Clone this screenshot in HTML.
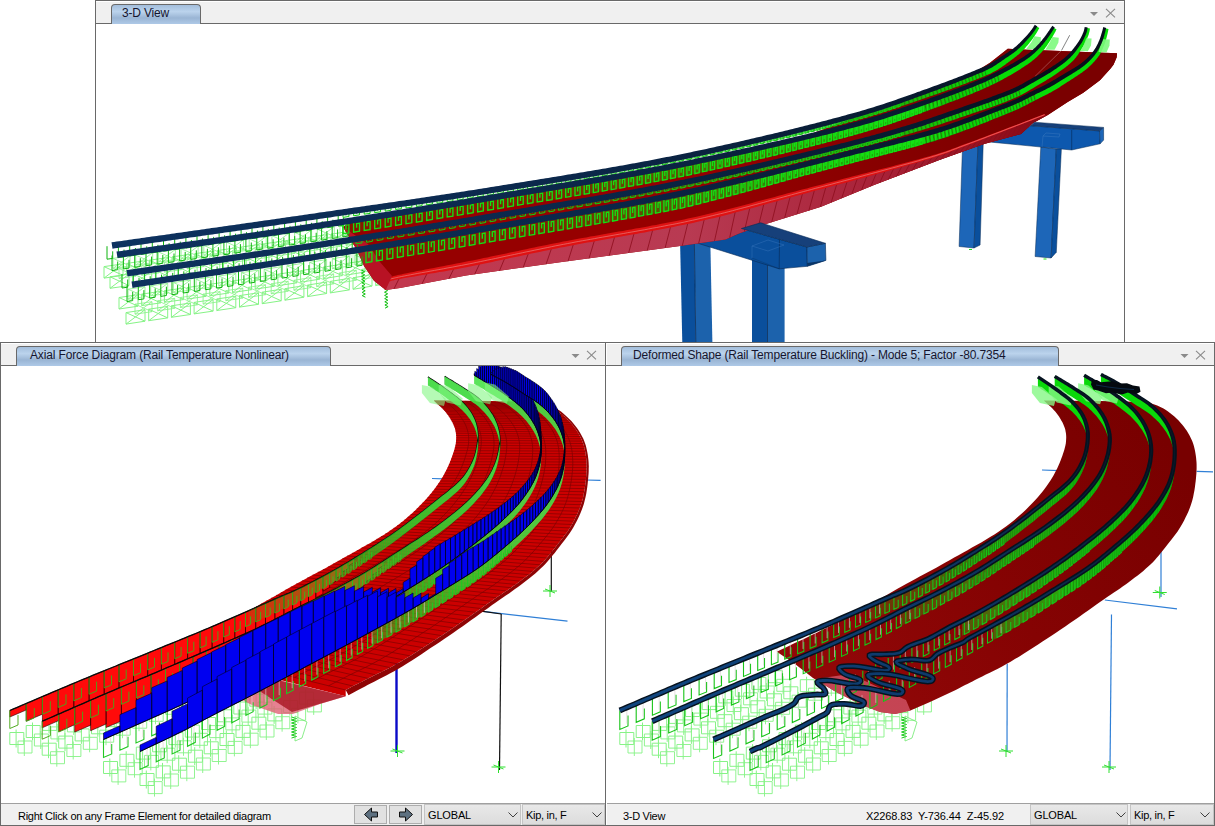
<!DOCTYPE html>
<html><head><meta charset="utf-8"><title>3-D View</title>
<style>
html,body{margin:0;padding:0;background:#fff;}
body{width:1215px;height:826px;overflow:hidden;position:relative;font-family:"Liberation Sans",sans-serif;}
.abs{position:absolute;}
.tbar{position:absolute;background:#f0f0f0;border-top:1px solid #fff;box-sizing:border-box;}
.line{position:absolute;background:#696969;}
.tab{position:absolute;box-sizing:border-box;height:20px;border:1px solid #696969;border-bottom:none;border-radius:4px 4px 0 0;
 background:linear-gradient(to bottom,#a3bedc 0%,#bbd3ec 35%,#9ab5d4 68%,#aec9e7 100%);
 font-size:12px;line-height:17px;color:#15152e;white-space:nowrap;}
.tab span{position:absolute;top:0;}
.sb{position:absolute;background:#f0f0f0;border-top:1px solid #a0a0a0;box-sizing:border-box;height:22px;font-size:11px;line-height:21px;color:#000;white-space:nowrap;}
.sb span{position:absolute;top:1.5px;}
.btn{position:absolute;box-sizing:border-box;background:#e1e1e1;border:1px solid #adadad;height:19px;top:1px;}
.combo{position:absolute;box-sizing:border-box;background:linear-gradient(#e8e8e8,#dcdcdc);border:1px solid #c4c4c4;height:21px;top:0px;font-size:11px;line-height:20px;}
.combo span{position:absolute;left:3px;top:0px;}
svg{position:absolute;left:0;top:0;}
</style></head>
<body>
<div class="tbar" style="left:96px;top:1px;width:1028px;height:22px;"></div>
<div class="line" style="left:95px;top:0;width:1030px;height:1px;"></div>
<div class="line" style="left:95px;top:0;width:1.4px;height:342px;"></div>
<div class="line" style="left:1124px;top:0;width:1px;height:342px;"></div>
<div class="line" style="left:96px;top:23px;width:1028px;height:1px;"></div>
<div class="tab" style="left:111px;top:4px;width:90px;"><span style="left:10px;letter-spacing:-0.18px;">3-D View</span></div>
<div class="tbar" style="left:1px;top:343px;width:604px;height:22px;"></div>
<div class="tbar" style="left:607px;top:343px;width:607px;height:22px;"></div>
<div class="line" style="left:0;top:342px;width:1215px;height:1px;"></div>
<div class="line" style="left:0;top:365px;width:1215px;height:1px;"></div>
<div class="line" style="left:0;top:342px;width:1.4px;height:484px;"></div>
<div class="line" style="left:605px;top:342px;width:1.4px;height:484px;"></div>
<div class="line" style="left:1214px;top:342px;width:1px;height:484px;"></div>
<div class="tab" style="left:16px;top:346px;width:315px;"><span style="left:13px;letter-spacing:-0.145px;">Axial Force Diagram (Rail Temperature Nonlinear)</span></div>
<div class="tab" style="left:621px;top:346px;width:438px;"><span style="left:11px;letter-spacing:-0.17px;">Deformed Shape (Rail Temperature Buckling) - Mode 5; Factor -80.7354</span></div>
<div class="sb" style="left:1px;top:803px;width:604px;"><span style="left:17px;letter-spacing:-0.27px;">Right Click on any Frame Element for detailed diagram</span><div class="btn" style="left:353px;width:33px;"></div><div class="btn" style="left:388px;width:33px;"></div><div class="combo" style="left:423px;width:97px;"><span style="letter-spacing:-0.17px;">GLOBAL</span></div><div class="combo" style="left:521px;width:83px;"><span style="letter-spacing:-0.29px;">Kip, in, F</span></div></div>
<div class="sb" style="left:607px;top:803px;width:607px;"><span style="left:16px;letter-spacing:-0.3px;">3-D View</span><span style="left:259px;letter-spacing:-0.1px;">X2268.83&nbsp; Y-736.44&nbsp; Z-45.92</span><div class="combo" style="left:423px;width:98px;"><span style="letter-spacing:-0.17px;">GLOBAL</span></div><div class="combo" style="left:523px;width:84px;"><span style="letter-spacing:-0.29px;">Kip, in, F</span></div></div>
<div class="line" style="left:0;top:825px;width:1215px;height:1px;"></div>
<svg width="1215" height="826" viewBox="0 0 1215 826">
<defs><clipPath id="ct"><rect x="97" y="24" width="1027" height="318"/></clipPath><clipPath id="cl"><rect x="2" y="366" width="603" height="437"/></clipPath><clipPath id="cr"><rect x="607" y="366" width="607" height="437"/></clipPath></defs>
<g clip-path="url(#ct)"><path d="M104.0 266.6L123.0 263.9V275.4L104.0 278.1ZM104.0 266.6L123.0 275.4M123.0 263.9L104.0 278.1M126.7 263.4L145.7 260.7V272.2L126.7 274.9ZM126.7 263.4L145.7 272.2M145.7 260.7L126.7 274.9M149.4 260.2L168.4 257.5V269.0L149.4 271.7ZM149.4 260.2L168.4 269.0M168.4 257.5L149.4 271.7M172.1 256.9L191.1 254.2V265.7L172.1 268.4ZM172.1 256.9L191.1 265.7M191.1 254.2L172.1 268.4M194.8 253.7L213.8 251.0V262.5L194.8 265.2ZM194.8 253.7L213.8 262.5M213.8 251.0L194.8 265.2M217.5 250.5L236.5 247.8V259.3L217.5 262.0ZM217.5 250.5L236.5 259.3M236.5 247.8L217.5 262.0M240.2 247.2L259.2 244.5V256.0L240.2 258.7ZM240.2 247.2L259.2 256.0M259.2 244.5L240.2 258.7M262.9 244.0L281.9 241.2V252.7L262.9 255.5ZM262.9 244.0L281.9 252.7M281.9 241.2L262.9 255.5M285.6 240.7L304.6 237.9V249.4L285.6 252.2ZM285.6 240.7L304.6 249.4M304.6 237.9L285.6 252.2M308.3 237.4L327.3 234.6V246.1L308.3 248.9ZM308.3 237.4L327.3 246.1M327.3 234.6L308.3 248.9M331.0 234.1L350.0 231.4V242.9L331.0 245.6ZM331.0 234.1L350.0 242.9M350.0 231.4L331.0 245.6" fill="none" stroke="#86f386" stroke-width="1" opacity="1"/><path d="M113.0 258.4L130.0 255.9V265.9L113.0 268.4ZM113.0 258.4L130.0 265.9M130.0 255.9L113.0 268.4M135.7 255.1L152.7 252.7V262.7L135.7 265.1ZM135.7 255.1L152.7 262.7M152.7 252.7L135.7 265.1M158.4 251.9L175.4 249.5V259.5L158.4 261.9ZM158.4 251.9L175.4 259.5M175.4 249.5L158.4 261.9M181.1 248.7L198.1 246.2V256.2L181.1 258.7ZM181.1 248.7L198.1 256.2M198.1 246.2L181.1 258.7M203.8 245.4L220.8 243.0V253.0L203.8 255.4ZM203.8 245.4L220.8 253.0M220.8 243.0L203.8 255.4M226.5 242.2L243.5 239.8V249.8L226.5 252.2ZM226.5 242.2L243.5 249.8M243.5 239.8L226.5 252.2M249.2 238.9L266.2 236.5V246.5L249.2 248.9ZM249.2 238.9L266.2 246.5M266.2 236.5L249.2 248.9M271.9 235.7L288.9 233.2V243.2L271.9 245.7ZM271.9 235.7L288.9 243.2M288.9 233.2L271.9 245.7M294.6 232.4L311.6 229.9V239.9L294.6 242.4ZM294.6 232.4L311.6 239.9M311.6 229.9L294.6 242.4M317.3 229.1L334.3 226.6V236.6L317.3 239.1ZM317.3 229.1L334.3 236.6M334.3 226.6L317.3 239.1M340.0 225.8L357.0 223.3V233.3L340.0 235.8ZM340.0 225.8L357.0 233.3M357.0 223.3L340.0 235.8" fill="none" stroke="#86f386" stroke-width="1" opacity="0.8"/><path d="M110.0 276.8L129.0 274.1V285.6L110.0 288.3ZM110.0 276.8L129.0 285.6M129.0 274.1L110.0 288.3M132.7 273.6L151.7 270.9V282.4L132.7 285.1ZM132.7 273.6L151.7 282.4M151.7 270.9L132.7 285.1M155.4 270.3L174.4 267.7V279.2L155.4 281.8ZM155.4 270.3L174.4 279.2M174.4 267.7L155.4 281.8M178.1 267.1L197.1 264.5V276.0L178.1 278.6ZM178.1 267.1L197.1 276.0M197.1 264.5L178.1 278.6M200.8 263.9L219.8 261.3V272.8L200.8 275.4ZM200.8 263.9L219.8 272.8M219.8 261.3L200.8 275.4M223.5 260.7L242.5 258.0V269.5L223.5 272.2ZM223.5 260.7L242.5 269.5M242.5 258.0L223.5 272.2M246.2 257.5L265.2 254.7V266.2L246.2 269.0ZM246.2 257.5L265.2 266.2M265.2 254.7L246.2 269.0M268.9 254.2L287.9 251.3V262.8L268.9 265.7ZM268.9 254.2L287.9 262.8M287.9 251.3L268.9 265.7M291.6 250.8L310.6 247.9V259.4L291.6 262.3ZM291.6 250.8L310.6 259.4M310.6 247.9L291.6 262.3M314.3 247.3L333.3 244.4V255.9L314.3 258.8ZM314.3 247.3L333.3 255.9M333.3 244.4L314.3 258.8M337.0 243.8L356.0 240.8V252.3L337.0 255.3ZM337.0 243.8L356.0 252.3M356.0 240.8L337.0 255.3M359.7 240.2L378.7 237.2V248.7L359.7 251.7ZM359.7 240.2L378.7 248.7M378.7 237.2L359.7 251.7" fill="none" stroke="#86f386" stroke-width="1" opacity="1"/><path d="M119.0 268.5L136.0 266.1V276.1L119.0 278.5ZM119.0 268.5L136.0 276.1M136.0 266.1L119.0 278.5M141.7 265.3L158.7 262.9V272.9L141.7 275.3ZM141.7 265.3L158.7 272.9M158.7 262.9L141.7 275.3M164.4 262.1L181.4 259.7V269.7L164.4 272.1ZM164.4 262.1L181.4 269.7M181.4 259.7L164.4 272.1M187.1 258.9L204.1 256.5V266.5L187.1 268.9ZM187.1 258.9L204.1 266.5M204.1 256.5L187.1 268.9M209.8 255.7L226.8 253.3V263.3L209.8 265.7ZM209.8 255.7L226.8 263.3M226.8 253.3L209.8 265.7M232.5 252.4L249.5 250.0V260.0L232.5 262.4ZM232.5 252.4L249.5 260.0M249.5 250.0L232.5 262.4M255.2 249.2L272.2 246.7V256.7L255.2 259.2ZM255.2 249.2L272.2 256.7M272.2 246.7L255.2 259.2M277.9 245.8L294.9 243.3V253.3L277.9 255.8ZM277.9 245.8L294.9 253.3M294.9 243.3L277.9 255.8M300.6 242.4L317.6 239.8V249.8L300.6 252.4ZM300.6 242.4L317.6 249.8M317.6 239.8L300.6 252.4M323.3 238.9L340.3 236.3V246.3L323.3 248.9ZM323.3 238.9L340.3 246.3M340.3 236.3L323.3 248.9M346.0 235.4L363.0 232.7V242.7L346.0 245.4ZM346.0 235.4L363.0 242.7M363.0 232.7L346.0 245.4" fill="none" stroke="#86f386" stroke-width="1" opacity="0.8"/><path d="M119.0 297.5L138.0 294.7V306.2L119.0 309.0ZM119.0 297.5L138.0 306.2M138.0 294.7L119.0 309.0M141.7 294.1L160.7 291.4V302.9L141.7 305.6ZM141.7 294.1L160.7 302.9M160.7 291.4L141.7 305.6M164.4 290.8L183.4 288.1V299.6L164.4 302.3ZM164.4 290.8L183.4 299.6M183.4 288.1L164.4 302.3M187.1 287.6L206.1 284.8V296.3L187.1 299.1ZM187.1 287.6L206.1 296.3M206.1 284.8L187.1 299.1M209.8 284.3L228.8 281.5V293.0L209.8 295.8ZM209.8 284.3L228.8 293.0M228.8 281.5L209.8 295.8M232.5 281.0L251.5 278.2V289.7L232.5 292.5ZM232.5 281.0L251.5 289.7M251.5 278.2L232.5 292.5M255.2 277.6L274.2 274.8V286.3L255.2 289.1ZM255.2 277.6L274.2 286.3M274.2 274.8L255.2 289.1M277.9 274.2L296.9 271.3V282.8L277.9 285.7ZM277.9 274.2L296.9 282.8M296.9 271.3L277.9 285.7M300.6 270.7L319.6 267.7V279.2L300.6 282.2ZM300.6 270.7L319.6 279.2M319.6 267.7L300.6 282.2M323.3 267.2L342.3 264.1V275.6L323.3 278.7ZM323.3 267.2L342.3 275.6M342.3 264.1L323.3 278.7M346.0 263.6L365.0 260.5V272.0L346.0 275.1ZM346.0 263.6L365.0 272.0M365.0 260.5L346.0 275.1M368.7 259.9L387.7 256.8V268.3L368.7 271.4ZM368.7 259.9L387.7 268.3M387.7 256.8L368.7 271.4" fill="none" stroke="#86f386" stroke-width="1" opacity="1"/><path d="M128.0 289.2L145.0 286.7V296.7L128.0 299.2ZM128.0 289.2L145.0 296.7M145.0 286.7L128.0 299.2M150.7 285.8L167.7 283.4V293.4L150.7 295.8ZM150.7 285.8L167.7 293.4M167.7 283.4L150.7 295.8M173.4 282.5L190.4 280.1V290.1L173.4 292.5ZM173.4 282.5L190.4 290.1M190.4 280.1L173.4 292.5M196.1 279.3L213.1 276.8V286.8L196.1 289.3ZM196.1 279.3L213.1 286.8M213.1 276.8L196.1 289.3M218.8 276.0L235.8 273.5V283.5L218.8 286.0ZM218.8 276.0L235.8 283.5M235.8 273.5L218.8 286.0M241.5 272.6L258.5 270.1V280.1L241.5 282.6ZM241.5 272.6L258.5 280.1M258.5 270.1L241.5 282.6M264.2 269.3L281.2 266.7V276.7L264.2 279.3ZM264.2 269.3L281.2 276.7M281.2 266.7L264.2 279.3M286.9 265.8L303.9 263.2V273.2L286.9 275.8ZM286.9 265.8L303.9 273.2M303.9 263.2L286.9 275.8M309.6 262.3L326.6 259.6V269.6L309.6 272.3ZM309.6 262.3L326.6 269.6M326.6 259.6L309.6 272.3M332.3 258.7L349.3 256.0V266.0L332.3 268.7ZM332.3 258.7L349.3 266.0M349.3 256.0L332.3 268.7M355.0 255.1L372.0 252.4V262.4L355.0 265.1ZM355.0 255.1L372.0 262.4M372.0 252.4L355.0 265.1" fill="none" stroke="#86f386" stroke-width="1" opacity="0.8"/><path d="M126.0 312.6L145.0 309.7V321.2L126.0 324.1ZM126.0 312.6L145.0 321.2M145.0 309.7L126.0 324.1M148.7 309.2L167.7 306.4V317.9L148.7 320.7ZM148.7 309.2L167.7 317.9M167.7 306.4L148.7 320.7M171.4 305.8L190.4 303.0V314.5L171.4 317.3ZM171.4 305.8L190.4 314.5M190.4 303.0L171.4 317.3M194.1 302.4L213.1 299.6V311.1L194.1 313.9ZM194.1 302.4L213.1 311.1M213.1 299.6L194.1 313.9M216.8 299.0L235.8 296.2V307.7L216.8 310.5ZM216.8 299.0L235.8 307.7M235.8 296.2L216.8 310.5M239.5 295.6L258.5 292.8V304.3L239.5 307.1ZM239.5 295.6L258.5 304.3M258.5 292.8L239.5 307.1M262.2 292.2L281.2 289.3V300.8L262.2 303.7ZM262.2 292.2L281.2 300.8M281.2 289.3L262.2 303.7M284.9 288.7L303.9 285.7V297.2L284.9 300.2ZM284.9 288.7L303.9 297.2M303.9 285.7L284.9 300.2M307.6 285.1L326.6 282.0V293.5L307.6 296.6ZM307.6 285.1L326.6 293.5M326.6 282.0L307.6 296.6M330.3 281.4L349.3 278.4V289.9L330.3 292.9ZM330.3 281.4L349.3 289.9M349.3 278.4L330.3 292.9M353.0 277.8L372.0 274.6V286.1L353.0 289.3ZM353.0 277.8L372.0 286.1M372.0 274.6L353.0 289.3M375.7 274.0L394.7 270.9V282.4L375.7 285.5ZM375.7 274.0L394.7 282.4M394.7 270.9L375.7 285.5" fill="none" stroke="#86f386" stroke-width="1" opacity="1"/><path d="M135.0 304.2L152.0 301.7V311.7L135.0 314.2ZM135.0 304.2L152.0 311.7M152.0 301.7L135.0 314.2M157.7 300.8L174.7 298.3V308.3L157.7 310.8ZM157.7 300.8L174.7 308.3M174.7 298.3L157.7 310.8M180.4 297.5L197.4 294.9V304.9L180.4 307.5ZM180.4 297.5L197.4 304.9M197.4 294.9L180.4 307.5M203.1 294.1L220.1 291.6V301.6L203.1 304.1ZM203.1 294.1L220.1 301.6M220.1 291.6L203.1 304.1M225.8 290.7L242.8 288.1V298.1L225.8 300.7ZM225.8 290.7L242.8 298.1M242.8 288.1L225.8 300.7M248.5 287.3L265.5 284.7V294.7L248.5 297.3ZM248.5 287.3L265.5 294.7M265.5 284.7L248.5 297.3M271.2 283.8L288.2 281.2V291.2L271.2 293.8ZM271.2 283.8L288.2 291.2M288.2 281.2L271.2 293.8M293.9 280.3L310.9 277.6V287.6L293.9 290.3ZM293.9 280.3L310.9 287.6M310.9 277.6L293.9 290.3M316.6 276.6L333.6 273.9V283.9L316.6 286.6ZM316.6 276.6L333.6 283.9M333.6 273.9L316.6 286.6M339.3 273.0L356.3 270.2V280.2L339.3 283.0ZM339.3 273.0L356.3 280.2M356.3 270.2L339.3 283.0M362.0 269.3L379.0 266.5V276.5L362.0 279.3ZM362.0 269.3L379.0 276.5M379.0 266.5L362.0 279.3" fill="none" stroke="#86f386" stroke-width="1" opacity="0.8"/><path d="M361.4 270 364.6 271.6 361.5 273.2 364.7 274.8 361.6 276.4 364.8 278 361.7 279.6 364.9 281.2 361.8 282.8 365 284.4 361.9 286 365.1 287.6 362 289.2 365.2 290.8 362.1 292.4 365.3 294 362.2 295.6 365.4 297.2" fill="none" stroke="#10c010" stroke-width="1"/><path d="M384.4 289 387.6 290.6 384.5 292.2 387.7 293.8 384.6 295.4 387.8 297 384.7 298.6 387.9 300.2 384.8 301.8 388 303.4 384.9 305 388.1 306.6 385 308.2" fill="none" stroke="#10c010" stroke-width="1"/><path d="M680.1 243 694.4 243 695.8 343 682.3 343.0Z" fill="#0a4f9c"/><path d="M694.4 242 710.4 245 712.4 343 695.8 343.0Z" fill="#1c62ac"/><path d="M694.4 244 695.8 343.0" fill="none" stroke="#062a55" stroke-width="0.8"/><path d="M752 258 767.5 262 767.5 343 752 343.0Z" fill="#0a4f9c"/><path d="M767.5 262 784.6 266 784.6 343 767.5 343.0Z" fill="#1c62ac"/><path d="M767.5 264 767.5 343.0" fill="none" stroke="#062a55" stroke-width="0.8"/><path d="M690 240 725.5 238 739 233.5 741.4 228.5 806.9 247 807.4 266.3 779.2 268.8 700.3 244.0Z" fill="#0a4f9c" stroke="#062a55" stroke-width="0.6"/><path d="M806.9 247 825.4 243.3 825.9 260.4 807.4 266.3Z" fill="#1c62ac" stroke="#062a55" stroke-width="0.6"/><path d="M807.4 266.3 825.9 260.4 807 263.0Z" fill="#0a3566"/><path d="M779.5 239.5 779.2 268.8" fill="none" stroke="#062a55" stroke-width="0.6"/><path d="M752 258 779.2 268.8" fill="none" stroke="#062a55" stroke-width="0.5" opacity="0.6"/><path d="M752 246 768 240 784 245 768 251 752 246 752 258.0" fill="none" stroke="#3b78bd" stroke-width="0.6" opacity="0.7"/><path d="M962.6 144 978 144 974 248 959.1 246.5Z" fill="#1d66b8" stroke="#062a55" stroke-width="0.5"/><path d="M978 144 983.2 144 980.1 245 974 248.0Z" fill="#0a4f9c" stroke="#062a55" stroke-width="0.5"/><path d="M1040.8 147 1056.3 149 1051.1 258 1035.1 256.5Z" fill="#1d66b8" stroke="#062a55" stroke-width="0.5"/><path d="M1056.3 149 1061.4 148.5 1056.3 252.3 1051.1 258.0Z" fill="#0a4f9c" stroke="#062a55" stroke-width="0.5"/><path d="M985 140 1026.4 128 1030.6 125.7 1099.5 130.9 1100.1 143.8 1071.7 150 991.5 142.2Z" fill="#0d58ae" stroke="#062a55" stroke-width="0.5"/><path d="M1099.5 130.9 1103.6 127.8 1103.6 140.1 1100.1 143.8Z" fill="#1d66b8" stroke="#062a55" stroke-width="0.5"/><path d="M1071.7 130 1071.7 150.0" fill="none" stroke="#062a55" stroke-width="0.6"/><path d="M1043 136 1046 133 1060 134 1059 137 1043 136 1042 147.0" fill="none" stroke="#3b78bd" stroke-width="0.6" opacity="0.8"/><path d="M969 249.5h3M1043.5 259h3" stroke="#20e020" stroke-width="1.2"/><path d="M343 227 351.9 220.4 354.4 220 356.9 219.7 359.4 219.3 361.9 218.9 364.3 218.5 366.8 218.1 369.3 217.7 371.8 217.3 374.3 216.9 376.8 216.5 379.3 216.1 381.8 215.7 384.3 215.3 386.8 214.9 389.3 214.5 391.8 214.1 394.3 213.7 396.8 213.3 399.3 212.8 401.8 212.4 404.3 212 406.8 211.6 409.3 211.2 411.8 210.8 414.3 210.4 416.8 210 419.3 209.6 421.8 209.2 424.3 208.8 426.8 208.4 429.3 208 431.8 207.5 434.3 207.1 436.8 206.7 439.3 206.3 441.8 205.9 444.3 205.5 446.8 205.1 449.3 204.7 451.8 204.2 454.3 203.8 456.8 203.4 459.2 203 461.7 202.6 464.2 202.2 466.7 201.8 469.2 201.4 471.7 200.9 474.2 200.5 476.7 200.1 479.1 199.7 481.6 199.3 484.1 198.9 486.6 198.4 489.1 198 491.5 197.6 494 197.2 496.5 196.8 499 196.4 501.4 196 503.9 195.5 506.4 195.1 508.9 194.7 511.4 194.3 513.9 193.9 516.4 193.5 518.8 193.1 521.3 192.7 523.8 192.2 526.3 191.8 528.8 191.4 531.3 191 533.8 190.6 536.3 190.2 538.7 189.8 541.2 189.4 543.7 189 546.2 188.5 548.7 188.1 551.2 187.7 553.7 187.3 556.1 186.9 558.6 186.5 561.1 186.1 563.6 185.7 566.1 185.3 568.6 184.8 571.1 184.4 573.5 184 576 183.6 578.5 183.2 581 182.8 583.5 182.4 585.9 181.9 588.4 181.5 590.9 181.1 593.4 180.7 595.8 180.3 598.3 179.8 600.8 179.4 603.3 179 605.7 178.6 608.2 178.1 610.7 177.7 613.1 177.3 615.6 176.8 618.1 176.4 620.5 176 623 175.5 625.5 175.1 627.9 174.7 630.4 174.2 632.8 173.8 635.3 173.3 637.7 172.9 640.2 172.4 642.6 172 645.1 171.5 647.5 171.1 650 170.6 652.4 170.2 654.9 169.7 657.3 169.2 659.7 168.8 662.2 168.3 664.6 167.8 667 167.4 669.5 166.9 671.9 166.4 674.3 165.9 676.7 165.5 679.2 165 681.6 164.5 684 164 686.5 163.5 689 163 691.6 162.5 694.1 161.9 696.7 161.4 699.2 160.9 701.8 160.3 704.4 159.8 707 159.2 709.6 158.7 712.2 158.1 714.8 157.6 717.4 157 720 156.5 722.7 155.9 725.3 155.3 727.9 154.8 730.6 154.2 733.2 153.6 735.9 153 738.5 152.5 741.2 151.9 743.8 151.3 746.5 150.7 749.1 150.1 751.8 149.5 754.4 148.9 757 148.3 759.7 147.8 762.3 147.2 764.9 146.6 767.5 146 770.2 145.4 772.8 144.8 775.4 144.2 777.9 143.6 780.5 143 783.1 142.4 785.6 141.8 788.2 141.2 790.7 140.6 793.2 140 795.8 139.4 798.3 138.8 882 107 884.5 106.2 887 105.4 889.4 104.6 891.7 103.8 894.1 103 896.4 102.2 898.7 101.4 900.9 100.6 903.1 99.8 905.3 99 907.5 98.2 909.7 97.5 911.9 96.7 914 95.9 916.2 95.1 918.3 94.3 920.5 93.6 922.6 92.8 924.8 92 927.4 91.1 930 90.1 932.5 89.2 935.1 88.3 937.6 87.3 940.2 86.4 942.7 85.5 945.1 84.5 947.6 83.6 950 82.7 952.4 81.8 954.7 80.9 957 80 959.2 79.1 961.4 78.2 963.5 77.4 965.6 76.6 967.6 75.8 969.5 75 971 74.4 990 62.8 1007.8 48.8 1117 53.2 1116.7 57.2 1113.5 64.7 1110.4 68.8 1100 80.2 1083.3 92.7 1067.7 102.1 1048.2 114.7 1033 123 1021 134 984 144 940 159.7 874 185 821 206.7 767.5 223.5 739 233.5 725.5 239.4 680 246 560 262.3 466 275.4 400 288 385.7 290 374 280.8 363.9 265.7 357.2 250.6Z" fill="#960000"/><linearGradient id="gd" gradientUnits="userSpaceOnUse" x1="700" y1="0" x2="1050" y2="0"><stop offset="0" stop-color="#7a0000" stop-opacity="0"/><stop offset="1" stop-color="#7a0000" stop-opacity="1"/></linearGradient><path d="M343 227 351.9 220.4 354.4 220 356.9 219.7 359.4 219.3 361.9 218.9 364.3 218.5 366.8 218.1 369.3 217.7 371.8 217.3 374.3 216.9 376.8 216.5 379.3 216.1 381.8 215.7 384.3 215.3 386.8 214.9 389.3 214.5 391.8 214.1 394.3 213.7 396.8 213.3 399.3 212.8 401.8 212.4 404.3 212 406.8 211.6 409.3 211.2 411.8 210.8 414.3 210.4 416.8 210 419.3 209.6 421.8 209.2 424.3 208.8 426.8 208.4 429.3 208 431.8 207.5 434.3 207.1 436.8 206.7 439.3 206.3 441.8 205.9 444.3 205.5 446.8 205.1 449.3 204.7 451.8 204.2 454.3 203.8 456.8 203.4 459.2 203 461.7 202.6 464.2 202.2 466.7 201.8 469.2 201.4 471.7 200.9 474.2 200.5 476.7 200.1 479.1 199.7 481.6 199.3 484.1 198.9 486.6 198.4 489.1 198 491.5 197.6 494 197.2 496.5 196.8 499 196.4 501.4 196 503.9 195.5 506.4 195.1 508.9 194.7 511.4 194.3 513.9 193.9 516.4 193.5 518.8 193.1 521.3 192.7 523.8 192.2 526.3 191.8 528.8 191.4 531.3 191 533.8 190.6 536.3 190.2 538.7 189.8 541.2 189.4 543.7 189 546.2 188.5 548.7 188.1 551.2 187.7 553.7 187.3 556.1 186.9 558.6 186.5 561.1 186.1 563.6 185.7 566.1 185.3 568.6 184.8 571.1 184.4 573.5 184 576 183.6 578.5 183.2 581 182.8 583.5 182.4 585.9 181.9 588.4 181.5 590.9 181.1 593.4 180.7 595.8 180.3 598.3 179.8 600.8 179.4 603.3 179 605.7 178.6 608.2 178.1 610.7 177.7 613.1 177.3 615.6 176.8 618.1 176.4 620.5 176 623 175.5 625.5 175.1 627.9 174.7 630.4 174.2 632.8 173.8 635.3 173.3 637.7 172.9 640.2 172.4 642.6 172 645.1 171.5 647.5 171.1 650 170.6 652.4 170.2 654.9 169.7 657.3 169.2 659.7 168.8 662.2 168.3 664.6 167.8 667 167.4 669.5 166.9 671.9 166.4 674.3 165.9 676.7 165.5 679.2 165 681.6 164.5 684 164 686.5 163.5 689 163 691.6 162.5 694.1 161.9 696.7 161.4 699.2 160.9 701.8 160.3 704.4 159.8 707 159.2 709.6 158.7 712.2 158.1 714.8 157.6 717.4 157 720 156.5 722.7 155.9 725.3 155.3 727.9 154.8 730.6 154.2 733.2 153.6 735.9 153 738.5 152.5 741.2 151.9 743.8 151.3 746.5 150.7 749.1 150.1 751.8 149.5 754.4 148.9 757 148.3 759.7 147.8 762.3 147.2 764.9 146.6 767.5 146 770.2 145.4 772.8 144.8 775.4 144.2 777.9 143.6 780.5 143 783.1 142.4 785.6 141.8 788.2 141.2 790.7 140.6 793.2 140 795.8 139.4 798.3 138.8 882 107 884.5 106.2 887 105.4 889.4 104.6 891.7 103.8 894.1 103 896.4 102.2 898.7 101.4 900.9 100.6 903.1 99.8 905.3 99 907.5 98.2 909.7 97.5 911.9 96.7 914 95.9 916.2 95.1 918.3 94.3 920.5 93.6 922.6 92.8 924.8 92 927.4 91.1 930 90.1 932.5 89.2 935.1 88.3 937.6 87.3 940.2 86.4 942.7 85.5 945.1 84.5 947.6 83.6 950 82.7 952.4 81.8 954.7 80.9 957 80 959.2 79.1 961.4 78.2 963.5 77.4 965.6 76.6 967.6 75.8 969.5 75 971 74.4 990 62.8 1007.8 48.8 1117 53.2 1116.7 57.2 1113.5 64.7 1110.4 68.8 1100 80.2 1083.3 92.7 1067.7 102.1 1048.2 114.7 1033 123 1021 134 984 144 940 159.7 874 185 821 206.7 767.5 223.5 739 233.5 725.5 239.4 680 246 560 262.3 466 275.4 400 288 385.7 290 374 280.8 363.9 265.7 357.2 250.6Z" fill="url(#gd)"/><linearGradient id="gw" gradientUnits="userSpaceOnUse" x1="400" y1="0" x2="1040" y2="0"><stop offset="0" stop-color="#c2384e"/><stop offset="0.45" stop-color="#b83a52"/><stop offset="0.75" stop-color="#a82238"/><stop offset="1" stop-color="#8a0a14"/></linearGradient><path d="M388 279.5 389.3 279.2 390.6 278.9 391.8 278.7 393 278.4 394.2 278.1 395.4 277.8 396.8 277.5 398.2 277.2 399.8 276.9 401.6 276.5 404.3 276 407.3 275.4 410.5 274.8 414.1 274.1 417.8 273.4 421.7 272.7 425.8 272 430.1 271.2 434.4 270.4 438.9 269.6 443.4 268.8 447.9 267.9 452.5 267.1 457 266.2 461.6 265.4 466 264.5 469.6 263.8 473.2 263.1 476.8 262.3 480.4 261.6 484.1 260.8 487.9 260 491.6 259.3 495.4 258.5 499.2 257.7 503 256.8 506.9 256 510.8 255.2 514.7 254.4 518.7 253.5 522.7 252.7 526.7 251.8 530.8 251 534.9 250.1 539 249.3 543.1 248.4 547.3 247.6 551.5 246.7 555.7 245.8 560 245 563.7 244.3 567.4 243.6 571.1 242.9 575 242.1 578.8 241.4 582.7 240.7 586.7 240 590.7 239.3 594.7 238.6 598.7 237.8 602.8 237.1 606.9 236.4 611 235.7 615.2 234.9 619.3 234.2 623.5 233.5 627.6 232.7 631.8 232 635.9 231.3 640.1 230.5 644.3 229.8 648.4 229 652.5 228.2 656.6 227.5 660.7 226.7 664.8 225.9 668.8 225.1 672.8 224.4 676.8 223.6 680.7 222.8 684.6 222 688.5 221.1 692.3 220.3 696 219.5 700.3 218.5 704.4 217.6 708.6 216.6 712.7 215.6 716.7 214.6 720.7 213.7 724.7 212.7 728.6 211.7 732.6 210.7 736.5 209.6 740.3 208.6 744.2 207.6 748.1 206.6 751.9 205.5 755.8 204.5 759.7 203.4 763.6 202.4 767.5 201.3 771.4 200.2 775.4 199.2 779.4 198.1 783.4 197 787.5 195.9 791.6 194.8 795.8 193.6 800 192.5 803.7 191.5 807.5 190.5 811.4 189.5 815.3 188.4 819.4 187.4 823.5 186.3 827.7 185.2 831.9 184.1 836.2 182.9 840.5 181.8 844.9 180.6 849.3 179.5 853.7 178.3 858 177.2 862.4 176 866.8 174.8 871.1 173.7 875.5 172.5 879.7 171.4 884 170.2 888.1 169.1 892.2 168 896.3 166.9 900.2 165.8 904.1 164.7 907.9 163.7 911.5 162.7 915.1 161.7 918.5 160.7 921.8 159.7 925 158.8 928 157.9 930.8 157.1 933.5 156.3 936 155.5 939.6 154.3 942.8 153.3 945.5 152.4 948.1 151.5 950.5 150.6 952.8 149.7 955.2 148.8 957.8 147.8 960.7 146.7 964 145.5 966.9 144.4 970.1 143.2 973.3 142 976.8 140.7 980.3 139.4 984 138 987.8 136.5 991.7 135 995.7 133.5 999.7 132 1003.8 130.4 1007.9 128.8 1012.1 127.2 1016.3 125.6 1020.4 124 1024.6 122.4 1028.7 120.8 1032.8 119.3 1036.8 117.7 1040.8 116.2 1044.7 114.7 1048.2 114.7 1033 123 1021 134 984 144 940 159.7 874 185 821 206.7 767.5 223.5 739 233.5 725.5 239.4 680 246 560 262.3 466 275.4 400 288 385.7 290.0Z" fill="url(#gw)"/><path d="M400.0 276.8L394.0 288.8M428.0 271.6L422.0 283.8M454.9 266.6L448.9 278.7M480.7 261.5L474.7 274.2M505.5 256.3L499.5 270.7M529.2 251.3L523.2 267.4M552.1 246.6L546.1 264.2M574.0 242.3L568.0 261.2M595.0 238.5L589.0 258.4M615.2 234.9L609.2 255.6M634.6 231.5L628.6 253.0M653.2 228.1L647.2 250.5M671.1 224.7L665.1 248.0M688.3 221.2L682.3 245.7M704.7 217.5L698.7 243.3M720.5 213.7L714.5 241.0M735.7 209.8L729.7 237.6M750.3 206.0L744.3 231.6M764.3 202.2L758.3 226.7M777.7 198.5L771.7 222.2M790.6 195.0L784.6 218.1M803.0 191.7L797.0 214.2M814.9 188.6L808.9 210.5M826.3 185.6L820.3 206.9M837.2 182.7L831.2 202.5M847.7 179.9L841.7 198.2M857.8 177.2L851.8 194.1M867.5 174.6L861.5 190.1M876.8 172.2L870.8 186.3M885.7 169.8L879.7 182.8M894.3 167.4L888.3 179.5M902.5 165.2L896.5 176.4M910.4 163.0L904.4 173.3M918.1 160.8L912.1 170.4M925.6 158.7L919.6 167.5M932.8 156.5L926.8 164.8M939.8 154.3L933.8 162.1M946.6 152.0L940.6 159.5M953.1 149.6L947.1 157.2M959.5 147.2L953.5 154.9M965.7 144.9L959.7 152.7M971.6 142.7L965.6 150.6M977.4 140.5L971.4 148.5M983.0 138.3L977.0 146.5M988.5 136.3L982.5 144.5M993.8 134.2L987.8 143.0M998.9 132.3L992.9 141.6M1003.8 130.4L997.8 140.3M1008.6 128.5L1002.6 139.0M1013.3 126.7L1007.3 137.7M1017.8 125.0L1011.8 136.5M1022.2 123.3L1016.2 135.3M1026.4 121.7L1020.4 134.2" stroke="#8c0c1c" stroke-width="0.8" fill="none"/><path d="M388.4 281.5 389.8 281.2 391 280.9 392.2 280.6 393.4 280.4 394.6 280.1 395.9 279.8 397.2 279.6 398.7 279.3 400.3 279 402 278.6 404.7 278.1 407.7 277.6 411 277 414.5 276.4 418.2 275.7 422.1 275.1 426.3 274.4 430.5 273.6 434.9 272.9 439.3 272.1 443.9 271.4 448.4 270.6 453 269.8 457.6 268.9 462.1 268.1 466.5 267.2 470.1 266.5 473.7 265.8 477.3 265 481 264.3 484.7 263.5 488.4 262.7 492.2 261.9 495.9 261.1 499.8 260.3 503.6 259.5 507.5 258.7 511.4 257.8 515.3 257 519.3 256.2 523.3 255.3 527.3 254.5 531.3 253.6 535.4 252.8 539.5 251.9 543.7 251 547.8 250.2 552 249.3 556.3 248.5 560.5 247.6 564.2 246.9 567.9 246.2 571.6 245.5 575.5 244.8 579.3 244.1 583.2 243.3 587.2 242.6 591.1 241.9 595.2 241.2 599.2 240.5 603.3 239.7 607.4 239 611.5 238.3 615.6 237.6 619.8 236.8 623.9 236.1 628.1 235.3 632.2 234.6 636.4 233.9 640.6 233.1 644.7 232.4 648.9 231.6 653 230.8 657.1 230.1 661.2 229.3 665.3 228.5 669.3 227.7 673.3 226.9 677.3 226.1 681.2 225.3 685.1 224.5 689 223.7 692.8 222.9 696.6 222.1 700.8 221.1 705 220.1 709.2 219.1 713.3 218.2 717.3 217.2 721.4 216.2 725.3 215.2 729.3 214.2 733.2 213.1 737.1 212.1 741 211.1 744.8 210 748.7 209 752.6 207.9 756.4 206.9 760.3 205.8 764.2 204.7 768.1 203.6 772 202.5 776 201.4 780 200.3 784 199.2 788.1 198.1 792.2 197 796.4 195.8 800.6 194.7 804.3 193.7 808 192.7 811.9 191.6 815.9 190.6 819.9 189.5 824.1 188.4 828.2 187.3 832.5 186.1 836.8 185 841.1 183.8 845.4 182.7 849.8 181.5 854.2 180.3 858.6 179.1 862.9 177.9 867.3 176.8 871.6 175.5 875.9 174.3 880.2 173.1 884.4 172 888.6 170.8 892.7 169.6 896.7 168.5 900.7 167.3 904.5 166.2 908.3 165.1 911.9 164.1 915.5 163 918.9 162 922.2 161 925.3 160.1 928.3 159.2 931.2 158.3 933.8 157.4 936.3 156.6 940 155.4 943.1 154.3 945.9 153.4 948.4 152.4 950.8 151.5 953.2 150.6 955.6 149.7 958.2 148.7 961.1 147.6 964.3 146.4 967.3 145.3 970.4 144.1 973.7 142.9 977.1 141.5 980.7 140.2 984.3 138.8 988.1 137.3 992 135.8 996 134.3 1000 132.7 1004.1 131.1 1008.2 129.5 1012.4 127.9 1016.5 126.3 1020.7 124.7 1024.8 123 1029 121.4 1033 119.9 1037.1 118.3 1041 116.8 1044.9 115.3 1044.5 114.1 1040.6 115.6 1036.6 117.1 1032.6 118.6 1028.5 120.2 1024.3 121.8 1020.2 123.4 1016 124.9 1011.8 126.5 1007.7 128.1 1003.5 129.7 999.4 131.2 995.4 132.8 991.4 134.3 987.5 135.7 983.7 137.2 980 138.6 976.5 139.9 973 141.2 969.7 142.4 966.6 143.5 963.7 144.6 960.4 145.8 957.5 146.9 954.9 147.9 952.5 148.8 950.1 149.7 947.7 150.5 945.2 151.4 942.4 152.3 939.3 153.3 935.7 154.4 933.1 155.1 930.5 155.9 927.6 156.7 924.6 157.6 921.4 158.5 918.1 159.4 914.7 160.3 911.2 161.3 907.5 162.3 903.7 163.3 899.8 164.3 895.9 165.3 891.8 166.4 887.7 167.4 883.5 168.5 879.3 169.6 875 170.7 870.6 171.8 866.3 172.9 861.9 174.1 857.5 175.2 853.1 176.3 848.7 177.5 844.4 178.6 840 179.8 835.7 180.9 831.4 182 827.1 183.1 823 184.2 818.8 185.3 814.8 186.3 810.8 187.3 806.9 188.4 803.1 189.3 799.4 190.3 795.2 191.4 791 192.5 786.9 193.6 782.8 194.7 778.7 195.8 774.7 196.9 770.8 197.9 766.8 199 762.9 200 759 201.1 755.2 202.1 751.3 203.2 747.4 204.2 743.6 205.2 739.7 206.2 735.8 207.2 731.9 208.2 728 209.2 724.1 210.2 720.1 211.1 716.1 212.1 712.1 213.1 708 214.1 703.9 215 699.7 216 695.4 216.9 691.7 217.8 687.9 218.6 684.1 219.4 680.2 220.2 676.3 221 672.3 221.8 668.3 222.6 664.3 223.3 660.2 224.1 656.1 224.9 652 225.6 647.9 226.4 643.8 227.2 639.6 227.9 635.5 228.6 631.3 229.4 627.2 230.1 623 230.9 618.8 231.6 614.7 232.3 610.6 233 606.4 233.8 602.3 234.5 598.3 235.2 594.2 235.9 590.2 236.6 586.2 237.4 582.3 238.1 578.3 238.8 574.5 239.5 570.6 240.2 566.9 240.9 563.1 241.6 559.5 242.4 555.2 243.2 551 244.1 546.8 244.9 542.6 245.8 538.4 246.6 534.3 247.5 530.2 248.3 526.2 249.2 522.1 250 518.1 250.9 514.2 251.7 510.2 252.5 506.3 253.4 502.5 254.2 498.6 255 494.8 255.8 491 256.6 487.3 257.4 483.6 258.1 479.9 258.9 476.2 259.7 472.6 260.4 469 261.1 465.5 261.8 461 262.7 456.5 263.5 452 264.4 447.4 265.3 442.9 266.2 438.4 267.1 434 267.9 429.6 268.8 425.4 269.6 421.3 270.4 417.4 271.1 413.6 271.9 410.1 272.6 406.9 273.2 403.9 273.8 401.2 274.4 399.4 274.8 397.8 275.1 396.3 275.5 395 275.8 393.7 276.1 392.5 276.4 391.3 276.7 390.1 276.9 388.9 277.2 387.6 277.5Z" fill="#df1212"/><path d="M388 279.5 389.3 279.2 390.6 278.9 391.8 278.7 393 278.4 394.2 278.1 395.4 277.8 396.8 277.5 398.2 277.2 399.8 276.9 401.6 276.5 404.3 276 407.3 275.4 410.5 274.8 414.1 274.1 417.8 273.4 421.7 272.7 425.8 272 430.1 271.2 434.4 270.4 438.9 269.6 443.4 268.8 447.9 267.9 452.5 267.1 457 266.2 461.6 265.4 466 264.5 469.6 263.8 473.2 263.1 476.8 262.3 480.4 261.6 484.1 260.8 487.9 260 491.6 259.3 495.4 258.5 499.2 257.7 503 256.8 506.9 256 510.8 255.2 514.7 254.4 518.7 253.5 522.7 252.7 526.7 251.8 530.8 251 534.9 250.1 539 249.3 543.1 248.4 547.3 247.6 551.5 246.7 555.7 245.8 560 245 563.7 244.3 567.4 243.6 571.1 242.9 575 242.1 578.8 241.4 582.7 240.7 586.7 240 590.7 239.3 594.7 238.6 598.7 237.8 602.8 237.1 606.9 236.4 611 235.7 615.2 234.9 619.3 234.2 623.5 233.5 627.6 232.7 631.8 232 635.9 231.3 640.1 230.5 644.3 229.8 648.4 229 652.5 228.2 656.6 227.5 660.7 226.7 664.8 225.9 668.8 225.1 672.8 224.4 676.8 223.6 680.7 222.8 684.6 222 688.5 221.1 692.3 220.3 696 219.5 700.3 218.5 704.4 217.6 708.6 216.6 712.7 215.6 716.7 214.6 720.7 213.7 724.7 212.7 728.6 211.7 732.6 210.7 736.5 209.6 740.3 208.6 744.2 207.6 748.1 206.6 751.9 205.5 755.8 204.5 759.7 203.4 763.6 202.4 767.5 201.3 771.4 200.2 775.4 199.2 779.4 198.1 783.4 197 787.5 195.9 791.6 194.8 795.8 193.6 800 192.5 803.7 191.5 807.5 190.5 811.4 189.5 815.3 188.4 819.4 187.4 823.5 186.3 827.7 185.2 831.9 184.1 836.2 182.9 840.5 181.8 844.9 180.6 849.3 179.5 853.7 178.3 858 177.2 862.4 176 866.8 174.8 871.1 173.7 875.5 172.5 879.7 171.4 884 170.2 888.1 169.1 892.2 168 896.3 166.9 900.2 165.8 904.1 164.7 907.9 163.7 911.5 162.7 915.1 161.7 918.5 160.7 921.8 159.7 925 158.8 928 157.9 930.8 157.1 933.5 156.3 936 155.5 939.6 154.3 942.8 153.3 945.5 152.4 948.1 151.5 950.5 150.6 952.8 149.7 955.2 148.8 957.8 147.8 960.7 146.7 964 145.5 966.9 144.4 970.1 143.2 973.3 142 976.8 140.7 980.3 139.4 984 138 987.8 136.5 991.7 135 995.7 133.5 999.7 132 1003.8 130.4 1007.9 128.8 1012.1 127.2 1016.3 125.6 1020.4 124 1024.6 122.4 1028.7 120.8 1032.8 119.3 1036.8 117.7 1040.8 116.2 1044.7 114.7" fill="none" stroke="#ea8c8c" stroke-width="0.7" opacity="0.85"/><path d="M741.4 228.5 760.7 222.8 825.4 243.3 806.9 247.0Z" fill="#16407a" stroke="#062a55" stroke-width="0.6"/><path d="M1030.6 125.7 1034.5 122.2 1103.6 127.4 1099.5 130.9Z" fill="#16407a" stroke="#062a55" stroke-width="0.5"/><path d="M343 227 357.2 250.6 363.9 265.7 374 280.8 385.7 290 392 276 380 262 368 244.0Z" fill="#b81224"/><linearGradient id="gg" gradientUnits="userSpaceOnUse" x1="350" y1="0" x2="980" y2="0"><stop offset="0" stop-color="#08d008" stop-opacity="0.1"/><stop offset="0.3" stop-color="#08d008" stop-opacity="0.16"/><stop offset="0.6" stop-color="#08d008" stop-opacity="0.55"/><stop offset="1" stop-color="#06dc06" stop-opacity="1"/></linearGradient><path d="M344.6 212.1 347.1 211.8 349.6 211.4 352.1 211.1 354.6 210.7 357.1 210.3 359.6 210 362 209.6 364.5 209.3 367 208.9 369.5 208.5 372 208.2 374.5 207.8 377 207.4 379.5 207.1 382 206.7 384.5 206.4 387 206 389.5 205.6 392 205.3 394.5 204.9 397 204.5 399.5 204.2 402 203.8 404.5 203.4 406.9 203.1 409.4 202.7 411.9 202.3 414.4 202 416.9 201.6 419.4 201.2 421.9 200.9 424.4 200.5 426.9 200.1 429.4 199.7 431.9 199.4 434.4 199 436.9 198.6 439.4 198.2 441.9 197.9 444.4 197.5 446.8 197.1 449.3 196.7 451.8 196.3 454.3 196 456.8 195.6 459.3 195.2 461.8 194.8 464.3 194.4 466.7 194 469.2 193.6 471.7 193.3 474.2 192.9 476.7 192.5 479.1 192.1 481.6 191.7 484.1 191.3 486.6 190.9 489.1 190.5 491.5 190.1 494 189.7 496.5 189.3 499 188.9 501.5 188.5 503.9 188.1 506.4 187.7 508.9 187.3 511.4 186.9 513.9 186.5 516.4 186.1 518.9 185.7 521.3 185.3 523.8 184.9 526.3 184.5 528.8 184.1 531.3 183.7 533.8 183.3 536.3 182.9 538.8 182.5 541.2 182.1 543.7 181.7 546.2 181.3 548.7 180.9 551.2 180.5 553.7 180.1 556.2 179.6 558.7 179.2 561.1 178.8 563.6 178.4 566.1 178 568.6 177.6 571.1 177.2 573.6 176.8 576 176.4 578.5 176 581 175.5 583.5 175.1 586 174.7 588.4 174.3 590.9 173.9 593.4 173.4 595.9 173 598.3 172.6 600.8 172.2 603.3 171.7 605.8 171.3 608.2 170.9 610.7 170.4 613.2 170 615.6 169.6 618.1 169.1 620.6 168.7 623 168.3 625.5 167.8 627.9 167.4 630.4 166.9 632.9 166.5 635.3 166 637.8 165.6 640.2 165.1 642.7 164.7 645.1 164.2 647.6 163.7 650 163.3 652.4 162.8 654.9 162.3 657.3 161.9 659.8 161.4 662.2 160.9 664.6 160.4 667.1 159.9 669.5 159.5 671.9 159 674.3 158.5 676.8 158 679.2 157.5 681.6 157 684 156.5 686.5 156 689 155.4 691.6 154.9 694.1 154.4 696.7 153.8 699.2 153.3 701.8 152.7 704.4 152.2 707 151.6 709.6 151 712.2 150.5 714.8 149.9 717.4 149.3 720.1 148.7 722.7 148.1 725.3 147.5 728 146.9 730.6 146.3 733.3 145.7 735.9 145.1 738.6 144.5 741.2 143.9 743.8 143.3 746.5 142.7 749.1 142.1 751.8 141.5 754.4 140.9 757.1 140.2 759.7 139.6 762.3 139 764.9 138.4 767.6 137.7 770.2 137.1 772.8 136.5 775.4 135.9 778 135.2 780.5 134.6 783.1 134 785.7 133.4 788.2 132.7 790.7 132.1 793.3 131.5 795.8 130.9 798.3 130.2 800.8 129.6 803.2 129 805.7 128.4 808.1 127.8 810.5 127.1 812.9 126.5 815.3 125.9 817.7 125.3 820 124.7 822.3 124.1 824.6 123.5 826.9 122.9 829.2 122.3 831.4 121.7 833.6 121.1 835.8 120.5 838 119.9 840.1 119.4 842.2 118.8 844.3 118.2 846.4 117.6 848.4 117.1 850.4 116.5 852.4 116 854.3 115.4 856.3 114.9 858.1 114.3 860 113.8 863 112.9 865.9 112.1 868.7 111.2 871.5 110.4 874.2 109.5 876.9 108.7 879.5 107.9 882 107 884.5 106.2 887 105.4 889.4 104.6 891.7 103.8 894.1 103 896.4 102.2 898.7 101.4 900.9 100.6 903.1 99.8 905.3 99 907.5 98.2 909.7 97.5 911.9 96.7 914 95.9 916.2 95.1 918.3 94.3 920.5 93.6 922.6 92.8 924.8 92 927.4 91.1 930 90.1 932.5 89.2 935.1 88.3 937.6 87.3 940.2 86.4 942.7 85.5 945.1 84.5 947.6 83.6 950 82.7 952.4 81.8 954.7 80.9 957 80 959.2 79.1 961.4 78.2 963.5 77.4 965.6 76.6 967.6 75.8 969.5 75 971 74.4 972.5 73.8 973.9 73.2 975.3 72.7 976.7 72.1 978 71.6 979.3 71 980.6 70.5 981.8 70 983.1 69.4 984.2 68.9 985.4 68.4 986.6 67.8 987.7 67.3 988.9 66.7 990 66.1 990.9 65.6 991.8 65.1 992.7 64.6 993.6 64.1 994.4 63.5 995.2 63 996 62.5 996.8 61.9 997.6 61.4 998.4 60.9 999.2 60.3 1000 59.8 1000.8 59.2 1001.6 58.7 1002.4 58.1 1003.2 57.6 1004 57 1004.9 56.5 1005.7 55.9 1006.6 55.4 1007.4 54.8 1008.2 54.3 1009.1 53.7 1009.9 53.1 1010.8 52.6 1011.6 52 1012.4 51.4 1013.2 50.8 1014 50.2 1014.8 49.6 1015.6 49 1016.3 48.4 1017 47.8 1017.7 47.2 1018.3 46.6 1019 46 1019.6 45.4 1020.3 44.7 1020.9 44.1 1021.5 43.5 1022.2 42.8 1022.8 42.2 1023.4 41.6 1023.9 41 1024.5 40.3 1025.1 39.7 1025.7 39.1 1026.2 38.5 1026.7 38 1027.1 37.5 1027.6 37 1028 36.5 1028.5 35.9 1028.9 35.4 1029.3 34.9 1029.8 34.4 1030.2 33.9 1030.6 33.4 1031 32.9 1031.4 32.5 1031.7 32 1032.1 31.5 1032.5 31.1 1032.8 30.6 1033 30.3 1033.3 29.9 1033.5 29.6 1033.7 29.3 1033.9 29 1034.1 28.7 1034.3 28.4 1034.5 28 1034.7 27.7 1034.9 27.4 1035.1 27.1 1035.3 26.8 1035.5 26.5 1035.7 26.2 1035.9 25.9 1039.3 28.1 1039.1 28.4 1038.9 28.7 1038.8 29 1038.6 29.3 1038.4 29.6 1038.3 30 1038.1 30.3 1037.9 30.6 1037.7 31 1037.5 31.3 1037.3 31.7 1037.1 32.1 1036.9 32.5 1036.6 32.8 1036.4 33.2 1036 33.8 1035.7 34.3 1035.4 34.8 1035 35.3 1034.6 35.9 1034.3 36.4 1033.9 37 1033.5 37.5 1033.1 38.1 1032.7 38.7 1032.3 39.2 1031.9 39.8 1031.4 40.4 1031 40.9 1030.6 41.5 1030.1 42.1 1029.6 42.8 1029.1 43.4 1028.6 44.1 1028 44.7 1027.4 45.4 1026.8 46.1 1026.2 46.8 1025.6 47.5 1025 48.2 1024.3 48.9 1023.7 49.6 1023 50.3 1022.3 51 1021.6 51.6 1020.9 52.3 1020.2 53 1019.4 53.7 1018.6 54.4 1017.7 55.1 1016.9 55.8 1016.1 56.5 1015.2 57.1 1014.4 57.8 1013.5 58.4 1012.7 59.1 1011.8 59.7 1011 60.3 1010.2 60.9 1009.4 61.5 1008.6 62.1 1007.8 62.7 1007 63.2 1006.2 63.8 1005.5 64.4 1004.7 65 1004 65.6 1003.2 66.1 1002.4 66.6 1001.5 67.2 1000.7 67.7 999.9 68.3 999 68.8 998.1 69.4 997.2 69.9 996.2 70.5 995.3 71 994.3 71.6 993.2 72.1 992 72.8 990.8 73.4 989.5 74 988.3 74.5 987 75.1 985.8 75.6 984.5 76.2 983.2 76.7 981.9 77.2 980.5 77.7 979.2 78.3 977.8 78.8 976.4 79.3 975 79.9 973.5 80.5 972 81.1 970 81.8 968 82.6 965.9 83.4 963.7 84.2 961.5 85.1 959.3 85.9 957 86.8 954.6 87.6 952.2 88.5 949.8 89.4 947.3 90.3 944.8 91.2 942.3 92.1 939.7 93 937.2 93.9 934.6 94.8 932 95.7 929.4 96.6 926.8 97.5 924.6 98.3 922.4 99 920.3 99.8 918.1 100.5 916 101.3 913.8 102 911.6 102.8 909.4 103.5 907.2 104.3 905 105 902.7 105.8 900.5 106.6 898.2 107.4 895.9 108.1 893.5 108.9 891.1 109.7 888.7 110.5 886.2 111.3 883.7 112.2 881.1 113 878.5 113.8 875.8 114.6 873 115.4 870.2 116.3 867.4 117.1 864.5 118 861.5 118.8 859.6 119.3 857.7 119.9 855.8 120.4 853.8 120.9 851.8 121.5 849.8 122 847.7 122.6 845.7 123.1 843.6 123.7 841.5 124.3 839.3 124.8 837.1 125.4 834.9 126 832.7 126.6 830.5 127.1 828.2 127.7 825.9 128.3 823.6 128.9 821.3 129.5 818.9 130.1 816.5 130.7 814.1 131.3 811.7 131.9 809.3 132.5 806.9 133.1 804.4 133.7 801.9 134.3 799.4 134.9 796.9 135.5 794.4 136.1 791.9 136.7 789.3 137.3 786.8 137.9 784.2 138.5 781.6 139.1 779.1 139.8 776.5 140.4 773.9 141 771.2 141.6 768.6 142.2 766 142.8 763.4 143.4 760.7 144 758.1 144.6 755.4 145.2 752.8 145.8 750.1 146.4 747.5 147 744.8 147.6 742.2 148.2 739.5 148.8 736.9 149.4 734.2 150 731.6 150.6 728.9 151.1 726.3 151.7 723.6 152.3 721 152.9 718.3 153.4 715.7 154 713.1 154.6 710.5 155.1 707.9 155.7 705.3 156.2 702.7 156.8 700.1 157.3 697.5 157.8 695 158.4 692.4 158.9 689.9 159.4 687.3 159.9 684.8 160.4 682.4 160.9 680 161.4 677.6 161.9 675.1 162.4 672.7 162.9 670.3 163.4 667.8 163.9 665.4 164.4 663 164.9 660.5 165.4 658.1 165.9 655.7 166.3 653.2 166.8 650.8 167.3 648.3 167.8 645.9 168.2 643.4 168.7 641 169.2 638.5 169.6 636.1 170.1 633.6 170.6 631.1 171 628.7 171.5 626.2 171.9 623.8 172.4 621.3 172.8 618.8 173.3 616.4 173.7 613.9 174.2 611.4 174.6 609 175 606.5 175.5 604 175.9 601.5 176.3 599.1 176.8 596.6 177.2 594.1 177.6 591.6 178.1 589.2 178.5 586.7 178.9 584.2 179.4 581.7 179.8 579.2 180.2 576.8 180.6 574.3 181 571.8 181.5 569.3 181.9 566.8 182.3 564.3 182.7 561.8 183.1 559.4 183.6 556.9 184 554.4 184.4 551.9 184.8 549.4 185.2 546.9 185.6 544.4 186 542 186.4 539.5 186.8 537 187.3 534.5 187.7 532 188.1 529.5 188.5 527 188.9 524.5 189.3 522.1 189.7 519.6 190.1 517.1 190.5 514.6 190.9 512.1 191.3 509.6 191.7 507.1 192.2 504.7 192.6 502.2 193 499.7 193.4 497.2 193.8 494.7 194.2 492.3 194.6 489.8 195 487.3 195.4 484.8 195.8 482.3 196.2 479.9 196.6 477.4 197 474.9 197.4 472.4 197.8 469.9 198.2 467.5 198.6 465 199 462.5 199.4 460 199.8 457.5 200.2 455 200.6 452.5 201 450 201.3 447.6 201.7 445.1 202.1 442.6 202.5 440.1 202.9 437.6 203.3 435.1 203.7 432.6 204 430.1 204.4 427.6 204.8 425.1 205.2 422.6 205.6 420.1 205.9 417.6 206.3 415.1 206.7 412.6 207.1 410.1 207.5 407.7 207.8 405.2 208.2 402.7 208.6 400.2 209 397.7 209.3 395.2 209.7 392.7 210.1 390.2 210.4 387.7 210.8 385.2 211.2 382.7 211.6 380.2 211.9 377.7 212.3 375.2 212.7 372.7 213 370.2 213.4 367.7 213.8 365.2 214.1 362.8 214.5 360.3 214.9 357.8 215.2 355.3 215.6 352.8 216 350.3 216.3 347.8 216.7 345.3 217.1Z" fill="url(#gg)" opacity="1"/><path d="M344.4 221.6 346.9 221.2 349.4 220.8 351.9 220.4 354.4 220 356.9 219.7 359.4 219.3 361.9 218.9 364.3 218.5 366.8 218.1 369.3 217.7 371.8 217.3 374.3 216.9 376.8 216.5 379.3 216.1 381.8 215.7 384.3 215.3 386.8 214.9 389.3 214.5 391.8 214.1 394.3 213.7 396.8 213.3 399.3 212.8 401.8 212.4 404.3 212 406.8 211.6 409.3 211.2 411.8 210.8 414.3 210.4 416.8 210 419.3 209.6 421.8 209.2 424.3 208.8 426.8 208.4 429.3 208 431.8 207.5 434.3 207.1 436.8 206.7 439.3 206.3 441.8 205.9 444.3 205.5 446.8 205.1 449.3 204.7 451.8 204.2 454.3 203.8 456.8 203.4 459.2 203 461.7 202.6 464.2 202.2 466.7 201.8 469.2 201.4 471.7 200.9 474.2 200.5 476.7 200.1 479.1 199.7 481.6 199.3 484.1 198.9 486.6 198.4 489.1 198 491.5 197.6 494 197.2 496.5 196.8 499 196.4 501.4 196 503.9 195.5 506.4 195.1 508.9 194.7 511.4 194.3 513.9 193.9 516.4 193.5 518.8 193.1 521.3 192.7 523.8 192.2 526.3 191.8 528.8 191.4 531.3 191 533.8 190.6 536.3 190.2 538.7 189.8 541.2 189.4 543.7 189 546.2 188.5 548.7 188.1 551.2 187.7 553.7 187.3 556.1 186.9 558.6 186.5 561.1 186.1 563.6 185.7 566.1 185.3 568.6 184.8 571.1 184.4 573.5 184 576 183.6 578.5 183.2 581 182.8 583.5 182.4 585.9 181.9 588.4 181.5 590.9 181.1 593.4 180.7 595.8 180.3 598.3 179.8 600.8 179.4 603.3 179 605.7 178.6 608.2 178.1 610.7 177.7 613.1 177.3 615.6 176.8 618.1 176.4 620.5 176 623 175.5 625.5 175.1 627.9 174.7 630.4 174.2 632.8 173.8 635.3 173.3 637.7 172.9 640.2 172.4 642.6 172 645.1 171.5 647.5 171.1 650 170.6 652.4 170.2 654.9 169.7 657.3 169.2 659.7 168.8 662.2 168.3 664.6 167.8 667 167.4 669.5 166.9 671.9 166.4 674.3 165.9 676.7 165.5 679.2 165 681.6 164.5 684 164 686.5 163.5 689 163 691.6 162.5 694.1 161.9 696.7 161.4 699.2 160.9 701.8 160.3 704.4 159.8 707 159.2 709.6 158.7 712.2 158.1 714.8 157.6 717.4 157 720 156.5 722.7 155.9 725.3 155.3 727.9 154.8 730.6 154.2 733.2 153.6 735.9 153 738.5 152.5 741.2 151.9 743.8 151.3 746.5 150.7 749.1 150.1 751.8 149.5 754.4 148.9 757 148.3 759.7 147.8 762.3 147.2 764.9 146.6 767.5 146 770.2 145.4 772.8 144.8 775.4 144.2 777.9 143.6 780.5 143 783.1 142.4 785.6 141.8 788.2 141.2 790.7 140.6 793.2 140 795.8 139.4 798.3 138.8 800.7 138.2 803.2 137.6 805.6 137.1 808.1 136.5 810.5 135.9 812.9 135.3 815.3 134.7 817.6 134.1 820 133.6 822.3 133 824.6 132.4 826.9 131.8 829.2 131.3 831.4 130.7 833.6 130.1 835.8 129.6 838 129 840.1 128.5 842.2 127.9 844.3 127.4 846.4 126.9 848.4 126.3 850.4 125.8 852.4 125.3 854.3 124.7 856.3 124.2 858.1 123.7 860 123.2 863 122.4 865.9 121.6 868.7 120.7 871.5 119.9 874.2 119.1 876.8 118.4 879.4 117.6 882 116.8 884.5 116 886.9 115.2 889.4 114.5 891.7 113.7 894.1 113 896.4 112.2 898.7 111.4 900.9 110.7 903.1 109.9 905.3 109.2 907.5 108.5 909.7 107.7 911.9 107 914 106.2 916.2 105.5 918.3 104.7 920.5 104 922.6 103.2 924.8 102.5 927.4 101.6 930 100.7 932.5 99.8 935.1 98.9 937.6 98 940.2 97.1 942.7 96.2 945.1 95.3 947.6 94.4 950 93.5 952.4 92.6 954.7 91.7 957 90.9 959.2 90 961.4 89.2 963.5 88.3 965.6 87.5 967.6 86.8 969.5 86 971 85.4 972.5 84.8 973.9 84.2 975.3 83.7 976.7 83.1 978 82.6 979.3 82 980.6 81.5 981.8 80.9 983 80.4 984.2 79.9 985.4 79.4 986.6 78.9 987.7 78.3 988.9 77.8 990 77.3 990.9 76.9 991.8 76.5 992.7 76 993.5 75.6 994.4 75.2 995.2 74.8 996 74.4 996.8 74 997.6 73.6 998.4 73.2 999.2 72.8 1000 72.4 1000.8 72 1001.6 71.5 1002.4 71.1 1003.2 70.7 1004 70.3 1004.8 69.8 1005.7 69.4 1006.5 69 1007.3 68.5 1008.1 68.1 1009 67.7 1009.8 67.2 1010.6 66.8 1011.4 66.3 1012.2 65.9 1013 65.4 1013.9 64.9 1014.7 64.5 1015.5 64 1016.3 63.5 1017.1 63 1018 62.5 1018.8 62 1019.7 61.5 1020.5 60.9 1021.4 60.4 1022.2 59.9 1023.1 59.4 1023.9 58.8 1024.8 58.3 1025.6 57.7 1026.4 57.2 1027.2 56.6 1028 56 1028.7 55.5 1029.5 54.9 1030.2 54.4 1030.9 53.8 1031.5 53.3 1032.2 52.7 1032.8 52.1 1033.5 51.6 1034.1 51 1034.7 50.4 1035.3 49.9 1035.9 49.3 1036.5 48.7 1037.1 48.1 1037.7 47.5 1038.3 46.9 1038.8 46.3 1039.4 45.7 1039.9 45.1 1040.5 44.5 1041 43.9 1041.5 43.3 1042 42.7 1042.5 42.1 1043 41.5 1043.5 40.9 1044 40.2 1044.5 39.6 1045 39 1045.5 38.4 1045.9 37.8 1046.4 37.1 1046.8 36.5 1047.3 35.9 1047.7 35.3 1048.1 34.7 1048.5 34.2 1048.9 33.6 1049.3 33 1049.7 32.4 1050.1 31.8 1050.5 31.3 1050.9 30.7 1051.2 30.1 1051.6 29.5 1052 28.9 1052.4 28.3 1052.7 27.8 1053.1 27.2 1056.6 29.4 1056.2 30 1055.9 30.6 1055.6 31.3 1055.3 31.9 1054.9 32.5 1054.6 33.1 1054.3 33.7 1053.9 34.3 1053.6 35 1053.2 35.6 1052.8 36.2 1052.5 36.9 1052.1 37.5 1051.7 38.2 1051.3 38.8 1050.9 39.5 1050.5 40.2 1050.1 40.8 1049.6 41.5 1049.2 42.2 1048.7 42.9 1048.3 43.6 1047.8 44.3 1047.4 45 1046.9 45.7 1046.4 46.4 1045.9 47.1 1045.4 47.8 1044.9 48.5 1044.4 49.2 1043.8 49.8 1043.2 50.5 1042.6 51.1 1042 51.8 1041.4 52.4 1040.8 53 1040.2 53.7 1039.6 54.3 1038.9 55 1038.3 55.6 1037.6 56.2 1037 56.9 1036.3 57.5 1035.6 58.1 1034.9 58.7 1034.2 59.3 1033.4 59.9 1032.6 60.6 1031.8 61.3 1030.9 61.9 1030.1 62.5 1029.2 63.2 1028.4 63.8 1027.5 64.4 1026.6 65 1025.8 65.5 1024.9 66.1 1024 66.7 1023.2 67.2 1022.3 67.8 1021.5 68.3 1020.7 68.9 1019.8 69.4 1019 69.9 1018.2 70.5 1017.3 71 1016.5 71.5 1015.7 72 1014.8 72.5 1014 73 1013.2 73.5 1012.4 74 1011.5 74.4 1010.7 74.9 1009.9 75.4 1009.1 75.8 1008.3 76.3 1007.4 76.8 1006.6 77.2 1005.8 77.7 1005 78.1 1004.2 78.6 1003.4 79 1002.6 79.5 1001.8 79.9 1001 80.3 1000.2 80.7 999.4 81.2 998.5 81.6 997.7 82 996.8 82.5 996 82.9 995.1 83.3 994.1 83.8 993.2 84.2 992 84.8 990.9 85.3 989.7 85.9 988.5 86.4 987.3 87 986.1 87.5 984.9 88.1 983.6 88.7 982.3 89.2 981 89.8 979.7 90.4 978.3 90.9 976.9 91.5 975.4 92.1 974 92.8 972.4 93.4 970.5 94.2 968.5 95 966.4 95.8 964.3 96.7 962.1 97.6 959.9 98.5 957.6 99.4 955.2 100.3 952.9 101.2 950.4 102.1 948 103.1 945.5 104 943 105 940.5 105.9 937.9 106.9 935.4 107.8 932.8 108.8 930.2 109.7 927.6 110.7 925.5 111.4 923.3 112.2 921.2 113 919 113.8 916.9 114.5 914.7 115.3 912.6 116.1 910.4 116.9 908.2 117.6 906 118.4 903.8 119.2 901.5 120 899.2 120.8 896.9 121.6 894.5 122.4 892.1 123.2 889.7 124 887.2 124.8 884.7 125.6 882.1 126.5 879.5 127.3 876.8 128.1 874.1 129 871.3 129.8 868.5 130.7 865.5 131.5 862.5 132.4 860.7 133 858.8 133.5 856.8 134 854.9 134.6 852.9 135.2 850.9 135.7 848.9 136.3 846.8 136.9 844.7 137.4 842.6 138 840.4 138.6 838.3 139.2 836.1 139.8 833.8 140.4 831.6 141 829.3 141.6 827 142.2 824.7 142.8 822.4 143.4 820.1 144 817.7 144.6 815.3 145.2 812.9 145.8 810.5 146.5 808.1 147.1 805.6 147.7 803.1 148.3 800.7 149 798.2 149.6 795.7 150.2 793.1 150.8 790.6 151.5 788 152.1 785.5 152.7 782.9 153.4 780.3 154 777.8 154.6 775.2 155.3 772.6 155.9 770 156.5 767.3 157.2 764.7 157.8 762.1 158.4 759.4 159.1 756.8 159.7 754.2 160.3 751.5 161 748.9 161.6 746.2 162.2 743.6 162.8 740.9 163.4 738.3 164.1 735.6 164.7 733 165.3 730.4 165.9 727.7 166.5 725.1 167.1 722.5 167.7 719.8 168.3 717.2 168.9 714.6 169.5 712 170.1 709.4 170.7 706.8 171.3 704.2 171.8 701.6 172.4 699.1 173 696.5 173.5 694 174.1 691.4 174.7 688.9 175.2 686.4 175.8 684 176.3 681.5 176.7 679.1 177.2 676.7 177.7 674.2 178.2 671.8 178.7 669.3 179.1 666.9 179.6 664.4 180.1 662 180.6 659.6 181 657.1 181.5 654.6 182 652.2 182.4 649.7 182.9 647.3 183.3 644.8 183.8 642.4 184.2 639.9 184.7 637.4 185.1 635 185.6 632.5 186 630 186.5 627.6 186.9 625.1 187.3 622.6 187.8 620.2 188.2 617.7 188.7 615.2 189.1 612.7 189.5 610.3 189.9 607.8 190.4 605.3 190.8 602.8 191.2 600.3 191.7 597.9 192.1 595.4 192.5 592.9 192.9 590.4 193.3 587.9 193.8 585.5 194.2 583 194.6 580.5 195 578 195.4 575.5 195.9 573 196.3 570.5 196.7 568.1 197.1 565.6 197.5 563.1 197.9 560.6 198.3 558.1 198.7 555.6 199.2 553.1 199.6 550.6 200 548.2 200.4 545.7 200.8 543.2 201.2 540.7 201.6 538.2 202 535.7 202.4 533.2 202.8 530.7 203.3 528.3 203.7 525.8 204.1 523.3 204.5 520.8 204.9 518.3 205.3 515.8 205.7 513.4 206.1 510.9 206.5 508.4 207 505.9 207.4 503.4 207.8 500.9 208.2 498.5 208.6 496 209 493.5 209.4 491 209.9 488.6 210.3 486.1 210.7 483.6 211.1 481.1 211.5 478.6 211.9 476.1 212.4 473.7 212.8 471.2 213.2 468.7 213.6 466.2 214 463.7 214.4 461.2 214.8 458.7 215.3 456.2 215.7 453.7 216.1 451.2 216.5 448.7 216.9 446.2 217.3 443.7 217.7 441.2 218.2 438.7 218.6 436.2 219 433.7 219.4 431.2 219.8 428.7 220.2 426.2 220.6 423.7 221 421.2 221.4 418.7 221.8 416.2 222.3 413.7 222.7 411.2 223.1 408.7 223.5 406.2 223.9 403.7 224.3 401.2 224.7 398.7 225.1 396.2 225.5 393.7 225.9 391.2 226.3 388.7 226.7 386.2 227.1 383.7 227.5 381.2 227.9 378.7 228.3 376.2 228.7 373.7 229.1 371.2 229.5 368.7 229.9 366.2 230.3 363.7 230.7 361.2 231.1 358.8 231.5 356.3 231.9 353.8 232.3 351.3 232.7 348.8 233.1 346.3 233.5Z" fill="url(#gg)" opacity="1"/><path d="M344.1 240.9 346.5 240.5 349 240.1 351.5 239.7 354 239.3 356.5 238.9 359 238.5 361.5 238.1 363.9 237.7 366.4 237.3 368.9 236.9 371.4 236.5 373.9 236.1 376.4 235.7 378.9 235.2 381.4 234.8 383.9 234.4 386.4 234 388.9 233.6 391.4 233.2 394 232.8 396.5 232.4 399 232 401.5 231.6 404 231.2 406.5 230.7 409 230.3 411.5 229.9 414 229.5 416.5 229.1 419.1 228.7 421.6 228.3 424.1 227.8 426.6 227.4 429.1 227 431.6 226.6 434.1 226.2 436.6 225.8 439.1 225.3 441.6 224.9 444.1 224.5 446.7 224.1 449.2 223.7 451.7 223.2 454.2 222.8 456.7 222.4 459.2 222 461.7 221.6 464.2 221.1 466.7 220.7 469.2 220.3 471.7 219.9 474.1 219.5 476.6 219 479.1 218.6 481.6 218.2 484.1 217.8 486.6 217.4 489 216.9 491.5 216.5 494 216.1 496.5 215.7 499 215.3 501.4 214.8 503.9 214.4 506.4 214 508.9 213.6 511.4 213.2 513.9 212.7 516.4 212.3 518.8 211.9 521.3 211.5 523.8 211.1 526.3 210.7 528.8 210.2 531.3 209.8 533.8 209.4 536.3 209 538.7 208.6 541.2 208.2 543.7 207.8 546.2 207.3 548.7 206.9 551.2 206.5 553.7 206.1 556.1 205.7 558.6 205.3 561.1 204.8 563.6 204.4 566.1 204 568.6 203.6 571.1 203.2 573.5 202.8 576 202.3 578.5 201.9 581 201.5 583.5 201.1 585.9 200.6 588.4 200.2 590.9 199.8 593.4 199.4 595.8 198.9 598.3 198.5 600.8 198.1 603.3 197.7 605.7 197.2 608.2 196.8 610.7 196.4 613.1 195.9 615.6 195.5 618.1 195 620.5 194.6 623 194.2 625.5 193.7 627.9 193.3 630.4 192.8 632.8 192.4 635.3 191.9 637.7 191.5 640.2 191 642.6 190.6 645.1 190.1 647.5 189.7 650 189.2 652.4 188.7 654.9 188.3 657.3 187.8 659.7 187.3 662.2 186.9 664.6 186.4 667 185.9 669.5 185.4 671.9 184.9 674.3 184.5 676.7 184 679.2 183.5 681.6 183 684 182.5 686.5 182 689 181.5 691.6 180.9 694.1 180.4 696.7 179.8 699.3 179.3 701.9 178.7 704.6 178.2 707.2 177.6 709.8 177 712.5 176.4 715.2 175.9 717.9 175.3 720.5 174.7 723.2 174.1 725.9 173.5 728.7 172.9 731.4 172.3 734.1 171.6 736.8 171 739.5 170.4 742.3 169.8 745 169.2 747.7 168.5 750.4 167.9 753.2 167.3 755.9 166.7 758.6 166 761.3 165.4 764 164.8 766.7 164.1 769.4 163.5 772.1 162.9 774.7 162.2 777.4 161.6 780 161 782.7 160.4 785.3 159.7 787.9 159.1 790.5 158.5 793.1 157.9 795.6 157.3 798.2 156.6 800.7 156 803.2 155.4 805.7 154.8 808.1 154.2 810.6 153.6 813 153 815.4 152.5 817.7 151.9 820.1 151.3 822.4 150.7 824.7 150.2 826.9 149.6 829.1 149.1 831.3 148.5 833.5 148 835.6 147.4 837.7 146.9 839.8 146.4 841.8 145.9 843.8 145.4 845.8 144.9 847.7 144.4 849.6 144 851.4 143.5 853.2 143 855 142.6 856.7 142.1 858.4 141.7 860 141.3 863.3 140.5 866.4 139.6 869.4 138.8 872.3 138.1 875 137.3 877.7 136.6 880.2 135.9 882.7 135.2 885.1 134.6 887.4 133.9 889.6 133.2 891.8 132.6 894 132 896.1 131.4 898.2 130.7 900.3 130.1 902.4 129.5 904 129 905.5 128.6 906.9 128.1 908.3 127.7 909.7 127.3 911 126.9 912.3 126.5 913.6 126.1 914.9 125.7 916.2 125.3 917.5 124.9 918.8 124.4 920.2 124 921.7 123.5 923.2 123 924.8 122.5 926.9 121.8 929.2 121 931.6 120.2 934 119.4 936.5 118.5 939.1 117.6 941.8 116.7 944.5 115.8 947.2 114.8 949.9 113.9 952.5 113 955.2 112 957.8 111.1 960.3 110.2 962.8 109.4 965.1 108.5 967.4 107.7 969.5 107 971.1 106.4 972.7 105.9 974.2 105.4 975.6 104.9 977 104.4 978.4 103.9 979.8 103.4 981.1 102.9 982.5 102.4 983.8 102 985.1 101.5 986.4 101 987.8 100.5 989.1 100 990.5 99.5 991.9 99 993.4 98.4 994.9 97.9 996.5 97.3 998 96.7 999.6 96.1 1001.2 95.5 1002.8 94.9 1004.3 94.3 1005.9 93.7 1007.4 93.1 1009 92.5 1010.5 91.9 1011.9 91.3 1013.3 90.7 1014.7 90.1 1016 89.5 1017 89 1017.9 88.6 1018.9 88.1 1019.7 87.7 1020.6 87.2 1021.5 86.7 1022.3 86.3 1023.1 85.8 1024 85.4 1024.8 84.9 1025.6 84.4 1026.4 83.9 1027.3 83.4 1028.2 82.9 1029.1 82.4 1030 81.9 1031.2 81.3 1032.4 80.6 1033.6 79.9 1034.9 79.2 1036.1 78.4 1037.4 77.7 1038.8 77 1040.1 76.2 1041.4 75.5 1042.7 74.7 1043.9 74 1045.2 73.2 1046.4 72.5 1047.5 71.8 1048.6 71.2 1049.7 70.5 1050.5 70 1051.2 69.6 1051.9 69.1 1052.6 68.6 1053.3 68.2 1054 67.7 1054.7 67.3 1055.4 66.8 1056 66.4 1056.6 66 1057.2 65.5 1057.8 65.1 1058.4 64.7 1059 64.3 1059.5 64 1060 63.6 1060.3 63.4 1060.6 63.2 1060.9 63 1061.2 62.8 1061.5 62.6 1061.7 62.4 1062 62.2 1062.2 62 1062.5 61.8 1062.7 61.6 1063 61.5 1063.2 61.3 1063.5 61.1 1063.7 60.9 1064 60.6 1064.3 60.4 1064.7 60.1 1065.1 59.8 1065.5 59.4 1065.9 59.1 1066.3 58.7 1066.7 58.4 1067.1 58 1067.5 57.6 1067.9 57.2 1068.3 56.9 1068.7 56.5 1069.1 56.1 1069.5 55.7 1069.9 55.3 1070.3 54.9 1070.7 54.5 1071.1 54.1 1071.4 53.7 1071.8 53.4 1072.1 53 1072.4 52.6 1072.8 52.2 1073.1 51.8 1073.4 51.4 1073.8 51 1074.1 50.6 1074.4 50.2 1074.7 49.8 1075 49.4 1075.4 49 1075.7 48.5 1076 48.1 1076.3 47.6 1076.7 47.1 1077.1 46.7 1077.4 46.2 1077.8 45.7 1078.1 45.2 1078.5 44.7 1078.8 44.1 1079.2 43.6 1079.5 43.1 1079.8 42.6 1080.2 42.1 1080.5 41.6 1080.8 41 1081.1 40.5 1081.4 40 1081.7 39.5 1081.9 39 1082.2 38.5 1082.5 38 1082.7 37.5 1083 36.9 1083.3 36.4 1083.5 35.9 1083.7 35.4 1084 34.9 1084.2 34.4 1084.4 33.9 1084.6 33.4 1084.8 32.9 1084.9 32.5 1085.1 32 1085.2 31.7 1085.3 31.4 1085.4 31 1085.5 30.7 1085.5 30.4 1085.6 30.1 1085.7 29.8 1085.7 29.5 1085.8 29.2 1085.9 29 1085.9 28.7 1086 28.4 1086 28.1 1086.1 27.8 1090 28.6 1089.9 28.9 1089.9 29.1 1089.8 29.4 1089.8 29.7 1089.7 30 1089.7 30.3 1089.6 30.7 1089.6 31 1089.5 31.4 1089.4 31.7 1089.3 32.1 1089.2 32.5 1089.1 32.9 1089 33.3 1088.8 33.9 1088.7 34.4 1088.5 34.9 1088.3 35.5 1088.1 36 1087.9 36.6 1087.6 37.2 1087.4 37.7 1087.2 38.3 1086.9 38.9 1086.7 39.4 1086.4 40 1086.2 40.6 1085.9 41.1 1085.7 41.7 1085.4 42.2 1085.1 42.8 1084.8 43.4 1084.5 44 1084.2 44.6 1083.9 45.2 1083.5 45.7 1083.2 46.3 1082.9 46.9 1082.5 47.5 1082.2 48 1081.9 48.6 1081.5 49.1 1081.2 49.7 1080.9 50.2 1080.5 50.7 1080.2 51.2 1079.9 51.7 1079.6 52.2 1079.3 52.6 1079 53.1 1078.7 53.6 1078.4 54 1078.1 54.5 1077.7 54.9 1077.4 55.4 1077.1 55.9 1076.7 56.3 1076.4 56.8 1076.1 57.2 1075.7 57.7 1075.4 58.1 1075 58.6 1074.6 59 1074.2 59.5 1073.8 59.9 1073.3 60.4 1072.9 60.8 1072.5 61.2 1072 61.7 1071.6 62.1 1071.1 62.5 1070.7 62.9 1070.3 63.3 1069.8 63.7 1069.4 64.1 1069 64.4 1068.6 64.8 1068.2 65.1 1067.9 65.4 1067.6 65.6 1067.3 65.9 1067 66.1 1066.7 66.3 1066.4 66.6 1066.2 66.8 1065.9 67 1065.6 67.2 1065.3 67.4 1065.1 67.6 1064.8 67.8 1064.5 68 1064.2 68.2 1063.9 68.4 1063.6 68.7 1063.1 69.1 1062.5 69.4 1062 69.8 1061.4 70.3 1060.8 70.7 1060.2 71.1 1059.5 71.6 1058.9 72 1058.2 72.5 1057.5 73 1056.8 73.5 1056.1 74 1055.4 74.5 1054.6 75 1053.9 75.5 1053.1 76 1052 76.7 1050.9 77.4 1049.7 78.1 1048.5 78.9 1047.2 79.6 1046 80.4 1044.7 81.2 1043.4 82 1042.1 82.8 1040.8 83.5 1039.5 84.3 1038.2 85.1 1036.9 85.8 1035.7 86.5 1034.5 87.2 1033.4 87.9 1032.5 88.4 1031.6 88.9 1030.7 89.4 1029.9 89.9 1029.1 90.4 1028.2 90.9 1027.4 91.4 1026.6 91.9 1025.7 92.4 1024.8 92.9 1023.9 93.4 1023 93.9 1022.1 94.4 1021.1 94.9 1020.1 95.5 1019 96 1017.6 96.7 1016.2 97.3 1014.7 98 1013.2 98.6 1011.7 99.3 1010.1 100 1008.6 100.6 1007 101.3 1005.4 101.9 1003.8 102.5 1002.2 103.1 1000.6 103.7 999.1 104.3 997.5 104.8 996 105.4 994.5 105.9 993.1 106.4 991.7 106.9 990.3 107.4 988.9 107.9 987.6 108.3 986.2 108.8 984.9 109.3 983.5 109.7 982.2 110.2 980.8 110.6 979.4 111.1 978 111.6 976.5 112.1 975 112.6 973.5 113.1 971.8 113.6 969.7 114.4 967.4 115.1 965.1 115.9 962.6 116.8 960.1 117.6 957.4 118.5 954.8 119.4 952.1 120.3 949.4 121.2 946.7 122.1 944 123 941.3 123.9 938.7 124.7 936.1 125.6 933.6 126.4 931.2 127.1 929 127.9 926.8 128.6 925.2 129.1 923.7 129.5 922.2 130 920.8 130.4 919.4 130.8 918.1 131.3 916.7 131.6 915.4 132 914.1 132.4 912.8 132.8 911.5 133.2 910.1 133.6 908.7 134 907.2 134.4 905.7 134.8 904.1 135.3 902 135.9 899.9 136.5 897.8 137.1 895.7 137.7 893.5 138.3 891.3 139 889 139.6 886.7 140.3 884.3 140.9 881.8 141.6 879.2 142.3 876.6 143 873.8 143.8 870.9 144.5 867.9 145.3 864.7 146.1 861.4 146.9 859.8 147.3 858.1 147.8 856.4 148.2 854.6 148.6 852.8 149.1 851 149.5 849.1 150 847.2 150.5 845.2 151 843.2 151.5 841.2 152 839.1 152.5 837 153 834.9 153.5 832.7 154 830.5 154.6 828.3 155.1 826 155.7 823.7 156.2 821.4 156.8 819.1 157.3 816.7 157.9 814.3 158.5 811.9 159.1 809.4 159.6 807 160.2 804.5 160.8 802 161.4 799.4 162 796.9 162.6 794.3 163.2 791.8 163.8 789.2 164.4 786.5 165.1 783.9 165.7 781.3 166.3 778.6 166.9 776 167.5 773.3 168.1 770.6 168.8 767.9 169.4 765.2 170 762.5 170.6 759.8 171.2 757.1 171.9 754.4 172.5 751.6 173.1 748.9 173.7 746.2 174.3 743.4 174.9 740.7 175.5 738 176.1 735.2 176.7 732.5 177.3 729.8 177.9 727.1 178.5 724.4 179.1 721.7 179.7 719 180.3 716.3 180.9 713.6 181.5 710.9 182 708.3 182.6 705.6 183.2 703 183.7 700.4 184.3 697.8 184.8 695.2 185.3 692.6 185.9 690.1 186.4 687.5 186.9 685 187.4 682.6 187.9 680.2 188.4 677.7 188.9 675.3 189.4 672.9 189.8 670.4 190.3 668 190.8 665.6 191.3 663.1 191.8 660.7 192.2 658.3 192.7 655.8 193.2 653.4 193.6 650.9 194.1 648.5 194.6 646 195 643.6 195.5 641.1 195.9 638.7 196.4 636.2 196.8 633.7 197.3 631.3 197.7 628.8 198.2 626.4 198.6 623.9 199.1 621.4 199.5 619 200 616.5 200.4 614 200.8 611.5 201.3 609.1 201.7 606.6 202.1 604.1 202.6 601.7 203 599.2 203.4 596.7 203.9 594.2 204.3 591.7 204.7 589.3 205.1 586.8 205.6 584.3 206 581.8 206.4 579.3 206.8 576.9 207.3 574.4 207.7 571.9 208.1 569.4 208.5 566.9 208.9 564.4 209.4 561.9 209.8 559.5 210.2 557 210.6 554.5 211 552 211.4 549.5 211.9 547 212.3 544.5 212.7 542.1 213.1 539.6 213.5 537.1 213.9 534.6 214.3 532.1 214.8 529.6 215.2 527.1 215.6 524.6 216 522.2 216.4 519.7 216.8 517.2 217.3 514.7 217.7 512.2 218.1 509.7 218.5 507.2 218.9 504.8 219.3 502.3 219.8 499.8 220.2 497.3 220.6 494.8 221 492.4 221.5 489.9 221.9 487.4 222.3 484.9 222.7 482.4 223.1 480 223.6 477.5 224 475 224.4 472.5 224.8 470 225.2 467.5 225.7 465 226.1 462.5 226.5 460 226.9 457.5 227.3 455 227.8 452.5 228.2 450 228.6 447.5 229 445 229.4 442.5 229.9 440 230.3 437.4 230.7 434.9 231.1 432.4 231.5 429.9 231.9 427.4 232.4 424.9 232.8 422.4 233.2 419.9 233.6 417.4 234 414.8 234.4 412.3 234.8 409.8 235.3 407.3 235.7 404.8 236.1 402.3 236.5 399.8 236.9 397.3 237.3 394.8 237.7 392.3 238.1 389.7 238.6 387.2 239 384.7 239.4 382.2 239.8 379.7 240.2 377.2 240.6 374.7 241 372.2 241.4 369.7 241.8 367.2 242.2 364.7 242.6 362.2 243 359.8 243.4 357.3 243.8 354.8 244.2 352.3 244.6 349.8 245 347.3 245.4 344.9 245.8Z" fill="url(#gg)" opacity="1"/><path d="M343.9 252.2 346.3 251.8 348.8 251.4 351.3 251 353.8 250.6 356.3 250.2 358.8 249.8 361.2 249.4 363.7 249 366.2 248.6 368.7 248.2 371.2 247.8 373.7 247.3 376.2 246.9 378.7 246.5 381.2 246.1 383.7 245.7 386.2 245.3 388.7 244.9 391.3 244.4 393.8 244 396.3 243.6 398.8 243.2 401.3 242.8 403.8 242.3 406.3 241.9 408.9 241.5 411.4 241.1 413.9 240.7 416.4 240.2 418.9 239.8 421.4 239.4 424 239 426.5 238.5 429 238.1 431.5 237.7 434 237.3 436.5 236.8 439.1 236.4 441.6 236 444.1 235.6 446.6 235.1 449.1 234.7 451.6 234.3 454.1 233.8 456.6 233.4 459.1 233 461.6 232.6 464.1 232.1 466.6 231.7 469.1 231.3 471.6 230.8 474.1 230.4 476.6 230 479.1 229.6 481.6 229.1 484.1 228.7 486.6 228.3 489 227.9 491.5 227.4 494 227 496.5 226.6 499 226.1 501.4 225.7 503.9 225.3 506.4 224.9 508.9 224.4 511.4 224 513.9 223.6 516.4 223.2 518.8 222.8 521.3 222.3 523.8 221.9 526.3 221.5 528.8 221.1 531.3 220.7 533.8 220.2 536.3 219.8 538.7 219.4 541.2 219 543.7 218.6 546.2 218.1 548.7 217.7 551.2 217.3 553.7 216.9 556.1 216.5 558.6 216 561.1 215.6 563.6 215.2 566.1 214.8 568.6 214.4 571.1 213.9 573.5 213.5 576 213.1 578.5 212.7 581 212.2 583.5 211.8 585.9 211.4 588.4 211 590.9 210.5 593.4 210.1 595.9 209.7 598.3 209.2 600.8 208.8 603.3 208.4 605.7 207.9 608.2 207.5 610.7 207.1 613.2 206.6 615.6 206.2 618.1 205.7 620.5 205.3 623 204.8 625.5 204.4 627.9 203.9 630.4 203.5 632.8 203 635.3 202.6 637.8 202.1 640.2 201.7 642.7 201.2 645.1 200.7 647.6 200.3 650 199.8 652.4 199.3 654.9 198.9 657.3 198.4 659.8 197.9 662.2 197.4 664.6 197 667.1 196.5 669.5 196 671.9 195.5 674.3 195 676.8 194.5 679.2 194 681.6 193.5 684 193 686.5 192.5 689 191.9 691.5 191.4 694.1 190.9 696.6 190.3 699.2 189.7 701.7 189.2 704.3 188.6 706.9 188 709.5 187.5 712 186.9 714.6 186.3 717.2 185.7 719.8 185.1 722.4 184.5 725 183.9 727.7 183.3 730.3 182.7 732.9 182.1 735.5 181.5 738.1 180.9 740.7 180.2 743.3 179.6 746 179 748.6 178.4 751.2 177.7 753.8 177.1 756.4 176.5 759 175.9 761.6 175.2 764.2 174.6 766.8 174 769.4 173.3 771.9 172.7 774.5 172.1 777.1 171.4 779.6 170.8 782.2 170.2 784.7 169.5 787.2 168.9 789.7 168.3 792.2 167.7 794.7 167 797.2 166.4 799.7 165.8 802.2 165.2 804.6 164.6 807 164 809.5 163.3 811.9 162.7 814.2 162.1 816.6 161.5 819 160.9 821.3 160.3 823.6 159.8 826 159.2 828.2 158.6 830.5 158 832.8 157.5 835 156.9 837.2 156.3 839.4 155.8 841.5 155.2 843.7 154.7 845.8 154.2 847.9 153.6 850 153.1 852 152.6 854.1 152.1 856.1 151.6 858 151.1 860 150.6 862.9 149.9 865.9 149.1 868.7 148.4 871.6 147.7 874.4 147 877.2 146.3 879.9 145.7 882.6 145 885.3 144.3 888 143.7 890.6 143 893.2 142.4 895.7 141.8 898.2 141.1 900.7 140.5 903.2 139.9 905.6 139.3 908 138.7 910.3 138.1 912.6 137.5 914.9 136.9 917.2 136.3 919.4 135.7 921.6 135.1 923.7 134.5 925.9 133.9 928 133.3 930 132.8 932 132.2 934 131.6 936 131 938.5 130.2 940.9 129.5 943.3 128.7 945.5 128 947.7 127.3 949.9 126.5 952 125.8 954.1 125.1 956.1 124.4 958.1 123.7 960 123 961.9 122.3 963.8 121.6 965.7 120.9 967.6 120.2 969.5 119.5 971 118.9 972.5 118.4 974 117.9 975.4 117.3 976.8 116.8 978.2 116.3 979.6 115.8 980.9 115.2 982.3 114.7 983.6 114.2 985 113.7 986.4 113.1 987.7 112.6 989.1 112.1 990.5 111.5 991.9 111 993.4 110.4 994.9 109.8 996.5 109.3 998 108.7 999.6 108.1 1001.2 107.5 1002.8 106.9 1004.3 106.2 1005.9 105.6 1007.4 105 1008.9 104.4 1010.4 103.8 1011.9 103.2 1013.3 102.7 1014.7 102.1 1016 101.5 1017 101.1 1017.9 100.6 1018.8 100.2 1019.7 99.8 1020.6 99.4 1021.4 98.9 1022.3 98.5 1023.1 98.1 1023.9 97.7 1024.8 97.3 1025.6 96.8 1026.4 96.4 1027.3 96 1028.2 95.5 1029.1 95.1 1030 94.6 1031.1 94 1032.3 93.5 1033.5 92.9 1034.8 92.3 1036.1 91.7 1037.3 91.1 1038.6 90.5 1039.9 89.8 1041.2 89.2 1042.5 88.6 1043.7 88 1045 87.3 1046.2 86.7 1047.4 86.1 1048.6 85.5 1049.7 84.9 1050.6 84.4 1051.5 83.9 1052.3 83.4 1053.2 82.9 1054 82.4 1054.8 82 1055.6 81.5 1056.4 81 1057.2 80.5 1058 80 1058.8 79.5 1059.6 79 1060.4 78.5 1061.2 78 1062 77.5 1062.9 77 1063.9 76.4 1064.9 75.8 1065.9 75.2 1066.9 74.6 1068 74 1069 73.3 1070.1 72.7 1071.2 72 1072.2 71.4 1073.3 70.8 1074.3 70.2 1075.2 69.5 1076.2 69 1077.1 68.4 1077.9 67.8 1078.7 67.3 1079.2 67 1079.7 66.6 1080.1 66.3 1080.5 66 1080.9 65.7 1081.3 65.5 1081.7 65.2 1082.1 64.9 1082.5 64.6 1082.9 64.3 1083.2 64 1083.6 63.8 1084 63.5 1084.3 63.1 1084.7 62.8 1085.1 62.5 1085.5 62.1 1085.9 61.8 1086.4 61.4 1086.8 61 1087.2 60.6 1087.6 60.2 1088 59.8 1088.5 59.4 1088.9 59 1089.3 58.6 1089.7 58.2 1090.1 57.8 1090.5 57.3 1090.9 56.9 1091.2 56.5 1091.6 56.1 1091.9 55.7 1092.3 55.3 1092.6 54.9 1092.9 54.6 1093.2 54.2 1093.5 53.8 1093.8 53.4 1094.1 53 1094.4 52.6 1094.7 52.2 1095 51.8 1095.3 51.4 1095.6 51 1095.8 50.6 1096.1 50.1 1096.4 49.7 1096.7 49.2 1097 48.7 1097.3 48.2 1097.6 47.7 1097.9 47.1 1098.2 46.6 1098.4 46 1098.7 45.5 1099 44.9 1099.2 44.4 1099.5 43.8 1099.8 43.3 1100 42.7 1100.2 42.2 1100.5 41.6 1100.7 41.1 1100.9 40.6 1101.1 40.1 1101.3 39.6 1101.5 39.1 1101.6 38.6 1101.8 38 1102 37.5 1102.1 37 1102.3 36.5 1102.5 36 1102.6 35.5 1102.8 35 1102.9 34.5 1103 34 1103.2 33.6 1103.3 33.1 1103.4 32.7 1103.5 32.4 1103.6 32 1103.7 31.6 1103.8 31.3 1103.9 30.9 1104 30.6 1104 30.2 1104.1 29.9 1104.2 29.6 1104.3 29.2 1104.4 28.9 1104.4 28.5 1104.5 28.2 1108.5 29.1 1108.4 29.5 1108.4 29.8 1108.3 30.2 1108.2 30.5 1108.1 30.9 1108.1 31.2 1108 31.6 1107.9 31.9 1107.8 32.3 1107.8 32.7 1107.7 33.1 1107.6 33.5 1107.5 33.9 1107.4 34.3 1107.3 34.7 1107.2 35.2 1107 35.7 1106.9 36.2 1106.8 36.7 1106.7 37.3 1106.5 37.8 1106.4 38.3 1106.2 38.9 1106.1 39.4 1105.9 40 1105.7 40.6 1105.6 41.1 1105.4 41.7 1105.2 42.3 1105 42.9 1104.8 43.5 1104.6 44 1104.4 44.6 1104.1 45.3 1103.9 45.9 1103.6 46.5 1103.4 47.1 1103.1 47.7 1102.9 48.3 1102.6 48.9 1102.3 49.5 1102.1 50.1 1101.8 50.7 1101.5 51.3 1101.2 51.9 1100.9 52.5 1100.6 53 1100.3 53.5 1100.1 54 1099.8 54.5 1099.5 55 1099.2 55.4 1098.9 55.9 1098.5 56.3 1098.2 56.8 1097.9 57.2 1097.6 57.7 1097.2 58.1 1096.9 58.5 1096.5 59 1096.2 59.4 1095.8 59.8 1095.4 60.3 1095 60.7 1094.6 61.2 1094.2 61.7 1093.8 62.1 1093.4 62.6 1092.9 63.1 1092.5 63.5 1092 64 1091.6 64.4 1091.2 64.8 1090.7 65.3 1090.3 65.7 1089.8 66.1 1089.4 66.5 1088.9 66.9 1088.5 67.3 1088.1 67.7 1087.7 68 1087.3 68.4 1086.9 68.7 1086.5 69 1086.1 69.4 1085.7 69.7 1085.3 70 1084.9 70.3 1084.4 70.7 1084 71 1083.6 71.3 1083.1 71.6 1082.6 72 1082.1 72.4 1081.3 72.9 1080.4 73.6 1079.5 74.2 1078.5 74.8 1077.6 75.5 1076.5 76.2 1075.5 76.8 1074.5 77.5 1073.4 78.2 1072.4 78.9 1071.3 79.5 1070.3 80.2 1069.3 80.9 1068.3 81.5 1067.3 82.1 1066.4 82.7 1065.6 83.3 1064.8 83.8 1064 84.3 1063.2 84.8 1062.4 85.3 1061.6 85.8 1060.8 86.3 1060 86.9 1059.2 87.4 1058.4 87.9 1057.5 88.4 1056.7 88.9 1055.8 89.4 1054.9 90 1054 90.5 1053 91.1 1051.9 91.7 1050.7 92.4 1049.4 93 1048.2 93.7 1046.9 94.4 1045.6 95 1044.3 95.7 1043 96.3 1041.7 97 1040.5 97.6 1039.2 98.2 1037.9 98.9 1036.7 99.5 1035.5 100.1 1034.4 100.7 1033.3 101.2 1032.4 101.7 1031.5 102.2 1030.7 102.6 1029.8 103.1 1029 103.5 1028.2 103.9 1027.4 104.4 1026.5 104.8 1025.7 105.3 1024.8 105.7 1023.9 106.2 1023 106.6 1022.1 107.1 1021.1 107.6 1020.1 108 1019.1 108.5 1017.7 109.2 1016.3 109.8 1014.8 110.4 1013.4 111.1 1011.8 111.7 1010.3 112.3 1008.7 113 1007.2 113.6 1005.6 114.3 1004 114.9 1002.4 115.5 1000.9 116.2 999.3 116.8 997.8 117.4 996.3 118 994.8 118.6 993.4 119.1 992 119.7 990.7 120.3 989.3 120.8 988 121.4 986.6 121.9 985.3 122.4 983.9 123 982.5 123.5 981.2 124.1 979.8 124.6 978.3 125.2 976.9 125.7 975.4 126.3 973.9 126.9 972.4 127.5 970.5 128.2 968.7 128.9 966.8 129.6 964.9 130.3 963 131.1 961 131.8 959 132.6 957 133.3 954.9 134.1 952.7 134.8 950.5 135.6 948.3 136.4 946 137.2 943.6 138 941.1 138.8 938.6 139.6 936.6 140.2 934.6 140.9 932.5 141.5 930.4 142.1 928.3 142.7 926.2 143.3 924 143.9 921.8 144.6 919.5 145.2 917.3 145.8 915 146.4 912.6 147.1 910.3 147.7 907.9 148.3 905.4 149 903 149.6 900.5 150.3 898 150.9 895.4 151.6 892.9 152.3 890.3 152.9 887.6 153.6 884.9 154.3 882.2 155 879.5 155.7 876.7 156.4 873.9 157.2 871.1 157.9 868.2 158.6 865.3 159.4 862.4 160.1 860.4 160.7 858.5 161.2 856.5 161.7 854.5 162.2 852.4 162.8 850.4 163.3 848.3 163.9 846.1 164.4 844 165 841.8 165.5 839.7 166.1 837.5 166.7 835.2 167.3 833 167.9 830.7 168.5 828.5 169.1 826.2 169.7 823.8 170.3 821.5 170.9 819.1 171.5 816.8 172.2 814.4 172.8 812 173.4 809.6 174.1 807.2 174.7 804.7 175.3 802.3 176 799.8 176.7 797.3 177.4 794.9 178.1 792.4 178.8 789.9 179.5 787.4 180.2 784.8 181 782.3 181.7 779.8 182.4 777.2 183.1 774.7 183.8 772.1 184.6 769.5 185.3 767 186 764.4 186.7 761.8 187.4 759.2 188.2 756.6 188.9 754 189.6 751.4 190.3 748.8 191 746.2 191.7 743.6 192.4 741 193.2 738.4 193.9 735.8 194.6 733.2 195.3 730.6 196 728 196.7 725.4 197.4 722.8 198 720.2 198.7 717.6 199.4 715 200.1 712.4 200.8 709.9 201.4 707.3 202.1 704.7 202.7 702.2 203.4 699.6 204 697.1 204.7 694.5 205.3 692 206 689.5 206.6 687 207.2 684.5 207.7 682.1 208.2 679.7 208.7 677.2 209.2 674.8 209.7 672.3 210.2 669.9 210.7 667.4 211.2 665 211.6 662.5 212.1 660.1 212.6 657.6 213.1 655.2 213.5 652.7 214 650.3 214.5 647.8 214.9 645.3 215.4 642.9 215.9 640.4 216.3 637.9 216.8 635.5 217.2 633 217.7 630.5 218.1 628.1 218.6 625.6 219 623.1 219.5 620.6 219.9 618.2 220.4 615.7 220.8 613.2 221.2 610.7 221.7 608.2 222.1 605.8 222.5 603.3 223 600.8 223.4 598.3 223.8 595.8 224.3 593.4 224.7 590.9 225.1 588.4 225.5 585.9 226 583.4 226.4 580.9 226.8 578.4 227.2 575.9 227.6 573.5 228.1 571 228.5 568.5 228.9 566 229.3 563.5 229.7 561 230.2 558.5 230.6 556 231 553.6 231.4 551.1 231.8 548.6 232.2 546.1 232.7 543.6 233.1 541.1 233.5 538.6 233.9 536.1 234.3 533.7 234.7 531.2 235.1 528.7 235.6 526.2 236 523.7 236.4 521.2 236.8 518.7 237.2 516.3 237.6 513.8 238.1 511.3 238.5 508.8 238.9 506.3 239.3 503.9 239.7 501.4 240.2 498.9 240.6 496.4 241 493.9 241.4 491.5 241.9 489 242.3 486.5 242.7 484 243.1 481.5 243.6 479 244 476.5 244.4 474 244.8 471.5 245.3 469 245.7 466.5 246.1 464 246.5 461.5 247 459 247.4 456.5 247.8 454 248.2 451.5 248.7 449 249.1 446.4 249.5 443.9 249.9 441.4 250.3 438.9 250.8 436.4 251.2 433.9 251.6 431.3 252 428.8 252.5 426.3 252.9 423.8 253.3 421.3 253.7 418.7 254.1 416.2 254.6 413.7 255 411.2 255.4 408.7 255.8 406.1 256.2 403.6 256.7 401.1 257.1 398.6 257.5 396.1 257.9 393.6 258.3 391.1 258.7 388.5 259.1 386 259.6 383.5 260 381 260.4 378.5 260.8 376 261.2 373.5 261.6 371 262 368.5 262.4 366 262.8 363.5 263.2 361 263.6 358.5 264.1 356 264.5 353.6 264.9 351.1 265.3 348.6 265.7 346.1 266.1Z" fill="url(#gg)" opacity="1"/><path d="M640.0 166.2l1.0 3.9M648.5 164.6l1.0 3.9M656.9 163.0l1.0 3.9M665.2 161.3l1.0 3.9M673.4 159.7l1.0 3.8M681.5 158.0l1.0 3.8M689.5 156.3l1.0 3.8M697.4 154.7l1.0 3.9M705.2 153.0l1.0 3.9M712.8 151.3l1.1 4.0M720.3 149.7l1.1 4.0M727.7 148.0l1.1 4.1M735.0 146.4l1.1 4.1M742.1 144.7l1.1 4.2M749.1 143.1l1.1 4.2M756.0 141.5l1.1 4.3M762.8 139.9l1.1 4.3M769.4 138.3l1.1 4.4M776.0 136.7l1.2 4.4M782.4 135.2l1.2 4.4M788.7 133.6l1.2 4.5M794.9 132.1l1.2 4.5M801.1 130.5l1.2 4.6M807.1 129.0l1.2 4.6M813.0 127.5l1.2 4.7M818.8 126.0l1.2 4.7M824.5 124.5l1.2 4.7M830.1 123.1l1.3 4.8M835.6 121.6l1.3 4.8M841.0 120.1l1.3 4.8M846.3 118.7l1.3 4.9M851.6 117.2l1.3 4.9M856.7 115.7l1.3 4.9M861.8 114.3l1.3 5.0M866.7 112.8l1.3 5.0M871.6 111.3l1.3 5.0M876.4 109.8l1.3 5.1M881.2 108.3l1.3 5.1M885.8 106.8l1.4 5.1M890.4 105.2l1.4 5.2M894.9 103.7l1.4 5.2M899.4 102.1l1.4 5.2M903.7 100.6l1.4 5.3M908.0 99.1l1.4 5.3M912.3 97.5l1.4 5.4M916.4 96.0l1.4 5.5M920.5 94.5l1.5 5.5M924.6 93.1l1.5 5.6M928.5 91.7l1.5 5.6M932.4 90.2l1.5 5.7M936.3 88.8l1.5 5.7M940.1 87.4l1.5 5.8M943.8 86.0l1.5 5.8M947.4 84.6l1.6 5.9M951.0 83.3l1.6 6.0M954.6 81.9l1.6 6.0M958.1 80.6l1.6 6.1M961.5 79.2l1.6 6.1M964.9 77.9l1.6 6.1M968.2 76.5l1.6 6.2M971.6 75.2l1.6 6.2M974.9 73.8l1.7 6.3M978.1 72.5l1.7 6.3M981.4 71.2l1.7 6.4M984.6 69.7l1.7 6.4" fill="none" stroke="#0b5c0b" stroke-width="0.7" opacity="0.7"/><path d="M641.5 165.9l0.8 3.1M650.0 164.3l0.8 3.1M658.3 162.7l0.8 3.1M666.6 161.0l0.8 3.1M674.8 159.4l0.8 3.1M682.9 157.7l0.8 3.0M690.9 156.0l0.8 3.1M698.8 154.4l0.8 3.1M706.5 152.7l0.8 3.2M714.2 151.0l0.8 3.2M721.6 149.4l0.9 3.2M729.0 147.7l0.9 3.3M736.2 146.1l0.9 3.3M743.3 144.4l0.9 3.4M750.3 142.8l0.9 3.4M757.2 141.2l0.9 3.4M764.0 139.6l0.9 3.5M770.6 138.0l0.9 3.5M777.1 136.4l0.9 3.5M783.5 134.9l0.9 3.6M789.8 133.3l0.9 3.6M796.0 131.8l1.0 3.6M802.1 130.3l1.0 3.7M808.1 128.8l1.0 3.7M814.0 127.2l1.0 3.7M819.8 125.8l1.0 3.8M825.5 124.3l1.0 3.8M831.0 122.8l1.0 3.8M836.5 121.3l1.0 3.8M841.9 119.9l1.0 3.9M847.2 118.4l1.0 3.9M852.5 116.9l1.0 3.9M857.6 115.5l1.0 4.0M862.6 114.0l1.0 4.0M867.6 112.6l1.1 4.0M872.5 111.1l1.1 4.0M877.3 109.6l1.1 4.1M882.0 108.0l1.1 4.1M886.6 106.5l1.1 4.1M891.2 105.0l1.1 4.1M895.7 103.4l1.1 4.2M900.1 101.9l1.1 4.2M904.5 100.3l1.1 4.2M908.8 98.8l1.1 4.3M913.0 97.3l1.1 4.3M917.2 95.8l1.2 4.4M921.2 94.3l1.2 4.4M925.3 92.8l1.2 4.5M929.2 91.4l1.2 4.5M933.1 90.0l1.2 4.6M936.9 88.6l1.2 4.6M940.7 87.2l1.2 4.6M944.4 85.8l1.2 4.7M948.1 84.4l1.2 4.7M951.7 83.0l1.3 4.8M955.2 81.7l1.3 4.8M958.7 80.3l1.3 4.8M962.1 79.0l1.3 4.9M965.5 77.6l1.3 4.9M968.8 76.3l1.3 5.0M972.2 74.9l1.3 5.0M975.5 73.6l1.3 5.0M978.7 72.3l1.3 5.1M982.0 70.9l1.3 5.1" fill="none" stroke="#8a1a10" stroke-width="0.7" opacity="0.4"/><path d="M640.0 173.5l3.0 11.4M648.5 171.9l3.0 11.4M656.9 170.3l3.0 11.4M665.2 168.7l3.0 11.4M673.4 167.1l3.0 11.4M681.5 165.5l3.0 11.4M689.5 163.9l3.0 11.3M697.4 162.2l3.0 11.2M705.2 160.6l2.9 11.1M712.8 159.0l2.9 11.0M720.3 157.4l2.9 10.9M727.7 155.8l2.8 10.8M735.0 154.2l2.8 10.7M742.1 152.7l2.8 10.6M749.1 151.1l2.8 10.5M756.0 149.6l2.8 10.5M762.8 148.1l2.7 10.4M769.4 146.5l2.7 10.3M776.0 145.0l2.7 10.2M782.4 143.6l2.7 10.1M788.7 142.1l2.6 10.0M794.9 140.6l2.6 9.9M801.1 139.2l2.6 9.9M807.1 137.7l2.6 9.8M813.0 136.3l2.6 9.7M818.8 134.9l2.5 9.6M824.5 133.5l2.5 9.5M830.1 132.0l2.5 9.5M835.6 130.6l2.5 9.4M841.0 129.3l2.5 9.3M846.3 127.9l2.4 9.3M851.6 126.5l2.4 9.2M856.7 125.1l2.4 9.1M861.8 123.7l2.4 9.1M866.7 122.3l2.4 9.0M871.6 120.9l2.3 8.9M876.4 119.5l2.3 8.9M881.2 118.0l2.3 8.8M885.8 116.6l2.3 8.7M890.4 115.1l2.3 8.7M894.9 113.7l2.3 8.6M899.4 112.2l2.3 8.6M903.7 110.7l2.2 8.5M908.0 109.3l2.2 8.4M912.3 107.8l2.2 8.4M916.4 106.4l2.2 8.3M920.5 105.0l2.2 8.3M924.6 103.6l2.2 8.2M928.5 102.2l2.1 8.1M932.4 100.8l2.1 8.1M936.3 99.5l2.1 8.0M940.1 98.1l2.1 8.0M943.8 96.8l2.1 7.9M947.4 95.4l2.1 7.9M951.0 94.1l2.1 7.8M954.6 92.8l2.0 7.8M958.1 91.4l2.0 7.7M961.5 90.1l2.0 7.7M964.9 88.8l2.0 7.6M968.2 87.5l2.0 7.6M971.6 86.2l2.0 7.5M974.9 84.8l2.0 7.5M978.1 83.5l2.0 7.4M981.4 82.1l1.9 7.4M984.6 80.7l1.9 7.3M987.8 79.3l1.9 7.3M991.0 77.9l1.9 7.3M994.1 76.4l1.9 7.2M997.2 74.8l1.9 7.2" fill="none" stroke="#0b5c0b" stroke-width="0.7" opacity="0.7"/><path d="M641.5 173.2l2.4 9.1M650.0 171.6l2.4 9.1M658.3 170.0l2.4 9.1M666.6 168.5l2.4 9.1M674.8 166.8l2.4 9.1M682.9 165.2l2.4 9.1M690.9 163.6l2.4 9.0M698.8 162.0l2.4 9.0M706.5 160.3l2.3 8.9M714.2 158.7l2.3 8.8M721.6 157.1l2.3 8.7M729.0 155.5l2.3 8.6M736.2 154.0l2.3 8.6M743.3 152.4l2.2 8.5M750.3 150.8l2.2 8.4M757.2 149.3l2.2 8.3M764.0 147.8l2.2 8.3M770.6 146.3l2.2 8.2M777.1 144.8l2.1 8.1M783.5 143.3l2.1 8.1M789.8 141.8l2.1 8.0M796.0 140.4l2.1 7.9M802.1 138.9l2.1 7.9M808.1 137.5l2.1 7.8M814.0 136.0l2.0 7.7M819.8 134.6l2.0 7.7M825.5 133.2l2.0 7.6M831.0 131.8l2.0 7.6M836.5 130.4l2.0 7.5M841.9 129.0l2.0 7.5M847.2 127.6l1.9 7.4M852.5 126.2l1.9 7.3M857.6 124.9l1.9 7.3M862.6 123.5l1.9 7.2M867.6 122.1l1.9 7.2M872.5 120.7l1.9 7.1M877.3 119.2l1.9 7.1M882.0 117.8l1.9 7.0M886.6 116.3l1.8 7.0M891.2 114.9l1.8 6.9M895.7 113.4l1.8 6.9M900.1 111.9l1.8 6.8M904.5 110.5l1.8 6.8M908.8 109.0l1.8 6.7M913.0 107.6l1.8 6.7M917.2 106.1l1.7 6.6M921.2 104.7l1.7 6.6M925.3 103.3l1.7 6.6M929.2 102.0l1.7 6.5M933.1 100.6l1.7 6.5M936.9 99.2l1.7 6.4M940.7 97.9l1.7 6.4M944.4 96.5l1.7 6.3M948.1 95.2l1.7 6.3M951.7 93.9l1.6 6.3M955.2 92.5l1.6 6.2M958.7 91.2l1.6 6.2M962.1 89.9l1.6 6.1M965.5 88.6l1.6 6.1M968.8 87.3l1.6 6.1M972.2 85.9l1.6 6.0M975.5 84.6l1.6 6.0M978.7 83.3l1.6 5.9M982.0 81.9l1.6 5.9M985.2 80.5l1.5 5.9M988.4 79.1l1.5 5.8M991.5 77.6l1.5 5.8M994.6 76.1l1.5 5.8M997.7 74.5l1.5 5.7" fill="none" stroke="#8a1a10" stroke-width="0.7" opacity="0.4"/><path d="M640.0 192.1l1.2 4.8M648.5 190.5l1.2 4.8M656.9 188.9l1.2 4.8M665.2 187.3l1.2 4.8M673.4 185.7l1.2 4.8M681.5 184.0l1.2 4.8M689.5 182.4l1.3 4.8M697.4 180.7l1.3 4.8M705.2 179.0l1.3 4.8M712.8 177.4l1.3 4.9M720.3 175.7l1.3 4.9M727.7 174.1l1.3 4.9M735.0 172.4l1.3 5.0M742.1 170.8l1.3 5.0M749.1 169.2l1.3 5.0M756.0 167.6l1.3 5.1M762.8 166.1l1.3 5.1M769.4 164.5l1.3 5.1M776.0 162.9l1.4 5.2M782.4 161.4l1.4 5.2M788.7 159.9l1.4 5.2M794.9 158.4l1.4 5.2M801.1 156.9l1.4 5.3M807.1 155.5l1.4 5.3M813.0 154.0l1.4 5.3M818.8 152.6l1.4 5.3M824.5 151.2l1.4 5.4M830.1 149.8l1.4 5.4M835.6 148.5l1.4 5.4M841.0 147.1l1.4 5.4M846.3 145.8l1.4 5.5M851.6 144.5l1.4 5.5M856.7 143.1l1.4 5.5M861.8 141.8l1.5 5.5M866.7 140.6l1.5 5.6M871.6 139.3l1.5 5.6M876.4 138.0l1.5 5.6M881.2 136.6l1.5 5.6M885.8 135.3l1.5 5.6M890.4 134.0l1.5 5.7M894.9 132.7l1.5 5.7M899.4 131.4l1.5 5.7M903.7 130.1l1.5 5.8M908.0 128.8l1.5 5.8M912.3 127.5l1.5 5.9M916.4 126.2l1.6 5.9M920.5 124.9l1.6 6.0M924.6 123.6l1.6 6.1M928.5 122.3l1.6 6.1M932.4 120.9l1.6 6.2M936.3 119.6l1.6 6.2M940.1 118.3l1.7 6.3M943.8 117.0l1.7 6.3M947.4 115.8l1.7 6.4M951.0 114.5l1.7 6.4M954.6 113.3l1.7 6.5M958.1 112.0l1.7 6.5M961.5 110.8l1.7 6.6M964.9 109.6l1.7 6.6M968.2 108.4l1.8 6.7M971.6 107.3l1.8 6.7M974.9 106.1l1.8 6.8M978.1 105.0l1.8 6.8M981.4 103.8l1.8 6.9M984.6 102.7l1.8 6.9M987.8 101.5l1.8 7.0M991.0 100.4l1.8 7.0M994.1 99.2l1.9 7.0M997.2 98.0l1.9 7.1M1000.3 96.9l1.9 7.1M1003.3 95.7l1.9 7.1M1006.4 94.6l1.8 7.0M1009.4 93.4l1.8 6.9M1012.4 92.1l1.8 6.9M1015.4 90.8l1.8 6.8M1018.4 89.4l1.8 6.8" fill="none" stroke="#0b5c0b" stroke-width="0.7" opacity="0.7"/><path d="M641.5 191.8l1.0 3.8M650.0 190.2l1.0 3.8M658.3 188.6l1.0 3.8M666.6 187.0l1.0 3.8M674.8 185.4l1.0 3.8M682.9 183.7l1.0 3.8M690.9 182.1l1.0 3.8M698.8 180.4l1.0 3.9M706.5 178.7l1.0 3.9M714.2 177.1l1.0 3.9M721.6 175.4l1.0 3.9M729.0 173.8l1.0 4.0M736.2 172.2l1.0 4.0M743.3 170.5l1.1 4.0M750.3 168.9l1.1 4.0M757.2 167.3l1.1 4.1M764.0 165.8l1.1 4.1M770.6 164.2l1.1 4.1M777.1 162.7l1.1 4.1M783.5 161.2l1.1 4.2M789.8 159.6l1.1 4.2M796.0 158.2l1.1 4.2M802.1 156.7l1.1 4.2M808.1 155.2l1.1 4.2M814.0 153.8l1.1 4.3M819.8 152.4l1.1 4.3M825.5 151.0l1.1 4.3M831.0 149.6l1.1 4.3M836.5 148.2l1.1 4.3M841.9 146.9l1.1 4.4M847.2 145.5l1.2 4.4M852.5 144.2l1.2 4.4M857.6 142.9l1.2 4.4M862.6 141.6l1.2 4.4M867.6 140.3l1.2 4.4M872.5 139.0l1.2 4.5M877.3 137.7l1.2 4.5M882.0 136.4l1.2 4.5M886.6 135.1l1.2 4.5M891.2 133.8l1.2 4.5M895.7 132.5l1.2 4.5M900.1 131.2l1.2 4.6M904.5 129.9l1.2 4.6M908.8 128.6l1.2 4.7M913.0 127.3l1.2 4.7M917.2 126.0l1.3 4.8M921.2 124.7l1.3 4.8M925.3 123.3l1.3 4.8M929.2 122.0l1.3 4.9M933.1 120.7l1.3 4.9M936.9 119.4l1.3 5.0M940.7 118.1l1.3 5.0M944.4 116.8l1.3 5.1M948.1 115.5l1.3 5.1M951.7 114.3l1.4 5.1M955.2 113.0l1.4 5.2M958.7 111.8l1.4 5.2M962.1 110.6l1.4 5.3M965.5 109.4l1.4 5.3M968.8 108.2l1.4 5.3M972.2 107.1l1.4 5.4M975.5 105.9l1.4 5.4M978.7 104.8l1.4 5.5M982.0 103.6l1.4 5.5M985.2 102.5l1.5 5.5M988.4 101.3l1.5 5.6M991.5 100.1l1.5 5.6M994.6 99.0l1.5 5.6M997.7 97.8l1.5 5.7M1000.8 96.7l1.5 5.7M1003.9 95.5l1.5 5.6M1006.9 94.3l1.5 5.6M1009.9 93.1l1.5 5.5M1012.9 91.9l1.4 5.5M1015.9 90.5l1.4 5.4M1018.9 89.1l1.4 5.4" fill="none" stroke="#8a1a10" stroke-width="0.7" opacity="0.4"/><path d="M640.0 202.7l3.6 13.7M648.5 201.1l3.6 13.7M656.9 199.5l3.6 13.7M665.2 197.8l3.6 13.7M673.4 196.2l3.6 13.8M681.5 194.5l3.6 13.8M689.5 192.8l3.6 13.6M697.4 191.1l3.5 13.3M705.2 189.4l3.4 13.1M712.8 187.7l3.4 12.8M720.3 186.0l3.3 12.6M727.7 184.3l3.2 12.3M735.0 182.6l3.2 12.1M742.1 180.9l3.1 11.9M749.1 179.2l3.1 11.6M756.0 177.6l3.0 11.4M762.8 175.9l2.9 11.2M769.4 174.3l2.9 11.0M776.0 172.7l2.8 10.8M782.4 171.1l2.8 10.6M788.7 169.5l2.7 10.3M794.9 168.0l2.7 10.1M801.1 166.5l2.6 10.0M807.1 164.9l2.6 9.9M813.0 163.5l2.6 9.8M818.8 162.0l2.6 9.8M824.5 160.6l2.6 9.7M830.1 159.1l2.5 9.7M835.6 157.7l2.5 9.6M841.0 156.4l2.5 9.5M846.3 155.0l2.5 9.5M851.6 153.7l2.5 9.4M856.7 152.4l2.5 9.4M861.8 151.2l2.5 9.3M866.7 149.9l2.4 9.3M871.6 148.7l2.4 9.2M876.4 147.5l2.4 9.2M881.2 146.4l2.4 9.1M885.8 145.2l2.4 9.1M890.4 144.1l2.4 9.0M894.9 143.0l2.4 9.0M899.4 141.8l2.4 8.9M903.7 140.7l2.3 8.9M908.0 139.7l2.3 8.8M912.3 138.6l2.3 8.8M916.4 137.5l2.3 8.8M920.5 136.4l2.3 8.7M924.6 135.3l2.3 8.7M928.5 134.2l2.3 8.6M932.4 133.1l2.3 8.6M936.3 131.9l2.2 8.5M940.1 130.8l2.2 8.5M943.8 129.6l2.2 8.4M947.4 128.4l2.2 8.4M951.0 127.1l2.2 8.3M954.6 125.9l2.2 8.3M958.1 124.7l2.2 8.2M961.5 123.4l2.2 8.2M964.9 122.2l2.1 8.1M968.2 121.0l2.1 8.1M971.6 119.7l2.1 8.0M974.9 118.5l2.1 8.0M978.1 117.3l2.1 7.9M981.4 116.1l2.1 7.9M984.6 114.8l2.1 7.8M987.8 113.6l2.0 7.8M991.0 112.4l2.0 7.7M994.1 111.2l2.0 7.7M997.2 110.0l2.0 7.6M1000.3 108.8l2.0 7.6M1003.3 107.6l2.0 7.5M1006.4 106.5l2.0 7.5M1009.4 105.3l2.0 7.4M1012.4 104.1l1.9 7.4M1015.4 102.8l1.9 7.3M1018.4 101.4l1.9 7.3M1021.4 100.0l1.9 7.2M1024.4 98.5l1.9 7.1M1027.4 96.9l1.9 7.1M1030.4 95.4l1.8 7.0M1033.4 94.0l1.8 7.0" fill="none" stroke="#0b5c0b" stroke-width="0.7" opacity="0.7"/><path d="M641.5 202.4l2.9 11.0M650.0 200.8l2.9 11.0M658.3 199.2l2.9 11.0M666.6 197.6l2.9 11.0M674.8 195.9l2.9 11.0M682.9 194.2l2.9 11.0M690.9 192.5l2.9 10.8M698.8 190.8l2.8 10.6M706.5 189.1l2.7 10.4M714.2 187.4l2.7 10.2M721.6 185.7l2.6 10.0M729.0 184.0l2.6 9.8M736.2 182.3l2.5 9.7M743.3 180.6l2.5 9.5M750.3 178.9l2.4 9.3M757.2 177.3l2.4 9.1M764.0 175.6l2.3 8.9M770.6 174.0l2.3 8.8M777.1 172.4l2.3 8.6M783.5 170.8l2.2 8.4M789.8 169.3l2.2 8.2M796.0 167.7l2.1 8.1M802.1 166.2l2.1 8.0M808.1 164.7l2.1 7.9M814.0 163.2l2.1 7.9M819.8 161.7l2.1 7.8M825.5 160.3l2.0 7.8M831.0 158.9l2.0 7.7M836.5 157.5l2.0 7.7M841.9 156.1l2.0 7.6M847.2 154.8l2.0 7.6M852.5 153.5l2.0 7.5M857.6 152.2l2.0 7.5M862.6 150.9l2.0 7.5M867.6 149.7l2.0 7.4M872.5 148.5l1.9 7.4M877.3 147.3l1.9 7.3M882.0 146.2l1.9 7.3M886.6 145.0l1.9 7.3M891.2 143.9l1.9 7.2M895.7 142.8l1.9 7.2M900.1 141.7l1.9 7.1M904.5 140.6l1.9 7.1M908.8 139.5l1.9 7.1M913.0 138.4l1.9 7.0M917.2 137.3l1.8 7.0M921.2 136.2l1.8 7.0M925.3 135.1l1.8 6.9M929.2 134.0l1.8 6.9M933.1 132.9l1.8 6.9M936.9 131.7l1.8 6.8M940.7 130.5l1.8 6.8M944.4 129.4l1.8 6.7M948.1 128.2l1.8 6.7M951.7 126.9l1.8 6.7M955.2 125.7l1.7 6.6M958.7 124.4l1.7 6.6M962.1 123.2l1.7 6.5M965.5 122.0l1.7 6.5M968.8 120.7l1.7 6.5M972.2 119.5l1.7 6.4M975.5 118.3l1.7 6.4M978.7 117.1l1.7 6.3M982.0 115.8l1.7 6.3M985.2 114.6l1.6 6.3M988.4 113.4l1.6 6.2M991.5 112.2l1.6 6.2M994.6 110.9l1.6 6.1M997.7 109.8l1.6 6.1M1000.8 108.6l1.6 6.1M1003.9 107.4l1.6 6.0M1006.9 106.2l1.6 6.0M1009.9 105.1l1.6 5.9M1012.9 103.8l1.5 5.9M1015.9 102.5l1.5 5.8M1018.9 101.2l1.5 5.8M1021.9 99.7l1.5 5.7M1024.9 98.2l1.5 5.7M1027.9 96.7l1.5 5.7M1030.9 95.2l1.5 5.6M1033.9 93.7l1.5 5.6" fill="none" stroke="#8a1a10" stroke-width="0.7" opacity="0.4"/><path d="M107.0 246.2v13.0L112.7 258.4V251.3M118.4 244.6v13.0L124.0 256.8V249.6M129.7 243.0v13.0L135.4 255.2V248.0M141.0 241.4v13.0L146.7 253.6V246.4M152.3 239.8v13.0L157.9 252.0V244.8M163.5 238.2v13.0L169.1 250.4V243.2M174.7 236.6v13.0L180.3 248.8V241.6M185.9 235.0v13.0L191.4 247.2V240.0M197.0 233.4v13.0L202.5 245.6V238.5M208.1 231.8v13.0L213.6 244.0V236.9M219.1 230.3v13.0L224.6 242.5V235.3M230.1 228.7v13.0L235.6 240.9V233.7M241.1 227.1v13.0L246.5 239.3V232.2M252.0 225.5v13.0L257.5 237.8V230.6M262.9 224.0v13.0L268.3 236.2V229.0M273.8 222.4v13.0L279.2 234.6V227.5M284.6 220.8v13.0L290.0 233.1V225.9M295.4 219.3v13.0L300.8 231.5V224.3M306.2 217.7v13.0L311.5 229.9V222.8M316.9 216.1v13.0L322.2 228.4V221.2M327.6 214.6v13.0L332.9 226.8V219.7M338.2 213.1v13.0L343.5 225.3V218.1" fill="none" stroke="#0fb40f" stroke-width="1" opacity="1"/><path d="M112.0 255.5v15.0L117.7 269.7V261.5M123.4 253.9v15.0L129.0 268.1V259.8M134.7 252.3v15.0L140.3 266.5V258.2M146.0 250.7v15.0L151.6 264.9V256.6M157.2 249.1v15.0L162.8 263.3V255.0M168.4 247.5v15.0L174.0 261.7V253.5M179.6 245.9v15.0L185.2 260.1V251.9M190.7 244.4v15.0L196.3 258.6V250.3M201.8 242.8v15.0L207.4 257.0V248.8M212.9 241.2v15.0L218.4 255.4V247.2M223.9 239.7v15.0L229.4 253.9V245.6M234.9 238.1v15.0L240.4 252.3V244.1M245.9 236.5v15.0L251.3 250.7V242.5M256.8 234.9v15.0L262.2 249.1V240.9M267.7 233.3v15.0L273.1 247.5V239.3M278.5 231.7v15.0L283.9 245.9V237.7M289.3 230.1v15.0L294.7 244.3V236.1M300.1 228.5v15.0L305.5 242.7V234.4M310.9 226.8v15.0L316.2 241.0V232.8M321.6 225.2v15.0L326.9 239.4V231.1M332.2 223.5v15.0L337.6 237.7V229.4M342.9 221.9v15.0L348.2 236.0V227.8" fill="none" stroke="#0fb40f" stroke-width="1" opacity="1"/><path d="M122.0 274.0v14.0L127.7 287.2V279.5M133.3 272.4v14.0L139.0 285.5V277.8M144.6 270.7v14.0L150.2 283.9V276.2M155.9 269.1v14.0L161.5 282.3V274.6M167.1 267.5v14.0L172.7 280.6V272.9M178.3 265.8v14.0L183.8 279.0V271.3M189.4 264.2v14.0L195.0 277.4V269.7M200.5 262.6v14.0L206.0 275.8V268.1M211.6 261.0v14.0L217.1 274.2V266.5M222.6 259.4v14.0L228.1 272.6V264.9M233.6 257.8v14.0L239.1 271.0V263.3M244.6 256.2v14.0L250.0 269.4V261.7M255.5 254.6v14.0L260.9 267.7V260.0M266.4 252.9v14.0L271.8 266.1V258.4M277.2 251.3v14.0L282.6 264.5V256.8M288.1 249.6v14.0L293.4 262.8V255.1M298.8 248.0v14.0L304.2 261.1V253.4M309.6 246.3v14.0L314.9 259.5V251.8M320.3 244.6v14.0L325.6 257.8V250.1M331.0 242.9v14.0L336.3 256.1V248.4M341.6 241.3v14.0L346.9 254.4V246.7M352.2 239.6v14.0L357.5 252.7V245.0" fill="none" stroke="#0fb40f" stroke-width="1" opacity="1"/><path d="M127.0 285.5v16.0L132.7 300.6V291.8M138.3 283.7v16.0L143.9 298.9V290.1M149.6 282.1v16.0L155.2 297.2V288.4M160.8 280.4v16.0L166.4 295.5V286.7M172.0 278.7v16.0L177.6 293.9V285.1M183.2 277.0v16.0L188.7 292.2V283.4M194.3 275.4v16.0L199.9 290.6V281.8M205.4 273.7v16.0L210.9 288.9V280.1M216.5 272.1v16.0L222.0 287.3V278.5M227.5 270.5v16.0L233.0 285.6V276.8M238.5 268.8v16.0L243.9 284.0V275.2M249.4 267.1v16.0L254.8 282.3V273.5M260.3 265.5v16.0L265.7 280.6V271.8M271.2 263.8v16.0L276.6 279.0V270.2M282.0 262.1v16.0L287.4 277.3V268.5M292.8 260.4v16.0L298.2 275.6V266.8M303.6 258.7v16.0L308.9 273.9V265.1M314.3 257.0v16.0L319.7 272.2V263.4M325.0 255.3v16.0L330.3 270.4V261.6M335.7 253.6v16.0L341.0 268.7V259.9M346.3 251.8v16.0L351.6 267.0V258.2M356.9 250.1v16.0L362.1 265.3V256.5" fill="none" stroke="#0fb40f" stroke-width="1" opacity="1"/><path d="M343.0 212.4v5.0L348.9 216.5V213.1L346.0 213.5v1.8M353.6 210.8v5.0L359.5 214.9V211.6L356.6 212.0v1.8M364.2 209.3v4.9L370.1 213.4V210.0L367.1 210.5v1.8M374.7 207.8v4.9L380.5 211.8V208.5L377.6 208.9v1.8M385.2 206.3v4.9L391.0 210.3V207.0L388.1 207.4v1.8M395.6 204.7v4.8L401.4 208.7V205.4L398.5 205.9v1.7M406.0 203.2v4.8L411.8 207.2V203.9L408.9 204.3v1.7M416.4 201.7v4.8L422.1 205.6V202.3L419.2 202.8v1.7M426.7 200.1v4.8L432.4 204.0V200.8L429.6 201.2v1.7M437.0 198.6v4.7L442.7 202.5V199.2L439.8 199.7v1.7M447.2 197.0v4.7L452.9 200.9V197.7L450.1 198.1v1.7M457.4 195.5v4.7L463.1 199.3V196.1L460.2 196.5v1.7M467.6 193.9v4.6L473.2 197.6V194.5L470.4 194.9v1.7M477.7 192.3v4.6L483.3 196.0V192.9L480.5 193.3v1.7M487.8 190.7v4.6L493.4 194.4V191.3L490.6 191.7v1.6M497.8 189.1v4.5L503.4 192.7V189.6L500.6 190.1v1.6M507.8 187.5v4.5L513.4 191.1V188.0L510.6 188.5v1.6M517.7 185.9v4.5L523.2 189.5V186.4L520.5 186.9v1.6M527.5 184.3v4.5L533.0 187.9V184.8L530.3 185.3v1.6M537.2 182.7v4.4L542.6 186.3V183.3L539.9 183.7v1.6M546.8 181.2v4.4L552.2 184.7V181.7L549.5 182.1v1.6M556.3 179.6v4.4L561.6 183.1V180.2L559.0 180.6v1.6M565.7 178.1v4.3L570.9 181.6V178.6L568.3 179.0v1.6M575.0 176.5v4.3L580.1 180.0V177.1L577.6 177.5v1.6M584.2 175.0v4.3L589.3 178.4V175.5L586.7 175.9v1.5M593.3 173.5v4.3L598.3 176.9V174.0L595.8 174.4v1.5M602.3 171.9v4.2L607.2 175.3V172.4L604.8 172.8v1.5M611.2 170.4v4.2L616.1 173.7V170.8L613.6 171.3v1.5M619.9 168.8v4.2L624.8 172.1V169.3L622.4 169.7v1.5M628.6 167.2v4.2L633.5 170.5V167.7L631.0 168.1v1.5M637.2 165.7v4.1L642.0 168.9V166.1L639.6 166.5v1.5M645.7 164.1v4.1L650.5 167.3V164.5L648.1 164.9v1.5M654.2 162.5v4.1L658.8 165.7V162.9L656.5 163.3v1.5M662.5 160.9v4.1L667.1 164.0V161.2L664.8 161.7v1.5M670.7 159.2v4.0L675.3 162.3V159.6L673.0 160.0v1.5M678.9 157.6v4.0L683.4 160.6V157.9L681.1 158.4v1.4M686.9 155.9v4.0L691.4 159.0V156.2L689.1 156.7v1.4M694.9 154.2v4.1L699.2 157.3V154.6L697.1 155.0v1.5M702.7 152.5v4.1L707.0 155.7V152.9L704.8 153.4v1.5M710.4 150.9v4.2L714.6 154.1V151.3L712.5 151.7v1.5M717.9 149.2v4.2L722.1 152.5V149.6L720.0 150.1v1.5M725.3 147.5v4.3L729.4 150.9V148.0L727.4 148.4v1.5M732.6 145.9v4.3L736.7 149.3V146.4L734.6 146.8v1.6M739.8 144.2v4.4L743.8 147.7V144.7L741.8 145.2v1.6M746.9 142.6v4.4L750.7 146.2V143.1L748.8 143.6v1.6M753.8 141.0v4.5L757.6 144.6V141.5L755.7 142.0v1.6M760.6 139.4v4.5L764.3 143.0V140.0L762.5 140.4v1.6M767.3 137.8v4.6L771.0 141.5V138.4L769.1 138.8v1.6M773.9 136.2v4.6L777.5 140.0V136.8L775.7 137.3v1.7M780.3 134.7v4.7L783.9 138.5V135.3L782.1 135.7v1.7M786.7 133.1v4.7L790.2 137.0V133.8L788.4 134.2v1.7M792.9 131.6v4.8L796.4 135.5V132.2L794.7 132.7v1.7M799.1 130.0v4.8L802.5 134.0V130.7L800.8 131.1v1.7M805.1 128.5v4.8L808.5 132.5V129.2L806.8 129.6v1.7M811.1 127.0v4.9L814.3 131.0V127.7L812.7 128.1v1.8M816.9 125.5v4.9L820.1 129.6V126.2L818.5 126.7v1.8M822.6 124.0v5.0L825.8 128.1V124.8L824.2 125.2v1.8M828.3 122.5v5.0L831.4 126.7V123.3L829.8 123.7v1.8M833.8 121.1v5.0L836.9 125.3V121.9L835.3 122.3v1.8M839.3 119.6v5.1L842.3 123.9V120.4L840.8 120.8v1.8M844.6 118.1v5.1L847.6 122.4V119.0L846.1 119.4v1.8M849.9 116.7v5.2L852.8 121.0V117.5L851.3 117.9v1.9M855.0 115.2v5.2L857.9 119.6V116.1L856.5 116.5v1.9M860.1 113.8v5.2L862.9 118.2V114.6L861.5 115.0v1.9M865.1 112.3v5.3L867.9 116.7V113.2L866.5 113.6v1.9M870.0 110.8v5.3L872.8 115.3V111.7L871.4 112.1v1.9M874.9 109.3v5.3L877.6 113.8V110.2L876.2 110.6v1.9M879.6 107.8v5.4L882.3 112.3V108.7L881.0 109.1v1.9M884.3 106.3v5.4L886.9 110.8V107.1L885.6 107.6v1.9M888.9 104.7v5.4L891.5 109.3V105.6L890.2 106.0v2.0M893.5 103.2v5.5L896.0 107.8V104.1L894.7 104.5v2.0M897.9 101.6v5.5L900.4 106.3V102.5L899.2 103.0v2.0" fill="none" stroke="#12d012" stroke-width="1" opacity="1"/><path d="M343.0 221.8v12.0L348.9 232.9V224.7L346.0 225.2v4.3M353.6 220.2v12.0L359.5 231.2V223.1L356.6 223.5v4.3M364.2 218.5v12.0L370.1 229.6V221.4L367.1 221.9v4.3M374.7 216.8v12.0L380.5 227.9V219.7L377.6 220.2v4.3M385.2 215.1v12.0L391.0 226.2V218.0L388.1 218.5v4.3M395.6 213.4v12.0L401.4 224.5V216.3L398.5 216.8v4.3M406.0 211.8v12.0L411.8 222.8V214.7L408.9 215.1v4.3M416.4 210.1v12.0L422.1 221.1V213.0L419.2 213.4v4.3M426.7 208.4v12.0L432.4 219.4V211.3L429.6 211.8v4.3M437.0 206.7v12.0L442.7 217.7V209.6L439.8 210.1v4.3M447.2 205.0v12.0L452.9 216.1V207.9L450.1 208.4v4.3M457.4 203.3v12.0L463.1 214.4V206.2L460.2 206.7v4.3M467.6 201.6v12.0L473.2 212.7V204.5L470.4 205.0v4.3M477.7 199.9v12.0L483.3 211.0V202.8L480.5 203.3v4.3M487.8 198.2v12.0L493.4 209.3V201.1L490.6 201.6v4.3M497.8 196.6v12.0L503.4 207.6V199.5L500.6 199.9v4.3M507.8 194.9v12.0L513.4 206.0V197.8L510.6 198.3v4.3M517.7 193.2v12.0L523.2 204.3V196.2L520.5 196.6v4.3M527.5 191.6v12.0L533.0 202.7V194.6L530.3 195.0v4.3M537.2 190.0v12.0L542.6 201.1V193.0L539.9 193.4v4.3M546.8 188.4v12.0L552.2 199.6V191.4L549.5 191.8v4.3M556.3 186.9v12.0L561.6 198.0V189.8L559.0 190.3v4.3M565.7 185.3v12.0L570.9 196.5V188.3L568.3 188.7v4.3M575.0 183.8v12.0L580.1 194.9V186.7L577.6 187.2v4.3M584.2 182.2v12.0L589.3 193.4V185.2L586.7 185.6v4.3M593.3 180.7v12.0L598.3 191.8V183.7L595.8 184.1v4.3M602.3 179.2v12.0L607.2 190.3V182.1L604.8 182.6v4.3M611.2 177.6v12.0L616.1 188.8V180.6L613.6 181.0v4.3M619.9 176.1v12.0L624.8 187.2V179.0L622.4 179.5v4.3M628.6 174.5v12.0L633.5 185.7V177.5L631.0 177.9v4.3M637.2 173.0v12.0L642.0 184.1V175.9L639.6 176.4v4.3M645.7 171.4v12.0L650.5 182.5V174.4L648.1 174.8v4.3M654.2 169.8v12.0L658.8 181.0V172.8L656.5 173.2v4.3M662.5 168.2v12.0L667.1 179.4V171.2L664.8 171.6v4.3M670.7 166.6v12.0L675.3 177.7V169.6L673.0 170.0v4.3M678.9 165.0v12.0L683.4 176.1V168.0L681.1 168.4v4.3M686.9 163.4v12.0L691.4 174.5V166.3L689.1 166.8v4.3M694.9 161.8v11.8L699.2 172.7V164.7L697.1 165.1v4.3M702.7 160.1v11.7L707.0 171.0V163.0L704.8 163.5v4.2M710.4 158.5v11.6L714.6 169.3V161.4L712.5 161.8v4.2M717.9 156.9v11.5L722.1 167.6V159.7L720.0 160.2v4.2M725.3 155.3v11.4L729.4 165.9V158.1L727.4 158.5v4.1M732.6 153.7v11.3L736.7 164.2V156.5L734.6 156.9v4.1M739.8 152.2v11.2L743.8 162.5V154.9L741.8 155.3v4.0M746.9 150.6v11.1L750.7 160.9V153.3L748.8 153.8v4.0M753.8 149.1v11.0L757.6 159.3V151.8L755.7 152.2v4.0M760.6 147.5v10.9L764.3 157.6V150.2L762.5 150.6v3.9M767.3 146.0v10.8L771.0 156.0V148.7L769.1 149.1v3.9M773.9 144.5v10.8L777.5 154.4V147.1L775.7 147.5v3.9M780.3 143.0v10.7L783.9 152.9V145.6L782.1 146.0v3.8M786.7 141.5v10.6L790.2 151.3V144.1L788.4 144.5v3.8M792.9 140.1v10.5L796.4 149.8V142.6L794.7 143.0v3.8M799.1 138.6v10.4L802.5 148.2V141.1L800.8 141.6v3.7M805.1 137.2v10.3L808.5 146.7V139.7L806.8 140.1v3.7M811.1 135.7v10.2L814.3 145.2V138.2L812.7 138.6v3.7M816.9 134.3v10.2L820.1 143.7V136.8L818.5 137.2v3.7M822.6 132.9v10.1L825.8 142.2V135.3L824.2 135.7v3.6M828.3 131.5v10.0L831.4 140.7V133.9L829.8 134.3v3.6M833.8 130.1v9.9L836.9 139.2V132.5L835.3 132.9v3.6M839.3 128.7v9.8L842.3 137.8V131.1L840.8 131.5v3.5M844.6 127.3v9.8L847.6 136.3V129.7L846.1 130.1v3.5M849.9 125.9v9.7L852.8 134.9V128.3L851.3 128.7v3.5M855.0 124.5v9.6L857.9 133.4V126.9L856.5 127.2v3.5M860.1 123.2v9.6L862.9 131.9V125.4L861.5 125.8v3.4M865.1 121.8v9.5L867.9 130.5V124.0L866.5 124.4v3.4M870.0 120.4v9.4L872.8 129.0V122.6L871.4 123.0v3.4M874.9 118.9v9.3L877.6 127.5V121.1L876.2 121.5v3.4M879.6 117.5v9.3L882.3 126.0V119.7L881.0 120.1v3.3M884.3 116.1v9.2L886.9 124.5V118.2L885.6 118.6v3.3M888.9 114.6v9.2L891.5 122.9V116.7L890.2 117.1v3.3M893.5 113.1v9.1L896.0 121.4V115.2L894.7 115.6v3.3M897.9 111.7v9.0L900.4 119.9V113.8L899.2 114.2v3.3M902.3 110.2v9.0L904.8 118.4V112.3L903.5 112.7v3.2M906.7 108.7v8.9L909.0 116.8V110.8L907.8 111.2v3.2M910.9 107.3v8.8L913.3 115.3V109.3L912.1 109.7v3.2M915.1 105.8v8.8L917.4 113.8V107.9L916.3 108.3v3.2M919.2 104.4v8.7L921.5 112.4V106.4L920.4 106.8v3.1M923.3 103.0v8.7M927.3 101.7v8.6M931.2 100.3v8.5M935.0 98.9v8.5M938.8 97.6v8.4" fill="none" stroke="#14e014" stroke-width="1.35" opacity="1"/><path d="M356.0 238.9v5.0L361.9 243.0V239.6L359.0 240.1v1.8M366.6 237.3v5.0L372.4 241.3V237.9L369.5 238.4v1.8M377.1 235.6v5.0L382.9 239.6V236.2L380.0 236.7v1.8M387.5 233.8v5.0L393.4 237.9V234.5L390.5 235.0v1.8M398.0 232.1v5.0L403.8 236.2V232.8L400.9 233.3v1.8M408.3 230.4v5.0L414.1 234.5V231.1L411.2 231.6v1.8M418.7 228.7v5.0L424.5 232.8V229.4L421.6 229.9v1.8M429.0 227.0v5.0L434.8 231.1V227.7L431.9 228.1v1.8M439.3 225.3v5.0L445.0 229.4V226.0L442.1 226.4v1.8M449.5 223.6v5.0L455.2 227.7V224.3L452.4 224.7v1.8M459.7 221.9v5.0L465.4 225.9V222.5L462.6 223.0v1.8M469.9 220.2v5.0L475.5 224.2V220.8L472.7 221.3v1.8M480.0 218.5v5.0L485.6 222.5V219.1L482.8 219.6v1.8M490.1 216.8v5.0L495.7 220.8V217.4L492.9 217.9v1.8M500.1 215.1v5.0L505.7 219.1V215.7L502.9 216.2v1.8M510.1 213.4v5.0L515.6 217.4V214.0L512.9 214.5v1.8M520.0 211.7v5.0L525.5 215.8V212.4L522.7 212.9v1.8M529.8 210.1v5.0L535.2 214.2V210.8L532.5 211.2v1.8M539.4 208.5v5.0L544.8 212.6V209.2L542.1 209.6v1.8M549.0 206.9v5.0L554.3 211.0V207.6L551.7 208.0v1.8M558.5 205.3v5.0L563.7 209.4V206.0L561.1 206.4v1.8M567.8 203.7v5.0L573.0 207.8V204.4L570.4 204.9v1.8M577.1 202.1v5.0L582.2 206.3V202.9L579.7 203.3v1.8M586.3 200.6v5.0L591.3 204.7V201.3L588.8 201.8v1.8M595.3 199.0v5.0L600.3 203.2V199.8L597.8 200.2v1.8M604.3 197.5v5.0L609.3 201.6V198.2L606.8 198.6v1.8M613.2 195.9v5.0L618.1 200.0V196.6L615.6 197.1v1.8M621.9 194.4v5.0L626.8 198.5V195.1L624.4 195.5v1.8M630.6 192.8v5.0L635.4 196.9V193.5L633.0 193.9v1.8M639.2 191.2v5.0L643.9 195.3V191.9L641.6 192.4v1.8M647.7 189.6v5.0L652.4 193.7V190.3L650.0 190.8v1.8M656.1 188.0v5.0L660.7 192.1V188.7L658.4 189.2v1.8M664.4 186.4v5.0L669.0 190.5V187.1L666.7 187.6v1.8M672.6 184.8v5.0L677.1 188.9V185.5L674.9 186.0v1.8M680.7 183.2v5.0L685.2 187.3V183.9L683.0 184.3v1.8M688.7 181.5v5.0L693.2 185.6V182.2L691.0 182.7v1.8M696.7 179.9v5.1L701.0 184.0V180.5L698.8 181.0v1.8M704.4 178.2v5.1L708.7 182.4V178.9L706.6 179.4v1.8M712.1 176.5v5.1L716.3 180.7V177.3L714.2 177.7v1.8M719.6 174.9v5.2L723.8 179.1V175.6L721.7 176.1v1.9M727.0 173.2v5.2L731.1 177.5V174.0L729.0 174.4v1.9M734.3 171.6v5.2L738.3 175.9V172.4L736.3 172.8v1.9M741.4 170.0v5.3L745.4 174.3V170.8L743.4 171.2v1.9M748.4 168.4v5.3L752.3 172.8V169.2L750.4 169.6v1.9M755.3 166.8v5.3L759.1 171.2V167.6L757.2 168.0v1.9M762.1 165.2v5.4L765.9 169.7V166.0L764.0 166.5v1.9M768.8 163.6v5.4L772.5 168.2V164.5L770.6 164.9v1.9M775.4 162.1v5.4L779.0 166.7V163.0L777.2 163.4v2.0M781.8 160.6v5.5L785.3 165.2V161.5L783.6 161.9v2.0M788.1 159.1v5.5L791.6 163.7V160.0L789.9 160.4v2.0M794.4 157.6v5.5L797.8 162.2V158.5L796.1 158.9v2.0M800.5 156.1v5.5L803.8 160.8V157.0L802.2 157.4v2.0M806.5 154.6v5.6L809.8 159.4V155.6L808.1 156.0v2.0M812.4 153.2v5.6L815.7 158.0V154.2L814.0 154.6v2.0M818.2 151.8v5.6L821.4 156.6V152.8L819.8 153.2v2.0M823.9 150.4v5.6L827.1 155.2V151.4L825.5 151.8v2.0M829.5 149.0v5.7L832.6 153.9V150.0L831.1 150.4v2.0M835.1 147.6v5.7L838.1 152.5V148.7L836.6 149.0v2.1M840.5 146.2v5.7L843.5 151.2V147.3L842.0 147.7v2.1M845.8 144.9v5.7L848.7 149.9V146.0L847.3 146.4v2.1M851.1 143.6v5.8L853.9 148.6V144.7L852.5 145.1v2.1M856.2 142.3v5.8L859.0 147.3V143.4L857.6 143.8v2.1M861.3 141.0v5.8L864.1 146.1V142.1L862.7 142.5v2.1M866.3 139.7v5.8L869.0 144.8V140.8L867.6 141.2v2.1M871.2 138.4v5.9L873.9 143.5V139.5L872.5 139.9v2.1M876.0 137.1v5.9L878.6 142.2V138.2L877.3 138.6v2.1M880.7 135.8v5.9L883.3 141.0V136.9L882.0 137.3v2.1M885.4 134.5v5.9L888.0 139.7V135.6L886.7 136.0v2.1M890.0 133.1v6.0L892.5 138.4V134.3L891.2 134.7v2.1M894.5 131.8v6.0L897.0 137.1V133.0L895.7 133.4v2.2M898.9 130.5v6.0L901.4 135.8V131.7L900.2 132.1v2.2" fill="none" stroke="#12d012" stroke-width="1" opacity="1"/><path d="M366.0 248.6v14.0L371.9 261.7V252.1L368.9 252.6v5.1M376.5 246.9v14.0L382.4 260.0V250.4L379.4 250.9v5.1M387.0 245.1v14.1L392.8 258.2V248.7L389.9 249.2v5.1M397.4 243.4v14.1L403.2 256.5V246.9L400.3 247.4v5.1M407.8 241.7v14.1L413.6 254.8V245.2L410.7 245.7v5.1M418.2 239.9v14.1L423.9 253.1V243.5L421.0 244.0v5.1M428.5 238.2v14.1L434.2 251.3V241.7L431.3 242.2v5.1M438.7 236.5v14.1L444.5 249.6V240.0L441.6 240.5v5.1M449.0 234.7v14.2L454.7 247.9V238.3L451.8 238.8v5.1M459.2 233.0v14.2L464.9 246.2V236.5L462.0 237.0v5.1M469.3 231.2v14.2L475.0 244.5V234.8L472.2 235.3v5.1M479.4 229.5v14.2L485.1 242.7V233.1L482.3 233.6v5.1M489.5 227.8v14.2L495.1 241.0V231.4L492.3 231.8v5.1M499.6 226.0v14.2L505.2 239.3V229.6L502.4 230.1v5.1M509.6 224.3v14.2L515.1 237.6V227.9L512.3 228.4v5.1M519.5 222.7v14.3L524.9 236.0V226.3L522.2 226.7v5.1M529.3 221.0v14.3L534.7 234.4V224.6L532.0 225.1v5.1M538.9 219.4v14.3L544.3 232.7V223.0L541.6 223.5v5.1M548.5 217.8v14.3L553.8 231.2V221.4L551.2 221.9v5.1M558.0 216.2v14.3L563.2 229.6V219.8L560.6 220.3v5.2M567.4 214.6v14.3L572.5 228.0V218.3L569.9 218.7v5.2M576.6 213.0v14.3L581.8 226.5V216.7L579.2 217.1v5.2M585.8 211.4v14.4L590.9 224.9V215.1L588.3 215.6v5.2M594.9 209.8v14.4L599.9 223.3V213.6L597.4 214.0v5.2M603.8 208.3v14.4L608.8 221.8V212.0L606.3 212.4v5.2M612.7 206.7v14.4L617.6 220.2V210.4L615.2 210.9v5.2M621.5 205.1v14.4L626.3 218.6V208.9L623.9 209.3v5.2M630.2 203.5v14.4L635.0 217.1V207.3L632.6 207.7v5.2M638.7 201.9v14.4L643.5 215.5V205.7L641.1 206.1v5.2M647.2 200.3v14.4L651.9 213.9V204.1L649.6 204.5v5.2M655.6 198.7v14.5L660.3 212.3V202.4L658.0 202.9v5.2M663.9 197.1v14.5L668.5 210.6V200.8L666.2 201.3v5.2M672.2 195.4v14.5L676.7 209.0V199.1L674.4 199.6v5.2M680.3 193.8v14.5L684.8 207.3V197.5L682.5 197.9v5.2M688.3 192.1v14.4L692.8 205.5V195.7L690.5 196.2v5.2M696.3 190.4v14.1L700.6 203.5V193.9L698.4 194.4v5.1M704.0 188.7v13.8L708.3 201.5V192.1L706.2 192.6v5.0M711.7 187.0v13.5L715.9 199.5V190.3L713.8 190.8v4.9M719.2 185.2v13.3L723.4 197.6V188.5L721.3 189.0v4.8M726.6 183.5v13.0L730.7 195.6V186.8L728.7 187.2v4.7M733.9 181.8v12.8L737.9 193.7V185.0L735.9 185.5v4.6M741.1 180.2v12.5L745.0 191.8V183.2L743.0 183.7v4.5M748.1 178.5v12.3L751.9 189.8V181.5L750.0 182.0v4.4M755.0 176.8v12.1L758.8 188.0V179.8L756.9 180.2v4.3M761.8 175.2v11.8L765.5 186.1V178.0L763.6 178.5v4.3M768.5 173.5v11.6L772.1 184.2V176.4L770.3 176.8v4.2M775.0 171.9v11.4L778.6 182.4V174.7L776.8 175.1v4.1M781.5 170.3v11.1L785.0 180.6V173.0L783.2 173.5v4.0M787.8 168.8v10.9L791.3 178.8V171.4L789.5 171.8v3.9M794.0 167.2v10.7L797.5 177.1V169.8L795.7 170.2v3.9M800.2 165.7v10.5L803.5 175.3V168.2L801.8 168.6v3.8M806.2 164.2v10.4L809.5 173.8V166.7L807.8 167.1v3.8M812.1 162.7v10.4L815.3 172.2V165.2L813.7 165.6v3.7M817.9 161.2v10.3L821.1 170.7V163.7L819.5 164.1v3.7M823.6 159.8v10.2L826.8 169.2V162.2L825.2 162.6v3.7M829.2 158.3v10.2L832.3 167.7V160.8L830.8 161.2v3.7M834.8 156.9v10.1L837.8 166.3V159.4L836.3 159.8v3.6M840.2 155.6v10.1L843.2 164.9V158.0L841.7 158.4v3.6M845.5 154.2v10.0L848.5 163.5V156.7L847.0 157.1v3.6M850.8 152.9v9.9L853.7 162.1V155.4L852.2 155.7v3.6M855.9 151.6v9.9L858.8 160.8V154.1L857.4 154.4v3.6M861.0 150.3v9.8L863.8 159.5V152.8L862.4 153.1v3.5M866.0 149.1v9.8L868.7 158.2V151.6L867.4 151.9v3.5M870.9 147.9v9.7L873.6 156.9V150.3L872.2 150.7v3.5M875.7 146.7v9.7L878.4 155.7V149.1L877.1 149.5v3.5M880.5 145.5v9.6L883.1 154.5V148.0L881.8 148.3v3.5M885.1 144.4v9.6L887.7 153.3V146.8L886.4 147.1v3.4M889.7 143.2v9.5L892.3 152.1V145.7L891.0 146.0v3.4M894.3 142.1v9.5L896.8 151.0V144.5L895.5 144.8v3.4M898.7 141.0v9.4L901.2 149.8V143.4L899.9 143.7v3.4M903.1 139.9v9.4L905.5 148.7V142.3L904.3 142.6v3.4M907.4 138.8v9.3L909.8 147.5V141.2L908.6 141.5v3.4M911.7 137.7v9.3L914.0 146.4V140.1L912.8 140.4v3.3M915.8 136.6v9.2L918.1 145.2V139.0L917.0 139.3v3.3M919.9 135.5v9.2L922.2 144.1V137.9L921.1 138.2v3.3M924.0 134.4v9.1M927.9 133.3v9.1M931.9 132.2v9.0M935.7 131.1v9.0M939.5 129.9v8.9M943.2 128.8v8.9M946.9 127.5v8.8M950.5 126.3v8.8M954.1 125.1v8.7M957.6 123.8v8.7" fill="none" stroke="#14e014" stroke-width="1.35" opacity="1"/><path d="M1034.5 36.2 1041 37.2 1040.6 42 1035.4 49.3 1026 49.3 1031.5 42.0Z" fill="#7dfa7d" opacity="0.9"/><path d="M1052.5 37 1058.8 37.8 1058.4 42.5 1054.6 49.7 1045.3 49.7 1050 42.0Z" fill="#7dfa7d" opacity="0.9"/><path d="M1086.2 38.2 1091.6 38.4 1091 45.4 1087.8 51.3 1080.3 51 1083.5 45.4Z" fill="#7dfa7d" opacity="0.9"/><path d="M1103 39.2 1109.8 39.5 1109.5 45.4 1106.5 52.4 1098.5 52.1 1100.5 45.0Z" fill="#7dfa7d" opacity="0.9"/><path d="M1069.7 35.2 1061.6 50.3" fill="none" stroke="#666" stroke-width="0.8"/><path d="M1061.6 50.3 1034.8 76.6" fill="none" stroke="#c9a0a0" stroke-width="0.6" opacity="0.7"/><linearGradient id="gr" gradientUnits="userSpaceOnUse" x1="100" y1="0" x2="1050" y2="0"><stop offset="0" stop-color="#0d3260"/><stop offset="0.5" stop-color="#0b274a"/><stop offset="0.85" stop-color="#081a30"/><stop offset="1" stop-color="#060f1c"/></linearGradient><path d="M112.5 248.7 115 248.3 117.5 247.9 120 247.6 122.5 247.2 125 246.9 127.5 246.5 130 246.2 132.5 245.8 135 245.4 137.5 245.1 140 244.7 142.5 244.4 145 244 147.5 243.7 150 243.3 152.5 242.9 155 242.6 157.5 242.2 160 241.9 162.5 241.5 165 241.2 167.5 240.8 170 240.4 172.5 240.1 175 239.7 177.5 239.4 180 239 182.5 238.7 185 238.3 187.5 238 190 237.6 192.5 237.2 195 236.9 197.5 236.5 200 236.2 202.5 235.8 205 235.5 207.5 235.1 210 234.7 212.5 234.4 215 234 217.5 233.7 220 233.3 222.5 232.9 225 232.6 227.5 232.2 230 231.9 232.6 231.5 235.1 231.2 237.6 230.8 240.1 230.4 242.6 230.1 245.1 229.7 247.6 229.4 250.1 229 252.6 228.6 255.1 228.3 257.6 227.9 260.2 227.5 262.7 227.2 265.2 226.8 267.7 226.5 270.2 226.1 272.7 225.7 275.2 225.4 277.8 225 280.3 224.6 282.8 224.3 285.3 223.9 287.8 223.5 290.4 223.2 292.9 222.8 295.4 222.4 297.9 222.1 300.5 221.7 302.9 221.3 305.4 221 307.9 220.6 310.3 220.2 312.8 219.9 315.3 219.5 317.8 219.2 320.2 218.8 322.7 218.4 325.2 218.1 327.7 217.7 330.2 217.4 332.6 217 335.1 216.6 337.6 216.3 340.1 215.9 342.6 215.6 345.1 215.2 347.5 214.8 350 214.5 352.5 214.1 355 213.8 357.5 213.4 360 213 362.5 212.7 365 212.3 367.5 212 370 211.6 372.5 211.2 375 210.9 377.4 210.5 379.9 210.1 382.4 209.8 384.9 209.4 387.4 209 389.9 208.7 392.4 208.3 394.9 208 397.4 207.6 399.9 207.2 402.4 206.8 404.9 206.5 407.4 206.1 409.9 205.7 412.4 205.4 414.9 205 417.4 204.6 419.9 204.3 422.4 203.9 424.9 203.5 427.4 203.1 429.9 202.8 432.4 202.4 434.8 202 437.3 201.6 439.8 201.3 442.3 200.9 444.8 200.5 447.3 200.1 449.8 199.7 452.3 199.4 454.8 199 457.3 198.6 459.8 198.2 462.2 197.8 464.7 197.4 467.2 197 469.7 196.7 472.2 196.3 474.7 195.9 477.1 195.5 479.6 195.1 482.1 194.7 484.6 194.3 487.1 193.9 489.5 193.5 492 193.1 494.5 192.7 497 192.3 499.5 191.9 501.9 191.5 504.4 191.1 506.9 190.7 509.4 190.3 511.9 189.9 514.4 189.5 516.8 189.1 519.3 188.7 521.8 188.3 524.3 187.9 526.8 187.5 529.3 187.1 531.8 186.7 534.3 186.3 536.8 185.9 539.2 185.5 541.7 185.1 544.2 184.7 546.7 184.2 549.2 183.8 551.7 183.4 554.2 183 556.7 182.6 559.1 182.2 561.6 181.8 564.1 181.4 566.6 181 569.1 180.6 571.6 180.2 574.1 179.7 576.5 179.3 579 178.9 581.5 178.5 584 178.1 586.5 177.7 588.9 177.2 591.4 176.8 593.9 176.4 596.4 176 598.8 175.5 601.3 175.1 603.8 174.7 606.3 174.2 608.7 173.8 611.2 173.4 613.7 172.9 616.1 172.5 618.6 172 621.1 171.6 623.5 171.1 626 170.7 628.5 170.3 630.9 169.8 633.4 169.3 635.8 168.9 638.3 168.4 640.7 168 643.2 167.5 645.7 167 648.1 166.6 650.5 166.1 653 165.6 655.4 165.2 657.9 164.7 660.3 164.2 662.7 163.7 665.2 163.2 667.6 162.8 670 162.3 672.5 161.8 674.9 161.3 677.3 160.8 679.7 160.3 682.2 159.8 684.6 159.3 687.1 158.7 689.6 158.2 692.1 157.7 694.7 157.1 697.2 156.6 699.8 156 702.4 155.5 705 154.9 707.6 154.3 710.2 153.7 712.8 153.2 715.4 152.6 718 152 720.7 151.4 723.3 150.8 725.9 150.2 728.6 149.6 731.2 149 733.9 148.4 736.5 147.8 739.2 147.2 741.8 146.6 744.5 146 747.1 145.4 749.8 144.7 752.4 144.1 755 143.5 757.7 142.9 760.3 142.2 762.9 141.6 765.6 141 768.2 140.3 770.8 139.7 773.4 139.1 776 138.5 778.6 137.8 781.2 137.2 783.7 136.6 786.3 135.9 788.8 135.3 791.4 134.7 793.9 134 796.4 133.4 798.9 132.8 801.4 132.2 803.9 131.5 806.3 130.9 808.7 130.3 811.2 129.7 813.6 129 815.9 128.4 818.3 127.8 820.7 127.2 823 126.6 825.3 126 827.6 125.4 829.8 124.8 832.1 124.2 834.3 123.6 836.5 123 838.6 122.4 840.8 121.8 842.9 121.2 845 120.7 847.1 120.1 849.1 119.5 851.1 119 853.1 118.4 855 117.8 857 117.3 858.8 116.8 860.7 116.2 863.7 115.3 866.6 114.5 869.4 113.6 872.2 112.8 874.9 111.9 877.6 111.1 880.2 110.2 882.8 109.4 885.3 108.5 887.7 107.7 890.1 106.9 892.5 106.1 894.9 105.3 897.2 104.5 899.5 103.7 901.7 102.9 903.9 102.1 906.1 101.3 908.3 100.5 910.5 99.7 912.7 98.9 914.8 98.1 917 97.3 919.1 96.5 921.3 95.7 923.4 95 925.6 94.2 928.2 93.2 930.7 92.3 933.3 91.3 935.9 90.4 938.4 89.4 940.9 88.5 943.4 87.6 945.9 86.6 948.4 85.7 950.8 84.8 953.2 83.8 955.5 82.9 957.8 82 960 81.1 962.2 80.3 964.3 79.4 966.4 78.6 968.4 77.8 970.3 77 971.8 76.4 973.3 75.8 974.7 75.2 976.1 74.6 977.5 74.1 978.8 73.5 980.1 73 981.4 72.4 982.7 71.9 983.9 71.4 985.1 70.8 986.3 70.3 987.5 69.7 988.7 69.1 989.8 68.5 991 67.9 991.9 67.4 992.8 66.9 993.7 66.3 994.6 65.8 995.5 65.2 996.3 64.7 997.1 64.1 997.9 63.6 998.7 63 999.5 62.5 1000.3 61.9 1001.1 61.4 1001.9 60.8 1002.7 60.3 1003.5 59.7 1004.3 59.2 1005.1 58.6 1005.9 58.1 1006.7 57.5 1007.6 56.9 1008.4 56.4 1009.3 55.8 1010.1 55.2 1011 54.7 1011.8 54.1 1012.6 53.5 1013.5 52.9 1014.3 52.3 1015.1 51.7 1015.9 51 1016.7 50.4 1017.4 49.8 1018.1 49.1 1018.8 48.5 1019.5 47.9 1020.2 47.3 1020.8 46.6 1021.5 46 1022.1 45.3 1022.8 44.7 1023.4 44 1024 43.4 1024.6 42.7 1025.2 42.1 1025.7 41.5 1026.3 40.8 1026.9 40.2 1027.4 39.6 1027.9 39.1 1028.3 38.6 1028.8 38 1029.3 37.5 1029.7 37 1030.1 36.5 1030.6 36 1031 35.4 1031.4 34.9 1031.8 34.4 1032.2 33.9 1032.6 33.4 1033 32.9 1033.3 32.5 1033.7 32 1034 31.5 1034.3 31.2 1034.5 30.8 1034.8 30.5 1035 30.2 1035.2 29.8 1035.4 29.5 1035.6 29.2 1035.8 28.9 1036 28.6 1036.2 28.2 1036.4 27.9 1036.6 27.6 1036.8 27.3 1037 27 1037.2 26.7 1037.4 26.4 1034.8 24.8 1034.6 25.1 1034.4 25.4 1034.2 25.7 1034 26 1033.8 26.3 1033.6 26.6 1033.5 26.9 1033.3 27.2 1033.1 27.5 1032.9 27.8 1032.7 28.1 1032.5 28.4 1032.2 28.7 1032 29 1031.8 29.4 1031.6 29.7 1031.2 30.1 1030.9 30.6 1030.5 31 1030.1 31.5 1029.8 31.9 1029.4 32.4 1029 32.9 1028.5 33.4 1028.1 33.9 1027.7 34.4 1027.3 34.9 1026.8 35.4 1026.4 35.9 1025.9 36.4 1025.4 36.9 1025 37.4 1024.4 38 1023.9 38.6 1023.3 39.2 1022.7 39.8 1022.1 40.4 1021.5 41 1020.9 41.7 1020.3 42.3 1019.7 42.9 1019.1 43.5 1018.4 44.1 1017.8 44.7 1017.1 45.3 1016.5 45.9 1015.8 46.5 1015.2 47 1014.4 47.6 1013.7 48.2 1012.9 48.8 1012.1 49.4 1011.3 49.9 1010.5 50.5 1009.7 51 1008.9 51.6 1008.1 52.2 1007.2 52.7 1006.4 53.3 1005.5 53.8 1004.7 54.4 1003.8 54.9 1003 55.5 1002.1 56 1001.3 56.6 1000.5 57.1 999.7 57.6 998.9 58.2 998.1 58.7 997.3 59.3 996.5 59.8 995.7 60.3 994.9 60.8 994.1 61.3 993.3 61.8 992.5 62.3 991.7 62.8 990.8 63.3 989.9 63.8 989 64.3 987.9 64.9 986.8 65.4 985.7 65.9 984.5 66.5 983.4 67 982.2 67.5 981 68 979.8 68.5 978.5 69.1 977.2 69.6 975.9 70.1 974.5 70.7 973.1 71.2 971.7 71.8 970.2 72.4 968.7 73 966.8 73.8 964.8 74.6 962.7 75.4 960.6 76.2 958.4 77.1 956.2 77.9 953.9 78.8 951.6 79.7 949.2 80.6 946.8 81.5 944.3 82.4 941.9 83.3 939.4 84.3 936.8 85.2 934.3 86.1 931.7 87.1 929.2 88 926.6 88.9 924 89.8 921.9 90.6 919.7 91.4 917.5 92.1 915.4 92.9 913.2 93.7 911.1 94.5 908.9 95.2 906.7 96 904.5 96.8 902.3 97.6 900.1 98.3 897.9 99.1 895.6 99.9 893.3 100.7 891 101.5 888.6 102.3 886.2 103.1 883.7 103.9 881.2 104.7 878.7 105.5 876.1 106.3 873.5 107.2 870.8 108 868 108.8 865.2 109.7 862.3 110.5 859.3 111.4 857.5 111.9 855.6 112.4 853.7 113 851.7 113.5 849.7 114.1 847.7 114.6 845.7 115.2 843.7 115.8 841.6 116.3 839.5 116.9 837.3 117.5 835.2 118 833 118.6 830.8 119.2 828.5 119.8 826.3 120.4 824 121 821.7 121.6 819.4 122.2 817 122.8 814.7 123.4 812.3 124 809.9 124.6 807.5 125.2 805 125.8 802.6 126.5 800.1 127.1 797.6 127.7 795.1 128.3 792.6 128.9 790.1 129.5 787.6 130.2 785 130.8 782.5 131.4 779.9 132 777.3 132.7 774.7 133.3 772.2 133.9 769.6 134.5 766.9 135.1 764.3 135.8 761.7 136.4 759.1 137 756.4 137.6 753.8 138.2 751.2 138.8 748.5 139.4 745.9 140.1 743.2 140.7 740.6 141.3 737.9 141.9 735.3 142.5 732.6 143.1 730 143.7 727.4 144.3 724.7 144.8 722.1 145.4 719.5 146 716.8 146.6 714.2 147.2 711.6 147.7 709 148.3 706.4 148.9 703.8 149.4 701.2 150 698.6 150.5 696.1 151.1 693.5 151.6 691 152.2 688.4 152.7 685.9 153.2 683.4 153.7 681 154.2 678.6 154.7 676.2 155.2 673.8 155.7 671.3 156.2 668.9 156.7 666.5 157.1 664.1 157.6 661.6 158.1 659.2 158.6 656.8 159 654.3 159.5 651.9 160 649.5 160.4 647 160.9 644.6 161.3 642.1 161.8 639.7 162.3 637.2 162.7 634.8 163.2 632.3 163.6 629.9 164 627.4 164.5 625 164.9 622.5 165.4 620 165.8 617.6 166.2 615.1 166.7 612.7 167.1 610.2 167.5 607.7 168 605.3 168.4 602.8 168.8 600.3 169.2 597.8 169.7 595.4 170.1 592.9 170.5 590.4 170.9 587.9 171.3 585.5 171.7 583 172.2 580.5 172.6 578 173 575.5 173.4 573.1 173.8 570.6 174.2 568.1 174.6 565.6 175 563.1 175.5 560.6 175.9 558.2 176.3 555.7 176.7 553.2 177.1 550.7 177.5 548.2 177.9 545.7 178.3 543.2 178.7 540.8 179.1 538.3 179.5 535.8 179.9 533.3 180.3 530.8 180.7 528.3 181.1 525.8 181.5 523.3 181.9 520.9 182.3 518.4 182.7 515.9 183.1 513.4 183.5 510.9 183.9 508.4 184.3 505.9 184.7 503.5 185.1 501 185.5 498.5 185.9 496 186.3 493.5 186.7 491 187.1 488.6 187.5 486.1 187.9 483.6 188.3 481.1 188.7 478.7 189.1 476.2 189.5 473.7 189.9 471.2 190.2 468.8 190.6 466.3 191 463.8 191.4 461.3 191.8 458.8 192.2 456.3 192.6 453.8 192.9 451.4 193.3 448.9 193.7 446.4 194.1 443.9 194.4 441.4 194.8 438.9 195.2 436.4 195.6 433.9 196 431.4 196.3 428.9 196.7 426.5 197.1 424 197.4 421.5 197.8 419 198.2 416.5 198.6 414 198.9 411.5 199.3 409 199.7 406.5 200 404 200.4 401.5 200.8 399 201.1 396.5 201.5 394 201.9 391.5 202.2 389 202.6 386.5 202.9 384 203.3 381.5 203.7 379.1 204 376.6 204.4 374.1 204.8 371.6 205.1 369.1 205.5 366.6 205.8 364.1 206.2 361.6 206.6 359.1 206.9 356.6 207.3 354.1 207.6 351.6 208 349.1 208.3 346.7 208.7 344.2 209.1 341.7 209.4 339.2 209.8 336.7 210.1 334.2 210.5 331.7 210.9 329.3 211.2 326.8 211.6 324.3 211.9 321.8 212.3 319.3 212.6 316.9 213 314.4 213.4 311.9 213.7 309.4 214.1 307 214.4 304.5 214.8 302 215.2 299.5 215.5 297 215.9 294.5 216.2 292 216.6 289.5 217 286.9 217.3 284.4 217.7 281.9 218.1 279.4 218.4 276.9 218.8 274.3 219.2 271.8 219.5 269.3 219.9 266.8 220.3 264.3 220.6 261.8 221 259.3 221.3 256.7 221.7 254.2 222.1 251.7 222.4 249.2 222.8 246.7 223.1 244.2 223.5 241.7 223.8 239.2 224.2 236.7 224.6 234.2 224.9 231.7 225.3 229.2 225.6 226.7 226 224.1 226.3 221.6 226.7 219.1 227.1 216.6 227.4 214.1 227.8 211.6 228.1 209.1 228.5 206.6 228.8 204.1 229.2 201.6 229.5 199.1 229.9 196.6 230.3 194.1 230.6 191.6 231 189.1 231.3 186.6 231.7 184.1 232 181.6 232.4 179.1 232.7 176.6 233.1 174.1 233.4 171.6 233.8 169.1 234.2 166.6 234.5 164.1 234.9 161.6 235.2 159.1 235.6 156.6 235.9 154.1 236.3 151.6 236.6 149.1 237 146.6 237.3 144.1 237.7 141.6 238.1 139.1 238.4 136.6 238.8 134.1 239.1 131.6 239.5 129.1 239.8 126.6 240.2 124.1 240.5 121.6 240.9 119.1 241.3 116.6 241.6 114.1 242 111.5 242.3Z" fill="url(#gr)"/><path d="M117.5 258 120 257.6 122.5 257.2 125 256.9 127.5 256.5 130 256.2 132.5 255.8 135 255.5 137.5 255.1 140 254.7 142.5 254.4 145 254 147.5 253.7 150 253.3 152.5 253 155 252.6 157.5 252.3 160 251.9 162.5 251.6 164.9 251.2 167.4 250.9 169.9 250.5 172.4 250.1 174.9 249.8 177.4 249.4 179.9 249.1 182.4 248.7 184.9 248.4 187.4 248 189.9 247.7 192.4 247.3 194.9 247 197.4 246.6 199.9 246.3 202.4 245.9 204.9 245.6 207.4 245.2 209.9 244.9 212.4 244.5 214.9 244.1 217.4 243.8 219.9 243.4 222.4 243.1 224.9 242.7 227.4 242.4 229.9 242 232.4 241.6 234.9 241.3 237.4 240.9 239.9 240.6 242.4 240.2 244.9 239.8 247.4 239.5 249.9 239.1 252.5 238.7 255 238.4 257.5 238 260 237.6 262.5 237.3 265 236.9 267.6 236.5 270.1 236.2 272.6 235.8 275.1 235.4 277.7 235 280.2 234.7 282.7 234.3 285.2 233.9 287.8 233.5 290.3 233.1 292.9 232.7 295.4 232.4 297.9 232 300.5 231.6 302.9 231.2 305.4 230.8 307.8 230.5 310.3 230.1 312.8 229.7 315.2 229.3 317.7 228.9 320.2 228.6 322.6 228.2 325.1 227.8 327.6 227.4 330 227 332.5 226.6 335 226.2 337.5 225.9 340 225.5 342.4 225.1 344.9 224.7 347.4 224.3 349.9 223.9 352.4 223.5 354.9 223.1 357.4 222.7 359.9 222.3 362.3 221.9 364.8 221.5 367.3 221.1 369.8 220.7 372.3 220.3 374.8 219.9 377.3 219.5 379.8 219.1 382.3 218.7 384.8 218.3 387.3 217.9 389.8 217.5 392.3 217.1 394.8 216.7 397.3 216.3 399.8 215.9 402.3 215.5 404.8 215.1 407.3 214.7 409.8 214.3 412.3 213.9 414.8 213.4 417.3 213 419.8 212.6 422.3 212.2 424.8 211.8 427.3 211.4 429.8 211 432.3 210.6 434.8 210.2 437.3 209.7 439.8 209.3 442.3 208.9 444.8 208.5 447.3 208.1 449.8 207.7 452.3 207.3 454.8 206.9 457.3 206.4 459.7 206 462.2 205.6 464.7 205.2 467.2 204.8 469.7 204.4 472.2 203.9 474.7 203.5 477.2 203.1 479.6 202.7 482.1 202.3 484.6 201.9 487.1 201.5 489.6 201 492 200.6 494.5 200.2 497 199.8 499.5 199.4 501.9 199 504.4 198.5 506.9 198.1 509.4 197.7 511.9 197.3 514.4 196.9 516.9 196.5 519.3 196.1 521.8 195.6 524.3 195.2 526.8 194.8 529.3 194.4 531.8 194 534.3 193.6 536.7 193.2 539.2 192.8 541.7 192.4 544.2 191.9 546.7 191.5 549.2 191.1 551.7 190.7 554.2 190.3 556.6 189.9 559.1 189.5 561.6 189.1 564.1 188.6 566.6 188.2 569.1 187.8 571.5 187.4 574 187 576.5 186.6 579 186.2 581.5 185.7 584 185.3 586.4 184.9 588.9 184.5 591.4 184.1 593.9 183.6 596.4 183.2 598.8 182.8 601.3 182.4 603.8 181.9 606.2 181.5 608.7 181.1 611.2 180.6 613.7 180.2 616.1 179.8 618.6 179.3 621.1 178.9 623.5 178.4 626 178 628.4 177.6 630.9 177.1 633.4 176.7 635.8 176.2 638.3 175.8 640.7 175.3 643.2 174.9 645.6 174.4 648.1 173.9 650.5 173.5 653 173 655.4 172.6 657.9 172.1 660.3 171.6 662.7 171.1 665.2 170.7 667.6 170.2 670 169.7 672.5 169.2 674.9 168.8 677.3 168.3 679.7 167.8 682.2 167.3 684.6 166.8 687.1 166.3 689.6 165.8 692.1 165.2 694.7 164.7 697.2 164.2 699.8 163.6 702.4 163.1 705 162.5 707.5 162 710.1 161.4 712.8 160.9 715.4 160.3 718 159.8 720.6 159.2 723.3 158.6 725.9 158.1 728.5 157.5 731.2 156.9 733.8 156.3 736.5 155.7 739.1 155.2 741.8 154.6 744.4 154 747.1 153.4 749.7 152.8 752.4 152.2 755 151.6 757.6 151 760.3 150.4 762.9 149.8 765.5 149.2 768.1 148.6 770.8 148 773.4 147.4 776 146.8 778.5 146.2 781.1 145.6 783.7 145 786.2 144.4 788.8 143.8 791.3 143.2 793.9 142.6 796.4 142 798.9 141.4 801.3 140.8 803.8 140.2 806.3 139.6 808.7 139 811.1 138.4 813.5 137.8 815.9 137.3 818.3 136.7 820.6 136.1 822.9 135.5 825.3 134.9 827.5 134.4 829.8 133.8 832 133.2 834.3 132.7 836.4 132.1 838.6 131.5 840.8 131 842.9 130.4 845 129.9 847 129.3 849.1 128.8 851.1 128.3 853.1 127.7 855 127.2 856.9 126.7 858.8 126.2 860.7 125.7 863.7 124.8 866.6 124 869.4 123.2 872.2 122.4 874.9 121.6 877.6 120.8 880.2 120 882.7 119.2 885.2 118.4 887.7 117.6 890.1 116.8 892.5 116.1 894.8 115.3 897.1 114.5 899.4 113.8 901.7 113 903.9 112.3 906.1 111.5 908.3 110.7 910.5 110 912.6 109.2 914.8 108.5 917 107.7 919.1 107 921.3 106.2 923.4 105.5 925.6 104.7 928.2 103.8 930.7 102.9 933.3 102 935.9 101.1 938.4 100.2 940.9 99.3 943.4 98.3 945.9 97.4 948.4 96.5 950.8 95.6 953.2 94.7 955.5 93.8 957.8 93 960 92.1 962.2 91.3 964.3 90.4 966.4 89.6 968.4 88.8 970.3 88.1 971.8 87.5 973.3 86.9 974.7 86.3 976.1 85.7 977.5 85.1 978.8 84.6 980.1 84 981.4 83.5 982.7 82.9 983.9 82.4 985.1 81.9 986.3 81.4 987.4 80.8 988.6 80.3 989.8 79.8 990.9 79.2 991.8 78.8 992.7 78.4 993.6 78 994.5 77.6 995.3 77.1 996.1 76.7 997 76.3 997.8 75.9 998.6 75.5 999.4 75.1 1000.2 74.7 1001 74.3 1001.8 73.8 1002.6 73.4 1003.4 73 1004.2 72.6 1005 72.1 1005.8 71.7 1006.6 71.2 1007.5 70.8 1008.3 70.3 1009.1 69.9 1009.9 69.4 1010.7 69 1011.6 68.5 1012.4 68.1 1013.2 67.6 1014 67.1 1014.9 66.7 1015.7 66.2 1016.5 65.7 1017.3 65.2 1018.1 64.7 1019 64.2 1019.8 63.6 1020.7 63.1 1021.5 62.6 1022.4 62.1 1023.2 61.5 1024.1 61 1024.9 60.4 1025.8 59.8 1026.6 59.3 1027.4 58.7 1028.3 58.1 1029.1 57.5 1029.9 56.9 1030.6 56.3 1031.3 55.8 1032 55.2 1032.7 54.6 1033.3 54.1 1034 53.5 1034.6 52.9 1035.3 52.3 1035.9 51.7 1036.5 51.1 1037.1 50.5 1037.7 49.9 1038.3 49.3 1038.9 48.7 1039.5 48.1 1040.1 47.5 1040.7 46.9 1041.2 46.3 1041.7 45.6 1042.3 45 1042.8 44.4 1043.3 43.8 1043.8 43.2 1044.3 42.5 1044.8 41.9 1045.3 41.3 1045.8 40.6 1046.3 40 1046.8 39.4 1047.2 38.7 1047.7 38.1 1048.1 37.5 1048.6 36.8 1049 36.2 1049.4 35.7 1049.8 35.1 1050.2 34.5 1050.6 33.9 1051 33.3 1051.4 32.7 1051.8 32.1 1052.1 31.5 1052.5 30.9 1052.9 30.3 1053.3 29.8 1053.6 29.2 1054 28.6 1054.4 28 1054.8 27.4 1052.2 25.8 1051.9 26.4 1051.5 26.9 1051.1 27.5 1050.7 28.1 1050.3 28.7 1049.9 29.3 1049.6 29.8 1049.2 30.4 1048.8 31 1048.4 31.6 1048 32.1 1047.6 32.7 1047.2 33.3 1046.8 33.8 1046.4 34.4 1046 35 1045.6 35.6 1045.1 36.2 1044.6 36.8 1044.2 37.4 1043.7 38 1043.2 38.6 1042.7 39.2 1042.2 39.8 1041.8 40.4 1041.3 41 1040.7 41.6 1040.2 42.2 1039.7 42.8 1039.2 43.4 1038.7 44 1038.1 44.5 1037.6 45.1 1037 45.7 1036.4 46.3 1035.9 46.9 1035.3 47.4 1034.7 48 1034.1 48.6 1033.5 49.1 1032.9 49.7 1032.3 50.3 1031.6 50.8 1031 51.3 1030.4 51.9 1029.7 52.4 1029 52.9 1028.4 53.5 1027.6 54 1026.9 54.6 1026.1 55.1 1025.3 55.6 1024.5 56.2 1023.7 56.7 1022.9 57.2 1022.1 57.8 1021.2 58.3 1020.4 58.8 1019.5 59.3 1018.7 59.8 1017.8 60.3 1017 60.8 1016.1 61.3 1015.3 61.8 1014.5 62.3 1013.7 62.7 1012.9 63.2 1012.1 63.7 1011.2 64.1 1010.4 64.5 1009.6 65 1008.8 65.4 1008 65.9 1007.2 66.3 1006.3 66.7 1005.5 67.1 1004.7 67.6 1003.9 68 1003.1 68.4 1002.2 68.8 1001.4 69.3 1000.6 69.7 999.8 70.1 999 70.5 998.2 70.9 997.4 71.3 996.6 71.7 995.9 72.1 995.1 72.5 994.2 72.9 993.4 73.3 992.6 73.7 991.7 74.1 990.9 74.5 990 74.9 989.1 75.4 988 75.9 986.8 76.4 985.7 76.9 984.5 77.4 983.3 77.9 982.2 78.4 980.9 79 979.7 79.5 978.4 80 977.2 80.5 975.8 81.1 974.5 81.6 973.1 82.2 971.7 82.8 970.2 83.3 968.7 83.9 966.8 84.7 964.8 85.5 962.7 86.3 960.6 87.1 958.4 87.9 956.2 88.7 953.9 89.6 951.6 90.5 949.2 91.3 946.8 92.2 944.3 93.1 941.9 94 939.4 94.9 936.8 95.8 934.3 96.7 931.7 97.6 929.2 98.5 926.6 99.4 924 100.3 921.9 101 919.7 101.7 917.5 102.5 915.4 103.2 913.2 104 911.1 104.7 908.9 105.4 906.7 106.2 904.6 106.9 902.3 107.6 900.1 108.4 897.9 109.1 895.6 109.9 893.3 110.6 891 111.4 888.6 112.1 886.2 112.9 883.7 113.6 881.3 114.4 878.7 115.2 876.1 116 873.5 116.7 870.8 117.5 868 118.3 865.2 119.1 862.3 119.9 859.3 120.7 857.5 121.3 855.6 121.8 853.7 122.3 851.7 122.8 849.8 123.3 847.8 123.8 845.7 124.4 843.7 124.9 841.6 125.4 839.5 126 837.3 126.5 835.2 127.1 833 127.6 830.8 128.2 828.5 128.8 826.3 129.3 824 129.9 821.7 130.5 819.4 131 817 131.6 814.7 132.2 812.3 132.7 809.9 133.3 807.5 133.9 805 134.5 802.6 135.1 800.1 135.7 797.6 136.2 795.1 136.8 792.6 137.4 790.1 138 787.6 138.6 785 139.2 782.5 139.8 779.9 140.4 777.3 141 774.7 141.6 772.2 142.1 769.6 142.7 766.9 143.3 764.3 143.9 761.7 144.5 759.1 145.1 756.4 145.7 753.8 146.3 751.2 146.9 748.5 147.4 745.9 148 743.2 148.6 740.6 149.2 737.9 149.8 735.3 150.3 732.6 150.9 730 151.5 727.4 152.1 724.7 152.6 722.1 153.2 719.5 153.7 716.8 154.3 714.2 154.9 711.6 155.4 709 156 706.4 156.5 703.8 157 701.2 157.6 698.6 158.1 696.1 158.6 693.5 159.2 691 159.7 688.5 160.2 685.9 160.7 683.4 161.2 681 161.7 678.6 162.2 676.2 162.6 673.8 163.1 671.3 163.6 668.9 164.1 666.5 164.5 664.1 165 661.6 165.5 659.2 165.9 656.8 166.4 654.3 166.8 651.9 167.3 649.5 167.8 647 168.2 644.6 168.7 642.1 169.1 639.7 169.6 637.2 170 634.8 170.4 632.3 170.9 629.9 171.3 627.4 171.7 624.9 172.2 622.5 172.6 620 173 617.6 173.5 615.1 173.9 612.6 174.3 610.2 174.8 607.7 175.2 605.2 175.6 602.8 176 600.3 176.5 597.8 176.9 595.3 177.3 592.9 177.7 590.4 178.1 587.9 178.6 585.4 179 583 179.4 580.5 179.8 578 180.2 575.5 180.6 573 181 570.6 181.5 568.1 181.9 565.6 182.3 563.1 182.7 560.6 183.1 558.1 183.5 555.7 183.9 553.2 184.3 550.7 184.7 548.2 185.2 545.7 185.6 543.2 186 540.7 186.4 538.2 186.8 535.8 187.2 533.3 187.6 530.8 188 528.3 188.4 525.8 188.8 523.3 189.2 520.8 189.7 518.3 190.1 515.9 190.5 513.4 190.9 510.9 191.3 508.4 191.7 505.9 192.1 503.4 192.5 500.9 193 498.5 193.4 496 193.8 493.5 194.2 491 194.6 488.5 195 486.1 195.4 483.6 195.9 481.1 196.3 478.6 196.7 476.1 197.1 473.7 197.5 471.2 197.9 468.7 198.3 466.2 198.8 463.7 199.2 461.2 199.6 458.7 200 456.3 200.4 453.8 200.8 451.3 201.2 448.8 201.6 446.3 202.1 443.8 202.5 441.3 202.9 438.8 203.3 436.3 203.7 433.8 204.1 431.3 204.5 428.8 204.9 426.3 205.3 423.8 205.7 421.3 206.2 418.8 206.6 416.3 207 413.8 207.4 411.3 207.8 408.8 208.2 406.3 208.6 403.8 209 401.3 209.4 398.8 209.8 396.3 210.2 393.8 210.6 391.3 211 388.8 211.4 386.3 211.8 383.8 212.2 381.3 212.6 378.8 213 376.3 213.4 373.8 213.8 371.3 214.2 368.8 214.6 366.4 215 363.9 215.4 361.4 215.8 358.9 216.2 356.4 216.6 353.9 217 351.4 217.4 348.9 217.8 346.4 218.2 344 218.5 341.5 218.9 339 219.3 336.5 219.7 334 220.1 331.6 220.5 329.1 220.9 326.6 221.2 324.1 221.6 321.7 222 319.2 222.4 316.7 222.8 314.3 223.2 311.8 223.5 309.4 223.9 306.9 224.3 304.4 224.7 302 225 299.5 225.4 297 225.8 294.5 226.2 291.9 226.6 289.4 226.9 286.8 227.3 284.3 227.7 281.8 228.1 279.3 228.5 276.7 228.8 274.2 229.2 271.7 229.6 269.2 229.9 266.6 230.3 264.1 230.7 261.6 231.1 259.1 231.4 256.6 231.8 254.1 232.2 251.6 232.5 249 232.9 246.5 233.2 244 233.6 241.5 234 239 234.3 236.5 234.7 234 235 231.5 235.4 229 235.8 226.5 236.1 224 236.5 221.5 236.8 219 237.2 216.5 237.5 214 237.9 211.5 238.2 209 238.6 206.5 238.9 204 239.3 201.5 239.6 199 240 196.5 240.4 194 240.7 191.5 241.1 189 241.4 186.5 241.8 184 242.1 181.5 242.5 179 242.8 176.5 243.2 174 243.5 171.5 243.9 169.1 244.2 166.6 244.6 164.1 244.9 161.6 245.3 159.1 245.6 156.6 246 154.1 246.3 151.6 246.7 149.1 247 146.6 247.4 144.1 247.7 141.6 248.1 139.1 248.4 136.6 248.8 134.1 249.1 131.6 249.5 129.1 249.8 126.6 250.2 124.1 250.6 121.6 250.9 119.1 251.3 116.5 251.6Z" fill="url(#gr)"/><path d="M127.5 276.5 130 276.1 132.5 275.7 135 275.4 137.5 275 140 274.6 142.5 274.3 145 273.9 147.5 273.5 150 273.2 152.4 272.8 154.9 272.4 157.4 272.1 159.9 271.7 162.4 271.3 164.9 271 167.4 270.6 169.9 270.3 172.3 269.9 174.8 269.5 177.3 269.2 179.8 268.8 182.3 268.5 184.8 268.1 187.2 267.7 189.7 267.4 192.2 267 194.7 266.7 197.2 266.3 199.7 265.9 202.2 265.6 204.6 265.2 207.1 264.9 209.6 264.5 212.1 264.1 214.6 263.8 217.1 263.4 219.6 263 222.1 262.7 224.6 262.3 227.1 261.9 229.6 261.6 232.1 261.2 234.6 260.8 237.1 260.5 239.6 260.1 242.1 259.7 244.6 259.4 247.1 259 249.6 258.6 252.1 258.2 254.6 257.9 257.2 257.5 259.7 257.1 262.2 256.7 264.7 256.4 267.3 256 269.8 255.6 272.3 255.2 274.9 254.8 277.4 254.4 280 254.1 282.5 253.7 285.1 253.3 287.6 252.9 290.2 252.5 292.8 252.1 295.3 251.7 297.9 251.3 300.5 250.9 302.9 250.5 305.3 250.1 307.8 249.8 310.2 249.4 312.6 249 315.1 248.6 317.5 248.2 319.9 247.8 322.4 247.5 324.8 247.1 327.3 246.7 329.8 246.3 332.2 245.9 334.7 245.5 337.1 245.1 339.6 244.7 342.1 244.3 344.6 243.9 347 243.5 349.5 243.1 352 242.7 354.5 242.3 357 241.9 359.5 241.5 361.9 241.1 364.4 240.7 366.9 240.3 369.4 239.9 371.9 239.5 374.4 239.1 376.9 238.7 379.4 238.3 381.9 237.9 384.4 237.5 386.9 237.1 389.4 236.7 391.9 236.3 394.5 235.9 397 235.4 399.5 235 402 234.6 404.5 234.2 407 233.8 409.5 233.4 412 233 414.5 232.5 417 232.1 419.6 231.7 422.1 231.3 424.6 230.9 427.1 230.5 429.6 230 432.1 229.6 434.6 229.2 437.1 228.8 439.6 228.4 442.1 228 444.7 227.5 447.2 227.1 449.7 226.7 452.2 226.3 454.7 225.9 457.2 225.4 459.7 225 462.2 224.6 464.7 224.2 467.2 223.7 469.7 223.3 472.2 222.9 474.7 222.5 477.1 222.1 479.6 221.6 482.1 221.2 484.6 220.8 487.1 220.4 489.6 220 492 219.5 494.5 219.1 497 218.7 499.5 218.3 502 217.8 504.4 217.4 506.9 217 509.4 216.6 511.9 216.2 514.4 215.7 516.9 215.3 519.3 214.9 521.8 214.5 524.3 214.1 526.8 213.7 529.3 213.2 531.8 212.8 534.3 212.4 536.8 212 539.2 211.6 541.7 211.2 544.2 210.7 546.7 210.3 549.2 209.9 551.7 209.5 554.2 209.1 556.6 208.7 559.1 208.2 561.6 207.8 564.1 207.4 566.6 207 569.1 206.6 571.6 206.1 574 205.7 576.5 205.3 579 204.9 581.5 204.5 584 204 586.4 203.6 588.9 203.2 591.4 202.8 593.9 202.3 596.4 201.9 598.8 201.5 601.3 201 603.8 200.6 606.3 200.2 608.7 199.7 611.2 199.3 613.7 198.9 616.1 198.4 618.6 198 621.1 197.6 623.5 197.1 626 196.7 628.5 196.2 630.9 195.8 633.4 195.3 635.8 194.9 638.3 194.4 640.7 193.9 643.2 193.5 645.6 193 648.1 192.6 650.5 192.1 653 191.6 655.4 191.2 657.9 190.7 660.3 190.2 662.7 189.7 665.2 189.3 667.6 188.8 670 188.3 672.5 187.8 674.9 187.3 677.3 186.8 679.7 186.3 682.2 185.8 684.6 185.3 687.1 184.8 689.6 184.3 692.2 183.8 694.7 183.2 697.3 182.7 699.9 182.1 702.5 181.5 705.2 181 707.8 180.4 710.5 179.8 713.1 179.2 715.8 178.6 718.5 178 721.2 177.4 723.9 176.8 726.6 176.2 729.3 175.6 732 175 734.7 174.4 737.4 173.8 740.2 173.1 742.9 172.5 745.6 171.9 748.3 171.3 751.1 170.6 753.8 170 756.5 169.4 759.2 168.7 761.9 168.1 764.6 167.5 767.3 166.8 770 166.2 772.7 165.5 775.4 164.9 778 164.3 780.7 163.6 783.3 163 785.9 162.4 788.5 161.8 791.1 161.1 793.7 160.5 796.2 159.9 798.8 159.3 801.3 158.7 803.8 158.1 806.3 157.4 808.8 156.8 811.2 156.2 813.6 155.6 816 155.1 818.4 154.5 820.7 153.9 823 153.3 825.3 152.8 827.6 152.2 829.8 151.6 832 151.1 834.1 150.5 836.3 150 838.4 149.5 840.4 149 842.5 148.5 844.5 147.9 846.4 147.5 848.3 147 850.2 146.5 852.1 146 853.9 145.6 855.6 145.1 857.3 144.7 859 144.2 860.6 143.8 863.9 143 867.1 142.1 870.1 141.3 873 140.6 875.7 139.8 878.4 139.1 880.9 138.4 883.4 137.7 885.8 137 888.1 136.3 890.3 135.7 892.5 135.1 894.7 134.4 896.8 133.8 898.9 133.2 901 132.5 903.1 131.9 904.7 131.5 906.2 131 907.7 130.6 909.1 130.1 910.4 129.7 911.7 129.3 913 128.9 914.3 128.5 915.6 128.1 916.9 127.7 918.3 127.3 919.6 126.8 921 126.4 922.5 125.9 924 125.4 925.6 124.9 927.7 124.1 930 123.4 932.3 122.6 934.8 121.7 937.3 120.8 939.9 119.9 942.6 119 945.3 118.1 948 117.1 950.6 116.2 953.3 115.2 956 114.3 958.6 113.4 961.1 112.5 963.5 111.6 965.9 110.8 968.2 110 970.3 109.2 971.9 108.6 973.4 108.1 974.9 107.5 976.4 107 977.8 106.5 979.2 106 980.6 105.6 981.9 105.1 983.2 104.6 984.6 104.1 985.9 103.6 987.2 103.2 988.5 102.7 989.9 102.2 991.3 101.6 992.7 101.1 994.2 100.6 995.7 100 997.3 99.4 998.8 98.8 1000.4 98.2 1002 97.6 1003.6 97 1005.1 96.4 1006.7 95.8 1008.3 95.2 1009.8 94.6 1011.3 94 1012.8 93.3 1014.2 92.7 1015.6 92.1 1016.9 91.5 1017.9 91 1018.9 90.5 1019.8 90 1020.8 89.6 1021.6 89.1 1022.5 88.6 1023.3 88.2 1024.2 87.7 1025 87.2 1025.8 86.8 1026.7 86.3 1027.5 85.8 1028.4 85.3 1029.2 84.8 1030.1 84.3 1031 83.8 1032.2 83.1 1033.4 82.4 1034.6 81.7 1035.9 81 1037.2 80.3 1038.5 79.5 1039.8 78.8 1041.1 78 1042.4 77.3 1043.7 76.5 1045 75.7 1046.2 75 1047.4 74.3 1048.6 73.6 1049.7 72.9 1050.8 72.2 1051.5 71.7 1052.3 71.2 1053 70.7 1053.7 70.3 1054.4 69.8 1055.1 69.3 1055.8 68.9 1056.4 68.4 1057.1 68 1057.7 67.5 1058.3 67.1 1058.9 66.7 1059.5 66.3 1060 65.9 1060.6 65.5 1061.1 65.1 1061.4 64.9 1061.7 64.7 1062 64.5 1062.3 64.3 1062.6 64.1 1062.8 63.9 1063.1 63.7 1063.3 63.5 1063.6 63.3 1063.8 63.1 1064.1 62.9 1064.4 62.7 1064.6 62.5 1064.9 62.3 1065.2 62.1 1065.5 61.8 1065.9 61.5 1066.2 61.2 1066.6 60.8 1067 60.5 1067.5 60.1 1067.9 59.7 1068.3 59.3 1068.7 59 1069.1 58.6 1069.6 58.2 1070 57.8 1070.4 57.4 1070.8 56.9 1071.2 56.5 1071.6 56.1 1072 55.7 1072.4 55.3 1072.7 54.9 1073.1 54.5 1073.4 54.1 1073.8 53.7 1074.1 53.3 1074.4 52.9 1074.8 52.5 1075.1 52.1 1075.4 51.7 1075.8 51.3 1076.1 50.8 1076.4 50.4 1076.7 50 1077 49.6 1077.4 49.1 1077.7 48.6 1078.1 48.1 1078.4 47.6 1078.8 47.1 1079.1 46.6 1079.5 46.1 1079.8 45.6 1080.2 45.1 1080.5 44.5 1080.9 44 1081.2 43.5 1081.6 42.9 1081.9 42.4 1082.2 41.9 1082.5 41.3 1082.8 40.8 1083.1 40.3 1083.4 39.8 1083.6 39.2 1083.9 38.7 1084.2 38.2 1084.4 37.6 1084.7 37.1 1084.9 36.6 1085.2 36 1085.4 35.5 1085.6 35 1085.8 34.5 1086 34 1086.2 33.5 1086.4 33 1086.6 32.5 1086.7 32.1 1086.8 31.8 1086.9 31.4 1087 31.1 1087 30.8 1087.1 30.5 1087.2 30.1 1087.2 29.8 1087.3 29.5 1087.3 29.2 1087.4 28.9 1087.4 28.7 1087.5 28.4 1087.5 28.1 1087.6 27.8 1087.7 27.5 1084.7 26.9 1084.7 27.2 1084.6 27.5 1084.5 27.8 1084.5 28.1 1084.4 28.4 1084.4 28.7 1084.3 29 1084.2 29.2 1084.2 29.5 1084.1 29.8 1084.1 30.1 1084 30.4 1083.9 30.6 1083.8 30.9 1083.7 31.2 1083.6 31.5 1083.5 31.9 1083.3 32.4 1083.1 32.8 1082.9 33.3 1082.7 33.8 1082.5 34.2 1082.3 34.7 1082.1 35.2 1081.8 35.7 1081.6 36.2 1081.3 36.7 1081.1 37.2 1080.8 37.7 1080.5 38.2 1080.3 38.7 1080 39.2 1079.7 39.7 1079.4 40.2 1079.1 40.7 1078.8 41.2 1078.5 41.7 1078.1 42.2 1077.8 42.7 1077.4 43.2 1077.1 43.7 1076.7 44.2 1076.4 44.7 1076 45.2 1075.7 45.7 1075.3 46.2 1075 46.6 1074.6 47.1 1074.3 47.5 1074 47.9 1073.7 48.3 1073.4 48.7 1073 49.1 1072.7 49.5 1072.4 49.9 1072.1 50.3 1071.8 50.7 1071.4 51.1 1071.1 51.4 1070.8 51.8 1070.4 52.2 1070.1 52.5 1069.8 52.9 1069.4 53.3 1069.1 53.7 1068.7 54 1068.3 54.4 1067.9 54.8 1067.5 55.2 1067.1 55.5 1066.7 55.9 1066.3 56.3 1065.9 56.6 1065.5 57 1065.1 57.4 1064.7 57.7 1064.3 58 1063.9 58.4 1063.5 58.7 1063.1 59 1062.8 59.2 1062.6 59.4 1062.3 59.6 1062.1 59.8 1061.8 60 1061.6 60.2 1061.4 60.3 1061.1 60.5 1060.9 60.7 1060.6 60.9 1060.4 61 1060.1 61.2 1059.8 61.4 1059.5 61.6 1059.2 61.8 1058.9 62.1 1058.4 62.4 1057.9 62.8 1057.3 63.2 1056.7 63.6 1056.1 64 1055.5 64.4 1054.9 64.8 1054.3 65.2 1053.6 65.6 1052.9 66.1 1052.3 66.5 1051.6 67 1050.8 67.4 1050.1 67.9 1049.4 68.3 1048.6 68.8 1047.6 69.4 1046.5 70.1 1045.3 70.8 1044.1 71.5 1042.9 72.2 1041.6 72.9 1040.3 73.7 1039 74.4 1037.7 75.1 1036.4 75.9 1035.1 76.6 1033.8 77.3 1032.5 78 1031.3 78.7 1030.1 79.4 1029 80 1028 80.6 1027.1 81.1 1026.2 81.6 1025.4 82.1 1024.5 82.5 1023.7 83 1022.9 83.5 1022.1 83.9 1021.3 84.4 1020.4 84.8 1019.6 85.3 1018.7 85.7 1017.9 86.2 1017 86.6 1016 87.1 1015.1 87.5 1013.8 88.1 1012.4 88.7 1011 89.3 1009.6 89.9 1008.1 90.5 1006.6 91.1 1005.1 91.7 1003.5 92.3 1002 92.9 1000.4 93.4 998.8 94 997.3 94.6 995.7 95.2 994.1 95.8 992.6 96.3 991.1 96.9 989.7 97.4 988.3 97.9 987 98.4 985.7 98.9 984.3 99.3 983 99.8 981.7 100.3 980.4 100.7 979 101.2 977.7 101.7 976.3 102.2 974.9 102.7 973.4 103.2 971.9 103.7 970.3 104.2 968.7 104.8 966.6 105.5 964.3 106.3 962 107.2 959.5 108 957 108.9 954.4 109.8 951.7 110.7 949.1 111.6 946.4 112.6 943.7 113.5 941 114.4 938.4 115.3 935.8 116.2 933.2 117.1 930.8 117.9 928.4 118.7 926.1 119.4 924 120.1 922.4 120.7 920.9 121.2 919.5 121.6 918.1 122.1 916.7 122.5 915.4 122.9 914.1 123.3 912.8 123.7 911.6 124.1 910.3 124.5 908.9 124.9 907.6 125.3 906.2 125.7 904.8 126.2 903.3 126.6 901.7 127.1 899.6 127.7 897.5 128.3 895.4 128.9 893.3 129.5 891.1 130.2 888.9 130.8 886.7 131.4 884.4 132.1 882 132.8 879.5 133.4 877 134.1 874.4 134.9 871.6 135.6 868.8 136.4 865.8 137.1 862.6 137.9 859.4 138.8 857.7 139.2 856.1 139.6 854.3 140.1 852.6 140.5 850.8 141 848.9 141.4 847.1 141.9 845.1 142.4 843.2 142.9 841.2 143.3 839.2 143.9 837.1 144.4 835 144.9 832.9 145.4 830.7 145.9 828.5 146.5 826.3 147 824 147.6 821.7 148.1 819.4 148.7 817.1 149.3 814.7 149.9 812.3 150.4 809.9 151 807.5 151.6 805 152.2 802.5 152.8 800 153.4 797.5 154 795 154.6 792.4 155.2 789.8 155.8 787.3 156.5 784.6 157.1 782 157.7 779.4 158.3 776.7 158.9 774.1 159.6 771.4 160.2 768.7 160.8 766.1 161.4 763.4 162.1 760.7 162.7 758 163.3 755.2 164 752.5 164.6 749.8 165.2 747.1 165.8 744.4 166.4 741.6 167.1 738.9 167.7 736.2 168.3 733.5 168.9 730.8 169.5 728 170.1 725.3 170.7 722.6 171.3 719.9 171.9 717.2 172.5 714.6 173.1 711.9 173.7 709.2 174.2 706.6 174.8 704 175.4 701.3 175.9 698.7 176.5 696.1 177 693.6 177.6 691 178.1 688.4 178.6 685.9 179.1 683.4 179.7 681 180.1 678.6 180.6 676.2 181.1 673.8 181.6 671.3 182.1 668.9 182.6 666.5 183 664.1 183.5 661.6 184 659.2 184.4 656.8 184.9 654.3 185.4 651.9 185.8 649.4 186.3 647 186.7 644.6 187.2 642.1 187.7 639.7 188.1 637.2 188.6 634.8 189 632.3 189.4 629.8 189.9 627.4 190.3 624.9 190.8 622.5 191.2 620 191.6 617.6 192.1 615.1 192.5 612.6 193 610.2 193.4 607.7 193.8 605.2 194.3 602.8 194.7 600.3 195.1 597.8 195.5 595.3 196 592.9 196.4 590.4 196.8 587.9 197.2 585.4 197.7 583 198.1 580.5 198.5 578 198.9 575.5 199.4 573 199.8 570.5 200.2 568.1 200.6 565.6 201 563.1 201.4 560.6 201.9 558.1 202.3 555.6 202.7 553.2 203.1 550.7 203.5 548.2 203.9 545.7 204.4 543.2 204.8 540.7 205.2 538.2 205.6 535.8 206 533.3 206.4 530.8 206.8 528.3 207.3 525.8 207.7 523.3 208.1 520.8 208.5 518.3 208.9 515.9 209.3 513.4 209.7 510.9 210.2 508.4 210.6 505.9 211 503.4 211.4 500.9 211.8 498.5 212.2 496 212.7 493.5 213.1 491 213.5 488.5 213.9 486.1 214.3 483.6 214.8 481.1 215.2 478.6 215.6 476.1 216 473.6 216.4 471.1 216.9 468.6 217.3 466.2 217.7 463.7 218.1 461.2 218.5 458.7 219 456.2 219.4 453.7 219.8 451.2 220.2 448.7 220.6 446.1 221.1 443.6 221.5 441.1 221.9 438.6 222.3 436.1 222.7 433.6 223.1 431.1 223.6 428.6 224 426.1 224.4 423.6 224.8 421.1 225.2 418.5 225.6 416 226 413.5 226.5 411 226.9 408.5 227.3 406 227.7 403.5 228.1 401 228.5 398.5 228.9 396 229.3 393.5 229.7 390.9 230.2 388.4 230.6 385.9 231 383.4 231.4 380.9 231.8 378.4 232.2 375.9 232.6 373.4 233 370.9 233.4 368.4 233.8 365.9 234.2 363.4 234.6 361 235 358.5 235.4 356 235.8 353.5 236.2 351 236.6 348.5 237 346.1 237.4 343.6 237.8 341.1 238.2 338.6 238.6 336.2 239 333.7 239.4 331.2 239.7 328.8 240.1 326.3 240.5 323.9 240.9 321.4 241.3 319 241.7 316.5 242.1 314.1 242.4 311.7 242.8 309.2 243.2 306.8 243.6 304.4 244 301.9 244.3 299.5 244.7 296.9 245.1 294.4 245.5 291.8 245.9 289.2 246.3 286.7 246.7 284.1 247.1 281.6 247.5 279 247.8 276.5 248.2 273.9 248.6 271.4 249 268.9 249.4 266.3 249.8 263.8 250.1 261.3 250.5 258.8 250.9 256.2 251.3 253.7 251.6 251.2 252 248.7 252.4 246.2 252.8 243.7 253.1 241.2 253.5 238.7 253.9 236.1 254.2 233.6 254.6 231.1 255 228.6 255.3 226.1 255.7 223.7 256.1 221.2 256.4 218.7 256.8 216.2 257.1 213.7 257.5 211.2 257.9 208.7 258.2 206.2 258.6 203.7 258.9 201.2 259.3 198.8 259.7 196.3 260 193.8 260.4 191.3 260.7 188.8 261.1 186.3 261.5 183.9 261.8 181.4 262.2 178.9 262.5 176.4 262.9 173.9 263.2 171.4 263.6 168.9 264 166.5 264.3 164 264.7 161.5 265 159 265.4 156.5 265.8 154 266.1 151.5 266.5 149 266.8 146.5 267.2 144 267.6 141.5 267.9 139.1 268.3 136.6 268.7 134 269 131.5 269.4 129 269.8 126.5 270.1Z" fill="url(#gr)"/><path d="M132.5 287.9 135 287.5 137.5 287.1 140 286.7 142.5 286.4 145 286 147.5 285.6 150 285.2 152.5 284.9 154.9 284.5 157.4 284.1 159.9 283.7 162.4 283.4 164.9 283 167.4 282.6 169.8 282.3 172.3 281.9 174.8 281.5 177.3 281.1 179.8 280.8 182.2 280.4 184.7 280 187.2 279.7 189.7 279.3 192.2 278.9 194.6 278.6 197.1 278.2 199.6 277.8 202.1 277.4 204.6 277.1 207 276.7 209.5 276.3 212 276 214.5 275.6 217 275.2 219.5 274.9 221.9 274.5 224.4 274.1 226.9 273.7 229.4 273.4 231.9 273 234.4 272.6 236.9 272.2 239.4 271.8 241.9 271.5 244.4 271.1 246.9 270.7 249.5 270.3 252 269.9 254.5 269.6 257 269.2 259.5 268.8 262.1 268.4 264.6 268 267.1 267.6 269.7 267.2 272.2 266.8 274.8 266.4 277.3 266 279.9 265.6 282.4 265.2 285 264.8 287.6 264.4 290.1 264 292.7 263.6 295.3 263.2 297.9 262.8 300.5 262.4 302.9 262 305.3 261.6 307.7 261.2 310.1 260.9 312.5 260.5 315 260.1 317.4 259.7 319.8 259.3 322.3 258.9 324.7 258.5 327.2 258.1 329.6 257.7 332.1 257.3 334.5 256.9 337 256.5 339.4 256.1 341.9 255.7 344.4 255.3 346.9 254.9 349.3 254.5 351.8 254.1 354.3 253.7 356.8 253.3 359.3 252.9 361.7 252.5 364.2 252.1 366.7 251.6 369.2 251.2 371.7 250.8 374.2 250.4 376.7 250 379.2 249.6 381.7 249.2 384.2 248.7 386.7 248.3 389.3 247.9 391.8 247.5 394.3 247.1 396.8 246.7 399.3 246.2 401.8 245.8 404.3 245.4 406.8 245 409.4 244.5 411.9 244.1 414.4 243.7 416.9 243.3 419.4 242.8 422 242.4 424.5 242 427 241.6 429.5 241.1 432 240.7 434.5 240.3 437.1 239.9 439.6 239.4 442.1 239 444.6 238.6 447.1 238.2 449.6 237.7 452.1 237.3 454.6 236.9 457.1 236.4 459.6 236 462.2 235.6 464.7 235.2 467.2 234.7 469.7 234.3 472.2 233.9 474.6 233.4 477.1 233 479.6 232.6 482.1 232.2 484.6 231.7 487.1 231.3 489.6 230.9 492 230.4 494.5 230 497 229.6 499.5 229.2 502 228.7 504.4 228.3 506.9 227.9 509.4 227.5 511.9 227 514.4 226.6 516.9 226.2 519.4 225.8 521.8 225.3 524.3 224.9 526.8 224.5 529.3 224.1 531.8 223.7 534.3 223.2 536.8 222.8 539.2 222.4 541.7 222 544.2 221.6 546.7 221.1 549.2 220.7 551.7 220.3 554.2 219.9 556.7 219.5 559.1 219 561.6 218.6 564.1 218.2 566.6 217.8 569.1 217.3 571.6 216.9 574 216.5 576.5 216.1 579 215.6 581.5 215.2 584 214.8 586.5 214.4 588.9 213.9 591.4 213.5 593.9 213.1 596.4 212.6 598.8 212.2 601.3 211.8 603.8 211.3 606.3 210.9 608.7 210.5 611.2 210 613.7 209.6 616.2 209.1 618.6 208.7 621.1 208.3 623.5 207.8 626 207.4 628.5 206.9 630.9 206.4 633.4 206 635.9 205.5 638.3 205.1 640.8 204.6 643.2 204.2 645.7 203.7 648.1 203.2 650.6 202.7 653 202.3 655.4 201.8 657.9 201.3 660.3 200.8 662.8 200.3 665.2 199.9 667.6 199.4 670.1 198.9 672.5 198.4 674.9 197.9 677.3 197.4 679.8 196.9 682.2 196.4 684.6 195.9 687.1 195.3 689.6 194.8 692.2 194.2 694.7 193.7 697.2 193.1 699.8 192.6 702.4 192 704.9 191.4 707.5 190.9 710.1 190.3 712.7 189.7 715.3 189.1 717.9 188.5 720.5 187.9 723.1 187.3 725.7 186.7 728.3 186.1 730.9 185.5 733.5 184.9 736.1 184.2 738.8 183.6 741.4 183 744 182.4 746.6 181.7 749.2 181.1 751.8 180.5 754.4 179.8 757.1 179.2 759.7 178.6 762.3 177.9 764.8 177.3 767.4 176.7 770 176 772.6 175.4 775.2 174.8 777.7 174.1 780.3 173.5 782.8 172.8 785.4 172.2 787.9 171.6 790.4 170.9 792.9 170.3 795.4 169.7 797.9 169.1 800.4 168.4 802.8 167.8 805.3 167.2 807.7 166.6 810.1 166 812.5 165.4 814.9 164.8 817.3 164.2 819.6 163.6 822 163 824.3 162.4 826.6 161.8 828.9 161.2 831.2 160.6 833.4 160 835.6 159.5 837.8 158.9 840 158.4 842.2 157.8 844.3 157.3 846.5 156.7 848.6 156.2 850.6 155.7 852.7 155.2 854.7 154.6 856.7 154.1 858.7 153.6 860.6 153.2 863.6 152.4 866.5 151.7 869.4 151 872.2 150.3 875 149.6 877.8 148.9 880.5 148.2 883.3 147.5 885.9 146.8 888.6 146.2 891.2 145.5 893.8 144.9 896.3 144.3 898.8 143.6 901.3 143 903.8 142.4 906.2 141.8 908.6 141.1 910.9 140.5 913.3 139.9 915.6 139.3 917.8 138.7 920 138.1 922.2 137.5 924.4 136.9 926.5 136.3 928.6 135.8 930.7 135.2 932.7 134.6 934.7 134 936.7 133.4 939.2 132.6 941.7 131.9 944 131.1 946.3 130.3 948.5 129.6 950.7 128.9 952.8 128.1 954.9 127.4 956.9 126.7 958.9 125.9 960.8 125.2 962.8 124.5 964.7 123.8 966.6 123.1 968.4 122.4 970.3 121.8 971.8 121.2 973.3 120.6 974.8 120.1 976.2 119.6 977.7 119 979 118.5 980.4 118 981.8 117.4 983.1 116.9 984.5 116.4 985.8 115.9 987.2 115.3 988.6 114.8 989.9 114.3 991.3 113.7 992.7 113.2 994.2 112.6 995.7 112 997.3 111.4 998.8 110.8 1000.4 110.2 1002 109.6 1003.6 109 1005.1 108.4 1006.7 107.8 1008.3 107.2 1009.8 106.5 1011.3 105.9 1012.8 105.3 1014.2 104.7 1015.6 104.1 1016.9 103.6 1017.9 103.1 1018.9 102.7 1019.8 102.2 1020.7 101.8 1021.6 101.4 1022.4 100.9 1023.3 100.5 1024.1 100.1 1024.9 99.7 1025.8 99.2 1026.6 98.8 1027.4 98.4 1028.3 97.9 1029.2 97.5 1030 97 1031 96.6 1032.1 96 1033.3 95.4 1034.5 94.9 1035.7 94.3 1037 93.6 1038.3 93 1039.6 92.4 1040.8 91.8 1042.1 91.2 1043.4 90.5 1044.7 89.9 1046 89.3 1047.2 88.6 1048.4 88 1049.6 87.4 1050.7 86.8 1051.6 86.3 1052.5 85.8 1053.4 85.3 1054.3 84.8 1055.1 84.3 1055.9 83.8 1056.7 83.3 1057.5 82.8 1058.3 82.3 1059.1 81.8 1059.9 81.3 1060.7 80.8 1061.5 80.3 1062.3 79.8 1063.1 79.3 1064 78.8 1064.9 78.2 1065.9 77.6 1066.9 77 1068 76.3 1069 75.7 1070.1 75 1071.1 74.4 1072.2 73.7 1073.2 73.1 1074.3 72.4 1075.3 71.8 1076.3 71.2 1077.2 70.6 1078.1 70 1079 69.4 1079.8 68.9 1080.3 68.5 1080.7 68.2 1081.2 67.9 1081.6 67.6 1082 67.3 1082.4 67 1082.8 66.7 1083.2 66.4 1083.6 66.1 1084 65.8 1084.4 65.5 1084.8 65.2 1085.1 64.9 1085.5 64.6 1085.9 64.2 1086.3 63.9 1086.7 63.5 1087.2 63.1 1087.6 62.7 1088 62.3 1088.4 61.9 1088.9 61.5 1089.3 61.1 1089.7 60.7 1090.1 60.3 1090.6 59.8 1091 59.4 1091.4 59 1091.8 58.6 1092.2 58.1 1092.6 57.7 1092.9 57.3 1093.3 56.9 1093.6 56.5 1093.9 56.1 1094.3 55.7 1094.6 55.3 1094.9 54.9 1095.2 54.5 1095.5 54.1 1095.8 53.6 1096.1 53.2 1096.4 52.8 1096.7 52.4 1097 51.9 1097.3 51.5 1097.6 51.1 1097.8 50.6 1098.2 50.1 1098.5 49.6 1098.8 49 1099.1 48.5 1099.3 47.9 1099.6 47.4 1099.9 46.8 1100.2 46.2 1100.5 45.7 1100.7 45.1 1101 44.5 1101.3 44 1101.5 43.4 1101.7 42.8 1102 42.3 1102.2 41.7 1102.4 41.2 1102.6 40.7 1102.8 40.1 1103 39.6 1103.2 39.1 1103.3 38.5 1103.5 38 1103.7 37.5 1103.8 37 1104 36.5 1104.1 35.9 1104.3 35.4 1104.4 34.9 1104.5 34.5 1104.7 34 1104.8 33.5 1104.9 33.1 1105 32.8 1105.1 32.4 1105.2 32 1105.3 31.7 1105.4 31.3 1105.4 30.9 1105.5 30.6 1105.6 30.3 1105.7 29.9 1105.8 29.6 1105.8 29.2 1105.9 28.9 1106 28.5 1106.1 28.2 1106.2 27.9 1103.2 27.1 1103.2 27.5 1103.1 27.8 1103 28.2 1102.9 28.5 1102.8 28.9 1102.7 29.2 1102.6 29.5 1102.6 29.9 1102.5 30.2 1102.4 30.6 1102.3 30.9 1102.2 31.3 1102.1 31.6 1102 32 1101.9 32.3 1101.8 32.7 1101.7 33.1 1101.5 33.6 1101.4 34.1 1101.2 34.6 1101.1 35.1 1101 35.5 1100.8 36 1100.6 36.5 1100.5 37 1100.3 37.5 1100.1 38 1100 38.5 1099.8 39 1099.6 39.5 1099.4 40 1099.2 40.5 1099 41 1098.7 41.5 1098.5 42.1 1098.3 42.6 1098 43.2 1097.8 43.7 1097.5 44.2 1097.2 44.8 1097 45.3 1096.7 45.8 1096.4 46.3 1096.1 46.9 1095.8 47.4 1095.5 47.9 1095.2 48.3 1095 48.8 1094.7 49.2 1094.4 49.6 1094.1 50 1093.9 50.4 1093.6 50.8 1093.3 51.2 1093 51.6 1092.7 52 1092.5 52.3 1092.2 52.7 1091.9 53.1 1091.6 53.5 1091.2 53.8 1090.9 54.2 1090.6 54.6 1090.3 54.9 1089.9 55.3 1089.5 55.7 1089.2 56.1 1088.8 56.5 1088.4 56.9 1088 57.3 1087.6 57.7 1087.2 58.1 1086.8 58.5 1086.4 58.9 1086 59.3 1085.5 59.7 1085.1 60 1084.7 60.4 1084.3 60.8 1083.9 61.1 1083.5 61.4 1083.2 61.7 1082.8 62 1082.4 62.3 1082.1 62.6 1081.7 62.9 1081.4 63.1 1081 63.4 1080.6 63.7 1080.2 63.9 1079.8 64.2 1079.4 64.5 1079 64.8 1078.6 65.1 1078.1 65.4 1077.6 65.7 1076.9 66.2 1076 66.8 1075.1 67.3 1074.2 67.9 1073.2 68.5 1072.2 69.1 1071.2 69.7 1070.1 70.3 1069.1 71 1068 71.6 1066.9 72.2 1065.9 72.8 1064.8 73.5 1063.8 74.1 1062.8 74.7 1061.8 75.2 1061 75.7 1060.1 76.3 1059.3 76.8 1058.5 77.3 1057.7 77.7 1056.9 78.2 1056.1 78.7 1055.3 79.2 1054.5 79.7 1053.7 80.1 1052.9 80.6 1052.1 81.1 1051.3 81.6 1050.4 82.1 1049.6 82.5 1048.7 83 1047.6 83.6 1046.4 84.2 1045.2 84.8 1044 85.4 1042.8 86 1041.5 86.7 1040.3 87.3 1039 87.9 1037.7 88.5 1036.4 89.1 1035.1 89.7 1033.8 90.3 1032.6 90.9 1031.4 91.5 1030.2 92.1 1029 92.6 1028.1 93.1 1027.2 93.5 1026.3 94 1025.4 94.4 1024.6 94.9 1023.7 95.3 1022.9 95.7 1022.1 96.1 1021.3 96.5 1020.5 96.9 1019.6 97.3 1018.8 97.8 1017.9 98.2 1017 98.6 1016.1 99 1015.1 99.4 1013.8 100 1012.4 100.6 1011 101.2 1009.6 101.7 1008.1 102.3 1006.6 102.9 1005.1 103.5 1003.5 104.1 1001.9 104.7 1000.4 105.3 998.8 105.9 997.2 106.5 995.6 107.1 994.1 107.7 992.6 108.3 991.1 108.8 989.6 109.4 988.3 109.9 986.9 110.4 985.5 111 984.2 111.5 982.8 112 981.5 112.5 980.1 113 978.7 113.5 977.4 114.1 976 114.6 974.6 115.1 973.1 115.6 971.7 116.2 970.2 116.7 968.7 117.2 966.8 117.9 964.9 118.6 963 119.3 961.1 120 959.2 120.7 957.2 121.4 955.3 122.1 953.2 122.8 951.2 123.5 949.1 124.2 947 124.9 944.8 125.7 942.5 126.4 940.2 127.1 937.8 127.9 935.3 128.6 933.3 129.2 931.3 129.8 929.3 130.3 927.3 130.9 925.2 131.5 923.1 132.1 920.9 132.7 918.7 133.2 916.5 133.8 914.3 134.4 912 135 909.7 135.6 907.3 136.2 904.9 136.8 902.5 137.4 900.1 138 897.6 138.6 895.1 139.3 892.5 139.9 890 140.5 887.3 141.2 884.7 141.8 882 142.5 879.3 143.1 876.6 143.8 873.8 144.5 871 145.2 868.1 145.9 865.2 146.6 862.3 147.3 859.4 148 857.4 148.5 855.4 149 853.4 149.5 851.4 150 849.3 150.5 847.3 151.1 845.2 151.6 843 152.1 840.9 152.7 838.7 153.2 836.5 153.7 834.3 154.3 832.1 154.9 829.9 155.4 827.6 156 825.3 156.6 823 157.2 820.7 157.7 818.3 158.3 816 158.9 813.6 159.5 811.2 160.1 808.8 160.7 806.4 161.3 803.9 161.9 801.5 162.5 799 163.1 796.6 163.8 794.1 164.4 791.6 165 789.1 165.6 786.6 166.2 784 166.9 781.5 167.5 778.9 168.1 776.4 168.7 773.8 169.4 771.3 170 768.7 170.6 766.1 171.3 763.5 171.9 760.9 172.5 758.3 173.1 755.7 173.8 753.1 174.4 750.5 175 747.9 175.6 745.3 176.2 742.7 176.9 740.1 177.5 737.5 178.1 734.8 178.7 732.2 179.3 729.6 179.9 727 180.5 724.4 181.1 721.8 181.7 719.2 182.3 716.6 182.9 714 183.5 711.4 184.1 708.8 184.7 706.2 185.2 703.7 185.8 701.1 186.4 698.6 186.9 696 187.5 693.5 188 690.9 188.6 688.4 189.1 685.9 189.6 683.4 190.1 681 190.6 678.6 191.1 676.2 191.6 673.7 192.1 671.3 192.6 668.9 193.1 666.5 193.6 664 194.1 661.6 194.5 659.2 195 656.7 195.5 654.3 196 651.9 196.4 649.4 196.9 647 197.4 644.5 197.8 642.1 198.3 639.7 198.7 637.2 199.2 634.8 199.6 632.3 200.1 629.8 200.5 627.4 201 624.9 201.4 622.5 201.9 620 202.3 617.6 202.8 615.1 203.2 612.6 203.7 610.2 204.1 607.7 204.5 605.2 205 602.8 205.4 600.3 205.8 597.8 206.3 595.3 206.7 592.9 207.1 590.4 207.6 587.9 208 585.4 208.4 583 208.8 580.5 209.3 578 209.7 575.5 210.1 573 210.5 570.5 211 568.1 211.4 565.6 211.8 563.1 212.2 560.6 212.6 558.1 213.1 555.6 213.5 553.2 213.9 550.7 214.3 548.2 214.7 545.7 215.1 543.2 215.6 540.7 216 538.2 216.4 535.7 216.8 533.3 217.2 530.8 217.7 528.3 218.1 525.8 218.5 523.3 218.9 520.8 219.3 518.3 219.8 515.8 220.2 513.4 220.6 510.9 221 508.4 221.4 505.9 221.9 503.4 222.3 500.9 222.7 498.4 223.1 496 223.6 493.5 224 491 224.4 488.5 224.8 486 225.3 483.6 225.7 481.1 226.1 478.6 226.5 476.1 227 473.6 227.4 471.1 227.8 468.6 228.3 466.1 228.7 463.6 229.1 461.1 229.5 458.6 230 456.1 230.4 453.6 230.8 451.1 231.2 448.6 231.7 446.1 232.1 443.6 232.5 441.1 232.9 438.5 233.4 436 233.8 433.5 234.2 431 234.6 428.5 235.1 426 235.5 423.4 235.9 420.9 236.3 418.4 236.8 415.9 237.2 413.4 237.6 410.9 238 408.3 238.4 405.8 238.9 403.3 239.3 400.8 239.7 398.3 240.1 395.8 240.5 393.3 241 390.7 241.4 388.2 241.8 385.7 242.2 383.2 242.6 380.7 243 378.2 243.5 375.7 243.9 373.2 244.3 370.7 244.7 368.2 245.1 365.7 245.5 363.2 245.9 360.7 246.3 358.2 246.7 355.8 247.1 353.3 247.6 350.8 248 348.3 248.4 345.8 248.8 343.4 249.2 340.9 249.6 338.4 250 336 250.4 333.5 250.8 331.1 251.2 328.6 251.6 326.2 251.9 323.7 252.3 321.3 252.7 318.8 253.1 316.4 253.5 314 253.9 311.6 254.3 309.1 254.7 306.7 255.1 304.3 255.4 301.9 255.8 299.5 256.2 296.9 256.6 294.3 257 291.7 257.4 289.2 257.8 286.6 258.2 284 258.6 281.5 259 278.9 259.4 276.4 259.8 273.8 260.2 271.3 260.6 268.7 261 266.2 261.4 263.6 261.8 261.1 262.2 258.6 262.6 256.1 262.9 253.5 263.3 251 263.7 248.5 264.1 246 264.5 243.5 264.8 241 265.2 238.5 265.6 236 266 233.5 266.4 231 266.7 228.5 267.1 226 267.5 223.5 267.8 221 268.2 218.5 268.6 216 269 213.5 269.3 211.1 269.7 208.6 270.1 206.1 270.4 203.6 270.8 201.1 271.2 198.7 271.5 196.2 271.9 193.7 272.3 191.2 272.6 188.7 273 186.3 273.4 183.8 273.7 181.3 274.1 178.8 274.5 176.4 274.8 173.9 275.2 171.4 275.6 168.9 275.9 166.4 276.3 163.9 276.7 161.5 277.1 159 277.4 156.5 277.8 154 278.2 151.5 278.5 149 278.9 146.5 279.3 144 279.7 141.5 280 139 280.4 136.5 280.8 134 281.2 131.5 281.5Z" fill="url(#gr)"/></g>
<g clip-path="url(#cl)"><path d="M9.8 732.5h14v12h-14zM16.1 729.5v18M26.2 725.5h14v12h-14zM32.5 722.5v18M42.7 718.4h14v12h-14zM49.0 715.4v18M59.1 711.4h14v12h-14zM65.4 708.4v18M75.6 704.5h14v12h-14zM81.9 701.5v18M92.2 697.6h14v12h-14zM98.5 694.6v18M108.8 690.9h14v12h-14zM115.1 687.9v18M125.3 684.2h14v12h-14zM131.6 681.2v18M141.9 677.4h14v12h-14zM148.2 674.4v18M158.5 670.7h14v12h-14zM164.8 667.7v18" fill="none" stroke="#86f386" stroke-width="1" opacity="1"/><path d="M18.0 741.0h14v12h-14zM24.3 738.0v18M34.4 734.0h14v12h-14zM40.7 731.0v18M50.9 726.9h14v12h-14zM57.2 723.9v18M67.4 719.9h14v12h-14zM73.7 716.9v18M83.9 713.1h14v12h-14zM90.2 710.1v18M100.5 706.3h14v12h-14zM106.8 703.3v18M117.0 699.5h14v12h-14zM123.3 696.5v18M133.6 692.8h14v12h-14zM139.9 689.8v18M150.2 686.0h14v12h-14zM156.5 683.0v18M166.8 679.3h14v12h-14zM173.1 676.3v18" fill="none" stroke="#86f386" stroke-width="1" opacity="0.9"/><path d="M42.2 743.2h14v12h-14zM48.5 740.2v18M58.7 736.1h14v12h-14zM65.0 733.1v18M75.1 728.9h14v12h-14zM81.4 725.9v18M91.5 721.8h14v12h-14zM97.8 718.8v18M107.9 714.7h14v12h-14zM114.2 711.7v18M124.4 707.7h14v12h-14zM130.7 704.7v18M140.9 700.8h14v12h-14zM147.2 697.8v18M157.4 693.8h14v12h-14zM163.7 690.8v18M173.8 686.8h14v12h-14zM180.1 683.8v18M190.3 679.7h14v12h-14zM196.6 676.7v18M206.7 672.6h14v12h-14zM213.0 669.6v18" fill="none" stroke="#86f386" stroke-width="1" opacity="1"/><path d="M50.5 751.7h14v12h-14zM56.8 748.7v18M66.9 744.5h14v12h-14zM73.2 741.5v18M83.3 737.3h14v12h-14zM89.6 734.3v18M99.7 730.2h14v12h-14zM106.0 727.2v18M116.2 723.2h14v12h-14zM122.5 720.2v18M132.7 716.2h14v12h-14zM139.0 713.2v18M149.2 709.3h14v12h-14zM155.5 706.3v18M165.6 702.3h14v12h-14zM171.9 699.3v18M182.1 695.2h14v12h-14zM188.4 692.2v18M198.5 688.2h14v12h-14zM204.8 685.2v18M215.0 681.1h14v12h-14zM221.3 678.1v18" fill="none" stroke="#86f386" stroke-width="1" opacity="0.9"/><path d="M103.5 761.5h14v12h-14zM109.8 758.5v18M119.9 754.3h14v12h-14zM126.2 751.3v18M136.3 747.1h14v12h-14zM142.6 744.1v18M152.6 739.8h14v12h-14zM158.9 736.8v18M169.0 732.6h14v12h-14zM175.3 729.6v18M185.3 725.1h14v12h-14zM191.6 722.1v18M201.5 717.5h14v12h-14zM207.8 714.5v18M217.6 709.8h14v12h-14zM223.9 706.8v18M233.8 702.0h14v12h-14zM240.1 699.0v18M249.8 694.2h14v12h-14zM256.1 691.2v18M265.8 686.2h14v12h-14zM272.1 683.2v18" fill="none" stroke="#86f386" stroke-width="1" opacity="1"/><path d="M111.8 769.9h14v12h-14zM118.1 766.9v18M128.2 762.7h14v12h-14zM134.5 759.7v18M144.5 755.4h14v12h-14zM150.8 752.4v18M160.9 748.2h14v12h-14zM167.2 745.2v18M177.2 740.8h14v12h-14zM183.5 737.8v18M193.5 733.3h14v12h-14zM199.8 730.3v18M209.6 725.6h14v12h-14zM215.9 722.6v18M225.8 717.9h14v12h-14zM232.1 714.9v18M241.9 710.1h14v12h-14zM248.2 707.1v18M257.9 702.1h14v12h-14zM264.2 699.1v18" fill="none" stroke="#86f386" stroke-width="1" opacity="0.9"/><path d="M140.0 773.5h14v12h-14zM146.3 770.5v18M156.2 765.9h14v12h-14zM162.5 762.9v18M172.4 758.2h14v12h-14zM178.7 755.2v18M188.4 750.2h14v12h-14zM194.7 747.2v18M204.2 741.8h14v12h-14zM210.5 738.8v18M220.0 733.5h14v12h-14zM226.3 730.5v18M236.0 725.4h14v12h-14zM242.3 722.4v18M251.9 717.2h14v12h-14zM258.2 714.2v18M267.8 708.9h14v12h-14zM274.1 705.9v18M283.6 700.6h14v12h-14zM289.9 697.6v18M299.4 692.1h14v12h-14zM305.7 689.1v18" fill="none" stroke="#86f386" stroke-width="1" opacity="1"/><path d="M148.2 781.6h14v12h-14zM154.5 778.6v18M164.4 774.0h14v12h-14zM170.7 771.0v18M180.5 766.2h14v12h-14zM186.8 763.2v18M196.4 758.0h14v12h-14zM202.7 755.0v18M212.2 749.5h14v12h-14zM218.5 746.5v18M228.1 741.4h14v12h-14zM234.4 738.4v18M244.1 733.2h14v12h-14zM250.4 730.2v18M260.0 725.0h14v12h-14zM266.3 722.0v18M275.8 716.7h14v12h-14zM282.1 713.7v18M291.6 708.3h14v12h-14zM297.9 705.3v18M307.4 699.9h14v12h-14zM313.7 696.9v18" fill="none" stroke="#86f386" stroke-width="1" opacity="0.9"/><path d="M432 478.5 444 478.8" fill="none" stroke="#2f7fd6" stroke-width="1.2"/><path d="M585.5 480 600.6 480.3" fill="none" stroke="#2f7fd6" stroke-width="1.2"/><path d="M551.3 547 551.3 592.0" fill="none" stroke="#111" stroke-width="1.2"/><path d="M481.2 611.2 567.5 621.2" fill="none" stroke="#2f7fd6" stroke-width="1.2"/><path d="M481.2 611.2 501.2 614.0" fill="none" stroke="#111" stroke-width="1.2"/><path d="M501.2 614 499.5 770.0" fill="none" stroke="#111" stroke-width="1.2"/><path d="M396.5 660 396.5 753.0" fill="none" stroke="#0a0ac8" stroke-width="2.4"/><path d="M543 591h14M550 585v12M545 589l10 4" stroke="#30e030" stroke-width="1" fill="none"/><path d="M491.5 767h14M498.5 761v12M493.5 765l10 4" stroke="#30e030" stroke-width="1" fill="none"/><path d="M390.5 751h14M397.5 745v12M392.5 749l10 4" stroke="#30e030" stroke-width="1" fill="none"/><path d="M166.8 651.8 171.3 649.6 175.8 647.4 180.3 645.3 184.8 643.1 189.4 641 193.9 638.9 198.4 636.7 202.9 634.5 207.4 632.4 211.9 630.1 216.4 627.9 220.9 625.7 225.5 623.3 230 621 234.4 618.7 238.9 616.3 243.4 613.8 247.9 611.3 252.5 608.7 257 606.2 261.5 603.6 266 601 270.5 598.5 275 595.9 279.3 593.4 283.6 591 287.9 588.6 292 586.2 296 584 300.7 581.4 305.3 578.9 309.7 576.6 314 574.2 318.2 572 322.5 569.7 326.7 567.4 331 565 335.4 562.6 340 560 344.2 557.6 348.5 555.2 352.9 552.7 357.5 550.2 362 547.6 366.6 545 371.2 542.4 375.7 539.7 380.1 537.1 384.4 534.4 388.5 531.8 392.4 529.1 396 526.5 400.3 523.2 404.4 519.9 408.3 516.6 412.1 513.3 415.6 509.9 419 506.6 422.2 503.3 425.3 500 427.8 497.2 430.1 494.5 432.4 491.8 434.5 489 436.5 486.3 438.4 483.5 440.3 480.8 442 478 443.5 475.5 444.8 473 446.1 470.5 447.4 467.9 448.5 465.4 449.6 462.9 450.6 460.4 451.5 458 452.3 455.9 453 453.8 453.7 451.7 454.4 449.6 454.9 447.6 455.4 445.6 455.8 443.6 456 441.6 456.1 439.9 456.2 438.1 456.2 436.5 456.1 434.8 455.9 433.1 455.6 431.4 455.3 429.8 454.8 428.1 454.1 426.2 453.3 424.3 452.4 422.3 451.3 420.4 450.2 418.5 449 416.6 447.7 414.8 446.4 413 445 411.3 443.5 409.7 442 408.1 440.4 406.5 438.7 405 437 403.5 435.4 402 433.8 400.4 490 401 538.7 402.1 540.8 403 542.9 403.9 545.1 404.7 547.2 405.5 549.3 406.4 551.4 407.4 553.5 408.5 555.5 409.7 557.7 411.2 560 412.9 562.2 414.7 564.4 416.6 566.5 418.6 568.6 420.6 570.5 422.7 572.3 424.8 573.9 426.8 575.3 428.8 576.8 430.8 578.1 432.9 579.3 435 580.4 437.2 581.5 439.4 582.4 441.6 583.2 443.8 583.9 446.1 584.5 448.4 585 450.7 585.4 453 585.8 455.4 586.1 457.7 586.3 460 586.5 462.2 586.6 464.4 586.6 466.6 586.6 468.8 586.5 471 586.4 473.3 586.2 475.6 586 478 585.7 481 585.3 484 584.9 487.2 584.4 490.4 583.8 493.6 583.2 496.8 582.4 499.9 581.5 503 580.5 506 579.4 508.9 578.2 511.9 576.9 514.8 575.5 517.6 574.1 520.5 572.6 523.3 571 526 569.3 528.7 567.6 531.4 565.7 534 563.8 536.5 561.9 539.1 559.9 541.6 557.9 544.1 556 546.5 554.2 548.8 552.4 551 550.6 553.3 548.8 555.5 547 557.6 545.1 559.8 543.1 561.9 541 564 538.5 566.3 535.9 568.6 533.3 570.9 530.5 573.2 527.7 575.4 524.8 577.6 521.9 579.8 519 582 516 584.2 513 586.3 510 588.4 507 590.5 503.9 592.6 500.6 594.8 497.2 597.1 493.7 599.5 490 602.1 486.1 604.8 482 607.7 477.8 610.7 473.4 613.8 469 616.9 464.6 620 460.1 623.1 455.6 626.2 451.1 629.2 446.7 632.2 442.2 635.2 437.6 638.3 432.9 641.3 428.1 644.4 423.4 647.5 418.7 650.5 414 653.5 409.4 656.4 404.9 659.1 400.6 661.7 396.4 664.1 392.1 666.5 387.9 668.7 383.8 670.8 379.8 672.7 375.9 674.6 372.2 676.5 368.5 678.2 365 680 362.4 681.4 359.8 682.7 357.4 683.9 355.1 685.1 352.7 686.3 350.4 687.6 348.1 688.8 345.7 690 345.7 696.2Z" fill="#cc0000"/><path d="M345.7 690.0L175.0 647.8M353.2 686.1L181.4 644.8M360.7 682.2L187.8 641.7M368.1 678.4L194.0 638.8M375.5 674.8L200.0 635.9M382.8 671.3L205.9 633.1M389.9 667.6L211.7 630.2M396.9 663.8L217.6 627.3M403.6 659.9L223.5 624.4M410.2 655.9L229.2 621.4M416.7 651.8L234.9 618.4M423.1 647.7L240.4 615.4M429.3 643.7L245.8 612.4M435.5 639.6L251.1 609.5M441.5 635.6L256.3 606.6M447.5 631.7L261.3 603.7M453.3 627.8L266.3 600.9M459.0 623.8L271.2 598.1M464.6 620.0L276.0 595.3M470.1 616.1L280.8 592.6M475.5 612.3L285.6 589.9M480.8 608.5L290.8 586.9M486.1 604.8L296.3 583.8M491.2 601.2L301.9 580.8M496.3 597.7L307.3 577.8M501.4 594.3L312.6 575.0M506.3 590.9L317.8 572.2M511.1 587.7L322.9 569.5M515.7 584.4L327.9 566.8M520.2 581.1L332.9 564.0M524.5 577.8L337.7 561.3M528.7 574.6L342.4 558.6M532.7 571.4L347.2 555.9M536.5 568.1L352.0 553.3M540.2 564.8L356.8 550.5M543.6 561.4L361.7 547.8M546.7 557.9L366.7 545.0M549.7 554.4L371.6 542.1M552.5 550.9L376.4 539.3M555.2 547.5L381.1 536.5M557.9 544.2L385.4 533.7M560.5 540.9L389.6 531.0M563.0 537.6L393.5 528.3M565.4 534.4L397.2 525.6M567.7 531.1L400.8 522.8M569.9 527.9L404.2 520.1M571.8 524.5L407.6 517.3M573.7 521.2L410.7 514.5M575.4 517.9L413.8 511.6M577.0 514.6L416.7 508.8M578.4 511.3L419.6 506.0M579.7 508.0L422.3 503.2M580.9 504.7L425.0 500.4M581.9 501.5L427.5 497.6M582.8 498.2L429.9 494.7M583.5 494.9L432.2 491.9M584.2 491.7L434.4 489.2M584.7 488.6L436.4 486.4M585.1 485.4L438.3 483.7M585.5 482.3L440.1 481.0M585.9 479.3L441.8 478.3M586.2 476.3L443.4 475.7M586.4 473.3L444.8 473.1M586.5 470.4L446.2 470.4M586.6 467.6L447.6 467.5M586.6 464.8L448.9 464.6M586.5 462.0L450.1 461.7M586.2 459.2L451.2 458.9M585.9 456.5L452.2 456.1M585.5 453.8L453.2 453.3M585.1 451.2L454.1 450.6M584.5 448.6L454.8 447.9M583.9 446.0L455.4 445.3M583.1 443.5L455.9 442.7M582.2 441.1L456.1 440.2M581.2 438.8L456.2 437.8M580.1 436.5L456.1 435.5M578.9 434.3L455.9 433.2M577.6 432.1L455.5 431.0M576.2 430.1L455.0 428.9M574.8 428.1L454.4 426.9M573.4 426.1L453.6 424.9M571.9 424.3L452.7 423.0M570.3 422.5L451.7 421.2M568.7 420.8L450.7 419.4M567.0 419.1L449.7 417.7M565.4 417.5L448.6 416.1M563.7 416.0L447.5 414.5M562.0 414.5L446.4 413.0M560.2 413.1L445.2 411.6M558.4 411.8L444.0 410.2M556.6 410.5L442.8 408.9M554.8 409.3L441.5 407.7M552.9 408.2L440.4 406.6M551.0 407.2L439.3 405.6M549.1 406.3L438.4 404.7M547.2 405.5L437.5 403.9M545.2 404.8L436.6 403.1M543.3 404.0L435.8 402.3M541.4 403.2L435.0 401.6M539.5 402.5L434.2 400.8" stroke="#7c0000" stroke-width="0.7" fill="none" opacity="0.95"/><path d="M328.6 685.8 336.1 681.9 343.4 678.2 350.7 674.5 357.9 671 365.1 667.5 372.1 663.9 378.9 660.2 385.6 656.3 392.1 652.4 398.5 648.4 404.8 644.5 411 640.5 417.1 636.6 423 632.7 428.9 628.9 434.6 625.1 440.2 621.3 445.7 617.5 451.2 613.8 456.5 610.1 461.8 606.4 467.1 602.7 472.3 599.2 477.4 595.7 482.5 592.3 487.4 589.1 492.3 585.9 496.9 582.6 501.4 579.4 505.8 576.2 510 573 514.1 569.8 518.1 566.6 521.8 563.4 525.4 560 528.7 556.6 531.9 553.2 534.9 549.8 537.8 546.4 540.6 543.1 543.4 539.9 546 536.7 548.6 533.5 551 530.3 553.3 527.1 555.4 523.8 557.4 520.6 559.2 517.3 561 514 562.5 510.8 564 507.5 565.3 504.3 566.5 501.1 567.5 497.8 568.4 494.6 569.2 491.5 569.9 488.3 570.5 485.3 571 482.2 571.5 479.2 571.9 476.2 572.2 473.3 572.5 470.4 572.7 467.6 572.8 464.7 572.8 461.9 572.7 459.2 572.5 456.5 572.3 453.8 572 451.1 571.6 448.5 571 446 570.4 443.5 569.6 441 568.7 438.7 567.7 436.4 566.6 434.2 565.4 432 564.1 430 562.8 428 561.4 426 559.9 424.2 558.4 422.4 556.9 420.6 555.3 419 553.7 417.4 552.1 415.8 550.4 414.4 548.7 412.9 547 411.6 545.3 410.3 543.5 409.1 541.7 408 539.9 407.1 538 406.2 536.2 405.4 534.4 404.6 532.5 403.8 530.8 403.1 529 402.3" fill="none" stroke="#7c0000" stroke-width="0.7" opacity="0.95"/><path d="M311.6 681.6 318.9 677.8 326.1 674.1 333.3 670.5 340.4 667.1 347.4 663.6 354.3 660.2 361 656.5 367.6 652.8 374 649 380.3 645.1 386.5 641.3 392.6 637.4 398.6 633.6 404.5 629.8 410.2 626.1 415.9 622.4 421.4 618.7 426.9 615 432.2 611.4 437.5 607.8 442.8 604.2 448.1 600.6 453.4 597.1 458.5 593.7 463.6 590.4 468.6 587.2 473.5 584 478.2 580.9 482.7 577.7 487.1 574.5 491.4 571.4 495.6 568.3 499.6 565.1 503.5 561.9 507.2 558.7 510.7 555.3 514.1 552 517.3 548.6 520.4 545.3 523.4 542.1 526.3 538.9 529.1 535.8 531.8 532.6 534.3 529.5 536.7 526.3 539 523.1 541.1 519.9 543.1 516.7 544.9 513.5 546.7 510.3 548.3 507.1 549.7 503.9 551.1 500.7 552.2 497.5 553.3 494.3 554.2 491.2 555 488.1 555.8 485.1 556.4 482.1 557.1 479.1 557.6 476.2 558.1 473.3 558.5 470.4 558.8 467.6 559 464.7 559.2 461.9 559.2 459.1 559.2 456.4 559.1 453.7 558.9 451.1 558.6 448.4 558.2 445.9 557.7 443.4 557 440.9 556.2 438.6 555.3 436.3 554.3 434.1 553.2 431.9 552 429.8 550.7 427.8 549.4 425.9 548 424 546.6 422.2 545.1 420.5 543.6 418.8 542 417.2 540.4 415.7 538.8 414.2 537.2 412.8 535.6 411.4 533.9 410.2 532.2 409 530.4 407.9 528.7 406.9 526.9 406 525.2 405.2 523.5 404.4 521.8 403.7 520.1 402.9 518.5 402.1" fill="none" stroke="#7c0000" stroke-width="0.7" opacity="0.95"/><path d="M294.5 677.4 301.7 673.7 308.8 670.1 315.9 666.5 322.8 663.2 329.7 659.8 336.5 656.4 343.1 652.9 349.6 649.2 355.9 645.5 362.2 641.8 368.3 638 374.3 634.3 380.2 630.6 386 626.9 391.6 623.3 397.2 619.7 402.7 616.1 408 612.6 413.3 609 418.5 605.6 423.8 602 429.1 598.5 434.4 595.1 439.6 591.7 444.7 588.5 449.7 585.3 454.6 582.2 459.4 579.1 464 576 468.4 572.9 472.8 569.8 477 566.8 481.2 563.7 485.2 560.5 489 557.3 492.7 554 496.3 550.7 499.7 547.4 503 544.2 506.1 541 509.2 537.9 512.2 534.8 515 531.7 517.6 528.6 520.2 525.5 522.5 522.4 524.8 519.2 526.9 516 528.9 512.9 530.8 509.7 532.5 506.6 534.1 503.4 535.6 500.3 536.9 497.2 538.1 494 539.2 491 540.2 487.9 541.1 484.9 541.9 481.9 542.6 479 543.3 476.1 543.9 473.3 544.4 470.4 544.9 467.5 545.3 464.7 545.5 461.9 545.7 459.1 545.8 456.4 545.8 453.7 545.8 451 545.6 448.4 545.3 445.8 544.9 443.3 544.4 440.9 543.7 438.5 542.9 436.2 542 434 541 431.8 539.9 429.7 538.7 427.7 537.4 425.8 536.1 423.9 534.7 422.1 533.3 420.4 531.8 418.7 530.3 417.1 528.8 415.5 527.3 414.1 525.7 412.6 524.1 411.3 522.5 410 520.8 408.8 519.2 407.7 517.5 406.7 515.9 405.8 514.2 405 512.6 404.3 511.1 403.5 509.5 402.7 507.9 402.0" fill="none" stroke="#7c0000" stroke-width="0.7" opacity="0.95"/><path d="M277.4 673.1 284.5 669.6 291.5 666 298.5 662.6 305.3 659.3 312 656 318.6 652.7 325.1 649.2 331.5 645.7 337.8 642.1 344 638.4 350 634.8 355.9 631.2 361.7 627.6 367.4 624 373 620.5 378.5 617 383.9 613.5 389.2 610.1 394.4 606.7 399.5 603.3 404.8 599.9 410.2 596.4 415.5 593.1 420.7 589.7 425.9 586.6 430.9 583.5 435.8 580.4 440.6 577.3 445.2 574.3 449.8 571.2 454.2 568.2 458.5 565.2 462.7 562.2 466.8 559.1 470.8 555.9 474.7 552.7 478.5 549.5 482.1 546.3 485.6 543.1 488.9 540 492.1 536.9 495.2 533.9 498.2 530.9 501 527.8 503.6 524.7 506.1 521.6 508.5 518.5 510.7 515.4 512.9 512.3 514.9 509.2 516.8 506.1 518.5 503 520.2 499.9 521.7 496.8 523 493.7 524.2 490.7 525.4 487.7 526.4 484.7 527.4 481.8 528.2 478.9 529 476.1 529.8 473.2 530.4 470.4 531 467.5 531.5 464.7 531.9 461.9 532.2 459.1 532.4 456.3 532.6 453.6 532.7 450.9 532.7 448.3 532.5 445.7 532.2 443.2 531.8 440.8 531.2 438.4 530.5 436.1 529.7 433.9 528.8 431.7 527.8 429.6 526.7 427.6 525.5 425.6 524.2 423.8 522.9 422 521.5 420.2 520.1 418.6 518.7 416.9 517.2 415.4 515.7 413.9 514.2 412.5 512.7 411.1 511.1 409.8 509.5 408.6 507.9 407.5 506.3 406.6 504.8 405.7 503.3 404.9 501.8 404.1 500.3 403.3 498.8 402.6 497.4 401.8" fill="none" stroke="#7c0000" stroke-width="0.7" opacity="0.95"/><path d="M260.4 668.9 267.3 665.4 274.2 662 281.1 658.6 287.7 655.4 294.3 652.2 300.8 648.9 307.2 645.6 313.5 642.1 319.7 638.6 325.8 635.1 331.8 631.6 337.6 628 343.3 624.6 348.9 621.1 354.4 617.7 359.8 614.3 365.1 611 370.3 607.6 375.5 604.3 380.5 601.1 385.8 597.7 391.2 594.3 396.5 591 401.8 587.8 407 584.6 412 581.6 417 578.6 421.8 575.6 426.5 572.6 431.1 569.6 435.5 566.6 439.9 563.7 444.2 560.7 448.5 557.7 452.7 554.6 456.7 551.4 460.7 548.3 464.5 545.1 468.1 542 471.7 538.9 475 535.9 478.3 533 481.3 530 484.3 527 487.1 524 489.7 520.9 492.2 517.8 494.6 514.8 496.9 511.7 499 508.7 501 505.6 502.9 502.6 504.7 499.5 506.4 496.5 507.9 493.4 509.3 490.5 510.6 487.5 511.7 484.6 512.8 481.7 513.8 478.8 514.8 476 515.6 473.2 516.4 470.4 517.1 467.5 517.7 464.7 518.3 461.8 518.7 459 519.1 456.3 519.4 453.6 519.6 450.9 519.7 448.2 519.7 445.7 519.5 443.1 519.1 440.7 518.7 438.3 518.1 436 517.4 433.8 516.6 431.6 515.6 429.5 514.6 427.5 513.5 425.5 512.3 423.6 511 421.8 509.7 420.1 508.4 418.4 507 416.8 505.6 415.2 504.2 413.8 502.7 412.3 501.2 411 499.7 409.7 498.2 408.5 496.7 407.4 495.2 406.4 493.7 405.5 492.3 404.7 490.9 403.9 489.6 403.2 488.2 402.4 486.9 401.6" fill="none" stroke="#7c0000" stroke-width="0.7" opacity="0.95"/><path d="M243.3 664.7 250.2 661.3 257 657.9 263.6 654.6 270.2 651.5 276.6 648.4 283 645.2 289.3 641.9 295.5 638.6 301.6 635.2 307.6 631.8 313.5 628.3 319.2 624.9 324.9 621.5 330.4 618.2 335.8 614.9 341.1 611.6 346.3 608.4 351.5 605.2 356.5 602 361.5 598.8 366.8 595.6 372.2 592.2 377.6 589 382.9 585.8 388.1 582.7 393.2 579.7 398.2 576.8 403 573.8 407.8 570.9 412.4 567.9 416.9 565 421.4 562.1 425.8 559.2 430.2 556.2 434.5 553.2 438.7 550.1 442.9 547 446.9 543.9 450.7 540.9 454.4 537.9 457.9 534.9 461.3 532 464.5 529.1 467.6 526.2 470.5 523.2 473.3 520.2 475.9 517.2 478.4 514.2 480.8 511.1 483.1 508.1 485.3 505.1 487.3 502.1 489.3 499.1 491.1 496.1 492.7 493.1 494.3 490.2 495.7 487.3 497.1 484.4 498.3 481.5 499.4 478.7 500.5 475.9 501.4 473.2 502.3 470.4 503.2 467.5 504 464.6 504.6 461.8 505.2 459 505.7 456.2 506.1 453.5 506.5 450.8 506.7 448.2 506.8 445.6 506.8 443 506.5 440.6 506.2 438.2 505.7 435.9 505.1 433.7 504.4 431.5 503.5 429.4 502.6 427.4 501.5 425.4 500.4 423.5 499.2 421.7 497.9 419.9 496.6 418.3 495.3 416.7 494 415.1 492.6 413.6 491.2 412.2 489.8 410.8 488.3 409.5 486.9 408.3 485.4 407.2 484 406.2 482.7 405.3 481.3 404.5 480.1 403.8 478.8 403 477.6 402.2 476.3 401.5" fill="none" stroke="#7c0000" stroke-width="0.7" opacity="0.95"/><path d="M226.2 660.5 233 657.2 239.7 653.9 246.2 650.7 252.6 647.6 258.9 644.5 265.2 641.5 271.4 638.3 277.5 635 283.5 631.7 289.4 628.4 295.2 625.1 300.9 621.8 306.4 618.5 311.9 615.3 317.2 612.1 322.4 608.9 327.5 605.8 332.6 602.7 337.6 599.6 342.5 596.6 347.8 593.4 353.3 590.1 358.7 586.9 364 583.8 369.2 580.8 374.3 577.8 379.3 574.9 384.2 572.1 389 569.1 393.7 566.3 398.3 563.4 402.8 560.6 407.3 557.7 411.8 554.8 416.3 551.9 420.7 548.8 425 545.8 429.3 542.8 433.3 539.8 437.2 536.8 440.9 534 444.4 531.1 447.7 528.2 450.9 525.3 453.9 522.4 456.8 519.4 459.6 516.5 462.3 513.5 464.8 510.6 467.2 507.6 469.5 504.6 471.7 501.7 473.8 498.7 475.8 495.8 477.6 492.8 479.3 489.9 480.9 487.1 482.4 484.2 483.7 481.4 485 478.6 486.2 475.9 487.3 473.2 488.3 470.4 489.3 467.5 490.2 464.6 491 461.8 491.7 459 492.3 456.2 492.9 453.5 493.4 450.8 493.7 448.1 494 445.5 494 443 493.9 440.5 493.7 438.1 493.3 435.8 492.8 433.5 492.2 431.4 491.4 429.3 490.5 427.2 489.5 425.3 488.5 423.4 487.3 421.6 486.1 419.8 484.9 418.1 483.6 416.5 482.4 415 481.1 413.5 479.7 412 478.3 410.7 476.9 409.4 475.5 408.1 474.2 407 472.8 406.1 471.6 405.2 470.4 404.4 469.2 403.6 468.1 402.8 466.9 402.1 465.8 401.3" fill="none" stroke="#7c0000" stroke-width="0.7" opacity="0.95"/><path d="M209.1 656.3 215.8 653 222.4 649.8 228.8 646.7 235.1 643.7 241.3 640.7 247.4 637.7 253.4 634.6 259.5 631.5 265.4 628.3 271.3 625.1 277 621.9 282.5 618.7 288 615.5 293.3 612.4 298.6 609.3 303.7 606.2 308.8 603.2 313.8 600.2 318.7 597.3 323.6 594.3 328.8 591.2 334.3 588 339.7 584.9 345.1 581.8 350.4 578.8 355.5 576 360.5 573.1 365.5 570.3 370.3 567.4 375 564.6 379.7 561.8 384.3 559 388.9 556.2 393.5 553.4 398.1 550.5 402.7 547.5 407.2 544.6 411.6 541.6 415.9 538.7 419.9 535.8 423.8 533 427.4 530.1 430.9 527.3 434.2 524.5 437.4 521.6 440.4 518.7 443.3 515.8 446.1 512.9 448.8 510 451.3 507.1 453.8 504.2 456.1 501.2 458.4 498.3 460.5 495.4 462.5 492.5 464.3 489.7 466.1 486.8 467.7 484 469.2 481.3 470.6 478.5 471.9 475.8 473.1 473.1 474.2 470.4 475.4 467.5 476.4 464.6 477.3 461.7 478.2 458.9 479 456.1 479.7 453.4 480.3 450.7 480.8 448 481.1 445.4 481.3 442.9 481.3 440.4 481.2 438 480.9 435.7 480.5 433.4 479.9 431.3 479.3 429.2 478.5 427.1 477.5 425.2 476.5 423.3 475.5 421.4 474.3 419.7 473.2 418 472 416.4 470.7 414.8 469.5 413.3 468.2 411.9 466.9 410.5 465.5 409.2 464.2 408 462.9 406.9 461.7 405.9 460.5 405 459.4 404.2 458.3 403.4 457.3 402.7 456.3 401.9 455.3 401.1" fill="none" stroke="#7c0000" stroke-width="0.7" opacity="0.95"/><path d="M192.1 652.1 198.6 648.9 205.1 645.8 211.4 642.7 217.6 639.8 223.6 636.9 229.5 634 235.5 631 241.5 627.9 247.3 624.8 253.1 621.7 258.7 618.6 264.2 615.6 269.6 612.5 274.8 609.5 279.9 606.5 285 603.6 290 600.6 294.9 597.8 299.8 594.9 304.6 592.1 309.8 589.1 315.3 585.9 320.8 582.8 326.2 579.8 331.5 576.9 336.6 574.1 341.7 571.3 346.7 568.5 351.6 565.7 356.4 563 361.1 560.2 365.7 557.5 370.4 554.8 375.2 552 379.9 549.1 384.7 546.3 389.4 543.3 394 540.4 398.5 537.6 402.7 534.7 406.7 532 410.5 529.2 414.1 526.4 417.5 523.7 420.8 520.8 424 518 427 515.1 430 512.3 432.8 509.4 435.5 506.5 438.1 503.7 440.5 500.8 442.9 497.9 445.2 495.1 447.3 492.2 449.4 489.4 451.2 486.6 453 483.9 454.7 481.1 456.2 478.4 457.6 475.7 459 473.1 460.2 470.4 461.5 467.5 462.6 464.6 463.7 461.7 464.7 458.9 465.6 456.1 466.4 453.3 467.2 450.6 467.8 448 468.3 445.4 468.6 442.8 468.7 440.3 468.7 437.9 468.5 435.6 468.2 433.3 467.7 431.2 467.1 429 466.4 427 465.6 425 464.6 423.1 463.6 421.3 462.5 419.5 461.4 417.8 460.3 416.2 459.1 414.7 458 413.1 456.7 411.7 455.5 410.3 454.2 409 452.9 407.8 451.6 406.7 450.5 405.7 449.4 404.8 448.4 404 447.5 403.3 446.6 402.5 445.6 401.7 444.7 401.0" fill="none" stroke="#7c0000" stroke-width="0.7" opacity="0.95"/><path d="M538.7 402.1 540.8 403 542.9 403.9 545.1 404.7 547.2 405.5 549.3 406.4 551.4 407.4 553.5 408.5 555.5 409.7 557.7 411.2 560 412.9 562.2 414.7 564.4 416.6 566.5 418.6 568.6 420.6 570.5 422.7 572.3 424.8 573.9 426.8 575.3 428.8 576.8 430.8 578.1 432.9 579.3 435 580.4 437.2 581.5 439.4 582.4 441.6 583.2 443.8 583.9 446.1 584.5 448.4 585 450.7 585.4 453 585.8 455.4 586.1 457.7 586.3 460 586.5 462.2 586.6 464.4 586.6 466.6 586.6 468.8 586.5 471 586.4 473.3 586.2 475.6 586 478 585.7 481 585.3 484 584.9 487.2 584.4 490.4 583.8 493.6 583.2 496.8 582.4 499.9 581.5 503 580.5 506 579.4 508.9 578.2 511.9 576.9 514.8 575.5 517.6 574.1 520.5 572.6 523.3 571 526 569.3 528.7 567.6 531.4 565.7 534 563.8 536.5 561.9 539.1 559.9 541.6 557.9 544.1 556 546.5 554.2 548.8 552.4 551 550.6 553.3 548.8 555.5 547 557.6 545.1 559.8 543.1 561.9 541 564 538.5 566.3 535.9 568.6 533.3 570.9 530.5 573.2 527.7 575.4 524.8 577.6 521.9 579.8 519 582 516 584.2 513 586.3 510 588.4 507 590.5 503.9 592.6 500.6 594.8 497.2 597.1 493.7 599.5 490 602.1 486.1 604.8 482 607.7 477.8 610.7 473.4 613.8 469 616.9 464.6 620 460.1 623.1 455.6 626.2 451.1 629.2 446.7 632.2 442.2 635.2 437.6 638.3 432.9 641.3 428.1 644.4 423.4 647.5 418.7 650.5 414 653.5 409.4 656.4 404.9 659.1 400.6 661.7 396.4 664.1 392.1 666.5 387.9 668.7 383.8 670.8 379.8 672.7 375.9 674.6 372.2 676.5 368.5 678.2 365 680 362.4 681.4 359.8 682.7 357.4 683.9 355.1 685.1 352.7 686.3 350.4 687.6 348.1 688.8 345.7 690 348.5 695.3 350.8 694 353.1 692.8 355.4 691.5 357.7 690.3 360.1 689 362.5 687.7 365 686.4 367.5 685 371 683.2 374.6 681.4 378.3 679.5 382.2 677.5 386.2 675.5 390.3 673.3 394.6 671 398.9 668.5 403.1 665.9 407.4 663.2 411.9 660.4 416.5 657.4 421.1 654.4 425.8 651.3 430.5 648.1 435.3 645 439.9 641.9 444.5 638.7 449 635.7 453.4 632.7 457.9 629.6 462.4 626.4 466.9 623.3 471.3 620.1 475.7 616.9 480 613.8 484.2 610.8 488.2 607.9 492.1 605.1 495.8 602.5 499.3 600 502.6 597.7 505.8 595.5 509 593.4 512 591.3 515 589.1 518 587 521 584.7 523.9 582.5 526.8 580.2 529.7 578 532.5 575.7 535.3 573.4 538 571 540.6 568.6 543.1 566.2 545.3 564 547.3 561.8 549.2 559.6 551.1 557.3 552.9 555.1 554.7 552.9 556.5 550.6 558.3 548.3 560.2 545.8 562.1 543.3 564.1 540.8 566 538.2 568 535.6 569.8 532.9 571.6 530.2 573.3 527.4 574.9 524.6 576.4 521.7 577.9 518.8 579.2 515.9 580.5 512.9 581.7 509.9 582.9 506.8 583.9 503.7 584.7 500.6 585.5 497.3 586.2 494.1 586.7 490.8 587.2 487.5 587.6 484.3 587.9 481.2 588.2 478.2 588.4 475.8 588.6 473.5 588.7 471.1 588.7 468.9 588.8 466.6 588.7 464.4 588.6 462.1 588.4 459.8 588.1 457.5 587.8 455.1 587.4 452.7 586.9 450.3 586.4 447.9 585.8 445.5 585 443.2 584.2 440.9 583.2 438.6 582.1 436.4 580.9 434.2 579.6 432 578.2 429.8 576.8 427.7 575.2 425.7 573.6 423.7 571.8 421.6 569.8 419.5 567.7 417.4 565.5 415.4 563.3 413.5 561 411.6 558.7 409.9 556.4 408.4 554.2 407.1 552.1 406 549.9 405 547.8 404.1 545.6 403.3 543.5 402.4 541.4 401.6 539.3 400.7Z" fill="#8e0505"/><path d="M180 655.5 345.7 696.2 320 704 292.7 714 278 714 252 705 226 692 203 678.0Z" fill="#e06276" opacity="0.8"/><path d="M222 667 345.7 696.2 292 712.0Z" fill="#a81420" opacity="0.8"/><path d="M291.5 717 296.5 718.5 291.5 720 296.5 721.5 291.5 723 296.5 724.5 291.5 726 296.5 727.5 291.5 729 296.5 730.5 291.5 732 296.5 733.5 291.5 735 296.5 736.5 291.5 738.0" fill="none" stroke="#18c818" stroke-width="1"/><path d="M295 716 307 722 302 738 295 741 295 716.0" fill="none" stroke="#6fe86f" stroke-width="0.8"/><path d="M9.8 710.5L26.2 703.5L26.2 710.0L9.8 717.0ZM26.2 703.5L42.4 696.6L42.4 714.2L26.2 721.1ZM42.4 696.6L58.2 689.8L58.2 714.8L42.4 721.6ZM58.2 689.8L73.8 683.3L73.8 713.8L58.2 720.3ZM73.8 683.3L89.1 676.9L89.1 710.9L73.8 717.3ZM89.1 676.9L104.2 670.7L104.2 707.2L89.1 713.4ZM104.2 670.7L119.0 664.7L119.0 702.9L104.2 708.9ZM119.0 664.7L133.5 658.8L133.5 697.6L119.0 703.5ZM133.5 658.8L147.7 653.1L147.7 692.4L133.5 698.2ZM147.7 653.1L161.4 647.5L161.4 687.4L147.7 693.0ZM161.4 647.5L174.7 642.1L174.7 682.1L161.4 687.5ZM174.7 642.1L187.6 636.8L187.6 676.8L174.7 682.1ZM187.6 636.8L200.1 631.7L200.1 671.7L187.6 676.8ZM200.1 631.7L212.1 626.6L212.1 666.4L200.1 671.5ZM212.1 626.6L223.7 621.6L223.7 660.1L212.1 665.1ZM223.7 621.6L234.8 616.7L234.8 653.9L223.7 658.8ZM234.8 616.7L245.5 612.0L245.5 648.0L234.8 652.7ZM245.5 612.0L255.7 607.5L255.7 642.3L245.5 646.8ZM255.7 607.5L265.5 603.2L265.5 636.5L255.7 640.8ZM265.5 603.2L274.9 599.1L274.9 630.3L265.5 634.4ZM274.9 599.1L283.9 595.2L283.9 624.5L274.9 628.3ZM283.9 595.2L292.6 591.6L292.6 618.9L283.9 622.6ZM292.6 591.6L300.7 587.7L300.7 613.3L292.6 617.1ZM300.7 587.7L308.5 583.8L308.5 607.5L300.7 611.4ZM308.5 583.8L315.8 580.0L315.8 600.6L308.5 604.4ZM315.8 580.0L322.9 576.3L322.9 593.9L315.8 597.7ZM322.9 576.3L329.6 572.6L329.6 587.4L322.9 591.1ZM329.6 572.6L336.1 569.1L336.1 581.1L329.6 584.7ZM336.1 569.1L342.2 565.5L342.2 574.9L336.1 578.4ZM342.2 565.5L348.0 562.1L348.0 568.7L342.2 572.2ZM348.0 562.1L353.6 558.7L353.6 562.7L348.0 566.1ZM353.6 558.7L359.0 555.4L359.0 556.9L353.6 560.2Z" fill="#ff0a0a" stroke="#200000" stroke-width="0.6" stroke-linejoin="round"/><path d="M42.2 721.2L58.7 714.1L58.7 720.6L42.2 727.8ZM58.7 714.1L74.7 707.1L74.7 724.7L58.7 731.7ZM74.7 707.1L90.6 700.2L90.6 725.2L74.7 732.1ZM90.6 700.2L106.1 693.5L106.1 724.0L90.6 730.7ZM106.1 693.5L121.4 687.0L121.4 721.0L106.1 727.5ZM121.4 687.0L136.4 680.7L136.4 717.2L121.4 723.5ZM136.4 680.7L151.1 674.5L151.1 712.6L136.4 718.8ZM151.1 674.5L165.5 668.3L165.5 707.1L151.1 713.2ZM165.5 668.3L179.6 662.3L179.6 701.6L165.5 707.7ZM179.6 662.3L193.2 656.4L193.2 696.3L179.6 702.2ZM193.2 656.4L206.4 650.8L206.4 690.8L193.2 696.4ZM206.4 650.8L219.2 645.2L219.2 685.2L206.4 690.8ZM219.2 645.2L231.5 639.8L231.5 679.8L219.2 685.2ZM231.5 639.8L243.5 634.5L243.5 674.3L231.5 679.7ZM243.5 634.5L255.0 629.2L255.0 667.7L243.5 673.0ZM255.0 629.2L266.0 623.9L266.0 661.2L255.0 666.4ZM266.0 623.9L276.4 618.6L276.4 654.6L266.0 659.9ZM276.4 618.6L286.3 613.5L286.3 648.3L276.4 653.5ZM286.3 613.5L295.8 608.6L295.8 642.0L286.3 646.9ZM295.8 608.6L305.1 604.0L305.1 635.4L295.8 639.9ZM305.1 604.0L313.9 599.8L313.9 629.1L305.1 633.4ZM313.9 599.8L322.4 595.6L322.4 623.1L313.9 627.2ZM322.4 595.6L330.5 591.5L330.5 617.2L322.4 621.3ZM330.5 591.5L338.1 587.5L338.1 611.4L330.5 615.4ZM338.1 587.5L345.5 583.5L345.5 604.3L338.1 608.3ZM345.5 583.5L352.5 579.7L352.5 597.5L345.5 601.4ZM352.5 579.7L359.2 575.9L359.2 590.9L352.5 594.7ZM359.2 575.9L365.6 572.2L365.6 584.5L359.2 588.2ZM365.6 572.2L371.7 568.6L371.7 578.2L365.6 581.8ZM371.7 568.6L377.4 565.0L377.4 571.8L371.7 575.4ZM377.4 565.0L383.0 561.5L383.0 565.7L377.4 569.2ZM383.0 561.5L388.2 558.0L388.2 559.8L383.0 563.2Z" fill="#ff0a0a" stroke="#200000" stroke-width="0.6" stroke-linejoin="round"/><path d="M9.8 710.5v18.0l8.2 -3.5v-9.9M26.2 703.5v17.9l8.1 -3.5v-9.8M42.4 696.6v17.7l7.9 -3.4v-9.7M58.2 689.8v17.6l7.8 -3.3v-9.7M73.8 683.3v17.5l7.6 -3.2v-9.6M89.1 676.9v17.3l7.5 -3.1v-9.5M104.2 670.7v17.2l7.3 -3.0v-9.5M119.0 664.7v17.1l7.2 -2.9v-9.4M133.5 658.8v16.9l7.0 -2.9v-9.3M147.7 653.1v16.8l6.8 -2.8v-9.3M161.4 647.5v16.7l6.6 -2.7v-9.2M174.7 642.1v16.6l6.4 -2.6v-9.1M187.6 636.8v16.5l6.2 -2.5v-9.1M200.1 631.7v16.1l6.0 -2.5v-8.9M212.1 626.6v15.7l5.8 -2.5v-8.7M223.7 621.6v15.4l5.6 -2.4v-8.5M234.8 616.7v15.1l5.4 -2.4v-8.3M245.5 612.0v14.7l5.1 -2.3v-8.1M255.7 607.5v14.4l4.9 -2.2v-7.9M265.5 603.2v14.2l4.7 -2.1v-7.8M274.9 599.1v13.9l4.5 -2.0v-7.6M283.9 595.2v13.6l4.3 -1.8v-7.5M292.6 591.6v13.3l4.2 -1.9v-7.3M300.7 587.7v13.1l4.0 -2.0v-7.2M308.5 583.8v12.8l3.8 -1.9v-7.1M315.8 580.0v12.6l3.7 -1.9v-6.9M322.9 576.3v12.3l3.5 -1.9v-6.8M329.6 572.6v12.1l3.4 -1.8v-6.6M336.1 569.1v11.9l3.3 -1.8v-6.5M342.2 565.5v11.6l3.1 -1.8v-6.4M348.0 562.1v11.4l3.0 -1.8v-6.3M353.6 558.7v11.2l2.9 -1.8v-6.2M359.0 555.4v11.0l2.8 -1.7v-6.1M364.1 552.2v10.8l2.7 -1.7v-6.0M369.1 549.1v10.7l2.6 -1.6v-5.9" fill="none" stroke="#4aa818" stroke-width="1" opacity="0.95"/><path d="M359.6 555.0v11.0M362.2 553.5v10.9M364.7 551.9v10.8M367.1 550.4v10.7M369.6 548.8v10.6M372.0 547.3v10.5M374.3 545.8v10.5M376.7 544.4v10.4M379.0 542.9v10.3M381.2 541.5v10.2M383.4 540.0v10.1M385.6 538.6v10.0M387.8 537.2v10.0M389.9 535.8v9.9M391.9 534.4v9.8M393.9 533.0v9.7M395.9 531.6v9.6M397.9 530.2v9.6M399.8 528.8v9.5M401.6 527.4v9.4M403.5 526.1v9.4M405.3 524.7v9.3M407.1 523.4v9.2M408.8 522.1v9.1M410.6 520.8v9.1M412.3 519.5v9.0M413.9 518.2v9.0M415.6 516.9v9.0M417.2 515.6v8.9M418.9 514.4v8.9M420.5 513.1v8.9M422.1 511.9v8.9M423.7 510.6v8.9M425.3 509.4v8.8M426.8 508.1v8.8M428.4 506.9v8.8M429.9 505.7v8.8M431.5 504.5v8.7M433.0 503.2v8.7M434.5 502.0v8.7M436.0 500.8v8.7M437.5 499.6v8.7M439.0 498.4v8.6M440.4 497.2v8.6M441.9 496.1v8.6M443.4 494.9v8.6M444.8 493.8v8.6M446.3 492.7v8.6M447.7 491.5v8.5M449.2 490.4v8.5M450.6 489.3v8.5M451.9 488.1v8.5M453.3 487.0v8.5M454.7 485.8v8.4M456.0 484.6v8.4M457.3 483.4v8.4M458.5 482.2v8.4M459.7 481.0v8.4M460.9 479.7v8.3M462.0 478.5v8.3M463.1 477.1v8.3M464.1 475.8v8.3M465.1 474.5v8.3M466.1 473.1v8.3M467.0 471.7v8.2M467.9 470.3v8.2M468.8 469.0v8.2M469.6 467.5v8.2M470.3 466.1v8.2M471.1 464.7v8.2M471.7 463.3v8.1M472.4 461.8v8.1M473.0 460.4v8.1M473.6 458.9v8.1M474.2 457.5v8.1M474.7 456.0v8.1M475.1 454.5v8.0M475.5 453.1v8.0M475.9 451.6v8.0M476.2 450.1v8.0M476.5 448.7v8.0M476.8 447.2v8.0M477.0 445.7v8.0M477.3 444.3v8.0M477.4 442.8v8.0M477.6 441.3v8.0M477.7 439.9v8.0M477.8 438.4v8.0M477.9 437.0v8.0M477.9 435.5v8.0M477.8 434.1v8.0M477.7 432.7v8.0M477.6 431.3v8.0M477.4 429.9v8.0M477.2 428.5v8.0M476.9 427.1v8.0M476.6 425.7v8.0M476.3 424.4v8.0M475.9 423.0v8.0M475.4 421.7v8.0M475.0 420.4v8.0M474.5 419.1v8.0M473.9 417.9v8.0M473.3 416.7v8.0M472.7 415.5v8.0M472.0 414.3v8.0M471.3 413.1v8.0M470.6 412.0v8.0M469.9 410.9v8.0M469.1 409.8v8.0M468.3 408.8v8.0M467.5 407.7v8.0M466.7 406.7v8.0M465.8 405.7v8.0M464.9 404.8v8.0M464.1 403.8v8.0M463.2 402.9v8.0M462.3 402.0v8.0M461.3 401.1v8.0M460.4 400.2v8.0M459.5 399.4v8.0M458.5 398.6v8.0M457.5 397.8v8.0M456.5 397.0v8.0M455.6 396.3v8.0M454.6 395.5v8.0M453.6 394.8v8.0M452.6 394.0v8.0M451.6 393.3v8.0M450.6 392.6v8.0M449.6 391.9v8.0M448.7 391.2v8.0M447.7 390.4v8.0M446.7 389.7v8.0M445.8 389.0v8.0M444.8 388.3v8.0M443.8 387.6v8.0M442.9 387.0v8.0M441.9 386.3v8.0M440.9 385.6v8.0M440.0 385.0v8.0M439.0 384.3v8.0M438.0 383.7v8.0M437.1 383.0v8.0M436.1 382.4v8.0M435.2 381.8v8.0M434.2 381.1v8.0M433.3 380.5v8.0M432.4 379.9v8.0M431.4 379.3v8.0M430.5 378.6v8.0M429.6 378.0v8.0M428.6 377.4v8.0" fill="none" stroke="#0a7a0a" stroke-width="0.7" opacity="0.8"/><path d="M42.2 721.2v18.0l8.2 -3.6v-9.9M58.7 714.1v17.9l8.1 -3.5v-9.8M74.7 707.1v17.7l7.9 -3.5v-9.7M90.6 700.2v17.6l7.8 -3.4v-9.7M106.1 693.5v17.5l7.6 -3.3v-9.6M121.4 687.0v17.3l7.5 -3.2v-9.5M136.4 680.7v17.2l7.4 -3.1v-9.5M151.1 674.5v17.1l7.2 -3.0v-9.4M165.5 668.3v17.0l7.0 -3.0v-9.3M179.6 662.3v16.8l6.8 -2.9v-9.3M193.2 656.4v16.7l6.6 -2.8v-9.2M206.4 650.8v16.6l6.4 -2.8v-9.1M219.2 645.2v16.5l6.2 -2.7v-9.1M231.5 639.8v16.1l6.0 -2.7v-8.9M243.5 634.5v15.8l5.8 -2.6v-8.7M255.0 629.2v15.4l5.6 -2.6v-8.5M266.0 623.9v15.1l5.4 -2.7v-8.3M276.4 618.6v14.8l5.1 -2.6v-8.1M286.3 613.5v14.5l4.9 -2.6v-8.0M295.8 608.6v14.2l4.7 -2.4v-7.8M305.1 604.0v13.9l4.5 -2.2v-7.6M313.9 599.8v13.6l4.3 -2.1v-7.5M322.4 595.6v13.4l4.2 -2.1v-7.3M330.5 591.5v13.1l4.0 -2.1v-7.2M338.1 587.5v12.9l3.8 -2.0v-7.1M345.5 583.5v12.6l3.7 -2.0v-6.9M352.5 579.7v12.3l3.5 -2.0v-6.8M359.2 575.9v12.1l3.4 -1.9v-6.7M365.6 572.2v11.9l3.3 -1.9v-6.5M371.7 568.6v11.7l3.1 -1.9v-6.4M377.4 565.0v11.4l3.0 -1.9v-6.3M383.0 561.5v11.2l2.9 -1.9v-6.2M388.2 558.0v11.0l2.8 -1.8v-6.1M393.3 554.7v10.9l2.7 -1.7v-6.0M398.3 551.6v10.7l2.6 -1.7v-5.9" fill="none" stroke="#4aa818" stroke-width="1" opacity="0.95"/><path d="M389.3 557.3v11.0M391.9 555.7v10.9M394.3 554.1v10.8M396.8 552.5v10.7M399.2 550.9v10.6M401.6 549.4v10.5M403.9 547.9v10.5M406.3 546.4v10.4M408.6 545.0v10.3M410.8 543.5v10.2M413.1 542.1v10.1M415.2 540.7v10.0M417.4 539.3v10.0M419.5 538.0v9.9M421.6 536.6v9.8M423.7 535.2v9.7M425.7 533.9v9.6M427.7 532.6v9.6M429.6 531.2v9.5M431.6 529.9v9.4M433.4 528.6v9.4M435.3 527.3v9.3M437.1 526.0v9.2M438.9 524.7v9.1M440.6 523.4v9.1M442.3 522.2v9.0M444.0 520.9v9.0M445.7 519.6v9.0M447.3 518.4v8.9M449.0 517.1v8.9M450.6 515.9v8.9M452.2 514.6v8.9M453.8 513.3v8.9M455.3 512.1v8.8M456.9 510.8v8.8M458.4 509.5v8.8M459.9 508.2v8.8M461.4 507.0v8.8M462.9 505.7v8.7M464.3 504.4v8.7M465.7 503.1v8.7M467.1 501.8v8.7M468.5 500.5v8.7M469.9 499.1v8.6M471.2 497.8v8.6M472.5 496.5v8.6M473.8 495.1v8.6M475.0 493.8v8.6M476.3 492.5v8.5M477.5 491.1v8.5M478.7 489.7v8.5M479.8 488.4v8.5M481.0 487.0v8.5M482.1 485.6v8.4M483.2 484.2v8.4M484.3 482.8v8.4M485.3 481.4v8.4M486.3 480.0v8.4M487.3 478.6v8.3M488.2 477.2v8.3M489.1 475.7v8.3M490.0 474.3v8.3M490.8 472.8v8.3M491.6 471.3v8.3M492.3 469.9v8.2M493.0 468.4v8.2M493.7 466.9v8.2M494.3 465.4v8.2M494.9 463.9v8.2M495.5 462.4v8.2M496.0 460.9v8.1M496.5 459.4v8.1M496.9 457.8v8.1M497.4 456.3v8.1M497.8 454.8v8.1M498.1 453.3v8.1M498.4 451.8v8.0M498.7 450.3v8.0M499.0 448.8v8.0M499.2 447.3v8.0M499.4 445.8v8.0M499.5 444.4v8.0M499.7 442.9v8.0M499.8 441.4v8.0M499.8 439.9v8.0M499.8 438.5v8.0M499.7 437.0v8.0M499.6 435.5v8.0M499.4 434.1v8.0M499.2 432.7v8.0M498.9 431.3v8.0M498.6 429.9v8.0M498.3 428.5v8.0M497.9 427.1v8.0M497.4 425.8v8.0M497.0 424.4v8.0M496.5 423.1v8.0M496.0 421.8v8.0M495.4 420.6v8.0M494.9 419.3v8.0M494.3 418.0v8.0M493.6 416.8v8.0M493.0 415.6v8.0M492.3 414.5v8.0M491.5 413.3v8.0M490.8 412.2v8.0M490.0 411.1v8.0M489.2 410.0v8.0M488.4 408.9v8.0M487.6 407.9v8.0M486.8 406.9v8.0M485.9 405.9v8.0M485.1 404.9v8.0M484.2 403.9v8.0M483.3 402.9v8.0M482.4 402.0v8.0M481.5 401.1v8.0M480.6 400.2v8.0M479.7 399.3v8.0M478.7 398.5v8.0M477.8 397.6v8.0M476.8 396.8v8.0M475.8 396.1v8.0M474.8 395.3v8.0M473.7 394.6v8.0M472.7 393.9v8.0M471.7 393.2v8.0M470.7 392.6v8.0M469.6 391.9v8.0M468.6 391.2v8.0M467.6 390.6v8.0M466.5 389.9v8.0M465.5 389.3v8.0M464.5 388.6v8.0M463.5 388.0v8.0M462.5 387.3v8.0M461.5 386.7v8.0M460.5 386.1v8.0M459.5 385.4v8.0M458.5 384.8v8.0M457.5 384.2v8.0M456.5 383.6v8.0M455.6 383.0v8.0M454.6 382.4v8.0M453.6 381.8v8.0M452.6 381.2v8.0M451.6 380.6v8.0M450.7 380.0v8.0M449.7 379.4v8.0M448.7 378.9v8.0M447.8 378.3v8.0M446.8 377.7v8.0M445.9 377.1v8.0M444.9 376.5v8.0" fill="none" stroke="#0a7a0a" stroke-width="0.7" opacity="0.8"/><path d="M9.8 710.5 13.5 708.9 17.3 707.3 21.1 705.7 24.9 704 28.7 702.4 32.5 700.8 36.3 699.2 40.1 697.5 43.9 695.9 47.7 694.3 51.5 692.7 55.2 691.1 59 689.5 62.8 687.9 66.6 686.3 70.4 684.7 74.2 683.1 78 681.5 81.8 679.9 85.6 678.4 89.4 676.8 93.2 675.2 97 673.7 100.8 672.1 104.6 670.6 108.4 669 112.2 667.5 116 666 119.7 664.4 123.5 662.9 127.3 661.4 131.1 659.8 134.8 658.3 138.6 656.8 142.3 655.3 146 653.8 150 652.1 154 650.5 157.9 648.9 161.8 647.3 165.7 645.7 169.6 644.2 173.5 642.6 177.4 641 181.3 639.4 185.1 637.8 189 636.2 193 634.6 196.9 633 200.8 631.4 204.8 629.7 208.8 628 212.5 626.4 216.2 624.8 220.1 623.2 224.1 621.4 228.1 619.7 232.1 617.9 236.2 616.1 240.3 614.3 244.3 612.6 248.3 610.8 252.2 609.1 256.1 607.4 259.8 605.7 263.4 604.1 266.8 602.6 270.1 601.2 273.1 599.9 275.9 598.6 278.5 597.5 280.7 596.6 282.6 595.7 284.4 595 286 594.3 287.6 593.7 289.1 593.1 290.7 592.4 292.3 591.7 294.1 590.9 296 590 299.2 588.5 302.7 586.8 306.3 584.9 310.1 583 314 581 318 578.9 322 576.8 325.9 574.7 329.8 572.6 333.5 570.5 337.1 568.5 340.7 566.4 344.3 564.3 347.9 562.2 351.4 560.1 354.9 557.9 358.4 555.8 361.8 553.7 365.2 551.6 368.5 549.5 371.4 547.7 374.2 545.9 376.9 544.2 379.5 542.5 382.2 540.8 384.8 539.1 387.5 537.3 390.3 535.5 393.1 533.6 396 531.5 399.2 529.2 402.5 526.8 406 524.2 409.5 521.5 413.1 518.8 416.7 516.1 420.3 513.3 423.9 510.5 427.3 507.7 430.7 505.1 433.9 502.5 437 500 439.8 497.7 442.6 495.5 445.4 493.4 448.1 491.2 450.7 489.1 453.2 487.1 455.6 485 457.9 482.8 460 480.7 462 478.5 463.5 476.7 464.9 474.9 466.2 473 467.4 471.2 468.5 469.3 469.6 467.5 470.6 465.6 471.5 463.7 472.4 461.9 473.2 460 473.9 458.3 474.5 456.6 475 454.9 475.5 453.2 475.9 451.5 476.3 449.8 476.6 448.1 476.9 446.5 477.2 444.8 477.4 443.2 477.6 441.8 477.7 440.4 477.8 439.1 477.8 437.7 477.9 436.4 477.9 435.1 477.8 433.8 477.7 432.4 477.6 431.1 477.4 429.8 477.2 428.4 476.9 427.1 476.6 425.7 476.3 424.4 475.9 423 475.4 421.7 474.9 420.3 474.4 419 473.8 417.7 473.2 416.4 472.4 415 471.6 413.6 470.8 412.2 469.8 410.8 468.8 409.5 467.8 408.1 466.7 406.8 465.6 405.5 464.4 404.2 463.2 402.9 461.8 401.5 460.2 400.1 458.6 398.7 457 397.3 455.2 396 453.5 394.7 451.7 393.4 449.9 392.1 448.2 390.8 446.4 389.5 444.6 388.2 442.8 386.9 441 385.6 439.1 384.4 437.2 383.1 435.4 381.9 433.5 380.6 431.6 379.4 429.8 378.2 427.9 376.9" fill="none" stroke="#0a0a0a" stroke-width="1.3"/><path d="M42.2 721.2 46 719.6 49.7 718 53.5 716.3 57.2 714.7 61 713.1 64.7 711.4 68.5 709.8 72.2 708.2 75.9 706.5 79.7 704.9 83.4 703.3 87.2 701.6 90.9 700 94.7 698.4 98.5 696.7 102.2 695.1 106 693.5 109.8 691.9 113.6 690.3 117.3 688.7 121 687.1 124.8 685.5 128.5 684 132.3 682.4 136 680.8 139.8 679.2 143.6 677.7 147.4 676.1 151.2 674.4 155.1 672.8 159 671.1 162.9 669.5 166.9 667.7 171 666 174.5 664.5 178.2 662.9 181.9 661.3 185.7 659.7 189.6 658 193.5 656.3 197.5 654.6 201.5 652.9 205.5 651.1 209.5 649.4 213.6 647.7 217.6 645.9 221.5 644.2 225.5 642.5 229.4 640.7 233.2 639 237 637.4 240.7 635.7 244.3 634.1 247.8 632.5 251.1 631 254.4 629.5 257.5 628 261.8 625.9 265.9 623.9 269.8 622 273.6 620.1 277.3 618.2 280.9 616.3 284.4 614.5 287.8 612.7 291.2 611 294.6 609.2 298 607.5 301.2 605.9 304.3 604.4 307.4 602.9 310.4 601.5 313.3 600 316.3 598.6 319.3 597.1 322.3 595.7 325.4 594.1 328.5 592.5 332.1 590.6 335.9 588.7 339.6 586.6 343.5 584.6 347.3 582.5 351.2 580.4 355 578.3 358.8 576.2 362.4 574.1 366 572 369.1 570.1 372.2 568.3 375.1 566.4 378 564.6 380.9 562.8 383.8 560.9 386.8 559 389.7 557.1 392.8 555.1 396 553 399.3 550.9 402.8 548.7 406.3 546.4 409.9 544.1 413.6 541.8 417.3 539.4 421 537 424.7 534.6 428.3 532.2 431.8 529.8 435.2 527.4 438.5 525 441.9 522.5 445.2 520 448.4 517.5 451.6 515 454.8 512.5 457.8 510 460.8 507.5 463.6 505 466.4 502.5 469 500 471.1 497.9 473.2 495.8 475.2 493.7 477.1 491.5 479 489.4 480.8 487.3 482.5 485.2 484.1 483.1 485.6 481 487 479 488.1 477.4 489 475.8 490 474.3 490.8 472.8 491.6 471.2 492.4 469.7 493.1 468.1 493.8 466.6 494.5 465 495.1 463.4 495.7 461.8 496.3 460.1 496.8 458.4 497.3 456.7 497.7 455 498.1 453.3 498.5 451.6 498.8 449.9 499.1 448.2 499.3 446.6 499.5 445.2 499.6 443.9 499.7 442.5 499.8 441.2 499.8 439.9 499.8 438.6 499.8 437.3 499.7 435.9 499.5 434.6 499.3 433.2 499 431.6 498.6 429.9 498.2 428.2 497.7 426.5 497.1 424.8 496.5 423.1 495.8 421.4 495.1 419.7 494.3 418 493.4 416.4 492.4 414.6 491.2 412.9 490 411.1 488.7 409.3 487.4 407.6 486 405.9 484.5 404.2 483 402.6 481.5 401.1 480 399.6 478.5 398.2 476.9 396.9 475.3 395.7 473.6 394.5 471.9 393.4 470.2 392.2 468.4 391.1 466.7 390 464.9 388.9 463.2 387.8 461.4 386.6 459.6 385.5 457.7 384.3 455.9 383.2 454 382.1 452.2 380.9 450.3 379.8 448.4 378.7 446.6 377.5 444.7 376.4" fill="none" stroke="#0a0a0a" stroke-width="1.3"/><linearGradient id="lg" gradientUnits="userSpaceOnUse" x1="240" y1="700" x2="510" y2="480"><stop offset="0" stop-color="#18d818" stop-opacity="0"/><stop offset="0.35" stop-color="#18d818" stop-opacity="0.35"/><stop offset="0.7" stop-color="#30dc30" stop-opacity="0.8"/><stop offset="1" stop-color="#48e048" stop-opacity="0.9"/></linearGradient><path d="M248.3 610.8 252.2 609.1 256.1 607.4 259.8 605.7 263.4 604.1 266.8 602.6 270.1 601.2 273.1 599.9 275.9 598.6 278.5 597.5 280.7 596.6 282.6 595.7 284.4 595 286 594.3 287.6 593.7 289.1 593.1 290.7 592.4 292.3 591.7 294.1 590.9 296 590 299.2 588.5 302.7 586.8 306.3 584.9 310.1 583 314 581 318 578.9 322 576.8 325.9 574.7 329.8 572.6 333.5 570.5 337.1 568.5 340.7 566.4 344.3 564.3 347.9 562.2 351.4 560.1 354.9 557.9 358.4 555.8 361.8 553.7 365.2 551.6 368.5 549.5 371.4 547.7 374.2 545.9 376.9 544.2 379.5 542.5 382.2 540.8 384.8 539.1 387.5 537.3 390.3 535.5 393.1 533.6 396 531.5 399.2 529.2 402.5 526.8 406 524.2 409.5 521.5 413.1 518.8 416.7 516.1 420.3 513.3 423.9 510.5 427.3 507.7 430.7 505.1 433.9 502.5 437 500 439.8 497.7 442.6 495.5 445.4 493.4 448.1 491.2 450.7 489.1 453.2 487.1 455.6 485 457.9 482.8 460 480.7 462 478.5 463.5 476.7 464.9 474.9 466.2 473 467.4 471.2 468.5 469.3 469.6 467.5 470.6 465.6 471.5 463.7 472.4 461.9 473.2 460 473.9 458.3 474.5 456.6 475 454.9 475.5 453.2 475.9 451.5 476.3 449.8 476.6 448.1 476.9 446.5 477.2 444.8 477.4 443.2 477.6 441.8 477.7 440.4 477.8 439.1 477.8 437.7 477.9 436.4 477.9 435.1 477.8 433.8 477.7 432.4 477.6 431.1 477.4 429.8 477.2 428.4 476.9 427.1 476.6 425.7 476.3 424.4 475.9 423 475.4 421.7 474.9 420.3 474.4 419 473.8 417.7 473.2 416.4 472.4 415 471.6 413.6 470.8 412.2 469.8 410.8 468.8 409.5 467.8 408.1 466.7 406.8 465.6 405.5 464.4 404.2 463.2 402.9 461.8 401.5 460.2 400.1 458.6 398.7 457 397.3 455.2 396 453.5 394.7 451.7 393.4 449.9 392.1 448.2 390.8 446.4 389.5 444.6 388.2 442.8 386.9 441 385.6 439.1 384.4 437.2 383.1 435.4 381.9 433.5 380.6 431.6 379.4 429.8 378.2 427.9 376.9 427.9 385.4 429.8 386.6 431.6 387.9 433.5 389.1 435.4 390.4 437.2 391.6 439.1 392.8 441 394.1 442.8 395.3 444.6 396.6 446.4 397.9 448.2 399.2 449.9 400.5 451.7 401.8 453.5 403.1 455.2 404.4 457 405.7 458.6 407.1 460.2 408.4 461.8 409.8 463.2 411.2 464.4 412.5 465.6 413.8 466.7 415.1 467.8 416.4 468.8 417.8 469.8 419.1 470.8 420.5 471.6 421.9 472.4 423.3 473.2 424.7 473.8 426 474.4 427.3 474.9 428.6 475.4 429.9 475.9 431.2 476.3 432.6 476.6 433.9 476.9 435.3 477.2 436.7 477.4 438 477.6 439.3 477.7 440.6 477.8 441.9 477.9 443.3 477.9 444.6 477.8 445.9 477.8 447.2 477.7 448.6 477.6 450 477.4 451.4 477.2 453 476.9 454.6 476.6 456.3 476.3 457.9 475.9 459.6 475.5 461.3 475 463 474.5 464.7 473.9 466.4 473.2 468.1 472.4 469.9 471.5 471.8 470.6 473.7 469.6 475.5 468.5 477.4 467.4 479.2 466.2 481.1 464.9 482.9 463.5 484.7 462 486.5 460 488.7 457.9 490.9 455.6 493 453.2 495.1 450.7 497.2 448.1 499.4 445.4 501.5 442.6 503.7 439.8 505.9 437 508.2 433.9 510.7 430.7 513.3 427.3 516.1 423.9 518.8 420.3 521.6 416.7 524.4 413.1 527.2 409.5 530 406 532.7 402.5 535.3 399.2 537.9 396 540.3 393.1 542.5 390.3 544.6 387.5 546.6 384.8 548.5 382.2 550.3 379.5 552.1 376.9 553.9 374.2 555.7 371.4 557.6 368.5 559.5 365.2 561.8 361.8 564 358.4 566.3 354.9 568.5 351.4 570.8 347.9 573.1 344.3 575.4 340.7 577.6 337.1 579.8 333.5 582 329.8 584.2 325.9 586.5 322 588.7 318 591 314 593.2 310.1 595.4 306.3 597.4 302.7 599.4 299.2 601.2 296 602.9 294.1 603.8 292.3 604.7 290.7 605.5 289.1 606.2 287.6 606.9 286 607.5 284.4 608.3 282.6 609.1 280.7 609.9 278.5 611 275.9 612.2 273.1 613.5 270.1 614.9 266.8 616.5 263.4 618.1 259.8 619.8 256.1 621.6 252.2 623.4 248.3 625.3Z" fill="url(#lg)"/><path d="M277.3 618.2 280.9 616.3 284.4 614.5 287.8 612.7 291.2 611 294.6 609.2 298 607.5 301.2 605.9 304.3 604.4 307.4 602.9 310.4 601.5 313.3 600 316.3 598.6 319.3 597.1 322.3 595.7 325.4 594.1 328.5 592.5 332.1 590.6 335.9 588.7 339.6 586.6 343.5 584.6 347.3 582.5 351.2 580.4 355 578.3 358.8 576.2 362.4 574.1 366 572 369.1 570.1 372.2 568.3 375.1 566.4 378 564.6 380.9 562.8 383.8 560.9 386.8 559 389.7 557.1 392.8 555.1 396 553 399.3 550.9 402.8 548.7 406.3 546.4 409.9 544.1 413.6 541.8 417.3 539.4 421 537 424.7 534.6 428.3 532.2 431.8 529.8 435.2 527.4 438.5 525 441.9 522.5 445.2 520 448.4 517.5 451.6 515 454.8 512.5 457.8 510 460.8 507.5 463.6 505 466.4 502.5 469 500 471.1 497.9 473.2 495.8 475.2 493.7 477.1 491.5 479 489.4 480.8 487.3 482.5 485.2 484.1 483.1 485.6 481 487 479 488.1 477.4 489 475.8 490 474.3 490.8 472.8 491.6 471.2 492.4 469.7 493.1 468.1 493.8 466.6 494.5 465 495.1 463.4 495.7 461.8 496.3 460.1 496.8 458.4 497.3 456.7 497.7 455 498.1 453.3 498.5 451.6 498.8 449.9 499.1 448.2 499.3 446.6 499.5 445.2 499.6 443.9 499.7 442.5 499.8 441.2 499.8 439.9 499.8 438.6 499.8 437.3 499.7 435.9 499.5 434.6 499.3 433.2 499 431.6 498.6 429.9 498.2 428.2 497.7 426.5 497.1 424.8 496.5 423.1 495.8 421.4 495.1 419.7 494.3 418 493.4 416.4 492.4 414.6 491.2 412.9 490 411.1 488.7 409.3 487.4 407.6 486 405.9 484.5 404.2 483 402.6 481.5 401.1 480 399.6 478.5 398.2 476.9 396.9 475.3 395.7 473.6 394.5 471.9 393.4 470.2 392.2 468.4 391.1 466.7 390 464.9 388.9 463.2 387.8 461.4 386.6 459.6 385.5 457.7 384.3 455.9 383.2 454 382.1 452.2 380.9 450.3 379.8 448.4 378.7 446.6 377.5 444.7 376.4 444.7 384.9 446.6 386 448.4 387.2 450.3 388.3 452.2 389.4 454 390.5 455.9 391.6 457.7 392.8 459.6 393.9 461.4 395.1 463.2 396.2 464.9 397.3 466.7 398.4 468.4 399.5 470.2 400.6 471.9 401.7 473.6 402.9 475.3 404.1 476.9 405.3 478.5 406.6 480 407.9 481.5 409.4 483 410.9 484.5 412.5 486 414.2 487.4 415.9 488.7 417.6 490 419.4 491.2 421.1 492.4 422.9 493.4 424.7 494.3 426.3 495.1 427.9 495.8 429.6 496.5 431.3 497.1 433 497.7 434.7 498.2 436.4 498.6 438.1 499 439.8 499.3 441.4 499.5 442.8 499.7 444.1 499.8 445.4 499.8 446.7 499.8 448 499.8 449.3 499.7 450.7 499.6 452 499.5 453.3 499.3 454.7 499.1 456.3 498.8 458 498.5 459.7 498.1 461.4 497.7 463.1 497.3 464.8 496.8 466.5 496.3 468.2 495.7 469.8 495.1 471.5 494.5 473.1 493.8 474.6 493.1 476.2 492.4 477.7 491.6 479.2 490.8 480.8 490 482.3 489 483.8 488.1 485.4 487 487 485.6 489.1 484.1 491.1 482.5 493.2 480.8 495.4 479 497.5 477.1 499.6 475.2 501.8 473.2 503.9 471.1 506.1 469 508.2 466.4 510.7 463.6 513.3 460.8 515.8 457.8 518.3 454.8 520.8 451.6 523.4 448.4 525.9 445.2 528.4 441.9 530.9 438.5 533.5 435.2 535.8 431.8 538.3 428.3 540.8 424.7 543.4 421 546 417.3 548.5 413.6 551.1 409.9 553.6 406.3 556 402.8 558.5 399.3 560.8 396 563.1 392.8 565.3 389.7 567.4 386.8 569.5 383.8 571.5 380.9 573.5 378 575.5 375.1 577.4 372.2 579.4 369.1 581.4 366 583.4 362.4 585.6 358.8 587.8 355 590.1 351.2 592.3 347.3 594.6 343.5 596.8 339.6 599 335.9 601.1 332.1 603.2 328.5 605.2 325.4 606.9 322.3 608.6 319.3 610.2 316.3 611.7 313.3 613.3 310.4 614.8 307.4 616.4 304.3 617.9 301.2 619.6 298 621.3 294.6 623.1 291.2 625 287.8 626.8 284.4 628.8 280.9 630.7 277.3 632.7Z" fill="url(#lg)"/><path d="M339.9 627 344 625 348 622.9 352 620.9 356 618.9 360 616.9 363.8 614.9 367.5 612.9 371 611 375.1 608.8 379 606.5 382.9 604.3 386.7 602.1 390.4 600 394.1 597.8 397.7 595.6 401.3 593.4 404.9 591.2 408.5 589 411.9 586.9 415.3 584.8 418.6 582.8 421.9 580.7 425.2 578.6 428.4 576.5 431.7 574.4 434.9 572.3 438.1 570.2 441.3 568 444.4 565.9 447.5 563.7 450.6 561.6 453.6 559.4 456.7 557.2 459.7 555 462.7 552.8 465.7 550.5 468.6 548.3 471.6 546 474.5 543.7 477.5 541.4 480.4 539.1 483.3 536.8 486.2 534.5 489.1 532.1 491.9 529.8 494.7 527.4 497.4 525.1 500 522.7 502.3 520.6 504.6 518.4 506.8 516.3 509 514.2 511.2 512 513.3 509.9 515.3 507.7 517.3 505.5 519.2 503.3 521 501 522.6 498.9 524.2 496.7 525.8 494.5 527.3 492.3 528.7 490.1 530.1 487.9 531.4 485.6 532.6 483.4 533.7 481.2 534.8 479 535.6 477.1 536.3 475.2 537.1 473.3 537.7 471.3 538.3 469.4 538.8 467.5 539.3 465.6 539.7 463.7 540.1 461.9 540.4 460 540.6 458.3 540.8 456.6 541 454.9 541.1 453.2 541.2 451.5 541.2 449.9 541.2 448.2 541.1 446.5 540.9 444.9 540.7 443.2 540.4 441.5 540.1 439.8 539.7 438.1 539.2 436.4 538.7 434.7 538.2 433 537.6 431.3 536.9 429.7 536.2 428 535.4 426.4 534.5 424.7 533.5 422.9 532.5 421.2 531.4 419.5 530.2 417.8 529 416.1 527.7 414.5 526.4 412.9 525 411.3 523.6 409.7 522 408 520.3 406.4 518.5 404.8 516.7 403.3 514.8 401.7 512.8 400.2 510.9 398.7 508.9 397.3 507 395.9 505.1 394.5 503.3 393.2 501.4 391.9 499.5 390.7 497.6 389.5 495.7 388.3 493.9 387.2 492 386 490.2 384.9 488.4 383.8 486.7 382.8 485.3 382 484 381.2 482.8 380.4 481.5 379.6 480.3 378.9 479 378.2 477.8 377.4 476.6 376.7 475.3 376 474.1 375.2 474.1 383.7 475.3 384.4 476.6 385.2 477.8 385.9 479 386.6 480.3 387.4 481.5 388.1 482.8 388.8 484 389.6 485.3 390.4 486.7 391.2 488.4 392.3 490.2 393.4 492 394.4 493.9 395.6 495.7 396.7 497.6 397.9 499.5 399.1 501.4 400.3 503.3 401.6 505.1 402.9 507 404.2 508.9 405.6 510.9 407.1 512.8 408.5 514.8 410 516.7 411.6 518.5 413.1 520.3 414.7 522 416.3 523.6 418 525 419.5 526.4 421.1 527.7 422.7 529 424.4 530.2 426 531.4 427.7 532.5 429.4 533.5 431.1 534.5 432.9 535.4 434.6 536.2 436.2 536.9 437.8 537.6 439.5 538.2 441.2 538.7 442.8 539.2 444.5 539.7 446.2 540.1 447.9 540.4 449.6 540.7 451.3 540.9 453 541.1 454.6 541.2 456.3 541.2 457.9 541.2 459.6 541.1 461.3 541 463 540.8 464.7 540.6 466.3 540.4 468 540.1 469.9 539.7 471.8 539.3 473.7 538.8 475.6 538.3 477.4 537.7 479.3 537.1 481.3 536.3 483.2 535.6 485.1 534.8 487.1 533.7 489.3 532.6 491.5 531.4 493.7 530.1 496 528.7 498.2 527.3 500.5 525.8 502.7 524.2 504.9 522.6 507.1 521 509.2 519.2 511.5 517.3 513.7 515.3 516 513.3 518.2 511.2 520.3 509 522.5 506.8 524.7 504.6 526.8 502.3 529 500 531.1 497.4 533.5 494.7 535.9 491.9 538.3 489.1 540.7 486.2 543.2 483.3 545.6 480.4 548.1 477.5 550.5 474.5 553 471.6 555.4 468.6 557.8 465.7 560.2 462.7 562.5 459.7 564.9 456.7 567.2 453.6 569.6 450.6 571.9 447.5 574.2 444.4 576.4 441.3 578.7 438.1 581 434.9 583.3 431.7 585.6 428.4 587.8 425.2 590 421.9 592.2 418.6 594.4 415.3 596.6 411.9 598.8 408.5 601 404.9 603.4 401.3 605.7 397.7 608 394.1 610.3 390.4 612.7 386.7 615 382.9 617.3 379 619.7 375.1 622 371 624.4 367.5 626.4 363.8 628.5 360 630.7 356 632.8 352 635 348 637.2 344 639.3 339.9 641.5Z" fill="url(#lg)"/><path d="M372.1 631.2 375.9 629.1 379.7 627.1 383.4 625 387.2 622.9 390.9 620.9 394.6 618.9 398.2 616.8 401.7 614.9 405.2 612.9 408.5 611 412.6 608.6 416.5 606.3 420.4 604.1 424.2 601.8 427.9 599.6 431.6 597.3 435.2 595.1 438.8 592.9 442.4 590.7 446 588.5 449.4 586.4 452.7 584.4 456.1 582.3 459.5 580.2 462.8 578.2 466 576.1 469.2 574.1 472.3 572.1 475.4 570 478.3 568 480.7 566.3 482.9 564.7 485.1 563 487.2 561.4 489.3 559.8 491.4 558.1 493.4 556.4 495.6 554.7 497.7 552.9 500 551 502.9 548.6 505.9 546.1 508.9 543.4 512.1 540.7 515.2 538 518.4 535.2 521.4 532.3 524.4 529.5 527.3 526.7 530 524 532.3 521.6 534.5 519.2 536.7 516.8 538.8 514.5 540.9 512.1 542.9 509.7 544.8 507.3 546.6 504.9 548.4 502.4 550 500 551.4 497.8 552.7 495.7 554 493.5 555.2 491.3 556.4 489.1 557.4 487 558.4 484.7 559.4 482.5 560.2 480.3 561 478 561.7 475.7 562.3 473.4 562.8 471.1 563.3 468.7 563.7 466.4 564 464 564.3 461.7 564.5 459.4 564.6 457.2 564.7 455 564.7 453.2 564.7 451.5 564.7 449.7 564.6 448.1 564.5 446.4 564.3 444.7 564.1 443.1 563.8 441.5 563.5 439.8 563.1 438.2 562.6 436.5 562 434.8 561.4 433 560.7 431.3 560 429.6 559.2 427.9 558.3 426.2 557.4 424.6 556.5 423 555.5 421.4 554.4 419.8 553.2 418.2 552 416.6 550.7 415 549.4 413.5 548 412 546.6 410.5 545.1 409.1 543.6 407.7 542.1 406.3 540.4 404.9 538.7 403.6 536.9 402.2 535 401 533.1 399.7 531.2 398.5 529.3 397.3 527.4 396.1 525.5 394.9 523.6 393.7 521.7 392.5 519.9 391.3 518 390 516.1 388.8 514.2 387.6 512.4 386.4 510.5 385.3 508.7 384.1 506.9 383 505.1 382 503.6 381.1 502.2 380.3 500.7 379.6 499.3 378.8 497.9 378.1 496.5 377.3 495.1 376.6 493.7 375.9 492.3 375.1 490.9 374.4 490.9 382.9 492.3 383.6 493.7 384.4 495.1 385.1 496.5 385.8 497.9 386.5 499.3 387.3 500.7 388 502.2 388.8 503.6 389.6 505.1 390.4 506.9 391.5 508.7 392.6 510.5 393.7 512.4 394.8 514.2 396 516.1 397.2 518 398.4 519.9 399.6 521.7 400.8 523.6 402.1 525.5 403.3 527.4 404.5 529.3 405.6 531.2 406.8 533.1 408 535 409.3 536.9 410.5 538.7 411.8 540.4 413.2 542.1 414.6 543.6 415.9 545.1 417.3 546.6 418.8 548 420.2 549.4 421.7 550.7 423.2 552 424.8 553.2 426.4 554.4 428 555.5 429.6 556.5 431.2 557.4 432.8 558.3 434.4 559.2 436.1 560 437.8 560.7 439.5 561.4 441.2 562 442.9 562.6 444.6 563.1 446.3 563.5 447.9 563.8 449.6 564.1 451.2 564.3 452.8 564.5 454.5 564.6 456.1 564.7 457.8 564.7 459.5 564.7 461.3 564.7 463 564.6 465.2 564.5 467.4 564.3 469.7 564 472 563.7 474.4 563.3 476.7 562.8 479.1 562.3 481.5 561.7 483.8 561 486.1 560.2 488.4 559.4 490.6 558.4 492.9 557.4 495.1 556.4 497.3 555.2 499.5 554 501.7 552.7 503.9 551.4 506 550 508.2 548.4 510.7 546.6 513.1 544.8 515.6 542.9 518 540.9 520.4 538.8 522.8 536.7 525.2 534.5 527.6 532.3 530 530 532.4 527.3 535.2 524.4 538 521.4 540.9 518.4 543.8 515.2 546.8 512.1 549.7 508.9 552.6 505.9 555.3 502.9 558 500 560.6 497.7 562.6 495.6 564.5 493.4 566.3 491.4 568.1 489.3 569.8 487.2 571.5 485.1 573.3 482.9 575 480.7 576.7 478.3 578.5 475.4 580.7 472.3 582.9 469.2 585 466 587.2 462.8 589.4 459.5 591.6 456.1 593.8 452.7 596 449.4 598.2 446 600.4 442.4 602.7 438.8 605 435.2 607.4 431.6 609.7 427.9 612.1 424.2 614.4 420.4 616.8 416.5 619.3 412.6 621.7 408.5 624.2 405.2 626.2 401.7 628.3 398.2 630.4 394.6 632.6 390.9 634.7 387.2 636.9 383.4 639.1 379.7 641.3 375.9 643.5 372.1 645.7Z" fill="url(#lg)"/><path d="M103.5 739.5v18.0l8.2 -3.6v-9.9M119.9 732.3v17.9l8.1 -3.6v-9.8M136.0 725.2v17.7l7.9 -3.5v-9.7M151.7 718.2v17.6l7.8 -3.5v-9.7M167.2 711.4v17.5l7.6 -3.4v-9.6M182.3 704.5v17.3l7.5 -3.5v-9.5M197.1 697.6v17.2l7.4 -3.5v-9.5M211.5 690.7v17.1l7.2 -3.4v-9.4M225.7 684.0v17.0l7.1 -3.4v-9.3M239.5 677.3v16.8l6.8 -3.3v-9.3M252.8 670.7v16.7l6.6 -3.3v-9.2M265.7 664.2v16.6l6.4 -3.2v-9.1M278.2 658.0v16.5l6.2 -3.1v-9.1M290.2 651.9v16.2l6.0 -3.0v-8.9M301.9 646.0v15.8l5.8 -2.9v-8.7M313.3 640.3v15.5l5.6 -2.8v-8.5M324.2 634.8v15.1l5.4 -2.7v-8.3M334.7 629.6v14.8l5.2 -2.6v-8.1M344.8 624.6v14.5l5.0 -2.5v-8.0M354.4 619.7v14.2l4.8 -2.4v-7.8M363.6 615.0v13.9l4.6 -2.4v-7.7M372.3 610.3v13.7l4.4 -2.4v-7.5M380.6 605.6v13.4l4.2 -2.4v-7.4M388.5 601.1v13.2l4.0 -2.4v-7.2M396.0 596.6v12.9l3.9 -2.3v-7.1M403.2 592.3v12.6l3.7 -2.3v-7.0M410.0 588.0v12.4l3.6 -2.2v-6.8M416.6 584.0v12.2l3.4 -2.1v-6.7M422.9 580.0v11.9l3.3 -2.1v-6.6M429.0 576.2v11.7l3.2 -2.1v-6.4M434.7 572.4v11.5l3.0 -2.0v-6.3M440.2 568.7v11.3l2.9 -2.0v-6.2M445.5 565.1v11.1l2.8 -2.0v-6.1M450.5 561.6v10.9l2.7 -1.9v-6.0M455.3 558.2v10.7l2.6 -1.9v-5.9M459.9 554.8v10.5l2.6 -1.9v-5.8M464.4 551.5v10.4l2.5 -1.9v-5.7M468.7 548.2v10.2l2.4 -1.9v-5.6M472.9 545.0v10.0l2.4 -1.8v-5.5M476.9 541.9v9.9l2.3 -1.8v-5.4" fill="none" stroke="#22c822" stroke-width="1.1" opacity="1"/><path d="M110.6 736.4v15.2M126.8 729.2v15.1M142.8 722.2v15.0M158.4 715.3v14.9M173.7 708.4v14.8M188.7 701.5v14.7M203.3 694.6v14.6M217.6 687.8v14.5M231.7 681.1v14.4M245.3 674.4v14.3M258.4 667.9v14.2M271.1 661.5v14.1M283.4 655.3v13.9M295.3 649.3v13.6M306.9 643.5v13.3M318.0 637.9v13.0M328.8 632.5v12.7M339.1 627.4v12.5M349.0 622.4v12.2M358.4 617.6v12.0M367.4 612.9v11.7M376.0 608.3v11.5M384.1 603.6v11.3M391.8 599.1v11.1" fill="none" stroke="#e0d0d0" stroke-width="0.8" opacity="0.8"/><path d="M103.5 739.5L119.9 732.3L119.9 725.8L103.5 733.0ZM119.9 732.3L136.0 725.2L136.0 707.6L119.9 714.7ZM136.0 725.2L151.7 718.2L151.7 693.2L136.0 700.2ZM151.7 718.2L167.2 711.4L167.2 680.9L151.7 687.7ZM167.2 711.4L182.3 704.5L182.3 670.5L167.2 677.4ZM182.3 704.5L197.1 697.6L197.1 661.1L182.3 668.0ZM197.1 697.6L211.5 690.7L211.5 652.6L197.1 659.5ZM211.5 690.7L225.7 684.0L225.7 645.3L211.5 652.0ZM225.7 684.0L239.5 677.3L239.5 638.0L225.7 644.7ZM239.5 677.3L252.8 670.7L252.8 630.8L239.5 637.4ZM252.8 670.7L265.7 664.2L265.7 624.2L252.8 630.7ZM265.7 664.2L278.2 658.0L278.2 618.0L265.7 624.2ZM278.2 658.0L290.2 651.9L290.2 611.9L278.2 618.0ZM290.2 651.9L301.9 646.0L301.9 606.0L290.2 611.9ZM301.9 646.0L313.3 640.3L313.3 600.8L301.9 606.5ZM313.3 640.3L324.2 634.8L324.2 595.8L313.3 601.3ZM324.2 634.8L334.7 629.6L334.7 591.0L324.2 596.2ZM334.7 629.6L344.8 624.6L344.8 586.4L334.7 591.4ZM344.8 624.6L354.4 619.7L354.4 585.7L344.8 590.6ZM354.4 619.7L363.6 615.0L363.6 586.6L354.4 591.3ZM363.6 615.0L372.3 610.3L372.3 587.3L363.6 592.0ZM372.3 610.3L380.6 605.6L380.6 587.8L372.3 592.4ZM380.6 605.6L388.5 601.1L388.5 588.2L380.6 592.7ZM388.5 601.1L396.0 596.6L396.0 588.4L388.5 592.9ZM396.0 596.6L403.2 592.3L403.2 588.6L396.0 593.0ZM403.2 592.3L410.0 588.0L410.0 578.2L403.2 582.4ZM410.0 588.0L416.6 584.0L416.6 565.1L410.0 569.1ZM416.6 584.0L422.9 580.0L422.9 557.8L416.6 561.8ZM422.9 580.0L429.0 576.2L429.0 552.6L422.9 556.5ZM429.0 576.2L434.7 572.4L434.7 548.1L429.0 551.9ZM434.7 572.4L440.2 568.7L440.2 543.8L434.7 547.4ZM440.2 568.7L445.5 565.1L445.5 540.7L440.2 544.3ZM445.5 565.1L450.5 561.6L450.5 537.8L445.5 541.3ZM450.5 561.6L455.3 558.2L455.3 535.0L450.5 538.4ZM455.3 558.2L459.9 554.8L459.9 532.1L455.3 535.5ZM459.9 554.8L464.4 551.5L464.4 529.3L459.9 532.7ZM464.4 551.5L468.7 548.2L468.7 526.7L464.4 530.0ZM468.7 548.2L472.9 545.0L472.9 524.1L468.7 527.4ZM472.9 545.0L476.9 541.9L476.9 521.6L472.9 524.8ZM476.9 541.9L480.9 538.8L480.9 519.2L476.9 522.3ZM480.9 538.8L484.7 535.8L484.7 516.8L480.9 519.8ZM484.7 535.8L488.3 532.8L488.3 514.4L484.7 517.4ZM488.3 532.8L491.8 529.9L491.8 512.1L488.3 515.0ZM491.8 529.9L495.2 527.0L495.2 509.7L491.8 512.6ZM495.2 527.0L498.5 524.1L498.5 507.4L495.2 510.3ZM498.5 524.1L501.6 521.3L501.6 505.1L498.5 507.9ZM501.6 521.3L504.6 518.4L504.6 502.8L501.6 505.6ZM504.6 518.4L507.6 515.6L507.6 500.5L504.6 503.3ZM507.6 515.6L510.4 512.8L510.4 498.1L507.6 501.0ZM510.4 512.8L513.2 509.9L513.2 495.8L510.4 498.6ZM513.2 509.9L515.9 507.0L515.9 493.3L513.2 496.2ZM515.9 507.0L518.5 504.1L518.5 490.9L515.9 493.8ZM518.5 504.1L520.9 501.1L520.9 488.3L518.5 491.3ZM520.9 501.1L523.2 498.1L523.2 485.7L520.9 488.8ZM523.2 498.1L525.4 495.0L525.4 483.1L523.2 486.2ZM525.4 495.0L527.5 491.9L527.5 480.5L525.4 483.6ZM527.5 491.9L529.5 488.8L529.5 477.8L527.5 480.9ZM529.5 488.8L531.3 485.7L531.3 475.1L529.5 478.2ZM531.3 485.7L533.0 482.6L533.0 472.3L531.3 475.5ZM533.0 482.6L534.6 479.4L534.6 469.5L533.0 472.7ZM534.6 479.4L535.9 476.2L535.9 466.7L534.6 469.9ZM535.9 476.2L537.1 473.0L537.1 463.8L535.9 467.0ZM537.1 473.0L538.2 469.8L538.2 460.8L537.1 464.0ZM538.2 469.8L539.1 466.5L539.1 457.5L538.2 460.8ZM539.1 466.5L539.8 463.3L539.8 454.3L539.1 457.5ZM539.8 463.3L540.4 460.1L540.4 451.1L539.8 454.3ZM540.4 460.1L540.8 456.9L540.8 447.9L540.4 451.1ZM540.8 456.9L541.1 453.7L541.1 444.7L540.8 447.9ZM541.1 453.7L541.2 450.5L541.2 440.5L541.1 443.6ZM541.2 450.5L541.1 447.4L541.1 435.7L541.2 438.8ZM541.1 447.4L540.8 444.3L540.8 431.0L541.1 434.1ZM540.8 444.3L540.4 441.3L540.4 426.4L540.8 429.4ZM540.4 441.3L539.8 438.4L539.8 421.8L540.4 424.8ZM539.8 438.4L539.0 435.5L539.0 417.4L539.8 420.3ZM539.0 435.5L538.1 432.7L538.1 413.4L539.0 416.2ZM538.1 432.7L537.0 430.0L537.0 410.1L538.1 412.8ZM537.0 430.0L535.9 427.3L535.9 406.9L537.0 409.5ZM535.9 427.3L534.6 424.8L534.6 403.8L535.9 406.3ZM534.6 424.8L533.1 422.3L533.1 400.8L534.6 403.2ZM533.1 422.3L531.6 419.9L531.6 397.8L533.1 400.2ZM531.6 419.9L530.1 417.6L530.1 395.0L531.6 397.3ZM530.1 417.6L528.4 415.4L528.4 392.2L530.1 394.5ZM528.4 415.4L526.7 413.2L526.7 389.6L528.4 391.7ZM526.7 413.2L524.9 411.1L524.9 387.1L526.7 389.2ZM524.9 411.1L523.0 409.1L523.0 385.1L524.9 387.1ZM523.0 409.1L521.1 407.2L521.1 383.2L523.0 385.1ZM521.1 407.2L519.2 405.4L519.2 381.4L521.1 383.2ZM519.2 405.4L517.2 403.7L517.2 379.7L519.2 381.4ZM517.2 403.7L515.1 402.0L515.1 378.0L517.2 379.7ZM515.1 402.0L513.1 400.4L513.1 376.4L515.1 378.0ZM513.1 400.4L511.0 398.8L511.0 374.8L513.1 376.4ZM511.0 398.8L509.0 397.3L509.0 373.3L511.0 374.8ZM509.0 397.3L506.9 395.8L506.9 371.8L509.0 373.3ZM506.9 395.8L504.9 394.3L504.9 370.3L506.9 371.8ZM504.9 394.3L502.8 392.9L502.8 368.9L504.9 370.3ZM502.8 392.9L500.8 391.5L500.8 367.5L502.8 368.9ZM500.8 391.5L498.7 390.2L498.7 366.2L500.8 367.5ZM498.7 390.2L496.6 388.9L496.6 365.3L498.7 366.6ZM496.6 388.9L494.6 387.6L494.6 364.7L496.6 366.0ZM494.6 387.6L492.5 386.4L492.5 364.1L494.6 365.4ZM492.5 386.4L490.5 385.1L490.5 363.5L492.5 364.8ZM490.5 385.1L488.5 383.9L488.5 363.0L490.5 364.2ZM488.5 383.9L486.5 382.7L486.5 362.7L488.5 363.9ZM486.5 382.7L484.5 381.5L484.5 363.5L486.5 364.7ZM484.5 381.5L482.6 380.3L482.6 364.3L484.5 365.5ZM482.6 380.3L480.6 379.1L480.6 365.1L482.6 366.3ZM480.6 379.1L478.7 377.9L478.7 365.9L480.6 367.1ZM478.7 377.9L476.7 376.8L476.7 368.6L478.7 369.8ZM476.7 376.8L474.8 375.6L474.8 371.3L476.7 372.4ZM474.8 375.6L474.1 375.2L474.1 373.5L474.8 373.9Z" fill="#0000f0" stroke="#00001a" stroke-width="0.6" stroke-linejoin="round"/><path d="M103.5 739.5 107.4 737.8 111.3 736 115.3 734.3 119.3 732.6 123.3 730.8 127.2 729.1 131.2 727.3 135.1 725.6 138.9 723.9 142.7 722.2 146.4 720.6 150 719 153.5 717.4 156.9 715.9 160.2 714.5 163.4 713 166.6 711.6 169.8 710.2 173.1 708.7 176.4 707.2 179.9 705.6 183.6 703.9 187 702.3 190.4 700.7 194 699 197.7 697.3 201.5 695.5 205.3 693.7 209.2 691.9 213.1 690 217 688.1 220.9 686.2 224.8 684.4 228.7 682.5 232.6 680.6 236.3 678.8 240 677 244 675 248 673.1 252.1 671.1 256.1 669 260.1 667 264.1 665 268.1 663 272 661.1 275.8 659.2 279.5 657.3 283.1 655.4 286.6 653.7 290 652 293.1 650.5 295.9 649 298.7 647.7 301.3 646.3 303.9 645 306.4 643.7 309.1 642.4 311.8 641 314.7 639.6 317.8 638 321.1 636.3 324.6 634.6 328.3 632.8 332 630.9 335.9 629 339.9 627 344 625 348 622.9 352 620.9 356 618.9 360 616.9 363.8 614.9 367.5 612.9 371 611 375.1 608.8 379 606.5 382.9 604.3 386.7 602.1 390.4 600 394.1 597.8 397.7 595.6 401.3 593.4 404.9 591.2 408.5 589 411.9 586.9 415.3 584.8 418.6 582.8 421.9 580.7 425.2 578.6 428.4 576.5 431.7 574.4 434.9 572.3 438.1 570.2 441.3 568 444.4 565.9 447.5 563.7 450.6 561.6 453.6 559.4 456.7 557.2 459.7 555 462.7 552.8 465.7 550.5 468.6 548.3 471.6 546 474.5 543.7 477.5 541.4 480.4 539.1 483.3 536.8 486.2 534.5 489.1 532.1 491.9 529.8 494.7 527.4 497.4 525.1 500 522.7 502.3 520.6 504.6 518.4 506.8 516.3 509 514.2 511.2 512 513.3 509.9 515.3 507.7 517.3 505.5 519.2 503.3 521 501 522.6 498.9 524.2 496.7 525.8 494.5 527.3 492.3 528.7 490.1 530.1 487.9 531.4 485.6 532.6 483.4 533.7 481.2 534.8 479 535.6 477.1 536.3 475.2 537.1 473.3 537.7 471.3 538.3 469.4 538.8 467.5 539.3 465.6 539.7 463.7 540.1 461.9 540.4 460 540.6 458.3 540.8 456.6 541 454.9 541.1 453.2 541.2 451.5 541.2 449.9 541.2 448.2 541.1 446.5 540.9 444.9 540.7 443.2 540.4 441.5 540.1 439.8 539.7 438.1 539.2 436.4 538.7 434.7 538.2 433 537.6 431.3 536.9 429.7 536.2 428 535.4 426.4 534.5 424.7 533.5 422.9 532.5 421.2 531.4 419.5 530.2 417.8 529 416.1 527.7 414.5 526.4 412.9 525 411.3 523.6 409.7 522 408 520.3 406.4 518.5 404.8 516.7 403.3 514.8 401.7 512.8 400.2 510.9 398.7 508.9 397.3 507 395.9 505.1 394.5 503.3 393.2 501.4 391.9 499.5 390.7 497.6 389.5 495.7 388.3 493.9 387.2 492 386 490.2 384.9 488.4 383.8 486.7 382.8 485.3 382 484 381.2 482.8 380.4 481.5 379.6 480.3 378.9 479 378.2 477.8 377.4 476.6 376.7 475.3 376 474.1 375.2" fill="none" stroke="#00001a" stroke-width="1"/><path d="M140.0 751.5v18.0l8.2 -3.9v-9.9M156.2 743.9v17.9l8.1 -3.8v-9.8M172.1 736.3v17.7l7.9 -3.8v-9.7M187.5 728.7v17.6l7.8 -4.0v-9.7M202.4 720.7v17.5l7.6 -4.1v-9.6M217.1 713.0v17.3l7.5 -3.9v-9.5M231.7 705.6v17.2l7.4 -3.8v-9.5M245.9 698.3v17.1l7.2 -3.7v-9.4M259.9 691.1v17.0l7.1 -3.7v-9.3M273.5 683.9v16.8l6.8 -3.6v-9.3M286.6 677.0v16.7l6.6 -3.5v-9.2M299.3 670.2v16.6l6.4 -3.4v-9.1M311.7 663.6v16.5l6.2 -3.3v-9.1M323.7 657.2v16.2l6.0 -3.2v-8.9M335.3 651.1v15.8l5.9 -3.1v-8.7M346.5 645.1v15.5l5.6 -3.0v-8.5M357.3 639.2v15.1l5.4 -2.9v-8.3M367.6 633.6v14.8l5.2 -2.8v-8.2M377.5 628.2v14.5l5.0 -2.7v-8.0M387.0 623.0v14.2l4.8 -2.6v-7.8M396.1 618.0v14.0l4.6 -2.6v-7.7M404.8 613.1v13.7l4.4 -2.5v-7.5M413.1 608.4v13.4l4.2 -2.5v-7.4M421.0 603.7v13.2l4.0 -2.4v-7.2M428.5 599.2v12.9l3.9 -2.3v-7.1M435.7 594.8v12.7l3.7 -2.3v-7.0M442.6 590.6v12.4l3.6 -2.2v-6.8M449.2 586.5v12.2l3.4 -2.1v-6.7M455.6 582.6v12.0l3.3 -2.0v-6.6M461.7 578.8v11.7l3.2 -2.0v-6.5M467.6 575.2v11.5l3.1 -2.0v-6.3M473.1 571.5v11.3l2.9 -2.0v-6.2M478.4 567.9v11.1l2.8 -2.0v-6.1M483.4 564.3v10.9l2.7 -2.0v-6.0M488.1 560.7v10.7l2.7 -2.1v-5.9M492.6 557.1v10.6l2.6 -2.1v-5.8M497.0 553.5v10.4l2.5 -2.1v-5.7M501.1 550.0v10.2l2.4 -2.1v-5.6M505.2 546.6v10.1l2.4 -2.0v-5.5M509.1 543.3v9.9l2.3 -2.0v-5.4" fill="none" stroke="#22c822" stroke-width="1.1" opacity="1"/><path d="M147.0 748.2v15.2M163.1 740.6v15.1M178.8 733.1v15.0M194.0 725.2v14.9M208.8 717.3v14.8M223.5 709.7v14.7M237.9 702.4v14.6M252.0 695.2v14.5M265.8 688.0v14.4M279.2 680.9v14.3M292.2 674.0v14.2M304.7 667.3v14.1M316.9 660.8v13.9M328.7 654.6v13.6M340.1 648.5v13.3M351.2 642.5v13.0M361.8 636.8v12.8M372.0 631.3v12.5M381.7 626.0v12.2M391.0 620.8v12.0M399.9 615.9v11.8M408.4 611.0v11.5M416.5 606.3v11.3M424.3 601.7v11.1" fill="none" stroke="#e0d0d0" stroke-width="0.8" opacity="0.8"/><path d="M140.0 751.5L156.2 743.9L156.2 737.4L140.0 745.0ZM156.2 743.9L172.1 736.3L172.1 718.7L156.2 726.3ZM172.1 736.3L187.5 728.7L187.5 703.7L172.1 711.3ZM187.5 728.7L202.4 720.7L202.4 690.2L187.5 698.2ZM202.4 720.7L217.1 713.0L217.1 679.0L202.4 686.7ZM217.1 713.0L231.7 705.6L231.7 669.1L217.1 676.5ZM231.7 705.6L245.9 698.3L245.9 660.2L231.7 667.5ZM245.9 698.3L259.9 691.1L259.9 652.4L245.9 659.6ZM259.9 691.1L273.5 683.9L273.5 644.7L259.9 651.8ZM273.5 683.9L286.6 677.0L286.6 637.1L273.5 644.1ZM286.6 677.0L299.3 670.2L299.3 630.2L286.6 637.0ZM299.3 670.2L311.7 663.6L311.7 623.6L299.3 630.2ZM311.7 663.6L323.7 657.2L323.7 617.2L311.7 623.6ZM323.7 657.2L335.3 651.1L335.3 611.1L323.7 617.2ZM335.3 651.1L346.5 645.1L346.5 605.6L335.3 611.6ZM346.5 645.1L357.3 639.2L357.3 600.3L346.5 606.1ZM357.3 639.2L367.6 633.6L367.6 595.2L357.3 600.8ZM367.6 633.6L377.5 628.2L377.5 590.9L367.6 596.3ZM377.5 628.2L387.0 623.0L387.0 591.6L377.5 596.8ZM387.0 623.0L396.1 618.0L396.1 592.1L387.0 597.2ZM396.1 618.0L404.8 613.1L404.8 592.6L396.1 597.5ZM404.8 613.1L413.1 608.4L413.1 593.0L404.8 597.8ZM413.1 608.4L421.0 603.7L421.0 593.3L413.1 598.0ZM421.0 603.7L428.5 599.2L428.5 593.6L421.0 598.1ZM428.5 599.2L435.7 594.8L435.7 593.7L428.5 598.1ZM435.7 594.8L442.6 590.6L442.6 574.0L435.7 578.3ZM442.6 590.6L449.2 586.5L449.2 565.6L442.6 569.6ZM449.2 586.5L455.6 582.6L455.6 559.3L449.2 563.2ZM455.6 582.6L461.7 578.8L461.7 554.8L455.6 558.6ZM461.7 578.8L467.6 575.2L467.6 550.4L461.7 554.1ZM467.6 575.2L473.1 571.5L473.1 546.9L467.6 550.5ZM473.1 571.5L478.4 567.9L478.4 543.8L473.1 547.4ZM478.4 567.9L483.4 564.3L483.4 540.7L478.4 544.3ZM483.4 564.3L488.1 560.7L488.1 537.6L483.4 541.2ZM488.1 560.7L492.6 557.1L492.6 534.4L488.1 538.0ZM492.6 557.1L497.0 553.5L497.0 531.3L492.6 534.9ZM497.0 553.5L501.1 550.0L501.1 528.4L497.0 531.9ZM501.1 550.0L505.2 546.6L505.2 525.6L501.1 529.1ZM505.2 546.6L509.1 543.3L509.1 522.9L505.2 526.3ZM509.1 543.3L512.9 540.0L512.9 520.3L509.1 523.6ZM512.9 540.0L516.6 536.8L516.6 517.7L512.9 520.9ZM516.6 536.8L520.1 533.6L520.1 515.1L516.6 518.3ZM520.1 533.6L523.5 530.4L523.5 512.5L520.1 515.7ZM523.5 530.4L526.7 527.3L526.7 510.0L523.5 513.1ZM526.7 527.3L529.8 524.2L529.8 507.4L526.7 510.5ZM529.8 524.2L532.7 521.2L532.7 504.9L529.8 508.0ZM532.7 521.2L535.5 518.1L535.5 502.4L532.7 505.4ZM535.5 518.1L538.3 515.1L538.3 499.8L535.5 502.9ZM538.3 515.1L540.9 512.0L540.9 497.3L538.3 500.3ZM540.9 512.0L543.5 508.9L543.5 494.7L540.9 497.8ZM543.5 508.9L545.9 505.8L545.9 492.0L543.5 495.1ZM545.9 505.8L548.2 502.6L548.2 489.3L545.9 492.5ZM548.2 502.6L550.4 499.4L550.4 486.5L548.2 489.8ZM550.4 499.4L552.4 496.2L552.4 483.8L550.4 487.0ZM552.4 496.2L554.3 492.9L554.3 480.9L552.4 484.2ZM554.3 492.9L556.1 489.7L556.1 478.1L554.3 481.4ZM556.1 489.7L557.7 486.4L557.7 475.2L556.1 478.5ZM557.7 486.4L559.1 483.0L559.1 472.3L557.7 475.6ZM559.1 483.0L560.4 479.7L560.4 469.3L559.1 472.7ZM560.4 479.7L561.5 476.3L561.5 466.3L560.4 469.7ZM561.5 476.3L562.4 472.9L562.4 463.3L561.5 466.7ZM562.4 472.9L563.1 469.6L563.1 460.3L562.4 463.6ZM563.1 469.6L563.7 466.2L563.7 457.2L563.1 460.6ZM563.7 466.2L564.1 462.8L564.1 453.8L563.7 457.2ZM564.1 462.8L564.4 459.5L564.4 450.5L564.1 453.8ZM564.4 459.5L564.6 456.2L564.6 447.2L564.4 450.5ZM564.6 456.2L564.7 453.0L564.7 444.0L564.6 447.2ZM564.7 453.0L564.7 449.8L564.7 440.8L564.7 444.0ZM564.7 449.8L564.5 446.6L564.5 437.4L564.7 440.5ZM564.5 446.6L564.2 443.5L564.2 433.4L564.5 436.5ZM564.2 443.5L563.6 440.5L563.6 429.5L564.2 432.5ZM563.6 440.5L562.9 437.5L562.9 425.7L563.6 428.6ZM562.9 437.5L562.0 434.6L562.0 422.0L562.9 424.8ZM562.0 434.6L561.0 431.9L561.0 418.3L562.0 421.1ZM561.0 431.9L559.8 429.1L559.8 414.8L561.0 417.5ZM559.8 429.1L558.5 426.5L558.5 411.7L559.8 414.4ZM558.5 426.5L557.1 424.0L557.1 408.8L558.5 411.3ZM557.1 424.0L555.6 421.5L555.6 405.9L557.1 408.4ZM555.6 421.5L553.9 419.1L553.9 403.1L555.6 405.5ZM553.9 419.1L552.2 416.9L552.2 400.5L553.9 402.7ZM552.2 416.9L550.4 414.7L550.4 397.9L552.2 400.1ZM550.4 414.7L548.6 412.6L548.6 395.4L550.4 397.5ZM548.6 412.6L546.7 410.6L546.7 393.0L548.6 395.1ZM546.7 410.6L544.7 408.7L544.7 390.7L546.7 392.7ZM544.7 408.7L542.7 406.8L542.7 388.8L544.7 390.7ZM542.7 406.8L540.6 405.1L540.6 387.1L542.7 388.8ZM540.6 405.1L538.5 403.4L538.5 385.4L540.6 387.1ZM538.5 403.4L536.4 401.9L536.4 383.9L538.5 385.4ZM536.4 401.9L534.2 400.4L534.2 382.4L536.4 383.9ZM534.2 400.4L532.0 399.0L532.0 381.0L534.2 382.4ZM532.0 399.0L529.8 397.6L529.8 379.6L532.0 381.0ZM529.8 397.6L527.6 396.2L527.6 378.2L529.8 379.6ZM527.6 396.2L525.4 394.9L525.4 376.9L527.6 378.2ZM525.4 394.9L523.3 393.5L523.3 375.5L525.4 376.9ZM523.3 393.5L521.2 392.1L521.2 374.1L523.3 375.5ZM521.2 392.1L519.1 390.8L519.1 372.8L521.2 374.1ZM519.1 390.8L517.1 389.4L517.1 371.4L519.1 372.8ZM517.1 389.4L515.0 388.1L515.0 370.2L517.1 371.5ZM515.0 388.1L513.0 386.8L513.0 369.4L515.0 370.7ZM513.0 386.8L510.9 385.5L510.9 368.6L513.0 369.9ZM510.9 385.5L508.9 384.3L508.9 367.8L510.9 369.1ZM508.9 384.3L506.9 383.0L506.9 367.1L508.9 368.3ZM506.9 383.0L504.8 381.8L504.8 366.4L506.9 367.6ZM504.8 381.8L502.8 380.7L502.8 366.4L504.8 367.6ZM502.8 380.7L500.8 379.6L500.8 366.8L502.8 367.9ZM500.8 379.6L498.8 378.5L498.8 367.2L500.8 368.3ZM498.8 378.5L496.7 377.5L496.7 367.6L498.8 368.7ZM496.7 377.5L494.7 376.4L494.7 368.7L496.7 369.7ZM494.7 376.4L492.8 375.4L492.8 370.4L494.7 371.4ZM492.8 375.4L490.9 374.4L490.9 372.1L492.8 373.1Z" fill="#0000f0" stroke="#00001a" stroke-width="0.6" stroke-linejoin="round"/><path d="M140 751.5 143.7 749.8 147.4 748 151.2 746.2 155 744.4 158.8 742.6 162.6 740.9 166.3 739.1 170 737.4 173.6 735.6 177 733.9 180.4 732.3 183.6 730.7 186.4 729.3 189 727.9 191.4 726.6 193.8 725.4 196.1 724.1 198.4 722.9 200.8 721.6 203.3 720.2 205.9 718.8 208.8 717.3 211.9 715.7 215.2 714 218.6 712.2 222.1 710.4 225.8 708.6 229.5 706.6 233.3 704.7 237.2 702.7 241 700.8 244.9 698.8 248.8 696.8 252.6 694.9 256.3 692.9 260 691 263.6 689.1 267.2 687.2 270.8 685.3 274.4 683.4 278 681.5 281.7 679.6 285.2 677.7 288.8 675.8 292.4 673.9 296 672 299.5 670.1 303 668.2 306.5 666.3 310 664.5 313.8 662.5 317.4 660.5 321.1 658.6 324.7 656.7 328.3 654.8 331.9 652.9 335.5 650.9 339.1 649 342.7 647.1 346.4 645.1 350.2 643.1 354 641 357.5 639.1 361.1 637.2 364.7 635.2 368.4 633.2 372.1 631.2 375.9 629.1 379.7 627.1 383.4 625 387.2 622.9 390.9 620.9 394.6 618.9 398.2 616.8 401.7 614.9 405.2 612.9 408.5 611 412.6 608.6 416.5 606.3 420.4 604.1 424.2 601.8 427.9 599.6 431.6 597.3 435.2 595.1 438.8 592.9 442.4 590.7 446 588.5 449.4 586.4 452.7 584.4 456.1 582.3 459.5 580.2 462.8 578.2 466 576.1 469.2 574.1 472.3 572.1 475.4 570 478.3 568 480.7 566.3 482.9 564.7 485.1 563 487.2 561.4 489.3 559.8 491.4 558.1 493.4 556.4 495.6 554.7 497.7 552.9 500 551 502.9 548.6 505.9 546.1 508.9 543.4 512.1 540.7 515.2 538 518.4 535.2 521.4 532.3 524.4 529.5 527.3 526.7 530 524 532.3 521.6 534.5 519.2 536.7 516.8 538.8 514.5 540.9 512.1 542.9 509.7 544.8 507.3 546.6 504.9 548.4 502.4 550 500 551.4 497.8 552.7 495.7 554 493.5 555.2 491.3 556.4 489.1 557.4 487 558.4 484.7 559.4 482.5 560.2 480.3 561 478 561.7 475.7 562.3 473.4 562.8 471.1 563.3 468.7 563.7 466.4 564 464 564.3 461.7 564.5 459.4 564.6 457.2 564.7 455 564.7 453.2 564.7 451.5 564.7 449.7 564.6 448.1 564.5 446.4 564.3 444.7 564.1 443.1 563.8 441.5 563.5 439.8 563.1 438.2 562.6 436.5 562 434.8 561.4 433 560.7 431.3 560 429.6 559.2 427.9 558.3 426.2 557.4 424.6 556.5 423 555.5 421.4 554.4 419.8 553.2 418.2 552 416.6 550.7 415 549.4 413.5 548 412 546.6 410.5 545.1 409.1 543.6 407.7 542.1 406.3 540.4 404.9 538.7 403.6 536.9 402.2 535 401 533.1 399.7 531.2 398.5 529.3 397.3 527.4 396.1 525.5 394.9 523.6 393.7 521.7 392.5 519.9 391.3 518 390 516.1 388.8 514.2 387.6 512.4 386.4 510.5 385.3 508.7 384.1 506.9 383 505.1 382 503.6 381.1 502.2 380.3 500.7 379.6 499.3 378.8 497.9 378.1 496.5 377.3 495.1 376.6 493.7 375.9 492.3 375.1 490.9 374.4" fill="none" stroke="#00001a" stroke-width="1"/><path d="M421.9 384.9 431.9 386.9 445.9 398.9 443.9 405.9 429.9 402.9 421.9 392.9Z" fill="#84f784" opacity="0.6"/><path d="M438.7 384.4 448.7 386.4 462.7 398.4 460.7 405.4 446.7 402.4 438.7 392.4Z" fill="#84f784" opacity="0.6"/><path d="M468.1 383.2 478.1 385.2 492.1 397.2 490.1 404.2 476.1 401.2 468.1 391.2Z" fill="#84f784" opacity="0.6"/><path d="M484.9 382.4 494.9 384.4 508.9 396.4 506.9 403.4 492.9 400.4 484.9 390.4Z" fill="#84f784" opacity="0.6"/></g>
<g clip-path="url(#cr)"><path d="M619.8 732.5h14v12h-14zM626.0 729.5v18M636.2 725.5h14v12h-14zM642.5 722.5v18M652.7 718.4h14v12h-14zM659.0 715.4v18M669.1 711.4h14v12h-14zM675.4 708.4v18M685.6 704.5h14v12h-14zM691.9 701.5v18M702.2 697.6h14v12h-14zM708.5 694.6v18M718.8 690.9h14v12h-14zM725.1 687.9v18M735.3 684.2h14v12h-14zM741.6 681.2v18M751.9 677.4h14v12h-14zM758.2 674.4v18M768.5 670.7h14v12h-14zM774.8 667.7v18" fill="none" stroke="#86f386" stroke-width="1" opacity="1"/><path d="M628.0 741.0h14v12h-14zM634.3 738.0v18M644.4 734.0h14v12h-14zM650.7 731.0v18M660.9 726.9h14v12h-14zM667.2 723.9v18M677.4 719.9h14v12h-14zM683.7 716.9v18M693.9 713.1h14v12h-14zM700.2 710.1v18M710.5 706.3h14v12h-14zM716.8 703.3v18M727.0 699.5h14v12h-14zM733.3 696.5v18M743.6 692.8h14v12h-14zM749.9 689.8v18M760.2 686.0h14v12h-14zM766.5 683.0v18M776.8 679.3h14v12h-14zM783.1 676.3v18" fill="none" stroke="#86f386" stroke-width="1" opacity="0.9"/><path d="M652.2 743.2h14v12h-14zM658.5 740.2v18M668.7 736.1h14v12h-14zM675.0 733.1v18M685.1 728.9h14v12h-14zM691.4 725.9v18M701.5 721.8h14v12h-14zM707.8 718.8v18M717.9 714.7h14v12h-14zM724.2 711.7v18M734.4 707.7h14v12h-14zM740.7 704.7v18M750.9 700.8h14v12h-14zM757.2 697.8v18M767.4 693.8h14v12h-14zM773.7 690.8v18M783.8 686.8h14v12h-14zM790.1 683.8v18M800.3 679.7h14v12h-14zM806.6 676.7v18M816.7 672.6h14v12h-14zM823.0 669.6v18" fill="none" stroke="#86f386" stroke-width="1" opacity="1"/><path d="M660.5 751.7h14v12h-14zM666.8 748.7v18M676.9 744.5h14v12h-14zM683.2 741.5v18M693.3 737.3h14v12h-14zM699.6 734.3v18M709.7 730.2h14v12h-14zM716.0 727.2v18M726.2 723.2h14v12h-14zM732.5 720.2v18M742.7 716.2h14v12h-14zM749.0 713.2v18M759.2 709.3h14v12h-14zM765.5 706.3v18M775.6 702.3h14v12h-14zM781.9 699.3v18M792.1 695.2h14v12h-14zM798.4 692.2v18M808.5 688.2h14v12h-14zM814.8 685.2v18M825.0 681.1h14v12h-14zM831.3 678.1v18" fill="none" stroke="#86f386" stroke-width="1" opacity="0.9"/><path d="M713.5 761.5h14v12h-14zM719.8 758.5v18M729.9 754.3h14v12h-14zM736.2 751.3v18M746.3 747.1h14v12h-14zM752.6 744.1v18M762.6 739.8h14v12h-14zM768.9 736.8v18M779.0 732.6h14v12h-14zM785.3 729.6v18M795.3 725.1h14v12h-14zM801.6 722.1v18M811.5 717.5h14v12h-14zM817.8 714.5v18M827.6 709.8h14v12h-14zM833.9 706.8v18M843.8 702.0h14v12h-14zM850.1 699.0v18M859.8 694.2h14v12h-14zM866.1 691.2v18M875.8 686.2h14v12h-14zM882.1 683.2v18" fill="none" stroke="#86f386" stroke-width="1" opacity="1"/><path d="M721.8 769.9h14v12h-14zM728.1 766.9v18M738.2 762.7h14v12h-14zM744.5 759.7v18M754.5 755.4h14v12h-14zM760.8 752.4v18M770.9 748.2h14v12h-14zM777.2 745.2v18M787.2 740.8h14v12h-14zM793.5 737.8v18M803.5 733.3h14v12h-14zM809.8 730.3v18M819.6 725.6h14v12h-14zM825.9 722.6v18M835.8 717.9h14v12h-14zM842.1 714.9v18M851.9 710.1h14v12h-14zM858.2 707.1v18M867.9 702.1h14v12h-14zM874.2 699.1v18" fill="none" stroke="#86f386" stroke-width="1" opacity="0.9"/><path d="M750.0 773.5h14v12h-14zM756.3 770.5v18M766.2 765.9h14v12h-14zM772.5 762.9v18M782.4 758.2h14v12h-14zM788.7 755.2v18M798.4 750.2h14v12h-14zM804.7 747.2v18M814.2 741.8h14v12h-14zM820.5 738.8v18M830.0 733.5h14v12h-14zM836.3 730.5v18M846.0 725.4h14v12h-14zM852.3 722.4v18M861.9 717.2h14v12h-14zM868.2 714.2v18M877.8 708.9h14v12h-14zM884.1 705.9v18M893.6 700.6h14v12h-14zM899.9 697.6v18M909.4 692.1h14v12h-14zM915.7 689.1v18" fill="none" stroke="#86f386" stroke-width="1" opacity="1"/><path d="M758.2 781.6h14v12h-14zM764.5 778.6v18M774.4 774.0h14v12h-14zM780.7 771.0v18M790.5 766.2h14v12h-14zM796.8 763.2v18M806.4 758.0h14v12h-14zM812.7 755.0v18M822.2 749.5h14v12h-14zM828.5 746.5v18M838.1 741.4h14v12h-14zM844.4 738.4v18M854.1 733.2h14v12h-14zM860.4 730.2v18M870.0 725.0h14v12h-14zM876.3 722.0v18M885.8 716.7h14v12h-14zM892.1 713.7v18M901.6 708.3h14v12h-14zM907.9 705.3v18M917.4 699.9h14v12h-14zM923.7 696.9v18" fill="none" stroke="#86f386" stroke-width="1" opacity="0.9"/><path d="M1042 470 1059.7 470.6" fill="none" stroke="#2f7fd6" stroke-width="1.2"/><path d="M1196.6 471.4 1213 471.9" fill="none" stroke="#2f7fd6" stroke-width="1.2"/><path d="M1161 546 1161 597.0" fill="none" stroke="#2f7fd6" stroke-width="1.2"/><path d="M1104.8 600 1177 608.8" fill="none" stroke="#2f7fd6" stroke-width="1.2"/><path d="M1111.5 614.5 1110 770.0" fill="none" stroke="#2f7fd6" stroke-width="1.2"/><path d="M1007.2 663.8 1007 752.0" fill="none" stroke="#2f7fd6" stroke-width="1.2"/><path d="M1152.75 592.5h14M1159.75 586.5v12M1154.75 590.5l10 4" stroke="#30e030" stroke-width="1" fill="none"/><path d="M1102 767h14M1109 761v12M1104 765l10 4" stroke="#30e030" stroke-width="1" fill="none"/><path d="M999 751h14M1006 745v12M1001 749l10 4" stroke="#30e030" stroke-width="1" fill="none"/><linearGradient id="rd" gradientUnits="userSpaceOnUse" x1="800" y1="700" x2="1150" y2="420"><stop offset="0" stop-color="#930808"/><stop offset="0.5" stop-color="#850303"/><stop offset="1" stop-color="#780000"/></linearGradient><path d="M776.8 651.8 781.3 649.6 785.8 647.4 790.3 645.3 794.8 643.1 799.4 641 803.9 638.9 808.4 636.7 812.9 634.5 817.4 632.4 821.9 630.1 826.4 627.9 830.9 625.7 835.5 623.3 840 621 844.4 618.7 848.9 616.3 853.4 613.8 857.9 611.3 862.5 608.7 867 606.2 871.5 603.6 876 601 880.5 598.5 885 595.9 889.3 593.4 893.6 591 897.9 588.6 902 586.2 906 584 910.7 581.4 915.3 578.9 919.7 576.6 924 574.2 928.2 572 932.5 569.7 936.7 567.4 941 565 945.4 562.6 950 560 954.2 557.6 958.5 555.2 962.9 552.7 967.5 550.2 972 547.6 976.6 545 981.2 542.4 985.7 539.7 990.1 537.1 994.4 534.4 998.5 531.8 1002.4 529.1 1006 526.5 1010.3 523.2 1014.4 519.9 1018.3 516.6 1022.1 513.3 1025.6 509.9 1029 506.6 1032.2 503.3 1035.3 500 1037.8 497.2 1040.1 494.5 1042.4 491.8 1044.5 489 1046.5 486.3 1048.4 483.5 1050.3 480.8 1052 478 1053.5 475.5 1054.8 473 1056.1 470.5 1057.4 467.9 1058.5 465.4 1059.6 462.9 1060.6 460.4 1061.5 458 1062.3 455.9 1063 453.8 1063.7 451.7 1064.4 449.6 1064.9 447.6 1065.4 445.6 1065.8 443.6 1066 441.6 1066.1 439.9 1066.2 438.1 1066.2 436.5 1066.1 434.8 1065.9 433.1 1065.6 431.4 1065.3 429.8 1064.8 428.1 1064.1 426.2 1063.3 424.3 1062.4 422.3 1061.3 420.4 1060.2 418.5 1059 416.6 1057.7 414.8 1056.4 413 1055 411.3 1053.5 409.7 1052 408.1 1050.4 406.5 1048.7 405 1047 403.5 1045.4 402 1043.8 400.4 1100 401 1148.7 402.1 1150.8 403 1152.9 403.9 1155.1 404.7 1157.2 405.5 1159.3 406.4 1161.4 407.4 1163.5 408.5 1165.5 409.7 1167.7 411.2 1170 412.9 1172.2 414.7 1174.4 416.6 1176.5 418.6 1178.6 420.6 1180.5 422.7 1182.3 424.8 1183.9 426.8 1185.3 428.8 1186.8 430.8 1188.1 432.9 1189.3 435 1190.4 437.2 1191.5 439.4 1192.4 441.6 1193.2 443.8 1193.9 446.1 1194.5 448.4 1195 450.7 1195.4 453 1195.8 455.4 1196.1 457.7 1196.3 460 1196.5 462.2 1196.6 464.4 1196.6 466.6 1196.6 468.8 1196.5 471 1196.4 473.3 1196.2 475.6 1196 478 1195.7 481 1195.3 484 1194.9 487.2 1194.4 490.4 1193.8 493.6 1193.2 496.8 1192.4 499.9 1191.5 503 1190.5 506 1189.4 508.9 1188.2 511.9 1186.9 514.8 1185.5 517.6 1184.1 520.5 1182.6 523.3 1181 526 1179.3 528.7 1177.6 531.4 1175.7 534 1173.8 536.5 1171.9 539.1 1169.9 541.6 1167.9 544.1 1166 546.5 1164.2 548.8 1162.4 551 1160.6 553.3 1158.8 555.5 1157 557.6 1155.1 559.8 1153.1 561.9 1151 564 1148.5 566.3 1145.9 568.6 1143.3 570.9 1140.5 573.2 1137.7 575.4 1134.8 577.6 1131.9 579.8 1129 582 1126 584.2 1123 586.3 1120 588.4 1117 590.5 1113.9 592.6 1110.6 594.8 1107.2 597.1 1103.7 599.5 1100 602.1 1096.1 604.8 1092 607.7 1087.8 610.7 1083.4 613.8 1079 616.9 1074.6 620 1070.1 623.1 1065.6 626.2 1061.1 629.2 1056.7 632.2 1052.2 635.2 1047.6 638.3 1042.9 641.3 1038.1 644.4 1033.4 647.5 1028.7 650.5 1024 653.5 1019.4 656.4 1014.9 659.1 1010.6 661.7 1006.4 664.1 1002.1 666.5 997.9 668.7 993.8 670.8 989.8 672.7 985.9 674.6 982.2 676.5 978.5 678.2 975 680 972.4 681.4 969.8 682.7 967.4 683.9 965.1 685.1 962.7 686.3 960.4 687.6 958.1 688.8 955.7 690 930 702 910.4 710.5 895 714 880 712 862 705 836 692 813 678 795 664.0Z" fill="url(#rd)"/><path d="M815 679 850 674 880 688 906 700 910.4 710.5 895 714 880 712 862 705 836 692.0Z" fill="#cf5062" opacity="0.85"/><path d="M901.5 717 906.5 718.5 901.5 720 906.5 721.5 901.5 723 906.5 724.5 901.5 726 906.5 727.5 901.5 729 906.5 730.5 901.5 732 906.5 733.5 901.5 735 906.5 736.5 901.5 738.0" fill="none" stroke="#18c818" stroke-width="1"/><path d="M905 716 917 722 912 738 905 741 905 716.0" fill="none" stroke="#6fe86f" stroke-width="0.8"/><linearGradient id="rg" gradientUnits="userSpaceOnUse" x1="850" y1="700" x2="1120" y2="480"><stop offset="0" stop-color="#10d810" stop-opacity="0"/><stop offset="0.35" stop-color="#10d810" stop-opacity="0.3"/><stop offset="0.7" stop-color="#10d810" stop-opacity="0.8"/><stop offset="1" stop-color="#0ad80a" stop-opacity="1"/></linearGradient><path d="M869.8 605.7 873.4 604.1 876.8 602.6 880.1 601.2 883.1 599.9 885.9 598.6 888.5 597.5 890.7 596.6 892.6 595.7 894.4 595 896 594.3 897.6 593.7 899.1 593.1 900.7 592.4 902.3 591.7 904.1 590.9 906 590 909.2 588.5 912.7 586.8 916.3 584.9 920.1 583 924 581 928 578.9 932 576.8 935.9 574.7 939.8 572.6 943.5 570.5 947.1 568.5 950.7 566.4 954.3 564.3 957.9 562.2 961.4 560.1 964.9 557.9 968.4 555.8 971.8 553.7 975.2 551.6 978.5 549.5 981.4 547.7 984.2 545.9 986.9 544.2 989.5 542.5 992.2 540.8 994.8 539.1 997.5 537.3 1000.3 535.5 1003.1 533.6 1006 531.5 1009.2 529.2 1012.5 526.8 1016 524.2 1019.5 521.5 1023.1 518.8 1026.7 516.1 1030.3 513.3 1033.9 510.5 1037.3 507.7 1040.7 505.1 1043.9 502.5 1047 500 1049.8 497.7 1052.6 495.5 1055.4 493.4 1058.1 491.2 1060.7 489.1 1063.2 487.1 1065.6 485 1067.9 482.8 1070 480.7 1072 478.5 1073.5 476.7 1074.9 474.9 1076.2 473 1077.4 471.2 1078.5 469.3 1079.6 467.5 1080.6 465.6 1081.5 463.7 1082.4 461.9 1083.2 460 1083.9 458.3 1084.5 456.6 1085 454.9 1085.5 453.2 1085.9 451.5 1086.3 449.8 1086.6 448.1 1086.9 446.5 1087.2 444.8 1087.4 443.2 1087.6 441.8 1087.7 440.4 1087.8 439.1 1087.8 437.7 1087.9 436.4 1087.9 435.1 1087.8 433.8 1087.7 432.4 1087.6 431.1 1087.4 429.8 1087.2 428.4 1086.9 427.1 1086.6 425.7 1086.3 424.4 1085.9 423 1085.4 421.7 1084.9 420.3 1084.4 419 1083.8 417.7 1083.2 416.4 1082.4 415 1081.6 413.6 1080.8 412.2 1079.8 410.8 1078.8 409.5 1077.8 408.1 1076.7 406.8 1075.6 405.5 1074.4 404.2 1073.2 402.9 1071.8 401.5 1070.2 400.1 1068.6 398.7 1067 397.3 1065.2 396 1063.5 394.7 1061.7 393.4 1059.9 392.1 1058.2 390.8 1056.4 389.5 1054.6 388.2 1052.8 386.9 1051 385.6 1049.1 384.4 1047.2 383.1 1045.4 381.9 1043.5 380.6 1041.6 379.4 1039.8 378.2 1037.9 376.9 1037.9 386.9 1039.8 388.1 1041.6 389.4 1043.5 390.6 1045.4 391.8 1047.2 393.1 1049.1 394.3 1051 395.6 1052.8 396.8 1054.6 398.1 1056.4 399.4 1058.2 400.7 1059.9 401.9 1061.7 403.2 1063.5 404.5 1065.2 405.8 1067 407.2 1068.6 408.5 1070.2 409.9 1071.8 411.3 1073.2 412.7 1074.4 413.9 1075.6 415.2 1076.7 416.5 1077.8 417.9 1078.8 419.2 1079.8 420.6 1080.8 421.9 1081.6 423.3 1082.4 424.7 1083.2 426.1 1083.8 427.4 1084.4 428.7 1084.9 430 1085.4 431.3 1085.9 432.7 1086.3 434 1086.6 435.4 1086.9 436.7 1087.2 438.1 1087.4 439.4 1087.6 440.7 1087.7 442 1087.8 443.3 1087.9 444.7 1087.9 446 1087.8 447.3 1087.8 448.6 1087.7 450 1087.6 451.3 1087.4 452.7 1087.2 454.3 1086.9 456 1086.6 457.6 1086.3 459.3 1085.9 461 1085.5 462.8 1085 464.5 1084.5 466.2 1083.9 467.9 1083.2 469.6 1082.4 471.5 1081.5 473.4 1080.6 475.3 1079.6 477.2 1078.5 479.1 1077.4 480.9 1076.2 482.8 1074.9 484.7 1073.5 486.5 1072 488.3 1070 490.6 1067.9 492.7 1065.6 494.9 1063.2 497 1060.7 499.1 1058.1 501.3 1055.4 503.4 1052.6 505.6 1049.8 507.9 1047 510.2 1043.9 512.7 1040.7 515.3 1037.3 518.1 1033.9 520.9 1030.3 523.7 1026.7 526.5 1023.1 529.3 1019.5 532.2 1016 534.9 1012.5 537.6 1009.2 540.1 1006 542.5 1003.1 544.7 1000.3 546.7 997.5 548.6 994.8 550.5 992.2 552.3 989.5 554 986.9 555.8 984.2 557.6 981.4 559.4 978.5 561.3 975.2 563.5 971.8 565.7 968.4 567.9 964.9 570.1 961.4 572.3 957.9 574.6 954.3 576.8 950.7 579 947.1 581.1 943.5 583.3 939.8 585.4 935.9 587.7 932 589.9 928 592.1 924 594.3 920.1 596.4 916.3 598.4 912.7 600.4 909.2 602.2 906 603.8 904.1 604.8 902.3 605.6 900.7 606.4 899.1 607.1 897.6 607.8 896 608.5 894.4 609.2 892.6 610 890.7 610.8 888.5 611.8 885.9 613 883.1 614.4 880.1 615.8 876.8 617.3 873.4 618.9 869.8 620.6Z" fill="url(#rg)"/><path d="M901.2 611 904.6 609.2 908 607.5 911.2 605.9 914.3 604.4 917.4 602.9 920.4 601.5 923.3 600 926.3 598.6 929.3 597.1 932.3 595.7 935.4 594.1 938.5 592.5 942.1 590.6 945.9 588.7 949.6 586.6 953.5 584.6 957.3 582.5 961.2 580.4 965 578.3 968.8 576.2 972.4 574.1 976 572 979.1 570.1 982.2 568.3 985.1 566.4 988 564.6 990.9 562.8 993.8 560.9 996.8 559 999.7 557.1 1002.8 555.1 1006 553 1009.3 550.9 1012.8 548.7 1016.3 546.4 1019.9 544.1 1023.6 541.8 1027.3 539.4 1031 537 1034.7 534.6 1038.3 532.2 1041.8 529.8 1045.2 527.4 1048.5 525 1051.9 522.5 1055.2 520 1058.4 517.5 1061.6 515 1064.8 512.5 1067.8 510 1070.8 507.5 1073.6 505 1076.4 502.5 1079 500 1081.1 497.9 1083.2 495.8 1085.2 493.7 1087.1 491.5 1089 489.4 1090.8 487.3 1092.5 485.2 1094.1 483.1 1095.6 481 1097 479 1098.1 477.4 1099 475.8 1100 474.3 1100.8 472.8 1101.6 471.2 1102.4 469.7 1103.1 468.1 1103.8 466.6 1104.5 465 1105.1 463.4 1105.7 461.8 1106.3 460.1 1106.8 458.4 1107.3 456.7 1107.7 455 1108.1 453.3 1108.5 451.6 1108.8 449.9 1109.1 448.2 1109.3 446.6 1109.5 445.2 1109.6 443.9 1109.7 442.5 1109.8 441.2 1109.8 439.9 1109.8 438.6 1109.8 437.3 1109.7 435.9 1109.5 434.6 1109.3 433.2 1109 431.6 1108.6 429.9 1108.2 428.2 1107.7 426.5 1107.1 424.8 1106.5 423.1 1105.8 421.4 1105.1 419.7 1104.3 418 1103.4 416.4 1102.4 414.6 1101.2 412.9 1100 411.1 1098.7 409.3 1097.4 407.6 1096 405.9 1094.5 404.2 1093 402.6 1091.5 401.1 1090 399.6 1088.5 398.2 1086.9 396.9 1085.3 395.7 1083.6 394.5 1081.9 393.4 1080.2 392.2 1078.4 391.1 1076.7 390 1074.9 388.9 1073.2 387.8 1071.4 386.6 1069.6 385.5 1067.7 384.3 1065.9 383.2 1064 382.1 1062.2 380.9 1060.3 379.8 1058.4 378.7 1056.6 377.5 1054.7 376.4 1054.7 386.4 1056.6 387.5 1058.4 388.6 1060.3 389.8 1062.2 390.9 1064 392 1065.9 393.1 1067.7 394.2 1069.6 395.4 1071.4 396.5 1073.2 397.7 1074.9 398.8 1076.7 399.9 1078.4 401 1080.2 402.1 1081.9 403.2 1083.6 404.3 1085.3 405.5 1086.9 406.7 1088.5 408 1090 409.4 1091.5 410.8 1093 412.4 1094.5 414 1096 415.6 1097.4 417.3 1098.7 419 1100 420.8 1101.2 422.5 1102.4 424.3 1103.4 426.1 1104.3 427.7 1105.1 429.3 1105.8 431 1106.5 432.7 1107.1 434.4 1107.7 436.1 1108.2 437.8 1108.6 439.5 1109 441.2 1109.3 442.8 1109.5 444.1 1109.7 445.5 1109.8 446.8 1109.8 448.1 1109.8 449.4 1109.8 450.7 1109.7 452 1109.6 453.4 1109.5 454.7 1109.3 456.1 1109.1 457.7 1108.8 459.4 1108.5 461.1 1108.1 462.8 1107.7 464.6 1107.3 466.3 1106.8 468 1106.3 469.7 1105.7 471.4 1105.1 473.1 1104.5 474.7 1103.8 476.3 1103.1 477.9 1102.4 479.4 1101.6 481 1100.8 482.5 1100 484.1 1099 485.7 1098.1 487.3 1097 488.9 1095.6 490.9 1094.1 493 1092.5 495.1 1090.8 497.3 1089 499.4 1087.1 501.6 1085.2 503.7 1083.2 505.9 1081.1 508 1079 510.2 1076.4 512.7 1073.6 515.2 1070.8 517.8 1067.8 520.3 1064.8 522.9 1061.6 525.4 1058.4 528 1055.2 530.5 1051.9 533.1 1048.5 535.7 1045.2 538.1 1041.8 540.6 1038.3 543.1 1034.7 545.6 1031 548.2 1027.3 550.7 1023.6 553.1 1019.9 555.6 1016.3 558 1012.8 560.3 1009.3 562.6 1006 564.9 1002.8 567 999.7 569.1 996.8 571.1 993.8 573.1 990.9 575.1 988 577 985.1 578.9 982.2 580.8 979.1 582.7 976 584.7 972.4 586.9 968.8 589.1 965 591.3 961.2 593.5 957.3 595.7 953.5 597.9 949.6 600.1 945.9 602.2 942.1 604.2 938.5 606.3 935.4 608 932.3 609.6 929.3 611.2 926.3 612.7 923.3 614.3 920.4 615.8 917.4 617.3 914.3 618.9 911.2 620.5 908 622.2 904.6 624 901.2 625.9Z" fill="url(#rg)"/><path d="M962 620.9 966 618.9 970 616.9 973.8 614.9 977.5 612.9 981 611 985.1 608.8 989 606.5 992.9 604.3 996.7 602.1 1000.4 600 1004.1 597.8 1007.7 595.6 1011.3 593.4 1014.9 591.2 1018.5 589 1021.9 586.9 1025.3 584.8 1028.6 582.8 1031.9 580.7 1035.2 578.6 1038.4 576.5 1041.7 574.4 1044.9 572.3 1048.1 570.2 1051.3 568 1054.4 565.9 1057.5 563.7 1060.6 561.6 1063.6 559.4 1066.7 557.2 1069.7 555 1072.7 552.8 1075.7 550.5 1078.6 548.3 1081.6 546 1084.5 543.7 1087.5 541.4 1090.4 539.1 1093.3 536.8 1096.2 534.5 1099.1 532.1 1101.9 529.8 1104.7 527.4 1107.4 525.1 1110 522.7 1112.3 520.6 1114.6 518.4 1116.8 516.3 1119 514.2 1121.2 512 1123.3 509.9 1125.3 507.7 1127.3 505.5 1129.2 503.3 1131 501 1132.6 498.9 1134.2 496.7 1135.8 494.5 1137.3 492.3 1138.7 490.1 1140.1 487.9 1141.4 485.6 1142.6 483.4 1143.7 481.2 1144.8 479 1145.6 477.1 1146.3 475.2 1147.1 473.3 1147.7 471.3 1148.3 469.4 1148.8 467.5 1149.3 465.6 1149.7 463.7 1150.1 461.9 1150.4 460 1150.6 458.3 1150.8 456.6 1151 454.9 1151.1 453.2 1151.2 451.5 1151.2 449.9 1151.2 448.2 1151.1 446.5 1150.9 444.9 1150.7 443.2 1150.4 441.5 1150.1 439.8 1149.7 438.1 1149.2 436.4 1148.7 434.7 1148.2 433 1147.6 431.3 1146.9 429.7 1146.2 428 1145.4 426.4 1144.5 424.7 1143.5 422.9 1142.5 421.2 1141.4 419.5 1140.2 417.8 1139 416.1 1137.7 414.5 1136.4 412.9 1135 411.3 1133.6 409.7 1132 408 1130.3 406.4 1128.5 404.8 1126.7 403.3 1124.8 401.7 1122.8 400.2 1120.9 398.7 1118.9 397.3 1117 395.9 1115.1 394.5 1113.3 393.2 1111.4 391.9 1109.5 390.7 1107.6 389.5 1105.7 388.3 1103.9 387.2 1102 386 1100.2 384.9 1098.4 383.8 1096.7 382.8 1095.3 382 1094 381.2 1092.8 380.4 1091.5 379.6 1090.3 378.9 1089 378.2 1087.8 377.4 1086.6 376.7 1085.3 376 1084.1 375.2 1084.1 385.2 1085.3 385.9 1086.6 386.7 1087.8 387.4 1089 388.1 1090.3 388.8 1091.5 389.6 1092.8 390.3 1094 391.1 1095.3 391.9 1096.7 392.7 1098.4 393.8 1100.2 394.8 1102 395.9 1103.9 397 1105.7 398.2 1107.6 399.3 1109.5 400.5 1111.4 401.8 1113.3 403 1115.1 404.3 1117 405.7 1118.9 407.1 1120.9 408.5 1122.8 410 1124.8 411.5 1126.7 413 1128.5 414.5 1130.3 416.1 1132 417.7 1133.6 419.4 1135 420.9 1136.4 422.5 1137.7 424.1 1139 425.8 1140.2 427.4 1141.4 429.1 1142.5 430.8 1143.5 432.5 1144.5 434.2 1145.4 436 1146.2 437.6 1146.9 439.2 1147.6 440.9 1148.2 442.5 1148.7 444.2 1149.2 445.9 1149.7 447.6 1150.1 449.3 1150.4 451 1150.7 452.7 1150.9 454.4 1151.1 456.1 1151.2 457.8 1151.2 459.5 1151.2 461.2 1151.1 462.9 1151 464.6 1150.8 466.3 1150.6 468 1150.4 469.7 1150.1 471.6 1149.7 473.5 1149.3 475.4 1148.8 477.3 1148.3 479.2 1147.7 481.2 1147.1 483.1 1146.3 485 1145.6 487 1144.8 488.9 1143.7 491.1 1142.6 493.4 1141.4 495.6 1140.1 497.9 1138.7 500.1 1137.3 502.4 1135.8 504.6 1134.2 506.8 1132.6 509 1131 511.2 1129.2 513.5 1127.3 515.7 1125.3 518 1123.3 520.2 1121.2 522.4 1119 524.5 1116.8 526.7 1114.6 528.9 1112.3 531 1110 533.2 1107.4 535.7 1104.7 538.1 1101.9 540.5 1099.1 543 1096.2 545.4 1093.3 547.8 1090.4 550.3 1087.5 552.6 1084.5 555 1081.6 557.4 1078.6 559.7 1075.7 562.1 1072.7 564.4 1069.7 566.7 1066.7 569 1063.6 571.3 1060.6 573.5 1057.5 575.8 1054.4 578 1051.3 580.3 1048.1 582.5 1044.9 584.7 1041.7 586.9 1038.4 589.1 1035.2 591.3 1031.9 593.5 1028.6 595.7 1025.3 597.8 1021.9 600 1018.5 602.2 1014.9 604.5 1011.3 606.8 1007.7 609.1 1004.1 611.4 1000.4 613.7 996.7 616 992.9 618.3 989 620.6 985.1 622.9 981 625.3 977.5 627.3 973.8 629.4 970 631.5 966 633.7 962 635.8Z" fill="url(#rg)"/><path d="M993.4 625 997.2 622.9 1000.9 620.9 1004.6 618.9 1008.2 616.8 1011.7 614.9 1015.2 612.9 1018.5 611 1022.6 608.6 1026.5 606.3 1030.4 604.1 1034.2 601.8 1037.9 599.6 1041.6 597.3 1045.2 595.1 1048.8 592.9 1052.4 590.7 1056 588.5 1059.4 586.4 1062.7 584.4 1066.1 582.3 1069.5 580.2 1072.8 578.2 1076 576.1 1079.2 574.1 1082.3 572.1 1085.4 570 1088.3 568 1090.7 566.3 1092.9 564.7 1095.1 563 1097.2 561.4 1099.3 559.8 1101.4 558.1 1103.4 556.4 1105.6 554.7 1107.7 552.9 1110 551 1112.9 548.6 1115.9 546.1 1118.9 543.4 1122.1 540.7 1125.2 538 1128.4 535.2 1131.4 532.3 1134.4 529.5 1137.3 526.7 1140 524 1142.3 521.6 1144.5 519.2 1146.7 516.8 1148.8 514.5 1150.9 512.1 1152.9 509.7 1154.8 507.3 1156.6 504.9 1158.4 502.4 1160 500 1161.4 497.8 1162.7 495.7 1164 493.5 1165.2 491.3 1166.4 489.1 1167.4 487 1168.4 484.7 1169.4 482.5 1170.2 480.3 1171 478 1171.7 475.7 1172.3 473.4 1172.8 471.1 1173.3 468.7 1173.7 466.4 1174 464 1174.3 461.7 1174.5 459.4 1174.6 457.2 1174.7 455 1174.7 453.2 1174.7 451.5 1174.7 449.7 1174.6 448.1 1174.5 446.4 1174.3 444.7 1174.1 443.1 1173.8 441.5 1173.5 439.8 1173.1 438.2 1172.6 436.5 1172 434.8 1171.4 433 1170.7 431.3 1170 429.6 1169.2 427.9 1168.3 426.2 1167.4 424.6 1166.5 423 1165.5 421.4 1164.4 419.8 1163.2 418.2 1162 416.6 1160.7 415 1159.4 413.5 1158 412 1156.6 410.5 1155.1 409.1 1153.6 407.7 1152.1 406.3 1150.4 404.9 1148.7 403.6 1146.9 402.2 1145 401 1143.1 399.7 1141.2 398.5 1139.3 397.3 1137.4 396.1 1135.5 394.9 1133.6 393.7 1131.7 392.5 1129.9 391.3 1128 390 1126.1 388.8 1124.2 387.6 1122.4 386.4 1120.5 385.3 1118.7 384.1 1116.9 383 1115.1 382 1113.6 381.1 1112.2 380.3 1110.7 379.6 1109.3 378.8 1107.9 378.1 1106.5 377.3 1105.1 376.6 1103.7 375.9 1102.3 375.1 1100.9 374.4 1100.9 384.4 1102.3 385.1 1103.7 385.9 1105.1 386.6 1106.5 387.3 1107.9 388 1109.3 388.7 1110.7 389.5 1112.2 390.3 1113.6 391.1 1115.1 391.9 1116.9 392.9 1118.7 394 1120.5 395.1 1122.4 396.3 1124.2 397.5 1126.1 398.7 1128 399.9 1129.9 401.1 1131.7 402.3 1133.6 403.5 1135.5 404.7 1137.4 405.9 1139.3 407.1 1141.2 408.3 1143.1 409.5 1145 410.7 1146.9 412 1148.7 413.3 1150.4 414.6 1152.1 416 1153.6 417.4 1155.1 418.8 1156.6 420.2 1158 421.6 1159.4 423.1 1160.7 424.7 1162 426.2 1163.2 427.8 1164.4 429.4 1165.5 431 1166.5 432.6 1167.4 434.2 1168.3 435.8 1169.2 437.5 1170 439.1 1170.7 440.8 1171.4 442.5 1172 444.3 1172.6 446 1173.1 447.7 1173.5 449.4 1173.8 451 1174.1 452.7 1174.3 454.3 1174.5 456 1174.6 457.7 1174.7 459.4 1174.7 461.1 1174.7 462.9 1174.7 464.7 1174.6 466.9 1174.5 469.1 1174.3 471.5 1174 473.8 1173.7 476.2 1173.3 478.6 1172.8 481 1172.3 483.3 1171.7 485.7 1171 487.9 1170.2 490.2 1169.4 492.5 1168.4 494.8 1167.4 497 1166.4 499.2 1165.2 501.4 1164 503.6 1162.7 505.8 1161.4 508 1160 510.2 1158.4 512.7 1156.6 515.1 1154.8 517.6 1152.9 520 1150.9 522.4 1148.8 524.8 1146.7 527.3 1144.5 529.7 1142.3 532.1 1140 534.5 1137.3 537.4 1134.4 540.3 1131.4 543.2 1128.4 546.1 1125.2 549 1122.1 551.8 1118.9 554.6 1115.9 557.4 1112.9 560 1110 562.5 1107.7 564.4 1105.6 566.3 1103.4 568.1 1101.4 569.9 1099.3 571.6 1097.2 573.3 1095.1 575 1092.9 576.6 1090.7 578.4 1088.3 580.1 1085.4 582.2 1082.3 584.4 1079.2 586.5 1076 588.6 1072.8 590.7 1069.5 592.9 1066.1 595 1062.7 597.2 1059.4 599.3 1056 601.5 1052.4 603.8 1048.8 606.1 1045.2 608.4 1041.6 610.7 1037.9 613.1 1034.2 615.4 1030.4 617.8 1026.5 620.2 1022.6 622.6 1018.5 625.1 1015.2 627.1 1011.7 629.2 1008.2 631.3 1004.6 633.4 1000.9 635.6 997.2 637.7 993.4 639.9Z" fill="url(#rg)"/><path d="M619.8 710.5v19.0l8.2 -3.5v-10.5M636.2 703.5v18.8l8.1 -3.5v-10.3M652.4 696.6v18.6l7.9 -3.4v-10.2M668.2 689.8v18.4l7.8 -3.3v-10.1M683.8 683.3v18.3l7.6 -3.2v-10.1M699.1 676.9v18.1l7.5 -3.1v-10.0M714.2 670.7v17.9l7.3 -3.0v-9.9M729.0 664.7v17.8l7.2 -2.9v-9.8M743.5 658.8v17.6l7.0 -2.9v-9.7M757.7 653.1v17.4l6.8 -2.8v-9.6M771.4 647.5v17.3l6.6 -2.7v-9.5M784.7 642.1v17.1l6.4 -2.6v-9.4M797.6 636.8v17.0l6.2 -2.5v-9.3M810.1 631.7v16.6l6.0 -2.5v-9.1M822.1 626.6v16.2l5.8 -2.5v-8.9M833.7 621.6v15.9l5.6 -2.4v-8.7M844.8 616.7v15.6l5.4 -2.4v-8.6M855.5 612.0v15.2l5.1 -2.3v-8.4M865.7 607.5v14.9l4.9 -2.2v-8.2M875.5 603.2v14.7l4.7 -2.1v-8.1M884.9 599.1v14.4l4.5 -2.0v-7.9M893.9 595.2v14.1l4.3 -1.8v-7.8M902.6 591.6v13.8l4.2 -1.9v-7.6M910.7 587.7v13.6l4.0 -2.0v-7.5M918.5 583.8v13.4l3.8 -1.9v-7.4M925.8 580.0v13.2l3.7 -1.9v-7.3M932.9 576.3v13.0l3.5 -1.9v-7.1M939.6 572.6v12.8l3.4 -1.8v-7.0M946.1 569.1v12.6l3.3 -1.8v-7.0M952.2 565.5v12.5l3.1 -1.8v-6.9M958.0 562.1v12.3l3.0 -1.8v-6.8M963.6 558.7v12.2l2.9 -1.8v-6.7M969.0 555.4v12.0l2.8 -1.7v-6.6M974.1 552.2v11.9l2.7 -1.7v-6.5M979.1 549.1v11.7l2.6 -1.6v-6.5M983.9 546.1v11.6l2.5 -1.6v-6.4M988.6 543.2v11.5l2.5 -1.6v-6.3M993.1 540.3v11.3l2.4 -1.6v-6.2M997.4 537.4v11.2l2.3 -1.5v-6.2M1001.6 534.6v11.1l2.3 -1.6v-6.1" fill="none" stroke="#18c418" stroke-width="1.1" opacity="1"/><path d="M626.8 707.5v16.1M643.1 700.5v15.9M659.2 693.7v15.8M674.9 687.0v15.6M690.4 680.5v15.5M705.6 674.2v15.3M720.5 668.2v15.2M735.2 662.2v15.0M749.6 656.4v14.9M763.6 650.7v14.8M777.1 645.2v14.6M790.3 639.8v14.5M803.0 634.6v14.3M815.2 629.5v14.0M827.1 624.5v13.7M838.5 619.5v13.4M849.4 614.7v13.1M859.9 610.1v12.8M869.9 605.7v12.6M879.6 601.4v12.3" fill="none" stroke="#d8d0d0" stroke-width="0.8" opacity="0.8"/><path d="M942.1 571.3v12.8M945.3 569.5v12.7M948.4 567.7v12.6M951.4 566.0v12.5M954.3 564.3v12.4M957.2 562.6v12.3M960.0 560.9v12.3M962.8 559.2v12.2M965.5 557.6v12.1M968.1 556.0v12.0M970.7 554.4v12.0M973.2 552.8v11.9M975.7 551.2v11.8M978.2 549.7v11.8M980.6 548.2v11.7M983.0 546.7v11.6M985.3 545.2v11.6M987.7 543.7v11.5M989.9 542.3v11.4M992.2 540.9v11.4M994.4 539.4v11.3M996.5 538.0v11.3M998.7 536.6v11.2M1000.7 535.2v11.1M1002.8 533.8v11.1M1004.8 532.4v11.0M1006.7 531.0v11.0M1008.7 529.6v10.9M1010.6 528.2v10.8M1012.4 526.8v10.8M1014.3 525.5v10.7M1016.1 524.1v10.7M1017.8 522.8v10.6M1019.6 521.5v10.6M1021.3 520.2v10.5M1023.1 518.8v10.5M1024.8 517.5v10.5M1026.6 516.2v10.4M1028.3 514.8v10.4M1030.1 513.5v10.4M1031.8 512.1v10.4M1033.5 510.7v10.4M1035.3 509.4v10.3M1037.0 508.0v10.3M1038.7 506.7v10.3M1040.4 505.3v10.3M1042.2 503.9v10.2M1043.9 502.5v10.2M1045.6 501.2v10.2M1047.3 499.8v10.2M1049.0 498.4v10.1M1050.7 497.0v10.1M1052.5 495.7v10.1M1054.2 494.3v10.1M1055.9 492.9v10.1M1057.6 491.6v10.0M1059.4 490.2v10.0M1061.1 488.8v10.0M1062.8 487.4v10.0M1064.4 486.0v9.9M1066.1 484.5v9.9M1067.7 483.0v9.9M1069.3 481.5v9.9M1070.8 479.9v9.8M1072.2 478.2v9.8M1073.6 476.5v9.8M1074.9 474.8v9.8M1076.2 473.0v9.8M1077.4 471.1v9.7M1078.6 469.3v9.7M1079.7 467.4v9.7M1080.7 465.4v9.7M1081.7 463.4v9.6M1082.6 461.4v9.6M1083.4 459.4v9.6M1084.2 457.4v9.6M1084.9 455.3v9.6M1085.5 453.1v9.5M1086.0 451.0v9.5M1086.5 448.9v9.5M1086.9 446.7v9.5M1087.2 444.5v9.5" fill="none" stroke="#0a7a0a" stroke-width="0.7" opacity="0.7"/><path d="M652.2 721.2v19.0l8.2 -3.6v-10.5M668.7 714.1v18.8l8.1 -3.5v-10.3M684.7 707.1v18.6l7.9 -3.5v-10.2M700.6 700.2v18.5l7.8 -3.4v-10.1M716.1 693.5v18.3l7.6 -3.3v-10.1M731.4 687.0v18.1l7.5 -3.2v-10.0M746.4 680.7v17.9l7.4 -3.1v-9.9M761.1 674.5v17.8l7.2 -3.0v-9.8M775.5 668.3v17.6l7.0 -3.0v-9.7M789.6 662.3v17.4l6.8 -2.9v-9.6M803.2 656.4v17.3l6.6 -2.8v-9.5M816.4 650.8v17.1l6.4 -2.8v-9.4M829.2 645.2v17.0l6.2 -2.7v-9.3M841.5 639.8v16.6l6.0 -2.7v-9.1M853.5 634.5v16.3l5.8 -2.6v-8.9M865.0 629.2v15.9l5.6 -2.6v-8.8M876.0 623.9v15.6l5.4 -2.7v-8.6M886.4 618.6v15.3l5.1 -2.6v-8.4M896.3 613.5v15.0l4.9 -2.6v-8.2M905.8 608.6v14.7l4.7 -2.4v-8.1M915.1 604.0v14.4l4.5 -2.2v-7.9M923.9 599.8v14.1l4.3 -2.1v-7.8M932.4 595.6v13.9l4.2 -2.1v-7.6M940.5 591.5v13.6l4.0 -2.1v-7.5M948.1 587.5v13.4l3.8 -2.0v-7.4M955.5 583.5v13.2l3.7 -2.0v-7.3M962.5 579.7v13.0l3.5 -2.0v-7.2M969.2 575.9v12.8l3.4 -1.9v-7.1M975.6 572.2v12.7l3.3 -1.9v-7.0M981.7 568.6v12.5l3.1 -1.9v-6.9M987.4 565.0v12.3l3.0 -1.9v-6.8M993.0 561.5v12.2l2.9 -1.9v-6.7M998.2 558.0v12.0l2.8 -1.8v-6.6M1003.3 554.7v11.9l2.7 -1.7v-6.5M1008.3 551.6v11.8l2.6 -1.7v-6.5M1013.1 548.5v11.6l2.5 -1.6v-6.4M1017.7 545.5v11.5l2.5 -1.6v-6.3M1022.3 542.6v11.4l2.4 -1.5v-6.2M1026.7 539.8v11.2l2.3 -1.5v-6.2M1031.0 537.0v11.1l2.3 -1.5v-6.1" fill="none" stroke="#18c418" stroke-width="1.1" opacity="1"/><path d="M659.3 718.2v16.1M675.6 711.1v15.9M691.5 704.1v15.8M707.2 697.3v15.6M722.6 690.7v15.5M737.8 684.3v15.3M752.7 678.0v15.2M767.3 671.9v15.0M781.6 665.7v14.9M795.5 659.8v14.8M808.9 654.0v14.6M821.9 648.4v14.5M834.5 642.9v14.3M846.7 637.5v14.0M858.4 632.2v13.7M869.7 626.9v13.4M880.5 621.6v13.1M890.7 616.4v12.9M900.4 611.3v12.6M909.8 606.6v12.4" fill="none" stroke="#d8d0d0" stroke-width="0.8" opacity="0.8"/><path d="M972.2 574.2v12.8M975.3 572.4v12.7M978.3 570.6v12.6M981.3 568.8v12.5M984.2 567.0v12.4M987.1 565.2v12.3M989.8 563.5v12.3M992.6 561.7v12.2M995.2 560.0v12.1M997.8 558.3v12.0M1000.3 556.7v12.0M1002.8 555.0v11.9M1005.3 553.4v11.8M1007.8 551.9v11.8M1010.2 550.3v11.7M1012.5 548.8v11.6M1014.9 547.3v11.6M1017.2 545.9v11.5M1019.5 544.4v11.4M1021.7 543.0v11.4M1023.9 541.6v11.3M1026.1 540.2v11.3M1028.3 538.8v11.2M1030.4 537.4v11.1M1032.4 536.0v11.1M1034.5 534.7v11.0M1036.5 533.4v11.0M1038.5 532.0v10.9M1040.4 530.7v10.9M1042.3 529.4v10.8M1044.2 528.1v10.7M1046.0 526.8v10.7M1047.8 525.5v10.6M1049.6 524.2v10.6M1051.4 522.9v10.5M1053.1 521.6v10.5M1054.9 520.2v10.5M1056.6 518.9v10.4M1058.4 517.6v10.4M1060.1 516.2v10.4M1061.8 514.9v10.4M1063.6 513.5v10.4M1065.3 512.1v10.3M1067.0 510.7v10.3M1068.7 509.3v10.3M1070.3 507.9v10.3M1072.0 506.4v10.2M1073.7 505.0v10.2M1075.3 503.5v10.2M1076.9 502.0v10.2M1078.5 500.5v10.2M1080.1 499.0v10.1M1081.6 497.4v10.1M1083.1 495.8v10.1M1084.6 494.2v10.1M1086.1 492.6v10.0M1087.6 491.0v10.0M1089.1 489.3v10.0M1090.5 487.6v10.0M1091.9 485.9v9.9M1093.2 484.2v9.9M1094.6 482.4v9.9M1095.8 480.7v9.9M1097.1 478.9v9.9M1098.3 477.0v9.8M1099.5 475.1v9.8M1100.6 473.2v9.8M1101.6 471.3v9.8M1102.6 469.3v9.7M1103.5 467.3v9.7M1104.4 465.3v9.7M1105.2 463.2v9.7M1105.9 461.2v9.6M1106.6 459.1v9.6M1107.2 457.0v9.6M1107.7 454.8v9.6M1108.2 452.7v9.6M1108.7 450.5v9.5M1109.1 448.4v9.5M1109.3 446.2v9.5M1109.6 444.0v9.5M1109.7 441.8v9.5" fill="none" stroke="#0a7a0a" stroke-width="0.7" opacity="0.7"/><path d="M713.5 739.5v19.0l8.2 -3.6v-10.5M729.9 732.3v18.8l8.1 -3.6v-10.3M746.0 725.2v18.6l7.9 -3.5v-10.2M761.7 718.2v18.5l7.8 -3.5v-10.2M777.2 711.4v18.3l7.6 -3.4v-10.1M792.3 704.5v18.1l7.5 -3.5v-10.0M807.1 697.6v17.9l7.4 -3.5v-9.9M821.5 690.7v17.8l7.2 -3.4v-9.8M835.7 684.0v17.6l7.1 -3.4v-9.7M849.5 677.3v17.5l6.8 -3.3v-9.6M862.8 670.7v17.3l6.6 -3.3v-9.5M875.7 664.2v17.2l6.4 -3.2v-9.4M888.2 658.0v17.0l6.2 -3.1v-9.4M900.2 651.9v16.7l6.0 -3.0v-9.2M911.9 646.0v16.3l5.8 -2.9v-9.0M923.3 640.3v16.0l5.6 -2.8v-8.8M934.2 634.8v15.6l5.4 -2.7v-8.6M944.7 629.6v15.3l5.2 -2.6v-8.4M954.8 624.6v15.0l5.0 -2.5v-8.2M964.4 619.7v14.7l4.8 -2.4v-8.1M973.6 615.0v14.4l4.6 -2.4v-7.9M982.3 610.3v14.2l4.4 -2.4v-7.8M990.6 605.6v13.9l4.2 -2.4v-7.6M998.5 601.1v13.7l4.0 -2.4v-7.5M1006.0 596.6v13.4l3.9 -2.3v-7.4M1013.2 592.3v13.2l3.7 -2.3v-7.3M1020.0 588.0v13.0l3.6 -2.2v-7.2M1026.6 584.0v12.9l3.4 -2.1v-7.1M1032.9 580.0v12.7l3.3 -2.1v-7.0M1039.0 576.2v12.5l3.2 -2.1v-6.9M1044.7 572.4v12.4l3.0 -2.0v-6.8M1050.2 568.7v12.2l2.9 -2.0v-6.7M1055.5 565.1v12.1l2.8 -2.0v-6.6M1060.5 561.6v11.9l2.7 -1.9v-6.6M1065.3 558.2v11.8l2.6 -1.9v-6.5M1069.9 554.8v11.7l2.6 -1.9v-6.4M1074.4 551.5v11.5l2.5 -1.9v-6.3M1078.7 548.2v11.4l2.4 -1.9v-6.3M1082.9 545.0v11.3l2.4 -1.8v-6.2M1086.9 541.9v11.2l2.3 -1.8v-6.1" fill="none" stroke="#18c418" stroke-width="1.1" opacity="1"/><path d="M720.6 736.4v16.1M736.8 729.2v15.9M752.8 722.2v15.8M768.4 715.3v15.6M783.7 708.4v15.5M798.7 701.5v15.3M813.3 694.6v15.2M827.6 687.8v15.0M841.7 681.1v14.9M855.3 674.4v14.8M868.4 667.9v14.7M881.1 661.5v14.5M893.4 655.3v14.3M905.3 649.3v14.0M916.9 643.5v13.7M928.0 637.9v13.4M938.8 632.5v13.2M949.1 627.4v12.9M959.0 622.4v12.6M968.4 617.6v12.4" fill="none" stroke="#d8d0d0" stroke-width="0.8" opacity="0.8"/><path d="M1030.8 581.3v12.8M1033.9 579.4v12.7M1036.9 577.5v12.6M1039.8 575.6v12.5M1042.7 573.7v12.4M1045.5 571.9v12.3M1048.2 570.1v12.3M1050.9 568.3v12.2M1053.5 566.5v12.1M1056.1 564.7v12.0M1058.5 563.0v12.0M1061.0 561.3v11.9M1063.4 559.5v11.8M1065.7 557.9v11.8M1068.1 556.2v11.7M1070.3 554.5v11.6M1072.6 552.8v11.6M1074.8 551.2v11.5M1076.9 549.6v11.4M1079.1 548.0v11.4M1081.1 546.4v11.3M1083.2 544.8v11.3M1085.2 543.2v11.2M1087.2 541.7v11.1M1089.2 540.1v11.1M1091.1 538.6v11.0M1093.0 537.1v11.0M1094.9 535.6v10.9M1096.7 534.1v10.9M1098.5 532.7v10.8M1100.2 531.2v10.8M1102.0 529.8v10.7M1103.7 528.3v10.7M1105.3 526.9v10.6M1107.0 525.4v10.6M1108.6 524.0v10.5M1110.2 522.5v10.5M1111.9 521.0v10.5M1113.5 519.5v10.4M1115.1 518.0v10.4M1116.7 516.5v10.4M1118.2 514.9v10.4M1119.8 513.4v10.3M1121.4 511.8v10.3M1122.9 510.2v10.3M1124.4 508.6v10.3M1125.9 507.0v10.3M1127.4 505.4v10.2M1128.8 503.7v10.2M1130.2 502.0v10.2M1131.5 500.3v10.2M1132.9 498.5v10.1M1134.2 496.8v10.1M1135.5 495.0v10.1M1136.7 493.2v10.1M1137.9 491.3v10.0M1139.1 489.5v10.0M1140.2 487.6v10.0M1141.3 485.7v10.0M1142.4 483.8v10.0M1143.4 481.8v9.9M1144.4 479.8v9.9M1145.3 477.8v9.9M1146.1 475.8v9.9M1146.9 473.7v9.8M1147.6 471.6v9.8M1148.3 469.5v9.8M1148.9 467.4v9.8M1149.4 465.3v9.7M1149.8 463.1v9.7M1150.2 461.0v9.7M1150.6 458.8v9.7M1150.8 456.6v9.7M1151.0 454.4v9.6M1151.2 452.2v9.6M1151.2 450.0v9.6M1151.1 447.8v9.6M1151.0 445.6v9.5M1150.7 443.4v9.5M1150.4 441.3v9.5M1149.9 439.1v9.5M1149.4 437.0v9.5" fill="none" stroke="#0a7a0a" stroke-width="0.7" opacity="0.7"/><path d="M750.0 751.5v19.0l8.2 -3.9v-10.5M766.2 743.9v18.8l8.1 -3.8v-10.3M782.1 736.3v18.6l7.9 -3.8v-10.2M797.5 728.7v18.5l7.8 -4.0v-10.2M812.4 720.7v18.3l7.6 -4.1v-10.1M827.1 713.0v18.1l7.5 -3.9v-10.0M841.7 705.6v17.9l7.4 -3.8v-9.9M855.9 698.3v17.8l7.2 -3.7v-9.8M869.9 691.1v17.6l7.1 -3.7v-9.7M883.5 683.9v17.5l6.8 -3.6v-9.6M896.6 677.0v17.3l6.6 -3.5v-9.5M909.3 670.2v17.2l6.4 -3.4v-9.4M921.7 663.6v17.0l6.2 -3.3v-9.4M933.7 657.2v16.7l6.0 -3.2v-9.2M945.3 651.1v16.3l5.9 -3.1v-9.0M956.5 645.1v16.0l5.6 -3.0v-8.8M967.3 639.2v15.6l5.4 -2.9v-8.6M977.6 633.6v15.3l5.2 -2.8v-8.4M987.5 628.2v15.0l5.0 -2.7v-8.3M997.0 623.0v14.7l4.8 -2.6v-8.1M1006.1 618.0v14.5l4.6 -2.6v-7.9M1014.8 613.1v14.2l4.4 -2.5v-7.8M1023.1 608.4v13.9l4.2 -2.5v-7.7M1031.0 603.7v13.7l4.0 -2.4v-7.5M1038.5 599.2v13.5l3.9 -2.3v-7.4M1045.7 594.8v13.3l3.7 -2.3v-7.3M1052.6 590.6v13.1l3.6 -2.2v-7.2M1059.2 586.5v12.9l3.4 -2.1v-7.1M1065.6 582.6v12.7l3.3 -2.0v-7.0M1071.7 578.8v12.6l3.2 -2.0v-6.9M1077.6 575.2v12.4l3.1 -2.0v-6.8M1083.1 571.5v12.2l2.9 -2.0v-6.7M1088.4 567.9v12.1l2.8 -2.0v-6.6M1093.4 564.3v11.9l2.7 -2.0v-6.6M1098.1 560.7v11.8l2.7 -2.1v-6.5M1102.6 557.1v11.7l2.6 -2.1v-6.4M1107.0 553.5v11.5l2.5 -2.1v-6.4M1111.1 550.0v11.4l2.4 -2.1v-6.3M1115.2 546.6v11.3l2.4 -2.0v-6.2M1119.1 543.3v11.2l2.3 -2.0v-6.1" fill="none" stroke="#18c418" stroke-width="1.1" opacity="1"/><path d="M757.0 748.2v16.1M773.1 740.6v15.9M788.8 733.1v15.8M804.0 725.2v15.6M818.8 717.3v15.5M833.5 709.7v15.3M847.9 702.4v15.2M862.0 695.2v15.1M875.8 688.0v14.9M889.2 680.9v14.8M902.2 674.0v14.7M914.7 667.3v14.5M926.9 660.8v14.4M938.7 654.6v14.0M950.1 648.5v13.7M961.2 642.5v13.5M971.8 636.8v13.2M982.0 631.3v12.9M991.7 626.0v12.7M1001.0 620.8v12.4" fill="none" stroke="#d8d0d0" stroke-width="0.8" opacity="0.8"/><path d="M1064.4 583.4v12.8M1067.5 581.5v12.7M1070.5 579.6v12.6M1073.5 577.8v12.5M1076.4 575.9v12.4M1079.2 574.1v12.3M1081.9 572.3v12.3M1084.6 570.5v12.2M1087.2 568.7v12.1M1089.8 567.0v12.1M1092.2 565.2v12.0M1094.6 563.4v11.9M1097.0 561.6v11.8M1099.3 559.8v11.8M1101.5 558.0v11.7M1103.7 556.2v11.6M1105.8 554.5v11.6M1107.9 552.7v11.5M1110.0 551.0v11.5M1112.1 549.3v11.4M1114.1 547.6v11.3M1116.1 545.9v11.3M1118.0 544.2v11.2M1119.9 542.6v11.2M1121.8 540.9v11.1M1123.7 539.3v11.0M1125.5 537.7v11.0M1127.3 536.1v10.9M1129.0 534.6v10.9M1130.7 533.0v10.8M1132.4 531.4v10.8M1134.1 529.9v10.7M1135.7 528.3v10.7M1137.2 526.8v10.6M1138.8 525.2v10.6M1140.3 523.7v10.5M1141.8 522.1v10.5M1143.4 520.5v10.5M1144.9 518.9v10.4M1146.3 517.2v10.4M1147.8 515.6v10.4M1149.3 513.9v10.4M1150.7 512.3v10.3M1152.1 510.6v10.3M1153.5 508.9v10.3M1154.9 507.2v10.3M1156.2 505.4v10.3M1157.5 503.6v10.2M1158.8 501.8v10.2M1160.0 500.0v10.2M1161.2 498.2v10.2M1162.3 496.3v10.1M1163.5 494.4v10.1M1164.6 492.5v10.1M1165.6 490.6v10.1M1166.6 488.6v10.1M1167.6 486.6v10.0M1168.5 484.6v10.0M1169.3 482.6v10.0M1170.1 480.5v10.0M1170.8 478.5v9.9M1171.5 476.4v9.9M1172.1 474.2v9.9M1172.6 472.1v9.9M1173.0 469.9v9.8M1173.4 467.8v9.8M1173.8 465.6v9.8M1174.1 463.4v9.8M1174.3 461.2v9.8M1174.5 459.0v9.7M1174.6 456.8v9.7M1174.7 454.7v9.7M1174.7 452.5v9.7M1174.7 450.3v9.6M1174.6 448.1v9.6M1174.5 445.9v9.6M1174.2 443.7v9.6M1173.9 441.5v9.6M1173.4 439.4v9.5M1172.8 437.2v9.5M1172.2 435.1v9.5M1171.4 433.1v9.5M1170.6 431.0v9.5" fill="none" stroke="#0a7a0a" stroke-width="0.7" opacity="0.7"/><path d="M1031.9 384.9 1041.9 386.9 1055.9 398.9 1053.9 405.9 1039.9 402.9 1031.9 392.9Z" fill="#84f784" opacity="0.8"/><path d="M1048.7 384.4 1058.7 386.4 1072.7 398.4 1070.7 405.4 1056.7 402.4 1048.7 392.4Z" fill="#84f784" opacity="0.8"/><path d="M1078.1 383.2 1088.1 385.2 1102.1 397.2 1100.1 404.2 1086.1 401.2 1078.1 391.2Z" fill="#84f784" opacity="0.8"/><path d="M1094.9 382.4 1104.9 384.4 1118.9 396.4 1116.9 403.4 1102.9 400.4 1094.9 390.4Z" fill="#84f784" opacity="0.8"/><linearGradient id="rl" gradientUnits="userSpaceOnUse" x1="700" y1="720" x2="1120" y2="470"><stop offset="0" stop-color="#10457e"/><stop offset="0.6" stop-color="#0d3562"/><stop offset="1" stop-color="#081c30"/></linearGradient><path d="M620.9 713.2 624.7 711.6 628.5 709.9 632.3 708.3 636.1 706.7 639.8 705.1 643.6 703.5 647.4 701.8 651.2 700.2 655 698.6 658.8 697 662.6 695.4 666.4 693.7 670.2 692.1 673.9 690.5 677.7 688.9 681.5 687.3 685.3 685.7 689.1 684.2 692.9 682.6 696.7 681 700.5 679.5 704.2 677.9 708 676.3 711.8 674.8 715.6 673.2 719.4 671.7 723.2 670.1 727 668.6 730.8 667.1 734.6 665.5 738.4 664 742.1 662.5 745.9 660.9 749.6 659.4 753.4 657.9 757.1 656.4 761.1 654.8 765 653.1 769 651.5 772.9 650 776.8 648.4 780.7 646.8 784.6 645.2 788.4 643.6 792.3 642 796.2 640.5 800.1 638.9 804 637.2 808 635.6 811.9 634 815.9 632.3 819.9 630.6 823.6 629 827.3 627.4 831.2 625.7 835.2 624 839.2 622.3 843.3 620.5 847.4 618.7 851.4 616.9 855.5 615.1 859.5 613.4 863.4 611.6 867.2 609.9 870.9 608.3 874.5 606.7 877.9 605.2 881.2 603.8 884.2 602.4 887 601.2 889.6 600.1 891.8 599.1 893.7 598.3 895.5 597.6 897.1 596.9 898.6 596.3 900.2 595.6 901.8 594.9 903.4 594.2 905.2 593.4 907.2 592.5 910.4 590.9 913.9 589.2 917.5 587.4 921.3 585.4 925.3 583.4 929.2 581.3 933.2 579.2 937.2 577 941 574.9 944.8 572.8 948.4 570.8 952 568.7 955.6 566.5 959.2 564.4 962.7 562.3 966.3 560.1 969.7 558 973.2 555.8 976.5 553.7 979.8 551.6 982.7 549.8 985.5 548.1 988.2 546.4 990.9 544.7 993.5 542.9 996.2 541.2 998.9 539.4 1001.7 537.5 1004.5 535.6 1007.4 533.5 1010.6 531.2 1014 528.7 1017.4 526.1 1021 523.5 1024.6 520.7 1028.2 517.9 1031.8 515.1 1035.3 512.3 1038.8 509.6 1042.2 506.9 1045.4 504.3 1048.4 501.8 1051.3 499.5 1054 497.3 1056.8 495.1 1059.5 493 1062.1 490.9 1064.7 488.8 1067.1 486.6 1069.4 484.4 1071.6 482.2 1073.7 479.9 1075.2 478 1076.6 476.2 1078 474.3 1079.2 472.4 1080.4 470.4 1081.5 468.5 1082.5 466.6 1083.5 464.7 1084.3 462.7 1085.2 460.8 1085.9 459.1 1086.5 457.3 1087 455.5 1087.5 453.8 1088 452 1088.4 450.2 1088.7 448.5 1089 446.8 1089.2 445.1 1089.5 443.5 1089.6 442 1089.7 440.6 1089.8 439.2 1089.9 437.8 1089.9 436.4 1089.9 435 1089.9 433.6 1089.8 432.3 1089.6 430.9 1089.4 429.5 1089.2 428.1 1088.9 426.7 1088.6 425.3 1088.2 423.8 1087.8 422.4 1087.3 421 1086.8 419.6 1086.3 418.2 1085.6 416.9 1085 415.5 1084.2 414 1083.3 412.6 1082.4 411.1 1081.4 409.7 1080.4 408.3 1079.3 406.9 1078.2 405.6 1077 404.2 1075.8 402.9 1074.6 401.6 1073.1 400.1 1071.5 398.7 1069.8 397.3 1068.1 395.9 1066.4 394.5 1064.6 393.2 1062.8 391.9 1061 390.6 1059.2 389.3 1057.5 388 1055.7 386.7 1053.8 385.4 1052 384.2 1050.1 382.9 1048.2 381.7 1046.3 380.4 1044.5 379.2 1042.6 378 1040.7 376.7 1038.9 375.5 1036.9 378.3 1038.8 379.6 1040.7 380.8 1042.5 382.1 1044.4 383.3 1046.3 384.6 1048.1 385.8 1049.9 387.1 1051.8 388.4 1053.6 389.7 1055.3 391 1057.1 392.3 1058.9 393.6 1060.6 394.9 1062.4 396.2 1064.1 397.5 1065.8 398.8 1067.4 400.1 1069 401.5 1070.5 402.8 1071.8 404.2 1073 405.5 1074.1 406.8 1075.2 408 1076.3 409.3 1077.3 410.6 1078.2 412 1079.1 413.3 1080 414.6 1080.7 416 1081.4 417.3 1082 418.5 1082.6 419.8 1083.1 421 1083.5 422.3 1083.9 423.6 1084.3 424.9 1084.6 426.2 1084.9 427.5 1085.2 428.8 1085.4 430.1 1085.6 431.4 1085.7 432.6 1085.8 433.9 1085.8 435.1 1085.8 436.4 1085.8 437.7 1085.7 439 1085.6 440.3 1085.5 441.6 1085.3 442.9 1085.1 444.5 1084.9 446.1 1084.6 447.7 1084.3 449.4 1083.9 451 1083.5 452.7 1083 454.3 1082.5 456 1081.9 457.6 1081.2 459.2 1080.4 461 1079.6 462.8 1078.7 464.6 1077.7 466.4 1076.7 468.2 1075.6 470 1074.4 471.8 1073.1 473.6 1071.8 475.3 1070.3 477.1 1068.4 479.2 1066.4 481.2 1064.1 483.3 1061.8 485.3 1059.3 487.4 1056.7 489.5 1054 491.6 1051.2 493.7 1048.4 495.9 1045.6 498.2 1042.5 500.7 1039.3 503.3 1035.9 505.9 1032.4 508.6 1028.9 511.4 1025.3 514.2 1021.7 516.9 1018.1 519.6 1014.5 522.3 1011.1 524.8 1007.8 527.2 1004.6 529.5 1001.7 531.5 998.9 533.5 996.2 535.3 993.5 537 990.8 538.8 988.2 540.4 985.5 542.1 982.8 543.8 980 545.6 977.2 547.4 973.8 549.4 970.5 551.5 967.1 553.6 963.6 555.7 960.1 557.8 956.5 560 953 562.1 949.4 564.1 945.8 566.2 942.2 568.2 938.5 570.3 934.6 572.3 930.7 574.4 926.7 576.5 922.8 578.6 918.9 580.6 915.1 582.5 911.4 584.3 908 586 904.8 587.5 902.9 588.4 901.2 589.2 899.6 589.9 898 590.5 896.5 591.2 895 591.8 893.4 592.4 891.6 593.2 889.6 594 887.4 594.9 884.8 596.1 882 597.3 878.9 598.6 875.7 600.1 872.2 601.6 868.7 603.2 864.9 604.8 861.1 606.5 857.2 608.2 853.2 610 849.2 611.8 845.1 613.5 841 615.3 837 617.1 832.9 618.9 829 620.6 825.1 622.2 821.3 623.8 817.7 625.4 813.7 627.1 809.7 628.7 805.8 630.4 801.9 632 798 633.6 794.1 635.2 790.2 636.8 786.3 638.4 782.4 640 778.5 641.5 774.6 643.1 770.7 644.7 766.8 646.3 762.9 647.9 758.9 649.5 754.9 651.1 751.2 652.6 747.5 654.1 743.7 655.7 740 657.2 736.2 658.7 732.5 660.2 728.7 661.8 724.9 663.3 721.1 664.8 717.3 666.4 713.5 667.9 709.7 669.5 705.9 671 702.1 672.6 698.3 674.1 694.5 675.7 690.7 677.3 686.9 678.8 683.1 680.4 679.3 682 675.5 683.6 671.7 685.2 667.9 686.8 664.1 688.4 660.3 690 656.5 691.7 652.7 693.3 648.9 694.9 645.2 696.5 641.4 698.1 637.6 699.8 633.8 701.4 630 703 626.2 704.6 622.4 706.2 618.6 707.8Z" fill="#06121f"/><path d="M620.3 711.9 624.1 710.3 627.9 708.6 631.7 707 635.5 705.4 639.3 703.8 643.1 702.2 646.9 700.5 650.7 698.9 654.4 697.3 658.2 695.7 662 694 665.8 692.4 669.6 690.8 673.4 689.2 677.2 687.6 681 686 684.8 684.4 688.6 682.8 692.3 681.3 696.1 679.7 699.9 678.1 703.7 676.6 707.5 675 711.3 673.4 715.1 671.9 718.9 670.3 722.7 668.8 726.5 667.3 730.3 665.7 734.1 664.2 737.8 662.7 741.6 661.1 745.3 659.6 749.1 658.1 752.8 656.6 756.5 655 760.5 653.4 764.5 651.8 768.4 650.2 772.3 648.6 776.2 647 780.1 645.4 784 643.8 787.9 642.3 791.8 640.7 795.7 639.1 799.6 637.5 803.5 635.9 807.4 634.2 811.3 632.6 815.3 630.9 819.3 629.2 823 627.7 826.8 626 830.6 624.4 834.6 622.6 838.6 620.9 842.7 619.1 846.7 617.3 850.8 615.5 854.9 613.7 858.8 612 862.8 610.2 866.6 608.5 870.3 606.9 873.9 605.3 877.3 603.8 880.5 602.3 883.6 601 886.4 599.7 889 598.6 891.2 597.7 893.1 596.8 894.9 596.1 896.5 595.4 898 594.8 899.6 594.2 901.1 593.5 902.8 592.8 904.5 592 906.5 591 909.7 589.5 913.2 587.8 916.8 585.9 920.6 584 924.5 582 928.5 579.9 932.5 577.8 936.4 575.6 940.3 573.5 944 571.4 947.6 569.4 951.2 567.3 954.8 565.2 958.4 563 961.9 560.9 965.4 558.8 968.9 556.6 972.3 554.5 975.7 552.4 979 550.3 981.9 548.5 984.7 546.7 987.4 545 990 543.3 992.7 541.6 995.3 539.9 998 538.1 1000.8 536.2 1003.6 534.3 1006.5 532.2 1009.7 529.9 1013 527.4 1016.5 524.9 1020 522.2 1023.6 519.5 1027.2 516.7 1030.8 513.9 1034.3 511.1 1037.8 508.3 1041.1 505.6 1044.4 503 1047.4 500.5 1050.2 498.2 1053 496 1055.8 493.8 1058.4 491.7 1061 489.6 1063.6 487.5 1066 485.3 1068.2 483.2 1070.4 481 1072.4 478.8 1073.8 477 1075.2 475.1 1076.5 473.3 1077.7 471.4 1078.9 469.5 1079.9 467.7 1080.9 465.8 1081.9 463.9 1082.7 462 1083.5 460.1 1084.2 458.4 1084.8 456.7 1085.3 455 1085.8 453.3 1086.2 451.6 1086.6 449.9 1086.9 448.2 1087.2 446.5 1087.5 444.9 1087.7 443.2 1087.8 441.8 1088 440.5 1088.1 439.1 1088.1 437.7 1088.1 436.4 1088.1 435.1 1088.1 433.7 1088 432.4 1087.8 431.1 1087.6 429.8 1087.4 428.4 1087.1 427 1086.8 425.7 1086.5 424.3 1086.1 423 1085.6 421.6 1085.1 420.3 1084.6 418.9 1084 417.6 1083.4 416.3 1082.6 414.9 1081.8 413.5 1080.9 412.1 1080 410.7 1079 409.4 1077.9 408 1076.8 406.7 1075.7 405.4 1074.5 404.1 1073.3 402.8 1071.9 401.4 1070.3 400 1068.7 398.6 1067.1 397.2 1065.3 395.9 1063.6 394.6 1061.8 393.3 1060 392 1058.2 390.7 1056.5 389.4 1054.7 388.1 1052.8 386.8 1051 385.6 1049.1 384.3 1047.3 383.1 1045.4 381.8 1043.5 380.6 1041.7 379.4 1039.8 378.1 1037.9 376.9 1037.9 376.9 1039.7 378.2 1041.6 379.5 1043.5 380.7 1045.3 381.9 1047.2 383.2 1049.1 384.5 1050.9 385.7 1052.7 387 1054.5 388.3 1056.3 389.6 1058.1 390.9 1059.9 392.2 1061.6 393.5 1063.4 394.8 1065.2 396.1 1066.9 397.5 1068.5 398.8 1070.1 400.2 1071.7 401.6 1073.1 403 1074.3 404.3 1075.5 405.6 1076.6 406.9 1077.7 408.2 1078.7 409.6 1079.7 410.9 1080.6 412.3 1081.5 413.7 1082.3 415.1 1083 416.5 1083.6 417.8 1084.2 419.1 1084.7 420.4 1085.2 421.7 1085.6 423.1 1086 424.4 1086.4 425.8 1086.7 427.1 1086.9 428.5 1087.2 429.8 1087.3 431.2 1087.5 432.5 1087.6 433.8 1087.6 435.1 1087.6 436.4 1087.6 437.7 1087.5 439.1 1087.4 440.4 1087.3 441.8 1087.1 443.2 1086.9 444.8 1086.6 446.4 1086.4 448.1 1086 449.7 1085.6 451.4 1085.2 453.1 1084.7 454.8 1084.1 456.5 1083.5 458.2 1082.9 459.9 1082.1 461.7 1081.2 463.6 1080.3 465.4 1079.3 467.3 1078.2 469.1 1077 471 1075.8 472.8 1074.5 474.6 1073.1 476.4 1071.6 478.2 1069.7 480.4 1067.6 482.5 1065.3 484.6 1062.9 486.6 1060.4 488.7 1057.7 490.8 1055 492.9 1052.3 495 1049.4 497.2 1046.6 499.5 1043.5 502 1040.3 504.5 1036.9 507.2 1033.4 509.9 1029.9 512.7 1026.2 515.4 1022.6 518.2 1019 520.9 1015.5 523.5 1012 526.1 1008.7 528.5 1005.5 530.8 1002.6 532.8 999.8 534.8 997 536.6 994.4 538.4 991.7 540.1 989.1 541.8 986.4 543.5 983.7 545.2 980.9 546.9 978 548.7 974.7 550.8 971.3 552.8 967.9 555 964.4 557.1 960.9 559.2 957.3 561.3 953.8 563.4 950.2 565.5 946.6 567.6 943 569.6 939.3 571.6 935.4 573.7 931.4 575.8 927.5 577.9 923.5 580 919.6 582 915.8 583.9 912.2 585.7 908.7 587.4 905.5 589 903.6 589.9 901.8 590.6 900.2 591.3 898.7 592 897.1 592.6 895.6 593.2 894 593.9 892.2 594.6 890.2 595.5 888 596.4 885.4 597.5 882.6 598.7 879.6 600.1 876.3 601.5 872.9 603 869.3 604.6 865.6 606.2 861.7 607.9 857.8 609.6 853.8 611.4 849.8 613.1 845.7 614.9 841.6 616.7 837.6 618.5 833.5 620.2 829.6 621.9 825.7 623.6 821.9 625.2 818.3 626.8 814.3 628.5 810.3 630.1 806.4 631.8 802.4 633.4 798.5 635 794.6 636.6 790.7 638.2 786.9 639.7 783 641.3 779.1 642.9 775.2 644.5 771.3 646 767.4 647.6 763.4 649.2 759.5 650.8 755.5 652.5 751.8 654 748 655.5 744.3 657 740.5 658.5 736.8 660.1 733 661.6 729.2 663.1 725.4 664.6 721.6 666.2 717.8 667.7 714 669.3 710.2 670.8 706.4 672.4 702.6 673.9 698.8 675.5 695 677 691.2 678.6 687.4 680.2 683.6 681.8 679.9 683.3 676.1 684.9 672.3 686.5 668.5 688.1 664.7 689.7 660.9 691.3 657.1 693 653.3 694.6 649.5 696.2 645.7 697.8 641.9 699.4 638.1 701 634.3 702.7 630.5 704.3 626.7 705.9 623 707.5 619.2 709.1Z" fill="url(#rl)"/><path d="M653.4 723.9 657.2 722.3 660.9 720.6 664.6 719 668.4 717.4 672.1 715.7 675.9 714.1 679.6 712.4 683.4 710.8 687.1 709.2 690.8 707.5 694.6 705.9 698.3 704.3 702.1 702.6 705.8 701 709.6 699.4 713.4 697.8 717.1 696.1 720.9 694.5 724.7 692.9 728.4 691.3 732.2 689.7 735.9 688.2 739.6 686.6 743.4 685 747.1 683.5 750.9 681.9 754.7 680.3 758.5 678.7 762.3 677.1 766.2 675.4 770.1 673.8 774.1 672.1 778.1 670.4 782.1 668.6 785.7 667.1 789.3 665.5 793.1 663.9 796.9 662.3 800.7 660.6 804.7 658.9 808.6 657.2 812.6 655.5 816.6 653.8 820.7 652 824.7 650.3 828.7 648.5 832.7 646.8 836.6 645 840.5 643.3 844.4 641.6 848.1 640 851.8 638.3 855.4 636.7 858.9 635.1 862.3 633.5 865.6 632 868.7 630.5 873 628.5 877.2 626.5 881.1 624.5 884.9 622.6 888.6 620.7 892.2 618.8 895.7 617 899.1 615.2 902.5 613.5 905.9 611.7 909.3 610 912.4 608.4 915.6 606.9 918.6 605.4 921.6 604 924.5 602.5 927.5 601.1 930.5 599.6 933.5 598.1 936.6 596.6 939.8 594.9 943.4 593 947.1 591.1 950.9 589 954.8 587 958.6 584.9 962.5 582.8 966.3 580.6 970.1 578.5 973.7 576.4 977.3 574.3 980.5 572.4 983.5 570.5 986.5 568.7 989.4 566.8 992.3 564.9 995.2 563.1 998.2 561.2 1001.1 559.2 1004.2 557.2 1007.4 555.1 1010.7 553 1014.1 550.8 1017.7 548.5 1021.3 546.2 1025 543.9 1028.7 541.5 1032.4 539.1 1036 536.6 1039.7 534.2 1043.2 531.8 1046.6 529.3 1049.9 526.9 1053.3 524.4 1056.6 521.9 1059.9 519.4 1063.1 516.9 1066.2 514.4 1069.3 511.8 1072.3 509.3 1075.2 506.7 1077.9 504.2 1080.6 501.6 1082.7 499.5 1084.8 497.4 1086.8 495.2 1088.8 493 1090.7 490.9 1092.5 488.7 1094.2 486.6 1095.8 484.4 1097.4 482.3 1098.8 480.2 1099.9 478.6 1100.9 477 1101.9 475.4 1102.7 473.8 1103.6 472.2 1104.4 470.6 1105.1 469 1105.8 467.4 1106.5 465.8 1107.1 464.2 1107.7 462.5 1108.3 460.8 1108.8 459 1109.3 457.3 1109.8 455.5 1110.2 453.7 1110.6 452 1110.9 450.2 1111.2 448.5 1111.4 446.9 1111.5 445.4 1111.7 444 1111.8 442.7 1111.9 441.3 1111.9 439.9 1111.9 438.5 1111.8 437.1 1111.7 435.7 1111.6 434.3 1111.3 432.9 1111 431.2 1110.6 429.4 1110.1 427.7 1109.6 425.9 1109 424.1 1108.4 422.4 1107.7 420.6 1106.9 418.8 1106.1 417.1 1105.1 415.4 1104.1 413.6 1102.9 411.8 1101.6 409.9 1100.3 408.1 1098.9 406.4 1097.5 404.6 1096 402.9 1094.4 401.3 1092.9 399.7 1091.3 398.2 1089.7 396.8 1088.1 395.5 1086.4 394.2 1084.7 393 1082.9 391.8 1081.2 390.7 1079.4 389.6 1077.7 388.5 1075.9 387.4 1074.2 386.3 1072.4 385.1 1070.5 384 1068.7 382.8 1066.8 381.7 1064.9 380.6 1063.1 379.4 1061.2 378.3 1059.3 377.2 1057.4 376.1 1055.6 375 1053.8 377.8 1055.7 379 1057.5 380.1 1059.4 381.3 1061.3 382.4 1063.1 383.6 1065 384.7 1066.8 385.8 1068.6 387 1070.4 388.1 1072.2 389.3 1074 390.5 1075.7 391.6 1077.5 392.7 1079.2 393.8 1080.9 394.9 1082.5 396 1084.2 397.2 1085.7 398.4 1087.2 399.7 1088.7 401 1090.2 402.4 1091.7 403.9 1093.1 405.5 1094.5 407.2 1095.9 408.8 1097.2 410.5 1098.4 412.2 1099.6 413.9 1100.7 415.7 1101.7 417.4 1102.5 418.9 1103.2 420.5 1104 422.2 1104.6 423.8 1105.2 425.5 1105.7 427.1 1106.2 428.8 1106.6 430.4 1107 432 1107.3 433.5 1107.5 434.8 1107.6 436.1 1107.7 437.4 1107.7 438.6 1107.7 439.9 1107.7 441.1 1107.6 442.4 1107.5 443.7 1107.4 445 1107.2 446.3 1107 447.9 1106.7 449.5 1106.4 451.1 1106.1 452.8 1105.7 454.5 1105.2 456.1 1104.7 457.8 1104.2 459.4 1103.7 461.1 1103.1 462.6 1102.5 464.2 1101.8 465.7 1101.2 467.2 1100.5 468.7 1099.7 470.2 1098.9 471.7 1098.1 473.2 1097.2 474.7 1096.2 476.2 1095.2 477.8 1093.8 479.7 1092.3 481.8 1090.7 483.8 1089 485.9 1087.3 487.9 1085.4 490 1083.5 492.1 1081.5 494.2 1079.5 496.3 1077.4 498.4 1074.8 500.8 1072.1 503.3 1069.3 505.8 1066.3 508.2 1063.3 510.7 1060.2 513.2 1057 515.6 1053.7 518.1 1050.4 520.6 1047.1 523.1 1043.8 525.4 1040.4 527.8 1036.9 530.1 1033.3 532.5 1029.7 534.9 1026 537.3 1022.3 539.7 1018.6 542 1015 544.3 1011.4 546.5 1008 548.7 1004.6 550.9 1001.4 552.9 998.3 554.9 995.4 556.8 992.4 558.7 989.5 560.6 986.7 562.4 983.8 564.2 980.8 566.1 977.8 567.9 974.7 569.7 971.1 571.8 967.4 573.9 963.7 576 959.9 578.1 956.1 580.2 952.2 582.2 948.4 584.3 944.6 586.3 940.9 588.2 937.2 590.1 934.1 591.7 931.1 593.2 928.1 594.7 925.1 596.1 922.1 597.5 919.2 599 916.2 600.4 913.1 601.9 910 603.4 906.7 605 903.3 606.7 899.9 608.5 896.5 610.2 893.1 612 889.6 613.8 886 615.7 882.4 617.5 878.6 619.5 874.7 621.4 870.6 623.4 866.3 625.5 863.2 626.9 860 628.4 856.6 629.9 853.1 631.5 849.5 633.1 845.8 634.8 842.1 636.5 838.2 638.2 834.4 639.9 830.4 641.6 826.4 643.3 822.4 645.1 818.4 646.8 814.4 648.5 810.4 650.3 806.4 652 802.4 653.7 798.5 655.4 794.6 657 790.8 658.7 787.1 660.3 783.4 661.9 779.9 663.4 775.8 665.1 771.8 666.8 767.9 668.5 764 670.2 760.1 671.8 756.2 673.4 752.4 675 748.7 676.6 744.9 678.2 741.1 679.7 737.4 681.3 733.7 682.9 729.9 684.5 726.2 686 722.4 687.6 718.7 689.2 714.9 690.9 711.1 692.5 707.3 694.1 703.6 695.7 699.8 697.4 696 699 692.3 700.6 688.5 702.2 684.8 703.9 681 705.5 677.3 707.2 673.6 708.8 669.8 710.4 666.1 712.1 662.3 713.7 658.6 715.3 654.8 717 651.1 718.6Z" fill="#06121f"/><path d="M652.8 722.6 656.6 721 660.3 719.4 664.1 717.7 667.8 716.1 671.6 714.4 675.3 712.8 679.1 711.2 682.8 709.5 686.5 707.9 690.3 706.2 694 704.6 697.8 703 701.5 701.3 705.3 699.7 709 698.1 712.8 696.5 716.6 694.8 720.4 693.2 724.1 691.6 727.9 690 731.6 688.4 735.3 686.8 739.1 685.3 742.8 683.7 746.6 682.1 750.3 680.5 754.1 679 757.9 677.4 761.7 675.7 765.6 674.1 769.5 672.4 773.5 670.7 777.5 669 781.5 667.3 785.1 665.7 788.7 664.2 792.5 662.6 796.3 660.9 800.2 659.3 804.1 657.6 808 655.9 812 654.1 816.1 652.4 820.1 650.7 824.1 648.9 828.1 647.2 832.1 645.4 836 643.7 839.9 642 843.8 640.3 847.5 638.6 851.2 636.9 854.8 635.3 858.3 633.7 861.7 632.2 864.9 630.7 868.1 629.2 872.4 627.1 876.5 625.1 880.4 623.1 884.2 621.2 887.9 619.3 891.5 617.5 894.9 615.6 898.4 613.8 901.8 612.1 905.2 610.3 908.6 608.6 911.8 607 914.9 605.5 917.9 604 920.9 602.5 923.9 601.1 926.8 599.7 929.8 598.2 932.8 596.7 935.9 595.1 939 593.5 942.7 591.6 946.4 589.7 950.2 587.6 954 585.6 957.9 583.5 961.7 581.4 965.5 579.2 969.3 577.1 973 575 976.5 572.9 979.7 571 982.7 569.2 985.7 567.3 988.6 565.5 991.5 563.6 994.4 561.7 997.3 559.8 1000.3 557.9 1003.3 555.9 1006.5 553.8 1009.8 551.7 1013.3 549.4 1016.8 547.2 1020.4 544.9 1024.1 542.5 1027.8 540.1 1031.5 537.7 1035.2 535.3 1038.8 532.9 1042.3 530.4 1045.7 528 1049 525.7 1052.3 523.2 1055.6 520.6 1058.9 518.1 1062.1 515.6 1065.2 513.1 1068.3 510.6 1071.2 508 1074.1 505.5 1076.8 503 1079.4 500.4 1081.5 498.3 1083.6 496.2 1085.6 494 1087.5 491.9 1089.4 489.8 1091.2 487.6 1092.9 485.5 1094.5 483.4 1096 481.3 1097.4 479.3 1098.4 477.7 1099.4 476.1 1100.3 474.5 1101.2 473 1102 471.4 1102.8 469.9 1103.5 468.3 1104.2 466.7 1104.8 465.2 1105.5 463.5 1106.1 461.9 1106.6 460.2 1107.1 458.5 1107.6 456.8 1108 455.1 1108.4 453.3 1108.8 451.6 1109.1 449.9 1109.4 448.3 1109.6 446.6 1109.8 445.2 1109.9 443.9 1110 442.5 1110.1 441.2 1110.1 439.9 1110.1 438.6 1110 437.2 1109.9 435.9 1109.8 434.5 1109.6 433.2 1109.2 431.5 1108.9 429.9 1108.4 428.2 1107.9 426.4 1107.3 424.7 1106.7 423 1106 421.3 1105.3 419.6 1104.5 417.9 1103.6 416.3 1102.6 414.5 1101.4 412.7 1100.2 411 1098.9 409.2 1097.5 407.5 1096.1 405.8 1094.7 404.1 1093.2 402.5 1091.6 401 1090.1 399.5 1088.6 398.1 1087 396.8 1085.4 395.6 1083.7 394.4 1082 393.3 1080.2 392.1 1078.5 391 1076.8 389.9 1075 388.8 1073.3 387.7 1071.5 386.5 1069.6 385.4 1067.8 384.2 1065.9 383.1 1064.1 382 1062.2 380.9 1060.3 379.7 1058.5 378.6 1056.6 377.5 1054.7 376.4 1054.7 376.4 1056.5 377.6 1058.4 378.7 1060.3 379.9 1062.1 381 1064 382.1 1065.8 383.3 1067.7 384.4 1069.5 385.6 1071.3 386.7 1073.1 387.9 1074.9 389 1076.6 390.1 1078.4 391.2 1080.1 392.4 1081.8 393.5 1083.5 394.6 1085.2 395.8 1086.8 397.1 1088.4 398.3 1089.9 399.7 1091.4 401.2 1092.9 402.7 1094.4 404.4 1095.8 406 1097.2 407.7 1098.6 409.4 1099.9 411.2 1101.1 413 1102.2 414.7 1103.2 416.5 1104.1 418.1 1104.9 419.8 1105.6 421.5 1106.3 423.2 1106.9 424.9 1107.4 426.6 1107.9 428.3 1108.4 430 1108.7 431.6 1109 433.2 1109.2 434.6 1109.4 436 1109.5 437.3 1109.5 438.6 1109.5 439.9 1109.5 441.2 1109.4 442.5 1109.3 443.8 1109.2 445.2 1109 446.6 1108.8 448.2 1108.5 449.8 1108.2 451.5 1107.8 453.2 1107.4 454.9 1106.9 456.6 1106.4 458.3 1105.9 460 1105.3 461.6 1104.7 463.3 1104.1 464.9 1103.4 466.4 1102.8 468 1102 469.5 1101.3 471 1100.4 472.5 1099.6 474.1 1098.6 475.6 1097.7 477.2 1096.6 478.7 1095.2 480.8 1093.7 482.8 1092.1 484.9 1090.3 486.9 1088.6 489 1086.7 491.2 1084.8 493.3 1082.8 495.4 1080.7 497.5 1078.6 499.6 1075.9 502 1073.2 504.5 1070.3 507 1067.4 509.5 1064.3 512 1061.2 514.4 1058 516.9 1054.7 519.4 1051.4 521.9 1048 524.3 1044.7 526.7 1041.3 529.1 1037.8 531.5 1034.2 533.9 1030.5 536.3 1026.8 538.6 1023.1 541 1019.5 543.3 1015.8 545.6 1012.3 547.9 1008.8 550.1 1005.5 552.2 1002.3 554.3 999.2 556.3 996.2 558.2 993.3 560.1 990.4 561.9 987.5 563.8 984.6 565.6 981.6 567.4 978.6 569.2 975.5 571.1 971.9 573.2 968.2 575.3 964.5 577.4 960.7 579.5 956.8 581.6 953 583.6 949.1 585.7 945.3 587.7 941.6 589.6 938 591.5 934.8 593.1 931.8 594.6 928.8 596.1 925.8 597.5 922.8 599 919.8 600.4 916.8 601.8 913.8 603.3 910.7 604.8 907.4 606.4 904 608.1 900.6 609.8 897.2 611.6 893.8 613.4 890.3 615.2 886.7 617 883 618.9 879.3 620.8 875.3 622.8 871.2 624.8 866.9 626.8 863.8 628.3 860.6 629.8 857.2 631.3 853.7 632.9 850.1 634.5 846.4 636.2 842.7 637.8 838.8 639.5 835 641.2 831 643 827 644.7 823 646.4 819 648.2 815 649.9 811 651.6 807 653.3 803 655 799.1 656.7 795.2 658.4 791.4 660 787.7 661.6 784 663.2 780.5 664.7 776.4 666.5 772.4 668.2 768.4 669.9 764.5 671.5 760.6 673.1 756.8 674.8 753 676.3 749.2 677.9 745.5 679.5 741.7 681.1 738 682.6 734.2 684.2 730.5 685.8 726.7 687.4 723 688.9 719.2 690.6 715.4 692.2 711.7 693.8 707.9 695.4 704.1 697 700.4 698.7 696.6 700.3 692.9 701.9 689.1 703.5 685.4 705.2 681.6 706.8 677.9 708.4 674.1 710.1 670.4 711.7 666.6 713.3 662.9 715 659.1 716.6 655.4 718.2 651.7 719.9Z" fill="url(#rl)"/><path d="M714.7 742.2 718.6 740.4 722.5 738.7 726.5 737 730.4 735.2 734.4 733.5 738.4 731.7 742.3 730 746.2 728.3 750.1 726.6 753.9 724.9 757.6 723.2 761.1 721.6 767.1 719.1 773.4 716.6 779.9 714 785.9 711.4 791.2 708.8 795.3 706.2 797 704.5 798.1 702.9 798.8 701.6 799.2 700.6 799.6 700.1 800 699.7 801.6 699 804 698.5 806.8 698.1 809.9 697.9 812.9 697.7 815.6 697.5 817.5 697.4 819.4 697.4 821.5 697.4 823.5 697.4 825.6 697 827.7 695.7 828.5 693.4 828.4 691.8 827.9 690.4 827.4 689.3 826.8 688.2 826.1 687.1 824.8 685.6 823.2 684.2 821.6 682.9 820.3 681.8 819.7 681.3 819.9 682.7 819.1 683.9 819.6 683.7 821 683.5 822.9 683.4 825.1 683.3 827.1 683.3 831.3 683.5 836.8 684.4 842.8 685.4 848.7 686.4 853.9 686.9 857.9 686.5 859.6 685.8 860.8 685.1 861.8 684.2 862.7 683.2 863.4 681.7 863.1 678.8 861 676.9 857.9 675.6 854.4 674.5 850.8 673.4 847.6 672.4 845.4 671.3 844.5 670.5 843.4 669.6 842.4 668.6 841.8 667.9 841.6 667.7 841.3 669.3 841 669.6 842.3 669.3 844.7 669.1 847.6 669 850.8 668.9 853.8 668.9 859 669.4 865.3 670.4 872.2 671.7 878.7 672.8 884.2 673.4 888.1 673.1 889.7 672.3 890.6 671.6 891.3 670.8 891.9 669.7 892.2 668.5 891.6 666.2 889.9 664.4 887.1 662.9 884 661.5 880.7 660.2 877.8 659 875.7 657.8 874.7 657.1 873.5 656.2 872.5 655.4 871.8 654.7 871.7 654.7 871.4 656.9 870.8 657.3 872.3 657.2 875 657.1 878.1 657.2 881.4 657.2 884.3 657.1 886.9 657 889.6 656.9 892.3 656.7 895.1 656.5 897.8 656.1 900.4 655.3 902.4 654.4 904 653.2 905.3 652.1 906.5 651 907.7 650.1 909 649.3 911.6 648 914.8 646.8 918.3 645.6 921.9 644.3 925.6 643 929 641.5 932.1 640.1 935 638.6 937.8 637 940.5 635.5 943.3 633.9 946.1 632.4 951.2 629.4 955.2 627.4 959.2 625.4 963.3 623.3 967.3 621.3 971.2 619.2 975 617.2 978.7 615.3 982.3 613.3 986.3 611.1 990.3 608.8 994.2 606.6 998 604.4 1001.7 602.2 1005.4 600 1009 597.8 1012.6 595.6 1016.2 593.4 1019.8 591.2 1023.2 589.1 1026.6 587 1029.9 584.9 1033.3 582.8 1036.5 580.7 1039.8 578.6 1043.1 576.5 1046.3 574.4 1049.5 572.2 1052.7 570 1055.8 567.9 1058.9 565.7 1062 563.6 1065.1 561.4 1068.1 559.2 1071.1 556.9 1074.1 554.7 1077.1 552.5 1080.1 550.2 1083.1 547.9 1086 545.6 1088.9 543.3 1091.9 541 1094.8 538.7 1097.7 536.3 1100.6 533.9 1103.4 531.6 1106.2 529.2 1108.9 526.8 1111.6 524.4 1113.9 522.2 1116.2 520.1 1118.4 517.9 1120.6 515.8 1122.8 513.6 1124.9 511.4 1127 509.2 1129 507 1130.9 504.7 1132.7 502.4 1134.4 500.2 1136 498 1137.6 495.8 1139.1 493.5 1140.6 491.3 1141.9 489 1143.3 486.7 1144.5 484.4 1145.7 482.1 1146.7 479.9 1147.6 477.9 1148.4 475.9 1149.1 474 1149.7 472 1150.3 470 1150.9 468.1 1151.4 466.1 1151.8 464.2 1152.2 462.2 1152.5 460.3 1152.7 458.6 1152.9 456.8 1153.1 455.1 1153.2 453.3 1153.3 451.6 1153.3 449.8 1153.2 448.1 1153.1 446.4 1153 444.6 1152.7 442.9 1152.4 441.1 1152.1 439.4 1151.7 437.6 1151.2 435.8 1150.7 434.1 1150.1 432.3 1149.5 430.6 1148.8 428.9 1148 427.2 1147.2 425.5 1146.3 423.7 1145.3 421.9 1144.2 420.1 1143 418.4 1141.8 416.7 1140.6 414.9 1139.3 413.3 1137.9 411.6 1136.5 410 1135 408.4 1133.4 406.7 1131.6 405 1129.8 403.4 1127.9 401.8 1125.9 400.2 1124 398.7 1122 397.2 1120.1 395.8 1118.1 394.4 1116.2 393 1114.3 391.7 1112.4 390.4 1110.5 389.2 1108.6 388 1106.7 386.8 1104.8 385.6 1102.9 384.5 1101.1 383.4 1099.3 382.3 1097.6 381.3 1096.3 380.5 1094.9 379.7 1093.7 378.9 1092.4 378.1 1091.1 377.4 1089.9 376.7 1088.7 375.9 1087.5 375.2 1086.2 374.5 1085 373.7 1083.2 376.7 1084.5 377.4 1085.7 378.2 1086.9 378.9 1088.1 379.6 1089.4 380.4 1090.6 381.1 1091.9 381.9 1093.1 382.7 1094.4 383.5 1095.8 384.3 1097.5 385.4 1099.3 386.4 1101.1 387.6 1102.9 388.7 1104.8 389.8 1106.7 391 1108.5 392.2 1110.4 393.5 1112.2 394.7 1114 396 1115.9 397.4 1117.8 398.8 1119.8 400.2 1121.7 401.7 1123.6 403.2 1125.5 404.7 1127.3 406.3 1129 407.8 1130.6 409.4 1132.2 411 1133.6 412.5 1134.9 414.1 1136.2 415.7 1137.4 417.3 1138.6 418.9 1139.7 420.6 1140.8 422.3 1141.8 423.9 1142.7 425.6 1143.6 427.3 1144.3 428.9 1145 430.5 1145.7 432.1 1146.3 433.7 1146.8 435.3 1147.3 436.9 1147.7 438.6 1148.1 440.2 1148.4 441.9 1148.7 443.5 1148.9 445.1 1149 446.7 1149.1 448.3 1149.1 449.9 1149.1 451.5 1149 453.1 1148.9 454.7 1148.8 456.4 1148.6 458 1148.3 459.7 1148 461.5 1147.6 463.3 1147.2 465.1 1146.8 467 1146.2 468.8 1145.7 470.7 1145 472.5 1144.3 474.4 1143.6 476.3 1142.8 478.1 1141.8 480.2 1140.7 482.4 1139.5 484.6 1138.2 486.7 1136.9 488.9 1135.4 491.1 1134 493.3 1132.4 495.4 1130.9 497.5 1129.3 499.6 1127.5 501.8 1125.6 504 1123.7 506.2 1121.6 508.3 1119.6 510.4 1117.4 512.5 1115.3 514.7 1113 516.8 1110.7 518.9 1108.4 521 1105.8 523.3 1103.2 525.7 1100.4 528 1097.6 530.3 1094.8 532.7 1091.9 535 1088.9 537.3 1086 539.6 1083.1 541.8 1080.1 544.1 1077.2 546.4 1074.2 548.6 1071.2 550.8 1068.2 553 1065.2 555.2 1062.2 557.4 1059.2 559.5 1056.1 561.7 1053 563.8 1049.9 566 1046.7 568.1 1043.5 570.2 1040.3 572.3 1037.1 574.4 1033.8 576.5 1030.6 578.5 1027.2 580.6 1023.9 582.7 1020.6 584.7 1017.2 586.8 1013.6 589 1010 591.2 1006.4 593.4 1002.7 595.5 999.1 597.7 995.3 599.9 991.6 602.1 987.7 604.2 983.8 606.5 979.7 608.7 976.2 610.6 972.5 612.5 968.7 614.5 964.8 616.5 960.8 618.5 956.8 620.5 952.7 622.5 948.6 624.6 943.3 627.6 940.6 629.1 937.8 630.7 935.1 632.2 932.4 633.7 929.6 635.1 926.8 636.5 923.5 637.8 920.1 639.1 916.4 640.3 912.8 641.6 909.4 642.9 906.4 644.3 904.5 645.5 902.9 646.7 901.7 647.9 900.6 648.8 899.5 649.5 898.4 650.1 896.6 650.6 894.4 650.9 892 651.1 889.4 651.2 886.7 651.3 884.1 651.5 881.3 651.6 878.2 651.6 875 651.5 872 651.6 869.3 651.9 866.8 653.5 866.6 657 867.6 658.5 868.8 659.6 870 660.6 871.3 661.6 872.7 662.6 875.3 664 878.5 665.4 881.8 666.8 884.7 668 886.6 669 887 669.4 886.5 668.1 886.6 667.7 886.7 667.6 886.7 667.6 886.6 667.6 887.1 667.5 884.4 667.8 879.5 667.2 873.2 666.1 866.3 664.8 859.7 663.7 854.2 663.3 850.8 663.3 847.5 663.3 844.3 663.4 841.3 663.7 838.7 664.4 836.5 666.3 836.2 669.4 837.1 671.1 838.3 672.5 839.6 673.8 841 675 842.6 676.1 845.4 677.6 849 678.9 852.8 680 856.1 681 858.2 681.8 858.3 682 857.9 680.2 858 680 857.9 680.2 857.5 680.5 857 680.8 856.9 680.9 854 681.2 849.4 680.7 843.7 679.8 837.7 678.7 832 677.9 827.3 677.5 824.9 677.6 822.6 677.7 820.4 677.9 818.3 678.2 816.3 678.9 814.3 681.3 814.9 684.4 816.4 686 817.9 687.3 819.5 688.5 820.8 689.6 821.5 690.5 821.9 691.1 822.3 691.9 822.6 692.6 822.8 693.1 822.8 693 823.3 691.9 823.8 691.6 823.1 691.7 821.5 691.7 819.6 691.7 817.3 691.6 815.2 691.7 812.5 692 809.5 692.2 806.3 692.4 803 692.8 799.9 693.5 797.2 694.7 795.4 696.1 794.3 697.6 793.6 699 793.1 700.1 792.6 700.9 791.9 701.6 788.4 703.8 783.5 706.2 777.7 708.7 771.3 711.2 764.9 713.8 758.9 716.4 755.2 718 751.5 719.6 747.7 721.3 743.9 723 740 724.7 736.1 726.4 732.1 728.2 728.1 729.9 724.1 731.7 720.2 733.4 716.2 735.1 712.3 736.8Z" fill="#06121f"/><path d="M714.1 740.9 718 739.2 721.9 737.4 725.9 735.7 729.9 733.9 733.9 732.2 737.8 730.4 741.8 728.7 745.7 727 749.5 725.3 753.3 723.6 757 721.9 760.6 720.3 766.5 717.8 772.9 715.3 779.3 712.7 785.3 710.1 790.5 707.6 794.4 705.1 795.9 703.6 796.8 702.2 797.5 700.9 798 699.9 798.6 699.1 799.3 698.5 801.2 697.6 803.8 697.1 806.7 696.7 809.8 696.5 812.8 696.3 815.5 696 817.4 695.9 819.5 695.9 821.5 696 823.4 696 825.1 695.7 826.6 694.7 827.1 693.3 827 692.1 826.6 691 826.1 690 825.6 689 824.9 688 823.8 686.6 822.2 685.3 820.6 684 819.3 682.9 818.5 682.1 818.5 682.4 818.4 682.6 819.3 682.3 820.9 682.1 822.9 681.9 825 681.9 827.1 681.8 831.5 682.1 837 682.9 843 684 848.9 684.9 854 685.4 857.6 685.1 859 684.5 859.9 683.9 860.8 683.2 861.5 682.4 862 681.4 861.8 679.6 860.3 678.1 857.5 677 854 675.9 850.3 674.8 847 673.7 844.7 672.5 843.6 671.7 842.4 670.7 841.3 669.6 840.6 668.7 840.2 668.2 840.1 668.5 840.4 668.3 842 667.9 844.6 667.6 847.6 667.5 850.8 667.4 853.9 667.4 859.2 667.9 865.6 668.9 872.4 670.2 878.9 671.4 884.3 672 887.8 671.6 888.9 671.1 889.6 670.6 890.1 669.9 890.5 669.2 890.7 668.4 890.4 667 889 665.6 886.5 664.2 883.4 662.9 880.1 661.6 877.1 660.3 874.9 659.1 873.8 658.3 872.6 657.4 871.5 656.5 870.7 655.7 870.4 655.3 870.2 656 870.4 655.9 872.2 655.7 875 655.6 878.2 655.7 881.4 655.7 884.3 655.6 886.9 655.4 889.5 655.3 892.2 655.2 894.9 655 897.5 654.6 899.8 653.9 901.6 653 903 652 904.3 650.9 905.5 649.8 906.8 648.8 908.3 647.9 911 646.6 914.2 645.4 917.7 644.1 921.4 642.8 925 641.5 928.4 640.1 931.4 638.7 934.2 637.2 937 635.6 939.7 634.1 942.5 632.5 945.3 631 950.5 628 954.5 626 958.5 623.9 962.5 621.9 966.5 619.9 970.5 617.8 974.3 615.8 978 613.9 981.5 611.9 985.6 609.7 989.5 607.5 993.4 605.2 997.2 603 1000.9 600.8 1004.6 598.6 1008.2 596.4 1011.8 594.2 1015.4 592 1019 589.8 1022.4 587.7 1025.8 585.6 1029.1 583.6 1032.4 581.5 1035.7 579.4 1038.9 577.3 1042.2 575.2 1045.4 573 1048.6 570.9 1051.8 568.7 1054.9 566.6 1058 564.4 1061.1 562.3 1064.1 560.1 1067.2 557.9 1070.2 555.6 1073.2 553.4 1076.2 551.2 1079.1 548.9 1082.1 546.6 1085 544.4 1087.9 542.1 1090.9 539.7 1093.8 537.4 1096.7 535 1099.6 532.7 1102.4 530.3 1105.1 527.9 1107.8 525.6 1110.4 523.2 1112.7 521 1115 518.9 1117.3 516.7 1119.4 514.6 1121.6 512.4 1123.7 510.2 1125.7 508.1 1127.7 505.8 1129.6 503.6 1131.4 501.3 1133 499.2 1134.6 497 1136.2 494.8 1137.7 492.6 1139.1 490.3 1140.5 488.1 1141.7 485.8 1143 483.6 1144.1 481.4 1145.1 479.2 1145.9 477.2 1146.7 475.3 1147.4 473.4 1148 471.5 1148.6 469.5 1149.2 467.6 1149.6 465.7 1150 463.8 1150.4 461.9 1150.7 460 1150.9 458.3 1151.1 456.6 1151.3 454.9 1151.4 453.2 1151.5 451.5 1151.5 449.9 1151.4 448.2 1151.3 446.5 1151.2 444.8 1151 443.2 1150.7 441.5 1150.3 439.7 1149.9 438 1149.5 436.3 1149 434.6 1148.4 432.9 1147.8 431.2 1147.1 429.6 1146.4 427.9 1145.6 426.3 1144.7 424.6 1143.7 422.8 1142.7 421.1 1141.6 419.4 1140.4 417.7 1139.2 416 1137.9 414.4 1136.5 412.7 1135.2 411.1 1133.7 409.6 1132.1 407.9 1130.4 406.3 1128.6 404.7 1126.8 403.1 1124.9 401.6 1122.9 400.1 1121 398.6 1119 397.2 1117.1 395.8 1115.2 394.4 1113.3 393.1 1111.5 391.8 1109.6 390.6 1107.7 389.4 1105.8 388.2 1103.9 387.1 1102 385.9 1100.2 384.8 1098.5 383.8 1096.7 382.7 1095.4 381.9 1094.1 381.1 1092.8 380.3 1091.5 379.6 1090.3 378.8 1089.1 378.1 1087.8 377.4 1086.6 376.6 1085.4 375.9 1084.1 375.2 1084.1 375.2 1085.3 376 1086.6 376.7 1087.8 377.5 1089 378.2 1090.2 378.9 1091.5 379.7 1092.7 380.4 1094 381.2 1095.3 382 1096.7 382.9 1098.4 383.9 1100.1 385 1101.9 386.1 1103.8 387.2 1105.7 388.4 1107.6 389.6 1109.5 390.8 1111.3 392 1113.2 393.3 1115 394.6 1116.9 396 1118.9 397.4 1120.8 398.9 1122.8 400.3 1124.7 401.8 1126.6 403.4 1128.4 405 1130.2 406.5 1131.9 408.2 1133.5 409.8 1134.9 411.4 1136.2 413 1137.6 414.6 1138.8 416.2 1140 417.9 1141.2 419.6 1142.3 421.3 1143.3 423 1144.3 424.8 1145.2 426.5 1146 428.1 1146.7 429.8 1147.3 431.4 1148 433.1 1148.5 434.8 1149 436.5 1149.5 438.2 1149.8 439.8 1150.2 441.5 1150.4 443.2 1150.6 444.9 1150.8 446.5 1150.9 448.2 1150.9 449.9 1150.9 451.5 1150.8 453.2 1150.7 454.9 1150.6 456.6 1150.3 458.3 1150.1 460 1149.8 461.8 1149.4 463.7 1149 465.6 1148.5 467.4 1148 469.3 1147.4 471.2 1146.7 473.1 1146 475 1145.2 476.9 1144.4 478.8 1143.4 481 1142.2 483.2 1141 485.4 1139.7 487.6 1138.3 489.9 1136.9 492.1 1135.4 494.3 1133.8 496.4 1132.2 498.6 1130.6 500.7 1128.8 502.9 1126.9 505.1 1124.9 507.3 1122.9 509.5 1120.8 511.6 1118.6 513.7 1116.4 515.9 1114.2 518 1111.9 520.1 1109.6 522.2 1107 524.6 1104.3 526.9 1101.5 529.3 1098.7 531.6 1095.8 533.9 1092.9 536.2 1089.9 538.5 1087 540.8 1084 543.1 1081.1 545.4 1078.2 547.6 1075.2 549.9 1072.2 552.1 1069.2 554.3 1066.2 556.5 1063.1 558.7 1060.1 560.8 1057 563 1053.9 565.1 1050.8 567.3 1047.6 569.4 1044.4 571.5 1041.2 573.7 1037.9 575.7 1034.7 577.8 1031.4 579.9 1028.1 582 1024.8 584 1021.4 586.1 1018 588.2 1014.4 590.4 1010.8 592.6 1007.2 594.7 1003.5 596.9 999.9 599.1 996.1 601.3 992.4 603.4 988.5 605.6 984.5 607.8 980.5 610.1 977 612 973.3 613.9 969.5 615.9 965.5 617.9 961.5 619.9 957.5 621.9 953.5 624 949.4 626 944.1 629 941.4 630.5 938.6 632 935.9 633.6 933.1 635.1 930.3 636.5 927.4 637.9 924.1 639.3 920.6 640.6 916.9 641.8 913.4 643 910.1 644.3 907.1 645.7 905.4 646.8 903.9 647.9 902.7 649 901.5 650 900.3 650.9 899 651.5 896.9 652.1 894.6 652.4 892.1 652.7 889.4 652.8 886.7 652.9 884.1 653 881.4 653.1 878.2 653.1 875 653 872.1 653.1 869.7 653.4 868 654.4 868 656.4 868.7 657.5 869.8 658.5 870.9 659.4 872.2 660.4 873.5 661.3 875.9 662.7 879.1 664 882.4 665.4 885.4 666.6 887.5 667.8 888.2 668.6 888 668.2 888 668.3 887.9 668.4 887.7 668.7 887.4 668.9 887.4 669 884.4 669.3 879.3 668.7 872.9 667.6 866 666.3 859.5 665.2 854.1 664.8 850.8 664.7 847.5 664.8 844.4 664.9 841.6 665.2 839.3 665.8 837.7 667.1 837.6 669 838.3 670.3 839.3 671.5 840.5 672.7 841.9 673.8 843.3 674.9 846 676.2 849.5 677.5 853.2 678.6 856.6 679.6 858.9 680.5 859.6 681.2 859.3 680.6 859.2 680.8 858.9 681.2 858.4 681.7 857.7 682.1 857.2 682.3 854 682.7 849.2 682.2 843.5 681.3 837.5 680.2 831.8 679.3 827.3 679 825 679.1 822.7 679.1 820.6 679.3 818.7 679.6 817 680.2 815.7 681.6 816.2 683.6 817.4 684.9 818.9 686.2 820.4 687.4 821.8 688.6 822.7 689.6 823.1 690.4 823.6 691.3 824 692.1 824.2 692.7 824.3 693.1 824.4 692.9 824.2 693 823.2 693.1 821.5 693.2 819.5 693.1 817.4 693.1 815.3 693.2 812.6 693.4 809.6 693.6 806.4 693.9 803.3 694.3 800.4 694.9 797.9 695.9 796.5 697.1 795.6 698.4 794.9 699.6 794.3 700.8 793.7 701.8 792.8 702.7 789.1 705.1 784.1 707.5 778.2 710 771.8 712.6 765.4 715.1 759.4 717.7 755.8 719.3 752.1 720.9 748.3 722.6 744.5 724.3 740.6 726 736.6 727.7 732.7 729.4 728.7 731.2 724.7 732.9 720.7 734.7 716.8 736.4 712.9 738.1Z" fill="url(#rl)"/><path d="M751.2 754.1 754.9 752.4 758.4 750.7 761.1 750.2 766.9 747.3 772.7 744.4 778.4 741.6 784.1 738.8 789.6 736 794.9 733.3 799.5 730.9 804.1 728.5 808.6 726.1 812.9 723.8 816.8 721.7 820.2 719.8 821.8 718.9 823.4 718.2 824.9 717.4 826.5 716.5 827.9 715.5 829.4 714.2 830.5 712.6 831.1 711 831.5 709.6 831.8 708.6 832 708.1 832.1 708 833.1 707.5 834.6 707.1 836.7 706.9 839 706.8 841.5 706.8 843.9 706.8 846.8 707 850.2 707.5 853.8 708.1 857.3 708.7 860.6 708.9 863.3 708.3 864.9 707.3 865.7 706.4 866.4 705.4 866.9 704.1 867.1 702.8 866.5 700.6 864.6 698.7 862 697.4 859.2 696.4 856.3 695.3 854 694.3 852.5 693.3 851.9 692.6 851.1 691.6 850.4 690.6 850.1 689.8 850 689.5 849.5 690.6 849.5 690.7 851 690.4 853.7 690.3 856.9 690.4 860.5 690.5 863.8 690.7 869.5 691.5 876.5 692.9 884 694.7 891.2 696.2 897.3 697 901.5 696.6 903.4 695.6 904.4 694.6 905.1 693.5 905.5 692.3 905.7 690.8 904.7 688.4 902.1 686.4 897.9 684.9 892.7 683.5 887.3 682.2 882.3 680.8 878.6 679.4 876.6 678.4 874.3 677.2 872.3 676 870.7 675 870.1 674.4 870.2 676.3 869.5 677.2 870.9 676.9 873.6 676.6 876.9 676.5 880.6 676.5 884 676.5 889.8 677.2 897.2 678.6 905.5 680.4 913.8 682.2 921.4 683.7 927.7 684.4 931.8 684 933.7 683 934.6 682 935.3 680.9 935.7 679.7 935.8 678.3 935 676 932.4 673.9 928.3 672.2 923.2 670.6 917.7 669 912.7 667.5 908.8 666 906.3 664.9 903.7 663.7 901.3 662.5 899.3 661.5 898.5 660.8 898.7 662.6 898 663.7 899.4 663.3 902 662.9 905.1 662.6 908.4 662.4 911.2 662.2 914 662.2 917.1 662.6 920.4 663 923.8 663.4 927.2 663.4 930.4 662.9 932.6 661.8 934.4 660.5 935.7 659.2 936.9 657.9 938.1 656.8 939.4 655.9 942.7 654.1 946.6 652.2 951.1 650.3 955.8 648.4 960.5 646.4 965.4 644.3 969 641.3 972.3 639.5 976 637.5 979.7 635.5 983.4 633.5 987.2 631.4 990.9 629.4 994.7 627.3 998.5 625.2 1002.2 623.2 1005.8 621.1 1009.5 619.1 1013 617.1 1016.4 615.2 1019.8 613.2 1023.9 610.9 1027.8 608.5 1031.7 606.2 1035.5 604 1039.2 601.7 1042.9 599.5 1046.5 597.3 1050.1 595.1 1053.7 592.8 1057.3 590.6 1060.7 588.5 1064 586.5 1067.4 584.4 1070.8 582.3 1074.1 580.3 1077.3 578.2 1080.6 576.1 1083.7 574.1 1086.7 572 1089.7 570 1092.1 568.3 1094.4 566.6 1096.6 564.9 1098.7 563.3 1100.8 561.7 1102.9 560 1105 558.3 1107.1 556.5 1109.3 554.7 1111.5 552.8 1114.4 550.4 1117.4 547.8 1120.5 545.2 1123.6 542.5 1126.8 539.7 1129.9 536.9 1133 534 1136 531.2 1138.9 528.4 1141.6 525.6 1143.9 523.2 1146.2 520.8 1148.4 518.3 1150.5 515.9 1152.6 513.5 1154.6 511.1 1156.5 508.6 1158.4 506.2 1160.2 503.7 1161.8 501.2 1163.2 499 1164.6 496.8 1165.9 494.6 1167.1 492.4 1168.3 490.1 1169.4 487.9 1170.4 485.6 1171.4 483.3 1172.2 481 1173 478.7 1173.7 476.3 1174.3 473.9 1174.9 471.5 1175.3 469.1 1175.7 466.7 1176.1 464.3 1176.3 461.9 1176.5 459.6 1176.7 457.3 1176.8 455.1 1176.8 453.2 1176.8 451.4 1176.8 449.7 1176.7 447.9 1176.6 446.2 1176.4 444.5 1176.1 442.8 1175.9 441.1 1175.5 439.4 1175.1 437.7 1174.6 435.9 1174 434.1 1173.3 432.3 1172.6 430.5 1171.8 428.8 1171 427 1170.1 425.3 1169.2 423.6 1168.2 421.9 1167.2 420.3 1166 418.6 1164.8 417 1163.6 415.4 1162.2 413.8 1160.9 412.2 1159.4 410.7 1158 409.2 1156.5 407.7 1154.9 406.3 1153.4 404.9 1151.6 403.4 1149.8 402 1148 400.7 1146.1 399.4 1144.2 398.2 1142.2 396.9 1140.3 395.7 1138.4 394.5 1136.5 393.4 1134.6 392.2 1132.8 391 1130.9 389.7 1129 388.5 1127.1 387.3 1125.2 386.1 1123.3 384.9 1121.4 383.7 1119.6 382.6 1117.8 381.5 1116 380.5 1114.5 379.6 1113 378.8 1111.6 378 1110.1 377.3 1108.7 376.5 1107.3 375.8 1105.9 375.1 1104.5 374.4 1103.1 373.6 1101.7 372.9 1100.1 375.9 1101.5 376.7 1102.9 377.4 1104.3 378.1 1105.7 378.9 1107.1 379.6 1108.5 380.3 1109.9 381.1 1111.3 381.9 1112.8 382.7 1114.2 383.5 1116 384.6 1117.7 385.6 1119.6 386.8 1121.4 387.9 1123.3 389.1 1125.1 390.3 1127 391.6 1128.9 392.8 1130.7 394 1132.6 395.2 1134.5 396.5 1136.4 397.7 1138.3 398.9 1140.2 400.1 1142.1 401.3 1144 402.5 1145.8 403.8 1147.6 405.1 1149.2 406.4 1150.8 407.7 1152.3 409.1 1153.8 410.5 1155.2 411.9 1156.6 413.3 1157.9 414.8 1159.2 416.3 1160.5 417.8 1161.7 419.4 1162.8 420.9 1163.8 422.5 1164.8 424 1165.7 425.6 1166.6 427.2 1167.4 428.8 1168.2 430.4 1168.9 432.1 1169.5 433.7 1170.1 435.4 1170.7 437.1 1171.1 438.7 1171.5 440.3 1171.8 441.9 1172.1 443.4 1172.3 445 1172.5 446.6 1172.6 448.2 1172.7 449.8 1172.7 451.5 1172.7 453.2 1172.6 454.9 1172.5 457 1172.4 459.2 1172.2 461.5 1171.9 463.8 1171.6 466.1 1171.2 468.4 1170.7 470.7 1170.2 472.9 1169.6 475.2 1169 477.3 1168.2 479.5 1167.4 481.7 1166.5 483.9 1165.5 486 1164.4 488.2 1163.3 490.3 1162.1 492.4 1160.9 494.5 1159.5 496.7 1158.2 498.8 1156.6 501.2 1154.8 503.5 1153 505.9 1151.1 508.3 1149.2 510.6 1147.1 513 1145 515.3 1142.9 517.7 1140.6 520.1 1138.4 522.4 1135.7 525.1 1132.9 527.9 1129.9 530.7 1126.8 533.5 1123.7 536.2 1120.6 539 1117.4 541.7 1114.3 544.3 1111.4 546.8 1108.5 549.2 1106.2 551.1 1104.1 552.9 1101.9 554.6 1099.9 556.3 1097.8 557.9 1095.8 559.5 1093.7 561.1 1091.5 562.7 1089.3 564.3 1086.9 566 1084 568 1081 570 1077.9 572 1074.7 574.1 1071.5 576.1 1068.2 578.1 1064.8 580.2 1061.5 582.2 1058.1 584.3 1054.7 586.4 1051.1 588.6 1047.5 590.8 1043.9 593 1040.3 595.2 1036.6 597.4 1032.9 599.6 1029.1 601.9 1025.2 604.1 1021.3 606.4 1017.2 608.8 1013.9 610.7 1010.4 612.6 1006.9 614.6 1003.3 616.6 999.6 618.6 995.9 620.6 992.2 622.7 988.4 624.7 984.6 626.8 980.9 628.8 977.1 630.9 973.4 632.9 969.8 634.8 966 636.9 962.6 639.7 958.4 641.4 953.7 643.3 949 645.3 944.4 647.2 940.2 649.2 936.6 651.1 934.6 652.6 933 654 931.8 655.3 930.7 656.4 929.8 657.1 928.8 657.5 926.8 657.9 924.2 657.8 921.1 657.5 917.8 657 914.3 656.7 911 656.6 908 656.8 904.6 657 901.3 657.4 898.3 657.9 895.7 658.6 893.3 661.2 894.4 664.7 896.4 666.2 898.7 667.5 901.3 668.8 904 670 906.6 671.2 910.9 672.8 916.1 674.4 921.6 676 926.4 677.5 929.7 678.9 930.8 679.8 930.2 678.7 930.2 678.5 930.2 678.5 930.2 678.5 930.1 678.6 930.8 678.4 927.8 678.8 922.3 678.1 915 676.7 906.7 674.9 898.4 673 890.7 671.6 884.4 670.9 880.6 670.8 876.8 670.8 873.2 671 870 671.3 867.3 672 864.8 674.3 865.6 677.9 867.3 679.5 869.3 680.8 871.6 682.1 874 683.4 876.4 684.6 880.6 686.2 885.9 687.7 891.3 689 896.2 690.3 899.6 691.5 900.7 692.4 900 691.2 900 691 900 691 899.9 691.1 899.8 691.2 900.5 691 897.6 691.3 892.2 690.6 885.3 689.1 877.7 687.4 870.5 685.9 864.4 685.1 860.8 684.8 857.2 684.7 853.6 684.6 850.4 684.7 847.5 685.3 845.1 687 844.3 689.8 844.7 691.7 845.5 693.3 846.4 694.9 847.5 696.3 848.9 697.7 851.2 699.3 854.2 700.6 857.2 701.7 859.8 702.7 861.5 703.5 861.7 703.8 861.3 702.8 861.3 702.7 861.3 702.8 861.2 702.9 861.1 703 861.5 702.9 860.3 703.1 858 703 854.8 702.5 851.1 701.8 847.5 701.2 844.1 701 841.5 701 838.9 701.1 836.3 701.2 833.7 701.5 831.2 702.1 828.9 703.2 827.3 704.8 826.4 706.5 826 708 825.6 709.1 825.4 709.9 825 710.4 824.3 711 823.4 711.7 822.3 712.3 820.8 713 819.2 713.8 817.4 714.8 814.1 716.6 810.2 718.7 805.9 721 801.4 723.4 796.8 725.8 792.3 728.1 787 730.8 781.5 733.6 775.8 736.4 770.1 739.3 764.4 742.1 758.9 744.8 756.4 745.3 752.4 747.1 748.8 748.9Z" fill="#06121f"/><path d="M750.6 752.9 754.3 751.1 757.9 749.4 760.6 748.9 766.3 746 772 743.2 777.8 740.3 783.4 737.5 789 734.7 794.3 732 798.9 729.6 803.5 727.2 808 724.8 812.2 722.6 816.1 720.4 819.5 718.6 821.2 717.7 822.8 716.9 824.3 716.1 825.7 715.3 827 714.4 828.3 713.3 829.2 711.9 829.7 710.5 830.1 709.2 830.5 708.1 830.8 707.3 831.3 706.8 832.6 706.2 834.4 705.7 836.6 705.5 839 705.4 841.5 705.4 844 705.3 847 705.5 850.4 706.1 854 706.7 857.5 707.2 860.5 707.4 862.8 707 863.9 706.3 864.6 705.5 865.1 704.7 865.5 703.8 865.6 702.8 865.3 701.4 863.8 699.9 861.5 698.8 858.7 697.7 855.8 696.7 853.3 695.6 851.6 694.4 850.8 693.5 849.9 692.4 849.2 691.3 848.7 690.3 848.5 689.6 848.4 689.7 849 689.3 850.9 688.9 853.7 688.8 857 688.9 860.5 689.1 864 689.3 869.7 690 876.8 691.5 884.4 693.2 891.5 694.7 897.4 695.5 901.3 695.2 902.5 694.4 903.2 693.7 903.8 692.9 904.1 691.9 904.2 690.9 903.7 689.4 901.5 687.7 897.4 686.3 892.4 684.9 886.9 683.6 881.9 682.2 878 680.7 875.9 679.7 873.6 678.5 871.5 677.2 869.8 676.1 868.9 675.3 868.8 675.8 868.9 675.8 870.7 675.4 873.5 675.1 876.9 675 880.6 675 884.1 675 890 675.7 897.5 677.1 905.8 678.9 914.1 680.7 921.7 682.2 927.7 682.9 931.6 682.5 932.8 681.8 933.4 681.1 934 680.3 934.3 679.4 934.3 678.4 933.9 677 931.7 675.2 927.8 673.6 922.7 672 917.3 670.5 912.2 668.9 908.2 667.4 905.7 666.3 903 665.1 900.5 663.9 898.5 662.8 897.3 661.9 897.2 662.2 897.4 662.3 899.1 661.8 901.8 661.4 905 661.1 908.2 660.8 911.1 660.6 914.1 660.7 917.3 661 920.6 661.4 923.9 661.8 927.1 661.8 929.9 661.3 931.8 660.5 933.3 659.3 934.6 658.1 935.8 656.8 937.1 655.6 938.6 654.5 942 652.7 946 650.8 950.5 648.8 955.2 646.9 959.9 645 964.6 642.9 968.1 640 971.6 638.1 975.2 636.1 978.9 634.1 982.6 632.1 986.4 630 990.2 628 993.9 625.9 997.7 623.8 1001.4 621.8 1005.1 619.7 1008.7 617.7 1012.2 615.7 1015.7 613.8 1019 611.9 1023.1 609.5 1027 607.2 1030.9 604.9 1034.7 602.6 1038.4 600.4 1042.1 598.1 1045.7 595.9 1049.3 593.7 1052.9 591.5 1056.5 589.3 1059.8 587.2 1063.2 585.1 1066.6 583 1069.9 581 1073.2 578.9 1076.5 576.9 1079.7 574.8 1082.8 572.8 1085.8 570.7 1088.8 568.7 1091.1 567 1093.4 565.3 1095.6 563.7 1097.7 562 1099.8 560.4 1101.9 558.7 1103.9 557 1106 555.3 1108.2 553.5 1110.5 551.6 1113.3 549.1 1116.3 546.6 1119.4 543.9 1122.5 541.2 1125.7 538.4 1128.8 535.6 1131.9 532.8 1134.8 530 1137.7 527.2 1140.4 524.4 1142.7 522 1144.9 519.6 1147.1 517.2 1149.2 514.8 1151.3 512.4 1153.3 510 1155.2 507.6 1157 505.1 1158.7 502.7 1160.4 500.2 1161.8 498.1 1163.1 495.9 1164.4 493.7 1165.6 491.5 1166.7 489.3 1167.8 487.1 1168.8 484.9 1169.7 482.7 1170.6 480.4 1171.3 478.1 1172 475.8 1172.6 473.5 1173.1 471.2 1173.6 468.8 1174 466.4 1174.3 464.1 1174.5 461.7 1174.7 459.4 1174.9 457.2 1175 455 1175 453.2 1175 451.5 1175 449.7 1174.9 448 1174.8 446.4 1174.6 444.7 1174.4 443.1 1174.1 441.4 1173.7 439.8 1173.3 438.1 1172.8 436.4 1172.3 434.7 1171.6 432.9 1171 431.2 1170.2 429.5 1169.4 427.8 1168.5 426.1 1167.6 424.5 1166.7 422.9 1165.7 421.3 1164.6 419.7 1163.4 418 1162.2 416.5 1160.9 414.9 1159.5 413.4 1158.2 411.9 1156.7 410.4 1155.3 409 1153.7 407.5 1152.2 406.2 1150.5 404.8 1148.8 403.4 1147 402.1 1145.1 400.9 1143.2 399.6 1141.3 398.4 1139.4 397.2 1137.5 396 1135.5 394.8 1133.7 393.6 1131.8 392.4 1129.9 391.2 1128.1 389.9 1126.2 388.7 1124.3 387.5 1122.4 386.3 1120.6 385.2 1118.7 384.1 1116.9 383 1115.1 381.9 1113.7 381.1 1112.2 380.3 1110.8 379.5 1109.3 378.7 1107.9 378 1106.5 377.3 1105.1 376.6 1103.7 375.8 1102.3 375.1 1100.9 374.4 1100.9 374.4 1102.3 375.2 1103.7 375.9 1105.1 376.7 1106.5 377.4 1107.9 378.1 1109.3 378.9 1110.7 379.6 1112.1 380.4 1113.6 381.2 1115.1 382.1 1116.8 383.1 1118.6 384.2 1120.5 385.3 1122.3 386.5 1124.2 387.7 1126.1 388.9 1127.9 390.1 1129.8 391.4 1131.7 392.6 1133.5 393.8 1135.4 395 1137.3 396.2 1139.2 397.4 1141.2 398.6 1143.1 399.9 1144.9 401.1 1146.8 402.4 1148.6 403.7 1150.3 405 1152 406.4 1153.5 407.8 1155 409.2 1156.5 410.7 1157.9 412.1 1159.3 413.6 1160.6 415.2 1161.9 416.7 1163.1 418.3 1164.2 419.9 1165.3 421.5 1166.3 423.1 1167.3 424.7 1168.1 426.3 1169 428 1169.8 429.7 1170.5 431.4 1171.2 433.1 1171.8 434.8 1172.4 436.5 1172.9 438.3 1173.3 439.9 1173.6 441.5 1173.9 443.1 1174.1 444.8 1174.3 446.4 1174.4 448.1 1174.4 449.8 1174.5 451.5 1174.5 453.2 1174.4 455 1174.3 457.1 1174.2 459.4 1174 461.7 1173.7 464 1173.4 466.3 1173 468.7 1172.5 471 1172 473.4 1171.3 475.7 1170.7 477.9 1169.9 480.1 1169 482.4 1168.1 484.6 1167.1 486.8 1166 489 1164.8 491.1 1163.6 493.3 1162.4 495.4 1161 497.6 1159.6 499.8 1158 502.2 1156.2 504.6 1154.4 507 1152.5 509.4 1150.5 511.7 1148.4 514.1 1146.3 516.5 1144.1 518.9 1141.9 521.2 1139.6 523.6 1136.9 526.3 1134 529.1 1131 531.9 1127.9 534.7 1124.8 537.5 1121.6 540.2 1118.5 542.9 1115.4 545.5 1112.4 548 1109.5 550.4 1107.3 552.3 1105.1 554.1 1103 555.8 1100.9 557.5 1098.8 559.2 1096.7 560.8 1094.6 562.4 1092.4 564 1090.2 565.6 1087.8 567.3 1084.9 569.3 1081.9 571.4 1078.8 573.4 1075.6 575.4 1072.3 577.5 1069 579.5 1065.7 581.6 1062.3 583.6 1058.9 585.7 1055.5 587.7 1051.9 589.9 1048.3 592.1 1044.7 594.3 1041.1 596.5 1037.4 598.8 1033.7 601 1029.9 603.2 1026 605.5 1022.1 607.8 1018 610.1 1014.7 612 1011.2 614 1007.7 616 1004.1 618 1000.4 620 996.7 622 992.9 624.1 989.2 626.1 985.4 628.2 981.6 630.2 977.9 632.3 974.2 634.2 970.5 636.2 966.9 638.2 963.4 641.1 959.1 642.9 954.3 644.8 949.6 646.7 945.1 648.7 940.9 650.6 937.4 652.5 935.6 653.8 934.1 655.2 932.9 656.4 931.8 657.6 930.6 658.4 929.3 659.1 926.9 659.5 924.1 659.4 920.9 659.1 917.6 658.6 914.2 658.2 911.1 658.2 908.1 658.4 904.8 658.6 901.5 658.9 898.6 659.4 896.3 660 894.8 661.6 895.5 663.6 897.2 664.9 899.4 666.1 902 667.4 904.6 668.6 907.2 669.8 911.4 671.4 916.6 673 922 674.5 926.9 676.1 930.5 677.5 931.9 678.8 931.7 678.6 931.7 678.8 931.6 679.1 931.4 679.5 931.1 679.8 931 679.9 927.8 680.3 922.1 679.6 914.7 678.1 906.4 676.3 898.1 674.5 890.5 673 884.3 672.4 880.6 672.3 876.8 672.3 873.3 672.4 870.3 672.8 867.9 673.3 866.2 674.8 866.8 677 868.2 678.3 870.1 679.5 872.3 680.8 874.6 682.1 877 683.3 881.1 684.8 886.2 686.2 891.7 687.6 896.6 688.9 900.2 690.2 901.7 691.4 901.5 691.1 901.4 691.3 901.3 691.6 901.1 692 900.8 692.3 900.7 692.4 897.5 692.8 892 692 885 690.5 877.4 688.8 870.2 687.3 864.2 686.5 860.7 686.3 857.1 686.1 853.7 686 850.6 686.1 848 686.6 846.2 687.9 845.7 689.7 846.1 691.2 846.7 692.6 847.6 694 848.6 695.3 849.8 696.6 851.9 698 854.7 699.3 857.7 700.4 860.4 701.4 862.3 702.3 862.9 703 862.8 702.8 862.7 703.1 862.6 703.4 862.4 703.8 862.1 704.1 862 704.2 860.4 704.6 857.8 704.4 854.5 703.9 850.9 703.2 847.3 702.7 844 702.5 841.5 702.5 838.9 702.5 836.4 702.6 833.9 702.9 831.6 703.4 829.7 704.4 828.5 705.6 827.8 707 827.3 708.4 827 709.6 826.6 710.6 826.1 711.3 825.2 712.1 824.2 712.9 822.9 713.6 821.5 714.3 819.9 715.1 818.1 716 814.7 717.9 810.9 720 806.6 722.3 802.1 724.6 797.5 727 792.9 729.4 787.6 732.1 782.1 734.9 776.5 737.7 770.7 740.5 765 743.3 759.4 746.1 756.9 746.6 753 748.4 749.4 750.1Z" fill="url(#rl)"/><path d="M1092 379.8 1097 380 1101 382.2 1112 381.2 1120 383.4 1127 383.2 1133 385.6 1139.5 386.6 1140.5 391.8 1136 394.2 1128 392.6 1122 394.4 1112 392.4 1106 393.2 1098 390.6 1093.5 389.6 1091 384.5Z" fill="#04090f"/><path d="M1096 385 1108 387 1120 388.5 1134 389.5" fill="none" stroke="#12365f" stroke-width="0.9" opacity="0.8"/></g>
<path d="M1090 12h8l-4 4z" fill="#8a8a8a"/>
<path d="M1106 8.8l9 8.5M1115 8.8l-9 8.5" stroke="#8a8a8a" stroke-width="1.1" fill="none"/>
<path d="M571.5 354h8l-4 4z" fill="#8a8a8a"/>
<path d="M587 350.8l9 8.5M596 350.8l-9 8.5" stroke="#8a8a8a" stroke-width="1.1" fill="none"/>
<path d="M1180.5 354h8l-4 4z" fill="#8a8a8a"/>
<path d="M1196 350.8l9 8.5M1205 350.8l-9 8.5" stroke="#8a8a8a" stroke-width="1.1" fill="none"/>
<path d="M508.5 812.5l4.5 4.5l4.5-4.5" stroke="#404040" stroke-width="1" fill="none"/>
<path d="M592.5 812.5l4.5 4.5l4.5-4.5" stroke="#404040" stroke-width="1" fill="none"/>
<path d="M1116.5 812.5l4.5 4.5l4.5-4.5" stroke="#404040" stroke-width="1" fill="none"/>
<path d="M1200.5 812.5l4.5 4.5l4.5-4.5" stroke="#404040" stroke-width="1" fill="none"/>
<path d="M364.5 814.5l7-6.5v4h6v5h-6v4z" fill="#5d7080" stroke="#111" stroke-width="1" stroke-linejoin="miter"/>
<path d="M412.5 814.5l-7-6.5v4h-6v5h6v4z" fill="#5d7080" stroke="#111" stroke-width="1" stroke-linejoin="miter"/>
</svg>
</body></html>
